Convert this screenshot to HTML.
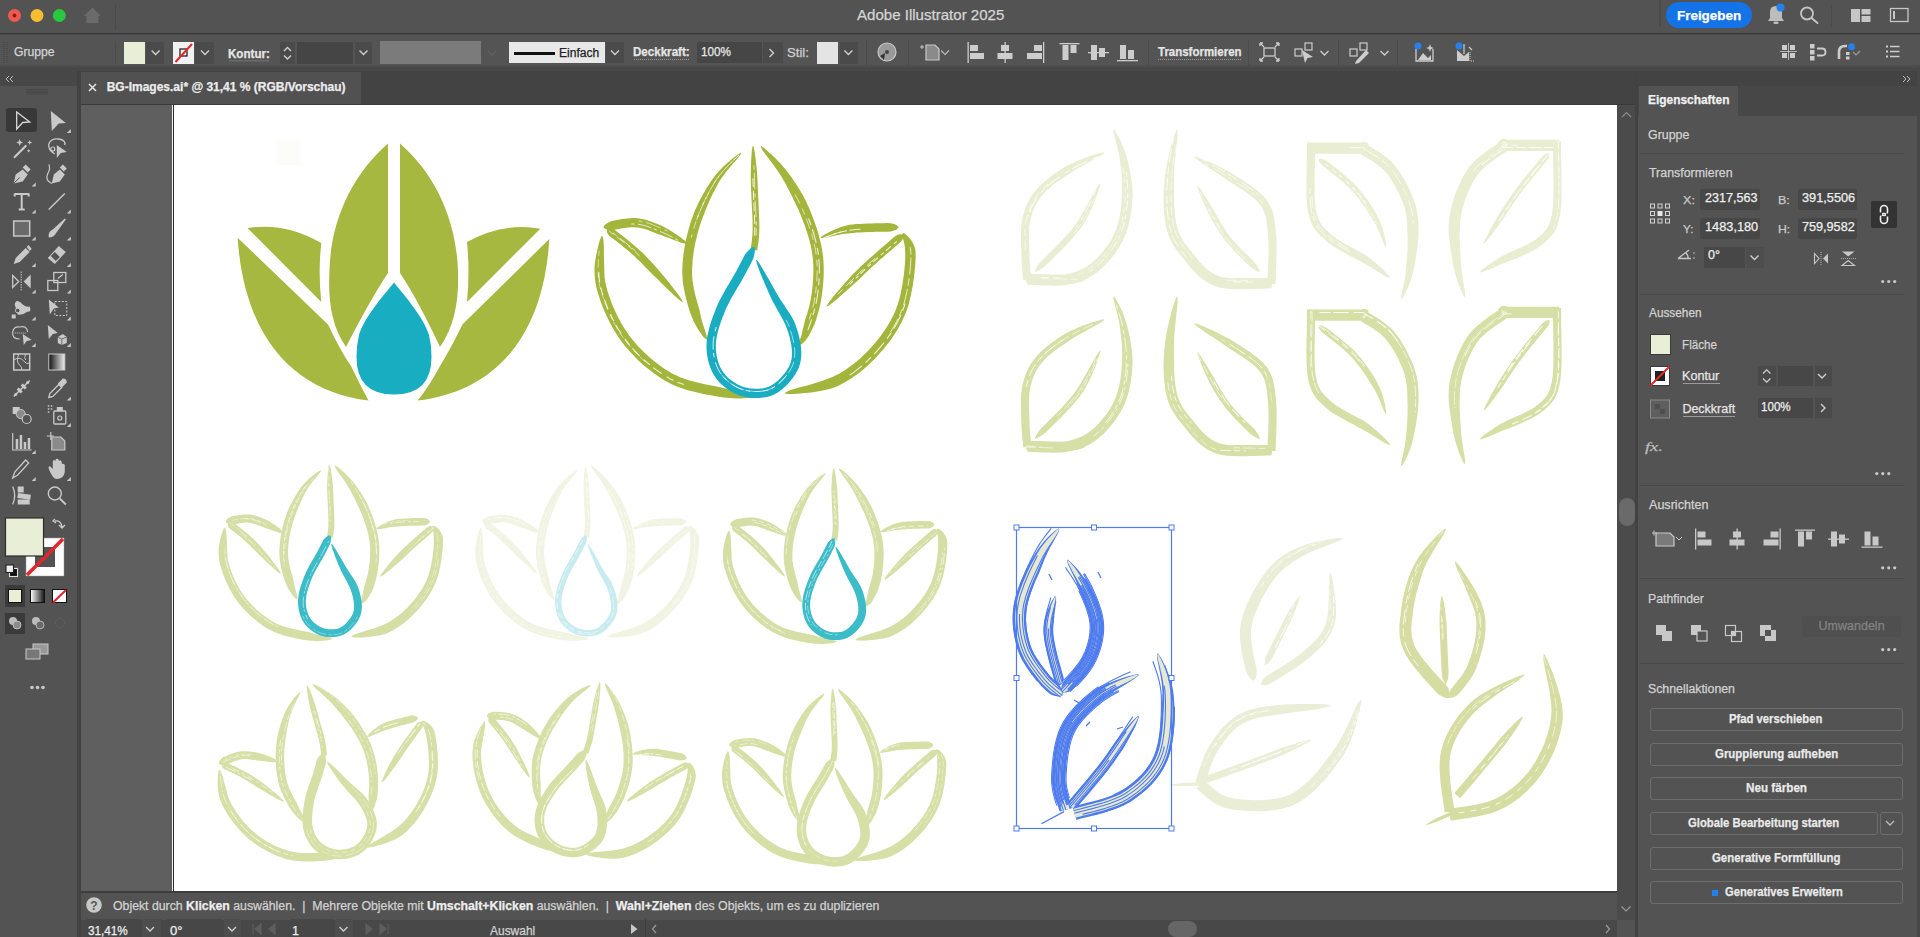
<!DOCTYPE html>
<html><head><meta charset="utf-8">
<style>
*{margin:0;padding:0;box-sizing:border-box}
html,body{width:1920px;height:937px;overflow:hidden;background:#535353;font-family:"Liberation Sans",sans-serif}
.a{position:absolute}
.t{position:absolute;white-space:nowrap}
.t b{font-weight:700;color:#eeeeee}
.t{-webkit-text-stroke:0.25px currentColor}
svg{position:absolute;left:0;top:0}
</style></head><body>
<div class="a" style="left:0px;top:0px;width:1920px;height:33px;background:#535353;"></div><div class="a" style="left:0px;top:33px;width:1920px;height:1px;background:#3a3a3a;"></div><div class="a" style="left:0px;top:34px;width:1920px;height:1px;background:#4a4a4a;"></div><div class="a" style="left:0px;top:35px;width:1920px;height:30px;background:#545454;"></div><div class="a" style="left:0px;top:65px;width:1920px;height:2px;background:#4d4d4d;"></div><div class="a" style="left:0px;top:67px;width:1920px;height:4px;background:#474747;"></div><div class="a" style="left:0px;top:71px;width:77px;height:866px;background:#535353;"></div><div class="a" style="left:0px;top:71px;width:77px;height:15px;background:#474747;"></div><div class="a" style="left:77px;top:71px;width:4px;height:866px;background:#424242;"></div><div class="a" style="left:81px;top:71px;width:1554px;height:34px;background:#434343;"></div><div class="a" style="left:81px;top:72px;width:280px;height:32px;background:#515151;"></div><div class="a" style="left:81px;top:104px;width:1554px;height:1px;background:#3a3a3a;"></div><div class="a" style="left:81px;top:105px;width:1536px;height:786px;background:#5f5f5f;"></div><div class="a" style="left:172px;top:105px;width:1px;height:786px;background:#f2f2f2;"></div><div class="a" style="left:173px;top:105px;width:1px;height:786px;background:#2e2e2e;"></div><div class="a" style="left:174px;top:105px;width:1443px;height:786px;background:#ffffff;"></div><div class="a" style="left:1617px;top:105px;width:18px;height:815px;background:#4b4b4b;"></div><div class="a" style="left:1617px;top:920px;width:18px;height:17px;background:#535353;"></div><div class="a" style="left:1635px;top:71px;width:3px;height:866px;background:#424242;"></div><div class="a" style="left:1638px;top:71px;width:282px;height:866px;background:#535353;"></div><div class="a" style="left:1638px;top:71px;width:282px;height:15px;background:#434343;"></div><div class="a" style="left:1638px;top:86px;width:282px;height:30px;background:#474747;"></div><div class="a" style="left:1639px;top:86px;width:99px;height:30px;background:#535353;"></div><div class="a" style="left:1917px;top:71px;width:3px;height:866px;background:#474747;"></div><div class="a" style="left:81px;top:891px;width:1536px;height:29px;background:#535353;"></div><div class="a" style="left:81px;top:891px;width:1536px;height:2px;background:#3e3e3e;"></div><div class="a" style="left:81px;top:920px;width:1536px;height:17px;background:#484848;"></div><div class="a" style="left:115px;top:4px;width:1px;height:26px;background:#4a4a4a;"></div><div class="a" style="left:1659px;top:0px;width:1.5px;height:27px;background:#4b4b4b;"></div><div class="a" style="left:1666px;top:2px;width:86px;height:26px;background:#1473e6;border-radius:13px"></div><div class="a" style="left:1831px;top:5px;width:1px;height:22px;background:#4a4a4a;"></div><div class="a" style="left:115px;top:42px;width:1px;height:22px;background:#4c4c4c;"></div><div class="a" style="left:124px;top:42px;width:21px;height:22px;background:#e9eed6;"></div><div class="a" style="left:146px;top:42px;width:18px;height:22px;background:#4a4a4a;"></div><div class="a" style="left:173px;top:42px;width:21px;height:22px;background:#f2f2f2;"></div><div class="a" style="left:195px;top:42px;width:19px;height:22px;background:#4a4a4a;"></div><div class="a" style="left:280px;top:42px;width:15px;height:22px;background:#4a4a4a;"></div><div class="a" style="left:297px;top:42px;width:56px;height:22px;background:#454545;"></div><div class="a" style="left:355px;top:42px;width:17px;height:22px;background:#4a4a4a;"></div><div class="a" style="left:380px;top:41px;width:101px;height:23px;background:#7b7b7b;"></div><div class="a" style="left:509px;top:42px;width:96px;height:21px;background:#e8e8e8;"></div><div class="a" style="left:514px;top:51.5px;width:41px;height:3px;background:#111111;"></div><div class="a" style="left:606px;top:42px;width:18px;height:21px;background:#4a4a4a;"></div><div class="a" style="left:697px;top:41.5px;width:65px;height:21.5px;background:#464646;"></div><div class="a" style="left:763px;top:41.5px;width:20px;height:21.5px;background:#4a4a4a;"></div><div class="a" style="left:816.5px;top:42px;width:21.5px;height:21.5px;background:#e4e4e4;"></div><div class="a" style="left:839.5px;top:42px;width:18px;height:21.5px;background:#4a4a4a;"></div><div class="a" style="left:866px;top:40px;width:1px;height:26px;background:#4a4a4a;"></div><div class="a" style="left:907.5px;top:40px;width:1px;height:26px;background:#4a4a4a;"></div><div class="a" style="left:1148px;top:40px;width:1px;height:26px;background:#4a4a4a;"></div><div class="a" style="left:1248px;top:40px;width:1px;height:26px;background:#4a4a4a;"></div><div class="a" style="left:1337.5px;top:40px;width:1px;height:26px;background:#4a4a4a;"></div><div class="a" style="left:1397px;top:40px;width:1px;height:26px;background:#4a4a4a;"></div><div class="a" style="left:6px;top:108px;width:31px;height:24px;background:#383838;border-radius:3px"></div><div class="a" style="left:5px;top:585px;width:20px;height:22px;background:#3a3a3a;"></div><div class="a" style="left:5px;top:613px;width:20px;height:21px;background:#3a3a3a;"></div><div class="a" style="left:1640px;top:152.5px;width:264px;height:1px;background:#484848;"></div><div class="a" style="left:1700px;top:189px;width:60px;height:20.5px;background:#474747;border-radius:2px"></div><div class="a" style="left:1798px;top:189px;width:59px;height:20.5px;background:#474747;border-radius:2px"></div><div class="a" style="left:1700px;top:217.5px;width:60px;height:21px;background:#474747;border-radius:2px"></div><div class="a" style="left:1798px;top:217.5px;width:59px;height:21px;background:#474747;border-radius:2px"></div><div class="a" style="left:1871px;top:201px;width:26px;height:27px;background:#333333;border-radius:2px"></div><div class="a" style="left:1703.5px;top:247px;width:41px;height:21px;background:#474747;"></div><div class="a" style="left:1745.5px;top:247px;width:18px;height:21px;background:#4d4d4d;"></div><div class="a" style="left:1640px;top:293.5px;width:264px;height:1px;background:#484848;"></div><div class="a" style="left:1650.5px;top:335px;width:19px;height:19px;background:#e9eed6;outline:1px solid #3a3a3a"></div><div class="a" style="left:1683.4px;top:383px;width:36.4px;height:1px;background:#9a9a9a;"></div><div class="a" style="left:1758px;top:366px;width:17.5px;height:20px;background:#4a4a4a;"></div><div class="a" style="left:1778px;top:366px;width:34.5px;height:20px;background:#474747;"></div><div class="a" style="left:1814.5px;top:366px;width:17.5px;height:20px;background:#4a4a4a;"></div><div class="a" style="left:1683.4px;top:415.5px;width:52.1px;height:1px;background:#9a9a9a;"></div><div class="a" style="left:1758px;top:398px;width:55px;height:20px;background:#474747;"></div><div class="a" style="left:1814.5px;top:398px;width:17.5px;height:20px;background:#4a4a4a;"></div><div class="a" style="left:1640px;top:485px;width:264px;height:1px;background:#484848;"></div><div class="a" style="left:1640px;top:577.5px;width:264px;height:1px;background:#484848;"></div><div class="a" style="left:1801.5px;top:615.5px;width:99px;height:21px;background:#4f4f4f;border-radius:3px"></div><div class="a" style="left:1640px;top:662.5px;width:264px;height:1px;background:#484848;"></div><div class="a" style="left:1649.5px;top:707.5px;width:253.5px;height:23.0px;background:transparent;border:1px solid #6e6e6e;border-radius:3px"></div><div class="a" style="left:1649.5px;top:742.5px;width:253.5px;height:23.0px;background:transparent;border:1px solid #6e6e6e;border-radius:3px"></div><div class="a" style="left:1649.5px;top:776.5px;width:253.5px;height:23.0px;background:transparent;border:1px solid #6e6e6e;border-radius:3px"></div><div class="a" style="left:1649.5px;top:811.5px;width:228.0px;height:23.0px;background:transparent;border:1px solid #6e6e6e;border-radius:3px"></div><div class="a" style="left:1879.5px;top:811.5px;width:23.5px;height:23.0px;background:transparent;border:1px solid #6e6e6e;border-radius:3px"></div><div class="a" style="left:1649.5px;top:846.5px;width:253.5px;height:23.0px;background:transparent;border:1px solid #6e6e6e;border-radius:3px"></div><div class="a" style="left:1649.5px;top:881px;width:253.5px;height:23px;background:transparent;border:1px solid #6e6e6e;border-radius:3px"></div><div class="a" style="left:1712.4px;top:889.5px;width:6px;height:6px;background:#2680eb;"></div><div class="a" style="left:1619px;top:498px;width:16px;height:28px;background:#6a6a6a;border-radius:8px"></div><div class="a" style="left:87px;top:919px;width:54px;height:18px;background:#474747;"></div><div class="a" style="left:141.5px;top:919px;width:19px;height:18px;background:#4d4d4d;"></div><div class="a" style="left:166.5px;top:919px;width:56.5px;height:18px;background:#474747;"></div><div class="a" style="left:223.5px;top:919px;width:17.5px;height:18px;background:#4d4d4d;"></div><div class="a" style="left:289.5px;top:919px;width:44.5px;height:18px;background:#474747;"></div><div class="a" style="left:334.5px;top:919px;width:18px;height:18px;background:#4d4d4d;"></div><div class="a" style="left:645px;top:918.5px;width:1px;height:19px;background:#3e3e3e;"></div><div class="a" style="left:1167.5px;top:921px;width:29px;height:16px;background:#666666;border-radius:8px"></div>
<svg width="1920" height="937" viewBox="0 0 1920 937">
<defs><clipPath id="abclip"><rect x="174" y="105" width="1443" height="786"/></clipPath></defs>
<g clip-path="url(#abclip)"><rect x="276" y="140" width="25" height="25" fill="#fcfdf8"/><path d="M388 143.5 L388 273 Q370 300 346 347 C331 325 328 300 329.5 270 C331 220 352 175 388 143.5 Z" fill="#a6b83f" /><path d="M400 143.5 L400 273 Q418 300 440 347 C455 325 459 300 458 270 C456 220 436 175 400 143.5 Z" fill="#a6b83f" /><path d="M247.5 228 Q285 222 321.3 243 Q318 272 321.3 302 Z" fill="#a6b83f" /><path d="M540.3 228.7 Q503 222 467 242 Q470 272 467 302 Z" fill="#a6b83f" /><path d="M237.6 237.7 L328 324.4 Q340 350 351 366 Q360 385 368.5 400.6 C300 392 245 345 237.6 237.7 Z" fill="#a6b83f" /><path d="M549.3 239 L462.6 324.3 Q450 350 440 366 Q430 385 417.7 400.6 C488 392 543 345 549.3 239 Z" fill="#a6b83f" /><path d="M394 282.5 C405 296 424 318 429 335 Q431.5 345 431.5 357 Q431.5 394.6 394 394.6 Q356.5 394.6 356.5 357 Q356.5 345 359 335 C364 318 383 296 394 282.5 Z" fill="#18adc1" /><path d="M740.8 152.8 L739.5 153.6 L737.9 154.6 L736.2 155.8 L734.4 157.3 L732.3 158.8 L730.2 160.6 L728.0 162.5 L725.7 164.5 L723.4 166.6 L721.1 168.9 L718.8 171.3 L716.7 173.7 L714.6 176.3 L712.6 178.9 L710.8 181.6 L709.0 184.4 L707.1 187.3 L705.3 190.4 L703.5 193.5 L701.7 196.8 L699.9 200.1 L698.2 203.4 L696.6 206.9 L695.0 210.3 L693.7 213.8 L692.4 217.3 L691.1 220.8 L690.0 224.3 L689.0 227.7 L688.1 231.2 L687.2 234.7 L686.3 238.3 L685.6 241.8 L684.9 245.4 L684.3 249.0 L683.7 252.6 L683.3 256.2 L682.9 259.7 L682.6 263.3 L682.4 266.7 L682.3 270.2 L682.3 273.6 L682.5 277.0 L682.7 280.4 L683.1 283.9 L683.7 287.2 L684.3 290.6 L685.0 293.9 L685.7 297.1 L686.5 300.2 L687.4 303.3 L688.2 306.3 L689.0 309.1 L689.8 311.8 L690.8 314.3 L691.7 316.7 L692.7 319.1 L693.7 321.4 L694.8 323.6 L695.9 325.6 L697.0 327.6 L698.2 329.5 L699.3 331.2 L700.4 332.8 L701.5 334.3 L702.5 335.7 L703.5 336.9 L704.5 337.9 L705.4 338.8 L706.3 339.4 L706.9 339.2 L707.0 338.0 L706.8 336.7 L706.5 335.3 L706.1 333.8 L705.6 332.2 L705.0 330.5 L704.4 328.7 L703.8 326.8 L703.2 324.9 L702.5 322.8 L701.9 320.7 L701.3 318.6 L700.8 316.4 L700.3 314.1 L699.8 311.6 L699.2 309.0 L698.4 306.3 L697.6 303.6 L696.8 300.7 L696.0 297.8 L695.2 294.8 L694.5 291.8 L693.9 288.7 L693.3 285.6 L692.8 282.5 L692.4 279.5 L692.2 276.4 L692.1 273.4 L692.1 270.3 L692.2 267.2 L692.4 263.9 L692.6 260.6 L693.0 257.3 L693.4 253.9 L693.9 250.6 L694.5 247.2 L695.1 243.8 L695.9 240.4 L696.7 237.0 L697.5 233.7 L698.4 230.4 L699.4 227.1 L700.4 223.9 L701.5 220.6 L702.8 217.3 L704.1 214.0 L705.4 210.6 L706.7 207.3 L708.1 203.9 L709.6 200.6 L711.0 197.4 L712.5 194.2 L714.1 191.2 L715.6 188.2 L717.1 185.4 L718.6 182.7 L720.1 180.2 L721.8 177.7 L723.6 175.2 L725.4 172.7 L727.4 170.3 L729.3 168.0 L731.2 165.7 L733.1 163.6 L734.9 161.5 L736.6 159.6 L738.1 157.8 L739.4 156.1 L740.5 154.6 L741.2 153.2Z" fill="#a3b53b"/><path d="M736.3 157.5 L733.1 160.6 L729.6 164.0 L725.9 167.9 L722.2 172.0 L718.7 176.3 L715.5 180.8 L712.6 185.5 L709.7 190.7 L706.8 196.2 L704.0 202.0 L701.3 207.9 L698.8 213.8 L696.6 219.8 L694.6 225.7 L692.9 231.6 L691.4 237.6" fill="none" stroke="#fff" stroke-width="0.71" stroke-dasharray="8.3 5.8 7.1 4.1" opacity="0.85"/><path d="M739.0 155.0 L736.3 157.6 L733.2 160.7 L729.6 164.1 L725.9 167.9 L722.2 172.0 L718.8 176.3 L715.6 180.8 L712.7 185.6 L709.8 190.8 L706.9 196.3 L704.1 202.0 L701.4 207.9 L698.9 213.9 L696.7 219.8" fill="none" stroke="#fff" stroke-width="0.87" stroke-dasharray="6.9 3.1 9.4 5.0" opacity="0.85"/><path d="M760.8 146.6 L761.4 148.1 L762.3 149.7 L763.5 151.4 L764.9 153.4 L766.4 155.4 L768.0 157.6 L769.7 159.9 L771.5 162.3 L773.3 164.7 L775.1 167.2 L776.9 169.7 L778.6 172.2 L780.2 174.7 L781.7 177.1 L783.1 179.6 L784.6 182.1 L786.0 184.8 L787.5 187.4 L788.9 190.2 L790.4 193.0 L791.8 195.8 L793.2 198.7 L794.5 201.5 L795.9 204.4 L797.3 207.2 L798.6 210.0 L799.8 212.9 L801.0 215.7 L802.1 218.5 L803.2 221.4 L804.3 224.2 L805.3 227.1 L806.3 230.1 L807.3 233.0 L808.2 235.9 L809.0 238.8 L809.8 241.8 L810.5 244.7 L811.1 247.6 L811.7 250.5 L812.2 253.4 L812.6 256.2 L812.9 259.1 L813.1 262.0 L813.3 264.9 L813.4 267.8 L813.4 270.8 L813.3 273.7 L813.2 276.7 L813.1 279.6 L812.8 282.6 L812.6 285.5 L812.3 288.3 L811.9 291.2 L811.6 294.0 L811.2 296.7 L810.7 299.4 L810.2 302.1 L809.6 304.8 L808.9 307.5 L808.1 310.3 L807.3 313.0 L806.5 315.7 L805.6 318.3 L804.8 320.9 L804.3 323.4 L803.7 325.8 L803.2 328.0 L802.7 330.1 L802.2 331.9 L801.9 333.5 L801.5 334.9 L801.1 336.2 L800.7 337.4 L800.3 338.4 L800.0 339.3 L799.6 340.2 L799.3 341.0 L798.9 341.7 L798.6 342.4 L798.4 343.1 L798.1 343.7 L798.0 344.4 L798.1 345.1 L798.5 345.5 L799.2 345.3 L799.8 345.1 L800.4 344.8 L801.0 344.5 L801.7 344.0 L802.4 343.5 L803.2 342.9 L804.0 342.1 L804.8 341.3 L805.7 340.3 L806.6 339.1 L807.5 337.8 L808.5 336.3 L809.4 334.7 L810.3 332.9 L811.3 331.0 L812.3 328.9 L813.4 326.6 L814.6 324.2 L815.5 321.6 L816.4 318.8 L817.2 316.0 L818.1 313.1 L818.9 310.2 L819.6 307.2 L820.3 304.2 L820.9 301.2 L821.4 298.3 L821.8 295.4 L822.2 292.5 L822.6 289.5 L822.9 286.5 L823.2 283.4 L823.4 280.3 L823.6 277.2 L823.7 274.0 L823.7 270.8 L823.7 267.7 L823.6 264.5 L823.5 261.3 L823.2 258.1 L822.8 255.0 L822.4 251.8 L821.9 248.7 L821.3 245.5 L820.6 242.4 L819.8 239.2 L819.0 236.1 L818.1 233.0 L817.2 229.9 L816.2 226.8 L815.1 223.7 L814.1 220.7 L812.9 217.7 L811.8 214.7 L810.6 211.7 L809.4 208.8 L808.0 205.8 L806.7 202.8 L805.2 199.8 L803.7 196.8 L802.1 194.0 L800.4 191.1 L798.7 188.3 L797.0 185.5 L795.2 182.8 L793.4 180.2 L791.7 177.6 L789.9 175.1 L788.1 172.7 L786.3 170.3 L784.3 167.9 L782.2 165.5 L780.1 163.1 L777.9 160.9 L775.7 158.6 L773.6 156.5 L771.4 154.5 L769.4 152.7 L767.5 151.0 L765.7 149.4 L764.1 148.1 L762.6 147.0 L761.2 146.2Z" fill="#a3b53b"/><path d="M794.9 194.1 L797.5 199.1 L800.0 204.1 L802.4 209.2 L804.5 214.2 L806.5 219.3 L808.4 224.4 L810.2 229.6 L811.8 234.8 L813.3 240.1 L814.5 245.3 L815.6 250.6 L816.3 255.8 L816.8 261.0 L817.1 266.3 L817.2 271.6 L817.0 276.9 L816.7 282.1 L816.2 287.3 L815.6 292.4 L814.9 297.3 L814.1 302.2 L812.9 307.1 L811.6 312.0 L810.1 316.9 L808.6 321.4" fill="none" stroke="#fff" stroke-width="0.76" stroke-dasharray="10.8 5.3 6.8 3.9" opacity="0.85"/><path d="M808.6 218.5 L810.5 223.7 L812.3 228.9 L813.9 234.2 L815.4 239.6 L816.6 244.9 L817.7 250.2 L818.5 255.5 L819.0 260.8 L819.3 266.2 L819.3 271.6 L819.2 277.0 L818.9 282.3 L818.4 287.5 L817.8 292.7 L817.1 297.6 L816.2 302.6 L815.0 307.6 L813.7 312.6 L812.2 317.5 L810.7 322.1 L809.2 326.4 L807.8 330.3" fill="none" stroke="#fff" stroke-width="1.03" stroke-dasharray="7.0 4.4 14.4 4.8" opacity="0.85"/><path d="M752.7 146.0 L752.3 147.8 L751.9 150.0 L751.7 152.6 L751.5 155.5 L751.3 158.7 L751.1 162.0 L751.0 165.6 L750.9 169.2 L750.8 172.8 L750.7 176.5 L750.8 180.1 L750.9 183.5 L751.0 186.8 L751.1 189.9 L751.3 192.9 L751.4 195.9 L751.5 198.9 L751.7 201.9 L751.8 204.9 L752.0 207.9 L752.1 210.8 L752.3 213.7 L752.4 216.4 L752.5 219.1 L752.6 221.7 L752.6 224.2 L752.6 226.5 L752.6 228.7 L752.6 230.7 L752.5 232.7 L752.4 234.6 L752.3 236.4 L752.1 238.2 L751.9 239.8 L751.8 241.4 L751.6 242.8 L751.4 244.2 L751.2 245.5 L751.0 246.7 L750.9 247.8 L750.8 248.8 L750.7 249.6 L757.3 250.4 L757.4 249.6 L757.5 248.7 L757.7 247.6 L757.8 246.5 L758.0 245.1 L758.2 243.7 L758.4 242.2 L758.6 240.5 L758.8 238.8 L759.0 237.0 L759.1 235.0 L759.2 233.0 L759.3 230.9 L759.4 228.7 L759.4 226.5 L759.3 224.0 L759.3 221.5 L759.2 218.9 L759.1 216.2 L759.0 213.4 L758.8 210.5 L758.7 207.6 L758.5 204.6 L758.4 201.6 L758.2 198.6 L758.1 195.6 L758.0 192.6 L757.9 189.7 L757.7 186.6 L757.6 183.3 L757.5 179.8 L757.3 176.3 L757.0 172.6 L756.7 169.0 L756.3 165.4 L755.9 161.9 L755.6 158.5 L755.2 155.4 L754.8 152.5 L754.3 150.0 L753.9 147.8 L753.3 146.0Z" fill="#a3b53b"/><path d="M752.9 178.2 L753.1 184.3 L753.3 189.8 L753.5 195.1 L753.7 200.3 L754.0 205.6 L754.2 210.7 L754.5 215.7 L754.6 220.4 L754.8 224.7 L754.8 228.7 L754.7 232.3 L754.5 235.7 L754.2 238.8" fill="none" stroke="#fff" stroke-width="1.01" stroke-dasharray="8.8 3.6 9.3 2.6" opacity="0.85"/><path d="M753.9 165.5 L754.2 171.8 L754.4 178.2 L754.6 184.3 L754.8 189.8 L755.0 195.0 L755.2 200.3 L755.5 205.5 L755.8 210.6 L756.0 215.6 L756.2 220.3 L756.3 224.7 L756.3 228.7 L756.2 232.4 L756.0 235.8" fill="none" stroke="#fff" stroke-width="0.80" stroke-dasharray="4.3 2.9 16.5 4.2" opacity="0.85"/><path d="M603.5 227.5 L605.1 228.7 L606.9 229.3 L608.9 229.6 L611.2 229.9 L613.6 229.9 L616.0 229.5 L618.5 229.0 L621.1 228.6 L623.6 228.1 L626.1 227.8 L628.6 227.5 L630.8 227.3 L632.9 227.2 L634.8 227.3 L636.5 227.4 L638.3 227.6 L639.9 227.9 L641.5 228.2 L643.1 228.6 L644.7 229.1 L646.3 229.6 L647.9 230.1 L649.5 230.7 L651.2 231.4 L652.9 232.0 L654.6 232.8 L656.4 233.5 L658.3 234.2 L660.2 234.8 L662.3 235.5 L664.5 236.4 L666.7 237.2 L669.1 238.1 L671.4 239.0 L673.8 239.9 L676.1 240.8 L678.3 241.6 L680.4 242.4 L682.3 243.0 L684.1 243.5 L685.7 243.8 L687.1 243.9 L687.3 243.3 L686.5 242.2 L685.4 241.1 L684.0 239.9 L682.3 238.7 L680.5 237.3 L678.6 236.0 L676.6 234.6 L674.4 233.2 L672.3 231.8 L670.1 230.4 L667.9 229.1 L665.8 227.9 L663.7 226.8 L661.7 225.8 L659.9 225.0 L658.1 224.3 L656.3 223.6 L654.6 222.9 L652.8 222.2 L651.0 221.5 L649.2 220.9 L647.4 220.3 L645.5 219.8 L643.6 219.3 L641.6 218.9 L639.5 218.5 L637.4 218.3 L635.2 218.1 L632.8 218.1 L630.3 218.2 L627.7 218.4 L625.0 218.7 L622.3 219.1 L619.6 219.5 L616.9 220.0 L614.3 220.5 L611.8 221.0 L609.6 221.9 L607.6 223.0 L605.9 224.1 L604.5 225.3 L603.5 226.9Z" fill="#a3b53b"/><path d="M631.2 224.0 L635.0 224.0 L638.3 224.3 L641.4 224.8 L644.4 225.5 L647.4 226.4 L650.3 227.5 L653.3 228.6 L656.3 229.9 L659.5 231.2 L663.0 232.7 L666.7 234.4 L670.7 236.4 L674.6 238.4 L678.3 240.4" fill="none" stroke="#fff" stroke-width="0.89" stroke-dasharray="3.3 3.3 14.1 2.7" opacity="0.85"/><path d="M638.7 220.9 L642.1 221.5 L645.3 222.3 L648.4 223.2 L651.5 224.3 L654.5 225.5 L657.6 226.8 L660.8 228.1 L664.3 229.6 L668.2 231.4" fill="none" stroke="#fff" stroke-width="0.66" stroke-dasharray="3.6 3.8 16.0 3.7" opacity="0.85"/><path d="M606.8 229.2 L606.9 231.8 L607.9 233.9 L609.3 235.8 L611.3 237.4 L613.5 239.0 L615.9 240.8 L618.4 242.8 L621.0 244.8 L623.6 246.9 L626.4 249.2 L629.1 251.5 L631.9 253.9 L634.6 256.3 L637.2 258.9 L640.0 261.6 L643.1 264.7 L646.4 268.2 L649.9 271.7 L653.6 275.4 L657.4 279.1 L661.1 282.8 L664.8 286.4 L668.4 289.9 L671.7 293.1 L674.9 296.0 L677.7 298.6 L680.3 300.7 L682.5 302.2 L682.9 301.8 L681.6 299.5 L679.8 296.7 L677.5 293.6 L674.9 290.2 L672.0 286.5 L669.0 282.6 L665.7 278.6 L662.3 274.5 L658.9 270.5 L655.5 266.5 L652.2 262.7 L648.8 259.2 L645.7 256.0 L642.8 253.1 L640.0 250.5 L637.1 247.9 L634.3 245.5 L631.4 243.1 L628.6 240.8 L625.9 238.6 L623.3 236.5 L620.7 234.5 L618.4 232.7 L616.1 231.0 L614.1 229.5 L611.9 228.6 L609.7 228.3 L607.2 228.8Z" fill="#a3b53b"/><path d="M609.3 231.2 L612.5 233.6 L616.4 236.5 L620.7 239.8 L625.3 243.5 L630.1 247.5 L635.0 251.7 L639.8 256.2" fill="none" stroke="#fff" stroke-width="0.81" stroke-dasharray="5.4 3.9 9.9 4.6" opacity="0.85"/><path d="M613.0 233.0 L616.9 235.9 L621.2 239.2 L625.8 242.9 L630.7 246.9 L635.6 251.1" fill="none" stroke="#fff" stroke-width="0.80" stroke-dasharray="4.6 4.1 13.4 2.3" opacity="0.85"/><path d="M601.7 236.0 L600.7 237.9 L599.8 240.3 L599.0 243.0 L598.2 246.1 L597.4 249.5 L596.6 253.2 L595.9 257.1 L595.2 261.1 L594.7 265.3 L594.5 269.6 L594.6 273.9 L594.9 278.2 L595.5 282.5 L596.2 286.6 L597.2 290.5 L598.4 294.5 L599.7 298.6 L601.1 302.7 L602.7 306.8 L604.4 311.0 L606.2 315.1 L608.2 319.2 L610.2 323.3 L612.4 327.3 L614.7 331.2 L617.1 335.0 L619.5 338.7 L622.1 342.2 L624.8 345.7 L627.6 349.0 L630.5 352.3 L633.6 355.6 L636.7 358.8 L640.0 361.9 L643.3 364.9 L646.8 367.8 L650.3 370.6 L653.8 373.2 L657.4 375.8 L661.0 378.2 L664.7 380.4 L668.4 382.5 L672.2 384.4 L676.3 386.2 L680.4 387.8 L684.6 389.2 L688.8 390.4 L693.1 391.6 L697.3 392.6 L701.5 393.5 L705.6 394.4 L709.6 395.1 L713.4 395.8 L717.0 396.5 L720.5 397.0 L723.7 397.4 L726.9 397.8 L730.1 398.1 L733.2 398.3 L736.1 398.4 L739.0 398.4 L741.7 398.4 L744.3 398.3 L746.7 398.1 L749.0 397.9 L751.0 397.7 L752.9 397.4 L754.7 397.1 L756.2 396.8 L757.5 396.3 L757.5 395.7 L756.3 395.0 L754.8 394.5 L753.1 394.1 L751.2 393.7 L749.1 393.4 L746.9 393.0 L744.6 392.6 L742.1 392.2 L739.5 391.7 L736.9 391.2 L734.1 390.7 L731.3 390.1 L728.4 389.4 L725.5 388.6 L722.3 387.7 L718.8 386.9 L715.2 386.2 L711.4 385.5 L707.5 384.8 L703.5 384.0 L699.5 383.1 L695.5 382.1 L691.5 381.1 L687.5 379.9 L683.7 378.6 L679.9 377.2 L676.4 375.6 L673.0 373.9 L669.7 372.0 L666.3 369.9 L662.9 367.7 L659.6 365.3 L656.2 362.8 L653.0 360.2 L649.7 357.5 L646.6 354.7 L643.5 351.8 L640.6 348.8 L637.7 345.8 L635.0 342.7 L632.4 339.5 L629.9 336.4 L627.6 333.1 L625.3 329.7 L623.0 326.2 L620.9 322.5 L618.9 318.7 L616.9 314.9 L615.1 311.0 L613.3 307.1 L611.7 303.2 L610.3 299.3 L608.9 295.5 L607.7 291.7 L606.7 288.0 L605.8 284.4 L605.1 281.0 L604.6 277.3 L604.4 273.5 L604.3 269.6 L604.2 265.6 L604.1 261.6 L604.0 257.7 L603.9 253.9 L603.9 250.2 L603.8 246.7 L603.7 243.5 L603.5 240.6 L603.1 238.1 L602.3 236.0Z" fill="#a3b53b"/><path d="M599.2 250.6 L598.6 257.3 L598.2 264.4 L598.1 271.7 L598.6 278.9 L599.7 285.8 L601.5 292.5 L603.7 299.4 L606.4 306.5 L609.4 313.6 L612.9 320.6 L616.6 327.5 L620.6 334.0 L624.9 340.1 L629.6 345.9 L634.6 351.6 L640.0 357.0 L645.7 362.2" fill="none" stroke="#fff" stroke-width="0.62" stroke-dasharray="5.3 3.2 8.7 4.7" opacity="0.85"/><path d="M598.7 271.7 L599.2 278.9 L600.3 285.7 L602.0 292.3 L604.3 299.2 L606.9 306.3 L610.0 313.4 L613.4 320.4 L617.1 327.2 L621.1 333.7 L625.4 339.7 L630.0 345.5 L635.0 351.1 L640.4 356.6 L646.1 361.7 L651.9 366.6 L658.0 371.1 L664.1 375.2 L670.4 378.9 L676.9 382.0 L683.8 384.6" fill="none" stroke="#fff" stroke-width="1.08" stroke-dasharray="10.3 5.8 7.8 4.5" opacity="0.85"/><path d="M820.8 238.0 L822.1 238.1 L823.6 238.0 L825.2 237.7 L827.0 237.4 L829.0 237.0 L831.0 236.5 L833.2 236.0 L835.5 235.5 L837.8 235.0 L840.3 234.5 L842.8 234.1 L845.3 233.7 L847.9 233.4 L850.6 233.2 L853.4 232.9 L856.7 232.6 L860.2 232.4 L864.1 232.2 L868.0 232.0 L872.1 231.9 L876.2 231.8 L880.2 231.8 L884.0 231.7 L887.7 231.7 L891.0 231.5 L894.0 230.5 L896.5 229.4 L898.5 227.5 L898.5 226.9 L896.4 225.1 L893.9 224.1 L890.9 223.2 L887.6 223.1 L883.9 223.2 L880.0 223.2 L876.0 223.3 L871.9 223.4 L867.7 223.5 L863.7 223.7 L859.8 223.9 L856.0 224.1 L852.6 224.4 L849.4 224.8 L846.6 225.5 L843.8 226.2 L841.1 227.1 L838.5 228.0 L836.0 228.9 L833.7 229.9 L831.4 230.9 L829.4 231.9 L827.5 232.9 L825.7 233.9 L824.1 234.8 L822.8 235.7 L821.6 236.5 L820.6 237.4Z" fill="#a3b53b"/><path d="M825.9 237.1 L829.1 235.9 L832.7 234.6 L836.7 233.3 L840.9 232.0 L845.5 231.0 L850.2 230.2 L855.6 229.6 L862.0 229.2" fill="none" stroke="#fff" stroke-width="1.03" stroke-dasharray="11.1 2.6 8.4 2.4" opacity="0.85"/><path d="M823.2 238.0 L825.9 237.0 L829.1 235.8 L832.7 234.5 L836.6 233.2 L840.9 231.9" fill="none" stroke="#fff" stroke-width="0.96" stroke-dasharray="5.9 5.2 7.6 3.7" opacity="0.85"/><path d="M902.7 233.3 L902.3 234.5 L902.4 235.8 L902.6 237.0 L902.9 238.4 L903.3 239.7 L903.7 241.1 L904.1 242.6 L904.4 244.2 L904.7 245.8 L904.9 247.5 L905.0 249.3 L905.1 251.2 L905.3 253.3 L905.3 255.6 L905.2 258.3 L905.1 261.4 L904.8 264.9 L904.5 268.5 L904.1 272.4 L903.6 276.4 L903.0 280.5 L902.4 284.7 L901.6 288.8 L900.8 292.9 L899.9 296.9 L898.9 300.7 L897.8 304.3 L896.6 307.6 L895.4 310.8 L894.0 314.0 L892.5 317.1 L890.9 320.1 L889.2 323.1 L887.4 326.1 L885.6 329.0 L883.7 331.8 L881.7 334.6 L879.6 337.4 L877.5 340.1 L875.3 342.7 L873.0 345.3 L870.8 347.8 L868.5 350.3 L866.1 352.7 L863.7 355.1 L861.2 357.4 L858.7 359.7 L856.1 361.9 L853.4 364.0 L850.7 366.1 L848.0 368.1 L845.2 370.0 L842.4 371.8 L839.5 373.4 L836.5 375.0 L833.5 376.5 L830.4 377.8 L827.0 379.1 L823.3 380.5 L819.4 381.8 L815.4 383.1 L811.3 384.3 L807.2 385.4 L803.1 386.5 L799.3 387.6 L795.6 388.6 L792.3 389.6 L789.3 390.6 L786.8 391.7 L784.8 392.9 L785.0 393.5 L787.2 393.9 L789.9 393.9 L793.0 393.9 L796.5 393.7 L800.3 393.5 L804.3 393.1 L808.6 392.7 L812.9 392.2 L817.3 391.5 L821.7 390.7 L826.0 389.8 L830.2 388.8 L834.2 387.5 L837.9 385.9 L841.2 384.3 L844.5 382.5 L847.7 380.6 L850.9 378.7 L853.9 376.6 L856.9 374.4 L859.9 372.2 L862.7 369.9 L865.5 367.5 L868.2 365.1 L870.9 362.6 L873.5 360.0 L876.0 357.4 L878.4 354.8 L880.8 352.1 L883.2 349.4 L885.5 346.6 L887.8 343.7 L890.0 340.8 L892.2 337.8 L894.2 334.7 L896.3 331.6 L898.2 328.3 L900.0 325.1 L901.8 321.7 L903.4 318.3 L904.9 314.8 L906.4 311.2 L907.7 307.4 L908.9 303.5 L909.9 299.3 L910.9 295.1 L911.8 290.8 L912.6 286.4 L913.3 282.0 L913.9 277.8 L914.4 273.6 L914.8 269.5 L915.2 265.7 L915.4 262.1 L915.6 258.7 L915.7 255.6 L915.6 252.7 L915.4 249.9 L914.7 247.3 L913.8 245.0 L912.8 242.9 L911.7 241.1 L910.6 239.4 L909.4 238.0 L908.3 236.8 L907.2 235.7 L906.2 234.9 L905.3 234.1 L904.4 233.5 L903.3 233.1Z" fill="#a3b53b"/><path d="M905.1 303.5 L903.0 309.9 L900.5 315.9 L897.7 321.7 L894.6 327.3 L891.2 332.7 L887.6 337.9 L883.8 342.9 L879.9 347.7 L875.8 352.4 L871.5 356.8 L867.1 361.2 L862.4 365.4 L857.6 369.4 L852.6 373.1 L847.4 376.6" fill="none" stroke="#fff" stroke-width="1.09" stroke-dasharray="7.3 5.0 15.3 4.7" opacity="0.85"/><path d="M910.1 247.1 L910.8 251.1 L911.0 255.6 L910.8 260.9 L910.4 267.2 L909.7 274.1 L908.7 281.4 L907.4 288.8 L905.9 296.2 L904.1 303.2 L902.0 309.6 L899.6 315.5 L896.8 321.2 L893.7 326.8 L890.4 332.1" fill="none" stroke="#fff" stroke-width="0.90" stroke-dasharray="7.6 3.0 16.8 4.0" opacity="0.85"/><path d="M902.8 234.5 L899.8 234.2 L897.2 234.9 L894.8 236.5 L892.3 238.6 L889.7 240.9 L886.8 243.4 L883.8 245.9 L880.7 248.6 L877.5 251.4 L874.4 254.2 L871.2 257.0 L868.1 259.7 L865.1 262.5 L862.3 265.1 L859.4 267.8 L856.4 270.7 L853.3 273.8 L850.3 277.1 L847.3 280.4 L844.3 283.8 L841.3 287.2 L838.5 290.5 L835.8 293.6 L833.4 296.6 L831.1 299.4 L829.2 301.9 L827.6 304.2 L826.5 306.2 L826.9 306.6 L828.9 305.5 L831.1 303.8 L833.6 301.8 L836.4 299.5 L839.3 297.0 L842.4 294.3 L845.6 291.4 L848.9 288.4 L852.3 285.4 L855.6 282.4 L858.9 279.4 L862.0 276.4 L864.9 273.5 L867.7 270.9 L870.5 268.3 L873.4 265.6 L876.5 262.9 L879.6 260.1 L882.8 257.4 L885.9 254.6 L889.0 252.0 L892.0 249.4 L894.8 246.9 L897.5 244.7 L900.0 242.6 L902.0 240.5 L903.1 237.9 L903.2 234.9Z" fill="#a3b53b"/><path d="M896.8 241.3 L892.2 245.3 L887.1 249.7 L881.6 254.4 L876.1 259.3 L870.7 264.1 L865.7 268.7 L860.7 273.6 L855.3 278.9 L849.7 284.4" fill="none" stroke="#fff" stroke-width="1.07" stroke-dasharray="3.8 3.9 6.8 2.7" opacity="0.85"/><path d="M875.1 258.2 L869.7 263.0 L864.7 267.7 L859.7 272.5 L854.2 277.8 L848.7 283.4 L843.2 289.0 L837.9 294.3" fill="none" stroke="#fff" stroke-width="0.86" stroke-dasharray="11.0 5.0 9.6 3.4" opacity="0.85"/><path d="M753.7 246.9 L752.1 247.3 L750.8 248.2 L749.5 249.4 L748.2 250.7 L746.8 252.2 L745.4 253.8 L744.3 255.7 L743.3 257.8 L742.2 259.9 L741.1 262.1 L739.9 264.3 L738.7 266.5 L737.6 268.7 L736.4 270.9 L735.2 273.1 L733.9 275.3 L732.5 277.7 L731.1 280.2 L729.6 282.7 L728.1 285.2 L726.5 287.8 L725.0 290.5 L723.5 293.2 L722.0 295.9 L720.6 298.6 L719.2 301.3 L717.9 304.0 L716.8 306.6 L715.7 309.3 L714.7 311.9 L713.7 314.5 L712.7 317.2 L711.7 319.8 L710.9 322.5 L710.0 325.2 L709.3 327.9 L708.6 330.5 L708.0 333.2 L707.4 335.8 L707.0 338.5 L706.7 341.1 L706.6 343.6 L706.5 346.1 L706.5 348.6 L706.7 351.1 L706.9 353.6 L707.3 356.0 L707.7 358.4 L708.2 360.8 L708.8 363.1 L709.5 365.3 L710.3 367.6 L711.2 369.7 L712.1 371.8 L713.2 373.8 L714.3 375.8 L715.6 377.6 L717.0 379.5 L718.5 381.2 L720.0 382.9 L721.7 384.5 L723.4 386.1 L725.3 387.5 L727.1 388.9 L729.0 390.2 L730.9 391.4 L732.9 392.5 L734.9 393.5 L736.9 394.4 L738.9 395.2 L741.0 395.9 L743.1 396.5 L745.3 397.0 L747.6 397.4 L749.8 397.7 L752.1 397.9 L754.4 398.0 L756.7 398.1 L759.0 398.0 L761.2 397.8 L763.4 397.6 L765.6 397.3 L767.7 396.8 L769.7 396.3 L771.7 395.6 L773.7 394.7 L775.6 393.7 L777.4 392.7 L779.2 391.5 L780.8 390.2 L782.5 388.9 L784.0 387.6 L785.5 386.2 L787.0 384.8 L788.3 383.4 L789.6 381.9 L790.8 380.5 L791.9 379.1 L793.0 377.7 L794.0 376.3 L795.0 374.8 L795.9 373.4 L796.7 371.8 L797.5 370.3 L798.3 368.7 L799.0 367.0 L799.6 365.3 L800.1 363.5 L800.5 361.7 L800.8 359.8 L801.1 357.9 L801.3 355.9 L801.3 353.9 L801.3 351.7 L801.2 349.6 L801.0 347.4 L800.7 345.1 L800.4 342.9 L799.9 340.6 L799.5 338.3 L798.9 336.0 L798.3 333.6 L797.7 331.3 L796.9 329.0 L796.2 326.8 L795.4 324.5 L794.5 322.3 L793.5 320.0 L792.3 317.9 L791.1 315.8 L789.8 313.7 L788.5 311.7 L787.2 309.7 L785.8 307.7 L784.4 305.6 L783.1 303.6 L781.7 301.5 L780.3 299.4 L779.0 297.3 L777.6 295.1 L776.2 292.7 L774.8 290.0 L773.2 287.2 L771.5 284.3 L769.9 281.3 L768.2 278.3 L766.5 275.4 L764.8 272.5 L763.2 269.7 L761.7 267.2 L760.2 264.8 L758.9 262.7 L757.6 261.0 L756.5 259.7 L756.0 259.9 L756.3 261.6 L756.9 263.7 L757.7 266.0 L758.7 268.6 L759.7 271.4 L760.9 274.4 L762.1 277.5 L763.5 280.6 L764.8 283.8 L766.2 287.0 L767.5 290.1 L768.8 293.0 L770.1 295.8 L771.3 298.4 L772.5 300.9 L773.7 303.3 L775.0 305.6 L776.2 307.8 L777.5 310.0 L778.7 312.1 L779.9 314.2 L781.0 316.2 L782.1 318.2 L783.2 320.2 L784.1 322.1 L785.0 324.1 L785.9 325.9 L786.7 327.9 L787.4 329.9 L788.1 331.9 L788.7 334.0 L789.3 336.1 L789.9 338.2 L790.3 340.3 L790.8 342.4 L791.2 344.4 L791.5 346.4 L791.7 348.4 L791.9 350.3 L792.0 352.1 L792.0 353.8 L791.9 355.4 L791.8 356.9 L791.6 358.4 L791.4 359.8 L791.0 361.1 L790.7 362.4 L790.2 363.7 L789.7 365.0 L789.2 366.2 L788.5 367.4 L787.9 368.6 L787.1 369.8 L786.3 371.0 L785.5 372.2 L784.5 373.4 L783.6 374.6 L782.5 375.8 L781.4 377.0 L780.3 378.3 L779.1 379.5 L777.8 380.7 L776.5 381.8 L775.2 382.8 L773.8 383.8 L772.4 384.7 L771.1 385.6 L769.7 386.3 L768.3 386.9 L766.9 387.3 L765.5 387.7 L763.9 388.1 L762.2 388.4 L760.4 388.6 L758.5 388.7 L756.6 388.7 L754.7 388.7 L752.8 388.6 L750.9 388.4 L749.0 388.2 L747.2 387.8 L745.4 387.4 L743.7 387.0 L742.1 386.4 L740.5 385.8 L738.9 385.1 L737.3 384.2 L735.7 383.3 L734.1 382.3 L732.5 381.3 L731.0 380.1 L729.5 378.9 L728.0 377.7 L726.7 376.4 L725.4 375.0 L724.3 373.6 L723.2 372.2 L722.2 370.8 L721.4 369.3 L720.5 367.7 L719.7 366.0 L719.0 364.2 L718.4 362.4 L717.8 360.5 L717.3 358.6 L716.8 356.6 L716.5 354.5 L716.2 352.5 L716.0 350.4 L715.9 348.3 L715.8 346.2 L715.9 344.0 L716.0 341.9 L716.3 339.7 L716.6 337.4 L717.1 335.1 L717.6 332.7 L718.3 330.3 L719.0 327.8 L719.7 325.4 L720.6 322.8 L721.5 320.3 L722.4 317.8 L723.4 315.3 L724.4 312.7 L725.4 310.3 L726.4 307.8 L727.6 305.4 L728.9 302.9 L730.2 300.3 L731.6 297.7 L733.1 295.1 L734.6 292.6 L736.1 290.0 L737.6 287.4 L739.1 284.9 L740.6 282.4 L742.0 280.0 L743.4 277.6 L744.6 275.3 L745.8 273.1 L747.0 270.8 L748.2 268.6 L749.3 266.4 L750.5 264.2 L751.6 262.0 L752.6 260.0 L753.5 257.9 L754.0 255.9 L754.4 253.9 L754.7 252.0 L754.9 250.3 L754.9 248.8 L754.3 247.1Z" fill="#1aadc2"/><path d="M716.3 327.0 L715.1 331.5 L714.1 335.8 L713.4 339.9 L713.1 343.9 L713.1 347.8 L713.3 351.7 L713.8 355.5 L714.6 359.2 L715.6 362.8 L716.8 366.2 L718.2 369.4 L719.9 372.3 L721.8 375.0 L724.0 377.6 L726.5 380.1 L729.3 382.3 L732.1 384.4 L735.1 386.2 L738.2 387.8 L741.2 389.0 L744.3 390.0 L747.6 390.8 L751.1 391.3 L754.6 391.5 L758.2 391.5 L761.6 391.2 L764.8 390.7 L767.8 390.0 L770.5 389.0 L773.2 387.6 L775.8 385.9 L778.3 383.9 L780.7 381.8 L782.9 379.6 L784.9 377.3 L786.7 375.1" fill="none" stroke="#fff" stroke-width="0.95" stroke-dasharray="4.4 5.1 13.5 3.3" opacity="0.85"/><path d="M721.8 375.0 L724.0 377.6 L726.5 380.1 L729.3 382.3 L732.1 384.4 L735.1 386.2 L738.2 387.8 L741.2 389.0 L744.3 390.0 L747.6 390.7 L751.1 391.2 L754.6 391.5 L758.2 391.5 L761.6 391.2 L764.8 390.7 L767.8 390.0 L770.5 389.0 L773.2 387.6 L775.8 385.9 L778.3 383.9 L780.7 381.8 L782.9 379.6 L784.9 377.3 L786.7 375.1 L788.4 372.9 L789.8 370.7 L791.1 368.4 L792.3 366.1 L793.2 363.6 L793.9 361.1 L794.4 358.4 L794.7 355.5 L794.8 352.4 L794.6 349.1 L794.1 345.5 L793.5 341.8 L792.7 338.1 L791.7 334.3 L790.5 330.5 L789.3 326.9 L787.8 323.4 L786.0 319.9" fill="none" stroke="#fff" stroke-width="0.69" stroke-dasharray="10.4 4.3 12.7 4.3" opacity="0.85"/><g transform="translate(330.7 552) rotate(0) scale(0.693) translate(-755 -271)"><path d="M740.8 152.8 L739.3 153.5 L737.7 154.4 L736.0 155.6 L734.0 156.9 L732.0 158.5 L729.8 160.2 L727.5 162.0 L725.2 164.0 L722.8 166.1 L720.5 168.4 L718.2 170.7 L715.9 173.2 L713.8 175.7 L711.8 178.3 L709.9 181.0 L708.0 183.8 L706.1 186.8 L704.3 189.8 L702.4 193.0 L700.6 196.2 L698.8 199.5 L697.0 202.9 L695.4 206.3 L693.8 209.8 L692.4 213.3 L691.1 216.9 L689.8 220.4 L688.7 223.9 L687.7 227.3 L686.7 230.8 L685.8 234.4 L685.0 238.0 L684.2 241.6 L683.5 245.2 L682.9 248.8 L682.4 252.4 L681.9 256.0 L681.5 259.6 L681.3 263.2 L681.1 266.7 L681.0 270.2 L681.0 273.6 L681.1 277.1 L681.4 280.6 L681.8 284.0 L682.3 287.5 L682.9 290.8 L683.6 294.2 L684.4 297.4 L685.2 300.6 L686.0 303.7 L686.9 306.6 L687.7 309.5 L688.5 312.2 L689.5 314.7 L690.5 317.1 L691.5 319.4 L692.6 321.8 L693.8 324.0 L695.0 326.0 L696.2 328.0 L697.4 329.9 L698.6 331.6 L699.8 333.2 L700.9 334.6 L702.0 335.9 L703.1 337.1 L704.1 338.1 L705.1 338.9 L706.3 339.4 L706.9 339.2 L707.2 337.9 L707.1 336.5 L706.9 335.1 L706.5 333.6 L706.1 331.9 L705.6 330.2 L705.1 328.4 L704.6 326.5 L704.0 324.5 L703.5 322.4 L702.9 320.3 L702.4 318.2 L701.9 316.0 L701.5 313.7 L701.1 311.2 L700.5 308.6 L699.7 305.9 L698.9 303.2 L698.1 300.3 L697.3 297.4 L696.5 294.5 L695.8 291.5 L695.2 288.4 L694.6 285.4 L694.2 282.3 L693.8 279.3 L693.6 276.3 L693.4 273.4 L693.4 270.4 L693.5 267.2 L693.7 264.0 L694.0 260.8 L694.3 257.5 L694.8 254.1 L695.3 250.8 L695.8 247.4 L696.5 244.0 L697.2 240.7 L698.0 237.3 L698.8 234.0 L699.7 230.8 L700.7 227.5 L701.7 224.3 L702.8 221.1 L704.0 217.8 L705.3 214.5 L706.6 211.2 L707.9 207.8 L709.3 204.5 L710.7 201.2 L712.1 197.9 L713.6 194.8 L715.0 191.7 L716.5 188.8 L718.0 185.9 L719.4 183.3 L720.9 180.7 L722.5 178.2 L724.2 175.7 L726.0 173.2 L727.9 170.8 L729.8 168.5 L731.7 166.2 L733.5 164.0 L735.3 161.9 L736.9 159.9 L738.3 158.1 L739.6 156.3 L740.6 154.7 L741.2 153.2Z" fill="#d5dea4"/><path d="M730.5 165.0 L726.8 168.7 L723.2 172.8 L719.7 177.1 L716.6 181.5 L713.7 186.2 L710.8 191.3 L707.9 196.8 L705.1 202.5 L702.5 208.4 L700.0 214.3 L697.8 220.2 L695.9 226.1 L694.2 231.9 L692.7 237.9 L691.4 243.9 L690.3 250.0 L689.5 256.0 L688.8 262.0 L688.5 267.8 L688.4 273.5" fill="none" stroke="#fff" stroke-width="0.82" stroke-dasharray="5.9 4.3 10.0 2.9" opacity="0.85"/><path d="M718.4 176.1 L715.3 180.6 L712.3 185.4 L709.4 190.6 L706.5 196.1 L703.7 201.8 L701.0 207.7 L698.5 213.7 L696.3 219.7 L694.3 225.6 L692.6 231.5 L691.1 237.5 L689.8 243.6 L688.7 249.7 L687.8 255.8 L687.2 261.9 L686.9 267.8 L686.8 273.5 L687.1 279.2 L687.8 284.9 L688.8 290.5" fill="none" stroke="#fff" stroke-width="1.09" stroke-dasharray="7.2 2.5 8.1 2.1" opacity="0.85"/><path d="M760.8 146.6 L761.2 148.2 L762.1 149.9 L763.2 151.7 L764.5 153.7 L765.9 155.8 L767.5 158.1 L769.2 160.4 L770.9 162.8 L772.7 165.3 L774.4 167.8 L776.1 170.3 L777.8 172.8 L779.3 175.3 L780.8 177.7 L782.1 180.2 L783.6 182.7 L785.0 185.4 L786.4 188.1 L787.8 190.8 L789.2 193.6 L790.6 196.5 L791.9 199.3 L793.2 202.2 L794.6 205.0 L796.0 207.8 L797.3 210.6 L798.5 213.4 L799.7 216.2 L800.8 219.0 L801.9 221.9 L802.9 224.7 L804.0 227.6 L805.0 230.5 L805.9 233.4 L806.8 236.3 L807.6 239.2 L808.4 242.1 L809.1 245.0 L809.7 247.9 L810.2 250.8 L810.7 253.6 L811.1 256.4 L811.4 259.2 L811.7 262.1 L811.8 265.0 L811.9 267.9 L811.9 270.8 L811.9 273.7 L811.8 276.6 L811.6 279.6 L811.4 282.5 L811.1 285.3 L810.8 288.2 L810.5 291.0 L810.1 293.8 L809.7 296.5 L809.3 299.1 L808.8 301.7 L808.1 304.5 L807.5 307.2 L806.7 309.9 L805.9 312.6 L805.1 315.3 L804.3 317.9 L803.5 320.4 L803.0 322.9 L802.5 325.3 L802.0 327.6 L801.6 329.7 L801.2 331.5 L800.9 333.1 L800.6 334.5 L800.3 335.8 L800.0 336.9 L799.7 338.0 L799.4 338.9 L799.1 339.8 L798.8 340.6 L798.6 341.4 L798.3 342.1 L798.1 342.8 L797.9 343.6 L797.8 344.3 L798.1 345.1 L798.5 345.5 L799.4 345.4 L800.0 345.3 L800.6 345.1 L801.3 344.8 L802.0 344.4 L802.8 343.9 L803.7 343.3 L804.5 342.5 L805.5 341.7 L806.4 340.7 L807.4 339.5 L808.4 338.2 L809.4 336.7 L810.4 335.1 L811.4 333.3 L812.4 331.4 L813.6 329.3 L814.7 327.1 L815.9 324.6 L816.9 322.0 L817.8 319.3 L818.6 316.4 L819.5 313.5 L820.3 310.6 L821.1 307.6 L821.7 304.5 L822.3 301.5 L822.9 298.5 L823.3 295.6 L823.7 292.7 L824.0 289.7 L824.4 286.6 L824.6 283.5 L824.9 280.4 L825.0 277.2 L825.1 274.0 L825.2 270.8 L825.2 267.6 L825.1 264.4 L824.9 261.2 L824.6 258.0 L824.3 254.8 L823.8 251.6 L823.3 248.4 L822.7 245.2 L822.0 242.1 L821.2 238.9 L820.4 235.7 L819.5 232.6 L818.6 229.5 L817.6 226.4 L816.5 223.3 L815.4 220.2 L814.3 217.2 L813.1 214.2 L811.9 211.2 L810.7 208.2 L809.4 205.2 L808.0 202.2 L806.5 199.2 L805.0 196.2 L803.3 193.3 L801.6 190.5 L799.9 187.6 L798.1 184.9 L796.3 182.2 L794.5 179.6 L792.7 177.0 L790.9 174.5 L789.0 172.1 L787.1 169.7 L785.1 167.3 L783.0 164.9 L780.8 162.6 L778.5 160.3 L776.3 158.1 L774.1 156.1 L771.9 154.1 L769.8 152.3 L767.9 150.6 L766.0 149.2 L764.3 147.9 L762.7 146.9 L761.2 146.2Z" fill="#d5dea4"/><path d="M783.9 169.1 L787.0 173.5 L789.9 177.9 L792.7 182.5 L795.6 187.3 L798.3 192.2 L801.0 197.3 L803.6 202.4 L806.0 207.6 L808.2 212.7 L810.2 217.9 L812.1 223.1 L813.9 228.4 L815.6 233.7 L817.1 239.1 L818.4 244.5 L819.4 249.9 L820.2 255.3 L820.8 260.7 L821.1 266.1 L821.1 271.6 L821.0 277.0 L820.6 282.4 L820.1 287.7" fill="none" stroke="#fff" stroke-width="0.84" stroke-dasharray="6.5 4.2 9.3 3.7" opacity="0.85"/><path d="M795.3 187.4 L798.1 192.4 L800.7 197.5 L803.3 202.6 L805.7 207.7 L807.9 212.9 L809.9 218.0 L811.8 223.2 L813.6 228.5 L815.3 233.8 L816.8 239.2 L818.1 244.6 L819.1 250.0 L819.9 255.3 L820.4 260.7 L820.7 266.2 L820.8 271.6 L820.6 277.0" fill="none" stroke="#fff" stroke-width="1.02" stroke-dasharray="8.5 3.2 15.5 4.5" opacity="0.85"/><path d="M752.7 146.0 L752.0 147.8 L751.6 150.1 L751.3 152.6 L751.0 155.5 L750.7 158.7 L750.5 162.1 L750.3 165.6 L750.1 169.2 L749.9 172.9 L749.8 176.5 L749.9 180.1 L750.0 183.6 L750.1 186.9 L750.2 190.0 L750.3 192.9 L750.5 196.0 L750.6 199.0 L750.7 202.0 L750.9 205.0 L751.0 207.9 L751.2 210.9 L751.3 213.7 L751.4 216.5 L751.5 219.2 L751.6 221.7 L751.7 224.2 L751.7 226.5 L751.7 228.7 L751.7 230.7 L751.6 232.6 L751.5 234.5 L751.3 236.3 L751.2 238.1 L751.0 239.7 L750.8 241.3 L750.6 242.7 L750.5 244.1 L750.3 245.4 L750.1 246.6 L750.0 247.7 L749.8 248.7 L749.7 249.5 L758.3 250.5 L758.4 249.7 L758.5 248.8 L758.6 247.8 L758.8 246.6 L759.0 245.3 L759.2 243.8 L759.4 242.3 L759.6 240.7 L759.7 238.9 L759.9 237.0 L760.1 235.1 L760.2 233.1 L760.3 230.9 L760.3 228.7 L760.3 226.4 L760.3 224.0 L760.2 221.5 L760.1 218.9 L760.0 216.1 L759.9 213.3 L759.8 210.5 L759.6 207.5 L759.5 204.6 L759.3 201.6 L759.2 198.6 L759.0 195.6 L758.9 192.6 L758.8 189.6 L758.7 186.6 L758.6 183.3 L758.4 179.8 L758.3 176.2 L757.9 172.6 L757.5 168.9 L757.0 165.4 L756.6 161.9 L756.2 158.5 L755.7 155.4 L755.2 152.5 L754.7 149.9 L754.1 147.8 L753.3 146.0Z" fill="#d5dea4"/><path d="M752.2 171.9 L752.4 178.2 L752.6 184.3 L752.8 189.9 L753.0 195.1 L753.3 200.4 L753.5 205.6 L753.8 210.7 L754.0 215.7 L754.2 220.4 L754.3 224.7 L754.3 228.7" fill="none" stroke="#fff" stroke-width="0.65" stroke-dasharray="4.7 4.6 13.3 2.8" opacity="0.85"/><path d="M751.8 149.5 L751.9 154.0 L752.1 159.5 L752.3 165.5 L752.5 171.9 L752.7 178.2 L753.0 184.3 L753.1 189.9 L753.4 195.1 L753.6 200.3 L753.9 205.6 L754.1 210.7" fill="none" stroke="#fff" stroke-width="0.69" stroke-dasharray="6.5 5.4 6.6 2.8" opacity="0.85"/><path d="M603.5 227.5 L605.2 229.2 L607.0 230.0 L609.1 230.6 L611.4 231.0 L613.8 231.2 L616.2 230.7 L618.7 230.3 L621.3 229.8 L623.8 229.4 L626.3 229.1 L628.7 228.8 L630.9 228.6 L633.0 228.5 L634.8 228.6 L636.4 228.7 L638.1 228.9 L639.7 229.1 L641.3 229.5 L642.8 229.8 L644.4 230.3 L645.9 230.8 L647.5 231.3 L649.1 231.9 L650.7 232.6 L652.4 233.2 L654.2 233.9 L656.0 234.7 L657.8 235.4 L659.7 236.0 L661.8 236.6 L664.0 237.4 L666.3 238.2 L668.6 239.0 L671.0 239.9 L673.4 240.7 L675.7 241.5 L677.9 242.2 L680.1 242.9 L682.1 243.5 L683.9 243.9 L685.5 244.1 L687.1 243.9 L687.3 243.3 L686.6 242.0 L685.5 240.8 L684.2 239.5 L682.6 238.1 L680.9 236.7 L679.0 235.3 L677.0 233.8 L674.9 232.3 L672.7 230.9 L670.5 229.5 L668.4 228.1 L666.2 226.8 L664.2 225.7 L662.2 224.6 L660.4 223.8 L658.6 223.1 L656.8 222.4 L655.0 221.7 L653.3 221.0 L651.5 220.3 L649.6 219.7 L647.7 219.1 L645.8 218.5 L643.8 218.0 L641.8 217.6 L639.7 217.3 L637.5 217.0 L635.2 216.8 L632.8 216.8 L630.2 216.9 L627.5 217.1 L624.8 217.4 L622.1 217.8 L619.3 218.3 L616.7 218.7 L614.0 219.2 L611.6 219.7 L609.4 220.8 L607.4 222.1 L605.8 223.4 L604.4 224.8 L603.5 226.9Z" fill="#d5dea4"/><path d="M613.3 225.2 L617.7 224.4 L622.3 223.6 L626.8 223.0 L631.2 222.6 L635.0 222.6 L638.4 222.9 L641.7 223.4 L644.8 224.2 L647.8 225.1 L650.8 226.2 L653.8 227.3" fill="none" stroke="#fff" stroke-width="0.86" stroke-dasharray="8.0 3.4 11.3 2.4" opacity="0.85"/><path d="M631.2 223.4 L635.0 223.3 L638.3 223.6 L641.5 224.2 L644.6 224.9 L647.6 225.8 L650.5 226.9 L653.5 228.0 L656.6 229.3 L659.8 230.6 L663.2 232.1 L667.0 233.8" fill="none" stroke="#fff" stroke-width="0.94" stroke-dasharray="6.4 5.2 12.1 2.8" opacity="0.85"/><path d="M606.8 229.2 L606.5 232.3 L607.3 234.6 L608.6 236.7 L610.7 238.2 L612.9 239.9 L615.2 241.7 L617.7 243.6 L620.3 245.7 L622.9 247.8 L625.7 250.0 L628.4 252.3 L631.1 254.7 L633.8 257.2 L636.5 259.7 L639.3 262.4 L642.3 265.5 L645.6 268.9 L649.2 272.5 L652.9 276.0 L656.7 279.7 L660.5 283.3 L664.2 286.9 L667.8 290.3 L671.3 293.5 L674.5 296.4 L677.4 298.9 L680.1 300.9 L682.5 302.2 L682.9 301.8 L681.8 299.3 L680.1 296.5 L677.9 293.3 L675.4 289.8 L672.6 286.1 L669.5 282.1 L666.3 278.0 L663.0 273.9 L659.7 269.8 L656.3 265.7 L653.0 261.9 L649.6 258.4 L646.4 255.2 L643.5 252.3 L640.7 249.7 L637.9 247.1 L635.0 244.6 L632.2 242.2 L629.3 239.9 L626.6 237.7 L624.0 235.6 L621.4 233.7 L619.0 231.8 L616.8 230.1 L614.8 228.6 L612.5 227.9 L610.1 227.8 L607.2 228.8Z" fill="#d5dea4"/><path d="M625.3 243.5 L630.1 247.5 L635.0 251.7 L639.8 256.2 L645.0 261.3 L650.8 267.4 L657.0 274.1 L663.2 280.9 L669.2 287.5 L674.6 293.5" fill="none" stroke="#fff" stroke-width="0.92" stroke-dasharray="11.9 2.3 14.6 4.7" opacity="0.85"/><path d="M610.5 229.6 L613.7 232.1 L617.6 235.0 L621.9 238.3 L626.5 242.0 L631.4 246.0 L636.3 250.3" fill="none" stroke="#fff" stroke-width="0.70" stroke-dasharray="5.9 5.4 11.4 2.1" opacity="0.85"/><path d="M601.7 236.0 L600.3 237.9 L599.3 240.2 L598.4 242.9 L597.4 246.0 L596.5 249.4 L595.6 253.1 L594.8 257.0 L594.0 261.1 L593.4 265.3 L593.2 269.6 L593.3 274.0 L593.6 278.4 L594.1 282.7 L594.9 286.8 L595.9 290.9 L597.1 294.9 L598.4 299.0 L599.8 303.1 L601.4 307.3 L603.1 311.5 L605.0 315.7 L606.9 319.8 L609.0 323.9 L611.2 328.0 L613.5 331.9 L615.9 335.8 L618.4 339.5 L621.0 343.0 L623.7 346.5 L626.5 349.9 L629.5 353.3 L632.6 356.5 L635.8 359.8 L639.1 362.9 L642.4 365.9 L645.9 368.8 L649.4 371.6 L653.0 374.3 L656.6 376.9 L660.3 379.3 L664.0 381.6 L667.7 383.7 L671.7 385.7 L675.7 387.5 L679.9 389.1 L684.2 390.5 L688.4 391.8 L692.7 392.9 L697.0 393.9 L701.2 394.9 L705.3 395.7 L709.3 396.5 L713.1 397.2 L716.8 397.9 L720.2 398.3 L723.5 398.7 L726.7 399.0 L729.9 399.2 L733.0 399.3 L736.0 399.4 L738.9 399.3 L741.6 399.2 L744.2 399.1 L746.7 398.8 L748.9 398.6 L751.0 398.2 L752.9 397.9 L754.6 397.5 L756.1 397.0 L757.5 396.3 L757.5 395.7 L756.3 394.8 L754.8 394.2 L753.1 393.6 L751.2 393.2 L749.1 392.7 L747.0 392.3 L744.6 391.8 L742.2 391.3 L739.6 390.8 L737.0 390.2 L734.2 389.6 L731.5 388.9 L728.6 388.2 L725.7 387.3 L722.5 386.4 L719.1 385.6 L715.4 384.9 L711.6 384.2 L707.7 383.4 L703.8 382.6 L699.8 381.8 L695.8 380.8 L691.8 379.7 L687.9 378.6 L684.1 377.3 L680.5 375.9 L677.0 374.4 L673.7 372.7 L670.4 370.8 L667.0 368.8 L663.7 366.6 L660.4 364.2 L657.1 361.8 L653.8 359.2 L650.6 356.5 L647.5 353.7 L644.5 350.8 L641.6 347.9 L638.7 344.8 L636.0 341.8 L633.4 338.7 L631.0 335.6 L628.7 332.3 L626.4 329.0 L624.2 325.5 L622.1 321.8 L620.1 318.1 L618.1 314.3 L616.3 310.5 L614.6 306.6 L613.0 302.7 L611.5 298.8 L610.2 295.0 L609.0 291.3 L608.0 287.6 L607.1 284.2 L606.4 280.7 L606.0 277.2 L605.8 273.4 L605.7 269.6 L605.6 265.7 L605.3 261.7 L605.1 257.8 L605.0 254.0 L604.8 250.3 L604.6 246.8 L604.4 243.6 L604.0 240.7 L603.5 238.1 L602.3 236.0Z" fill="#d5dea4"/><path d="M602.5 264.6 L602.4 271.6 L602.9 278.4 L603.9 284.9 L605.6 291.3 L607.8 298.0 L610.4 304.9 L613.4 311.8 L616.7 318.7 L620.3 325.3 L624.3 331.6 L628.4 337.5 L632.9 343.1 L637.8 348.6 L643.0 353.9 L648.5 358.9 L654.2 363.7 L660.1 368.1 L666.1 372.1 L672.1 375.6 L678.3 378.5" fill="none" stroke="#fff" stroke-width="0.62" stroke-dasharray="8.2 4.2 6.8 4.5" opacity="0.85"/><path d="M602.4 271.6 L602.8 278.4 L603.9 284.9 L605.6 291.3 L607.8 298.0 L610.4 304.9 L613.3 311.8 L616.7 318.7 L620.3 325.3 L624.2 331.6 L628.4 337.5 L632.8 343.1 L637.7 348.6 L643.0 353.9 L648.5 359.0 L654.2 363.7 L660.1 368.1 L666.1 372.1 L672.1 375.6 L678.3 378.6" fill="none" stroke="#fff" stroke-width="0.96" stroke-dasharray="3.2 4.5 16.0 3.1" opacity="0.85"/><path d="M820.8 238.0 L822.2 238.3 L823.7 238.3 L825.4 238.2 L827.2 237.9 L829.2 237.5 L831.3 237.1 L833.4 236.7 L835.7 236.2 L838.1 235.8 L840.5 235.4 L843.0 235.0 L845.6 234.7 L848.1 234.5 L850.7 234.3 L853.5 234.1 L856.8 233.8 L860.3 233.6 L864.1 233.4 L868.1 233.2 L872.1 233.1 L876.2 233.0 L880.2 232.9 L884.0 232.9 L887.7 232.8 L891.0 232.7 L894.0 231.4 L896.5 230.0 L898.5 227.5 L898.5 226.9 L896.4 224.5 L893.9 223.2 L890.9 222.0 L887.6 221.9 L883.9 222.0 L880.0 222.0 L876.0 222.1 L871.8 222.2 L867.7 222.3 L863.6 222.5 L859.7 222.7 L855.9 222.9 L852.4 223.2 L849.3 223.7 L846.4 224.4 L843.5 225.2 L840.8 226.1 L838.2 227.1 L835.7 228.1 L833.4 229.2 L831.2 230.2 L829.1 231.3 L827.3 232.4 L825.5 233.4 L824.0 234.4 L822.6 235.4 L821.5 236.3 L820.6 237.4Z" fill="#d5dea4"/><path d="M840.5 230.3 L845.1 229.3 L849.9 228.4 L855.4 227.9 L861.9 227.5 L868.9 227.2 L876.1 227.0 L883.0 226.9" fill="none" stroke="#fff" stroke-width="0.97" stroke-dasharray="4.1 2.9 14.6 4.6" opacity="0.85"/><path d="M831.5 230.9 L835.5 229.6 L840.0 228.3 L844.7 227.2 L849.6 226.4 L855.3 225.8 L861.8 225.4 L868.8 225.1" fill="none" stroke="#fff" stroke-width="0.66" stroke-dasharray="6.6 2.8 7.2 2.2" opacity="0.85"/><path d="M902.7 233.3 L902.0 234.7 L901.9 236.0 L902.1 237.3 L902.3 238.7 L902.6 240.1 L902.9 241.6 L903.2 243.1 L903.4 244.6 L903.6 246.2 L903.7 247.9 L903.7 249.6 L903.6 251.4 L903.8 253.3 L903.9 255.5 L903.8 258.2 L903.6 261.3 L903.4 264.7 L903.0 268.4 L902.6 272.2 L902.2 276.2 L901.6 280.3 L900.9 284.4 L900.2 288.5 L899.4 292.6 L898.5 296.5 L897.5 300.3 L896.4 303.8 L895.3 307.1 L894.0 310.2 L892.7 313.4 L891.2 316.4 L889.6 319.4 L888.0 322.4 L886.2 325.3 L884.4 328.2 L882.5 331.0 L880.5 333.8 L878.4 336.5 L876.3 339.2 L874.2 341.8 L872.0 344.3 L869.7 346.8 L867.4 349.3 L865.1 351.7 L862.7 354.0 L860.2 356.4 L857.7 358.6 L855.1 360.8 L852.5 362.9 L849.9 364.9 L847.2 366.9 L844.4 368.8 L841.6 370.5 L838.7 372.2 L835.8 373.7 L832.9 375.2 L829.9 376.5 L826.6 377.8 L823.0 379.2 L819.1 380.6 L815.1 381.9 L811.0 383.2 L807.0 384.4 L803.0 385.6 L799.1 386.8 L795.5 387.9 L792.2 389.0 L789.2 390.2 L786.7 391.4 L784.8 392.9 L785.0 393.5 L787.3 394.2 L790.0 394.4 L793.1 394.4 L796.6 394.4 L800.4 394.3 L804.5 394.0 L808.8 393.7 L813.1 393.3 L817.6 392.7 L822.0 392.0 L826.4 391.2 L830.7 390.2 L834.7 388.8 L838.5 387.2 L841.9 385.5 L845.2 383.8 L848.5 381.9 L851.7 379.9 L854.8 377.8 L857.8 375.6 L860.7 373.3 L863.6 371.0 L866.5 368.6 L869.2 366.1 L871.9 363.6 L874.5 361.0 L877.0 358.4 L879.5 355.8 L881.9 353.1 L884.3 350.3 L886.6 347.5 L888.9 344.6 L891.2 341.6 L893.4 338.6 L895.5 335.5 L897.5 332.3 L899.4 329.1 L901.3 325.7 L903.1 322.3 L904.7 318.9 L906.3 315.3 L907.7 311.7 L909.0 307.9 L910.3 303.9 L911.4 299.7 L912.3 295.4 L913.2 291.0 L914.0 286.6 L914.7 282.3 L915.3 277.9 L915.8 273.7 L916.3 269.7 L916.6 265.8 L916.9 262.2 L917.0 258.8 L917.1 255.7 L917.1 252.6 L916.8 249.7 L916.0 247.0 L915.0 244.7 L913.9 242.5 L912.7 240.6 L911.5 239.0 L910.2 237.6 L909.0 236.4 L907.8 235.4 L906.7 234.6 L905.7 233.9 L904.7 233.4 L903.3 233.1Z" fill="#d5dea4"/><path d="M910.4 281.6 L909.1 289.1 L907.6 296.6 L905.8 303.7 L903.6 310.2 L901.1 316.2 L898.3 322.0 L895.2 327.7 L891.8 333.1 L888.2 338.3 L884.4 343.4 L880.4 348.2 L876.3 352.8 L872.0 357.3" fill="none" stroke="#fff" stroke-width="0.69" stroke-dasharray="10.9 4.4 9.8 2.7" opacity="0.85"/><path d="M907.9 244.2 L908.9 247.4 L909.5 251.2 L909.7 255.6 L909.5 260.9 L909.1 267.1 L908.4 273.9 L907.4 281.2 L906.2 288.6 L904.7 295.9 L902.9 302.8 L900.8 309.1 L898.4 315.0 L895.6 320.6 L892.6 326.1 L889.3 331.4 L885.7 336.5 L882.0 341.5 L878.1 346.2 L874.0 350.8" fill="none" stroke="#fff" stroke-width="0.63" stroke-dasharray="12.6 3.5 7.2 2.9" opacity="0.85"/><path d="M902.8 234.5 L899.4 233.6 L896.5 234.1 L894.1 235.7 L891.6 237.8 L888.9 240.1 L886.1 242.5 L883.1 245.1 L880.0 247.8 L876.8 250.5 L873.6 253.3 L870.5 256.1 L867.4 258.9 L864.4 261.7 L861.5 264.3 L858.7 267.0 L855.7 269.9 L852.6 273.0 L849.6 276.3 L846.6 279.7 L843.6 283.2 L840.7 286.6 L838.0 289.9 L835.4 293.2 L832.9 296.2 L830.8 299.1 L828.9 301.7 L827.4 304.0 L826.5 306.2 L826.9 306.6 L829.1 305.6 L831.4 304.1 L834.0 302.2 L836.8 299.9 L839.8 297.5 L842.9 294.8 L846.2 292.0 L849.6 289.1 L853.0 286.1 L856.3 283.1 L859.7 280.2 L862.8 277.2 L865.7 274.3 L868.5 271.7 L871.3 269.1 L874.2 266.4 L877.2 263.7 L880.3 260.9 L883.5 258.2 L886.6 255.5 L889.7 252.8 L892.7 250.2 L895.5 247.8 L898.2 245.5 L900.7 243.4 L902.6 241.2 L903.5 238.4 L903.2 234.9Z" fill="#d5dea4"/><path d="M904.2 236.1 L901.2 238.6 L897.4 241.9 L892.7 245.9 L887.6 250.3 L882.1 255.0 L876.6 259.9 L871.2 264.7 L866.2 269.3 L861.2 274.1" fill="none" stroke="#fff" stroke-width="0.62" stroke-dasharray="12.6 4.5 16.5 3.9" opacity="0.85"/><path d="M903.5 235.3 L900.6 237.8 L896.7 241.1 L892.0 245.1 L886.9 249.5 L881.4 254.2 L875.9 259.1" fill="none" stroke="#fff" stroke-width="1.06" stroke-dasharray="5.0 2.3 5.3 4.8" opacity="0.85"/><path d="M753.7 246.9 L751.8 247.2 L750.4 248.0 L749.0 249.0 L747.7 250.2 L746.2 251.6 L744.8 253.1 L743.7 254.9 L742.8 256.9 L741.7 259.0 L740.7 261.0 L739.6 263.2 L738.5 265.3 L737.4 267.4 L736.3 269.5 L735.1 271.6 L733.9 273.8 L732.6 276.1 L731.3 278.4 L729.9 280.9 L728.4 283.3 L727.0 285.9 L725.5 288.4 L724.0 291.0 L722.6 293.6 L721.3 296.3 L720.0 298.9 L718.8 301.5 L717.7 304.1 L716.6 306.7 L715.7 309.2 L714.7 311.7 L713.8 314.3 L712.9 316.9 L712.0 319.5 L711.2 322.1 L710.5 324.7 L709.8 327.3 L709.2 329.9 L708.8 332.5 L708.4 335.1 L708.1 337.6 L707.9 340.1 L707.8 342.6 L707.9 345.1 L708.0 347.5 L708.3 349.9 L708.6 352.3 L709.0 354.6 L709.5 357.0 L710.1 359.2 L710.8 361.5 L711.5 363.6 L712.4 365.8 L713.3 367.8 L714.3 369.8 L715.4 371.7 L716.6 373.6 L718.0 375.4 L719.4 377.2 L721.0 378.8 L722.6 380.4 L724.3 381.9 L726.0 383.4 L727.8 384.7 L729.7 386.0 L731.5 387.2 L733.4 388.3 L735.4 389.3 L737.3 390.2 L739.3 391.0 L741.3 391.7 L743.4 392.3 L745.5 392.8 L747.7 393.2 L749.9 393.5 L752.1 393.7 L754.3 393.8 L756.6 393.8 L758.8 393.8 L760.9 393.6 L763.1 393.4 L765.2 393.0 L767.2 392.6 L769.2 392.0 L771.2 391.3 L773.2 390.5 L775.0 389.5 L776.8 388.4 L778.5 387.2 L780.2 386.0 L781.8 384.7 L783.3 383.4 L784.7 382.0 L786.1 380.6 L787.4 379.2 L788.6 377.8 L789.8 376.4 L790.8 375.1 L791.9 373.7 L792.8 372.3 L793.8 370.9 L794.7 369.4 L795.5 367.9 L796.3 366.3 L797.0 364.7 L797.7 363.1 L798.3 361.4 L798.8 359.6 L799.2 357.8 L799.5 356.0 L799.8 354.1 L799.9 352.1 L800.0 350.1 L800.0 348.0 L799.8 345.9 L799.7 343.7 L799.4 341.5 L799.1 339.3 L798.7 337.1 L798.2 334.8 L797.7 332.6 L797.1 330.3 L796.5 328.0 L795.8 325.8 L795.1 323.6 L794.3 321.4 L793.4 319.2 L792.4 317.0 L791.3 314.9 L790.2 312.9 L788.9 310.9 L787.7 308.9 L786.4 306.9 L785.0 305.0 L783.7 303.1 L782.4 301.1 L781.1 299.1 L779.8 297.1 L778.5 295.1 L777.2 293.0 L775.9 290.7 L774.4 288.2 L772.9 285.5 L771.3 282.7 L769.7 279.8 L768.0 277.0 L766.4 274.1 L764.8 271.4 L763.2 268.7 L761.7 266.3 L760.2 264.0 L758.9 262.1 L757.6 260.4 L756.4 259.2 L755.8 259.5 L756.0 261.2 L756.5 263.2 L757.2 265.5 L758.0 268.0 L759.0 270.7 L760.0 273.6 L761.1 276.6 L762.3 279.7 L763.6 282.8 L764.8 285.9 L766.0 288.9 L767.2 291.7 L768.4 294.4 L769.5 297.0 L770.6 299.4 L771.8 301.7 L772.9 303.9 L774.1 306.1 L775.3 308.2 L776.4 310.3 L777.5 312.3 L778.6 314.3 L779.6 316.2 L780.5 318.1 L781.4 320.0 L782.3 321.8 L783.0 323.5 L783.8 325.4 L784.4 327.2 L785.1 329.2 L785.7 331.2 L786.2 333.2 L786.8 335.2 L787.2 337.2 L787.6 339.2 L788.0 341.1 L788.2 343.0 L788.5 344.9 L788.6 346.7 L788.7 348.4 L788.7 350.0 L788.7 351.5 L788.6 352.9 L788.4 354.3 L788.2 355.6 L787.9 356.8 L787.5 358.0 L787.1 359.2 L786.7 360.4 L786.2 361.5 L785.6 362.6 L785.0 363.7 L784.3 364.9 L783.6 366.0 L782.8 367.1 L781.9 368.2 L781.0 369.4 L780.1 370.5 L779.0 371.7 L778.0 372.9 L776.8 374.0 L775.7 375.1 L774.5 376.2 L773.3 377.2 L772.0 378.1 L770.8 378.9 L769.5 379.7 L768.3 380.3 L767.1 380.9 L765.9 381.3 L764.5 381.7 L763.1 382.0 L761.5 382.2 L759.9 382.4 L758.2 382.5 L756.5 382.6 L754.7 382.6 L753.0 382.5 L751.2 382.3 L749.5 382.0 L747.8 381.7 L746.2 381.4 L744.7 380.9 L743.2 380.4 L741.8 379.9 L740.3 379.2 L738.8 378.4 L737.3 377.5 L735.8 376.6 L734.4 375.6 L733.0 374.5 L731.6 373.4 L730.3 372.2 L729.1 371.0 L727.9 369.8 L726.8 368.5 L725.9 367.2 L725.0 365.8 L724.2 364.4 L723.4 362.9 L722.7 361.4 L722.1 359.7 L721.5 358.0 L720.9 356.2 L720.4 354.4 L720.0 352.5 L719.7 350.6 L719.4 348.6 L719.2 346.6 L719.1 344.6 L719.1 342.6 L719.1 340.6 L719.3 338.6 L719.5 336.6 L719.8 334.4 L720.3 332.2 L720.8 329.9 L721.4 327.6 L722.0 325.3 L722.7 322.9 L723.5 320.5 L724.4 318.1 L725.2 315.6 L726.1 313.2 L727.1 310.8 L728.0 308.4 L729.0 306.1 L730.1 303.8 L731.3 301.3 L732.6 298.9 L733.9 296.4 L735.3 294.0 L736.7 291.5 L738.1 289.0 L739.6 286.5 L741.0 284.1 L742.4 281.7 L743.7 279.3 L745.0 277.0 L746.2 274.8 L747.3 272.6 L748.5 270.5 L749.6 268.3 L750.7 266.1 L751.8 264.0 L752.8 262.0 L753.8 260.0 L754.6 258.0 L755.0 256.0 L755.2 254.0 L755.4 252.2 L755.4 250.4 L755.2 248.8 L754.3 247.1Z" fill="#3cbcc8"/><path d="M715.0 363.5 L716.5 366.8 L718.3 370.0 L720.3 373.0 L722.6 375.8 L725.3 378.4 L728.1 380.8 L731.1 382.9 L734.1 384.9 L737.3 386.5 L740.4 387.8 L743.7 388.9 L747.2 389.7 L750.8 390.2 L754.5 390.5 L758.1 390.5 L761.6 390.2 L765.0 389.7 L768.2 388.8 L771.3 387.7 L774.2 386.1 L777.0 384.3 L779.6 382.2 L782.0 380.0 L784.3 377.7 L786.4 375.3 L788.2 373.0 L789.9 370.8 L791.4 368.4 L792.8 366.0 L794.0 363.4" fill="none" stroke="#fff" stroke-width="0.65" stroke-dasharray="4.7 2.3 12.8 4.2" opacity="0.85"/><path d="M752.1 255.1 L750.5 258.3 L748.7 261.8 L746.8 265.5 L744.9 269.3 L742.9 273.1 L740.8 276.9 L738.5 281.0 L736.0 285.3 L733.5 289.6 L731.0 294.0 L728.6 298.4 L726.5 302.8 L724.6 307.0 L722.9 311.3 L721.3 315.6 L719.8 319.9 L718.5 324.2 L717.3 328.5 L716.4 332.6 L715.8 336.6 L715.4 340.5 L715.4 344.2 L715.6 348.0 L716.1 351.6 L716.8 355.2 L717.8 358.7 L718.9 361.9 L720.3 365.0 L721.8 367.8" fill="none" stroke="#fff" stroke-width="0.92" stroke-dasharray="3.2 5.0 16.5 2.1" opacity="0.85"/></g><g transform="translate(587 552) rotate(0) scale(0.693) translate(-755 -271)"><path d="M740.8 152.8 L739.4 153.5 L737.8 154.5 L736.0 155.6 L734.1 157.0 L732.1 158.6 L729.9 160.3 L727.7 162.1 L725.3 164.1 L723.0 166.3 L720.7 168.5 L718.4 170.9 L716.1 173.3 L714.0 175.9 L712.0 178.5 L710.2 181.2 L708.3 184.0 L706.4 186.9 L704.6 190.0 L702.7 193.1 L700.9 196.4 L699.1 199.7 L697.4 203.1 L695.7 206.5 L694.1 210.0 L692.7 213.5 L691.4 217.0 L690.2 220.5 L689.1 224.0 L688.1 227.4 L687.1 230.9 L686.2 234.5 L685.4 238.0 L684.6 241.6 L683.9 245.2 L683.3 248.9 L682.8 252.5 L682.3 256.1 L681.9 259.6 L681.6 263.2 L681.4 266.7 L681.3 270.2 L681.3 273.6 L681.5 277.1 L681.8 280.5 L682.2 284.0 L682.7 287.4 L683.3 290.8 L684.0 294.1 L684.8 297.3 L685.6 300.5 L686.4 303.6 L687.3 306.5 L688.1 309.4 L688.9 312.1 L689.9 314.6 L690.8 317.0 L691.8 319.3 L692.9 321.6 L694.1 323.8 L695.2 325.9 L696.4 327.9 L697.6 329.8 L698.8 331.5 L699.9 333.1 L701.1 334.5 L702.2 335.8 L703.2 337.0 L704.2 338.0 L705.2 338.8 L706.3 339.4 L706.9 339.2 L707.1 337.9 L707.0 336.6 L706.8 335.2 L706.4 333.6 L706.0 332.0 L705.5 330.3 L704.9 328.5 L704.3 326.6 L703.8 324.6 L703.2 322.5 L702.6 320.4 L702.1 318.3 L701.6 316.1 L701.2 313.8 L700.7 311.4 L700.1 308.7 L699.3 306.1 L698.5 303.3 L697.7 300.4 L696.9 297.5 L696.2 294.6 L695.5 291.5 L694.8 288.5 L694.2 285.4 L693.8 282.4 L693.4 279.4 L693.2 276.4 L693.1 273.4 L693.1 270.3 L693.1 267.2 L693.3 264.0 L693.6 260.7 L693.9 257.4 L694.4 254.1 L694.9 250.7 L695.5 247.3 L696.1 244.0 L696.8 240.6 L697.6 237.2 L698.4 233.9 L699.3 230.6 L700.3 227.4 L701.3 224.2 L702.5 221.0 L703.7 217.7 L705.0 214.4 L706.3 211.0 L707.6 207.7 L709.0 204.3 L710.4 201.0 L711.8 197.8 L713.3 194.6 L714.7 191.6 L716.2 188.6 L717.7 185.8 L719.2 183.1 L720.7 180.6 L722.3 178.1 L724.0 175.6 L725.9 173.1 L727.8 170.7 L729.7 168.3 L731.6 166.0 L733.4 163.9 L735.2 161.8 L736.8 159.8 L738.3 158.0 L739.5 156.3 L740.6 154.7 L741.2 153.2Z" fill="#f1f4e2"/><path d="M724.0 173.5 L720.6 177.7 L717.5 182.1 L714.7 186.7 L711.8 191.9 L708.9 197.3 L706.1 203.0 L703.5 208.8 L701.0 214.7 L698.8 220.6 L696.9 226.4 L695.2 232.2 L693.7 238.1 L692.4 244.1 L691.4 250.2 L690.5 256.2 L689.9 262.1" fill="none" stroke="#fff" stroke-width="0.68" stroke-dasharray="3.2 5.5 14.1 3.5" opacity="0.85"/><path d="M697.4 213.3 L695.2 219.3 L693.2 225.2 L691.5 231.2 L690.0 237.2 L688.7 243.4 L687.6 249.5 L686.7 255.7 L686.1 261.8 L685.7 267.7 L685.7 273.5 L686.0 279.3 L686.7 285.0 L687.7 290.7 L689.0 296.3 L690.4 301.7 L691.8 306.8 L693.2 311.5 L694.5 315.9" fill="none" stroke="#fff" stroke-width="0.90" stroke-dasharray="11.8 4.9 7.8 2.2" opacity="0.85"/><path d="M760.8 146.6 L761.3 148.2 L762.1 149.8 L763.3 151.6 L764.6 153.6 L766.1 155.7 L767.7 157.9 L769.3 160.3 L771.1 162.7 L772.9 165.1 L774.6 167.6 L776.3 170.1 L778.0 172.6 L779.6 175.1 L781.0 177.5 L782.4 180.0 L783.9 182.6 L785.3 185.2 L786.7 187.9 L788.1 190.7 L789.5 193.5 L790.9 196.3 L792.3 199.1 L793.6 202.0 L795.0 204.8 L796.3 207.6 L797.6 210.5 L798.9 213.3 L800.0 216.1 L801.2 218.9 L802.3 221.7 L803.3 224.6 L804.4 227.5 L805.4 230.4 L806.3 233.3 L807.2 236.2 L808.0 239.1 L808.8 242.0 L809.5 244.9 L810.1 247.8 L810.7 250.7 L811.1 253.5 L811.5 256.4 L811.8 259.2 L812.1 262.1 L812.2 265.0 L812.3 267.9 L812.3 270.8 L812.3 273.7 L812.2 276.7 L812.0 279.6 L811.8 282.5 L811.6 285.4 L811.3 288.2 L810.9 291.1 L810.5 293.8 L810.2 296.5 L809.7 299.2 L809.2 301.8 L808.5 304.6 L807.9 307.3 L807.1 310.0 L806.3 312.7 L805.5 315.4 L804.7 318.0 L803.9 320.5 L803.3 323.0 L802.8 325.4 L802.3 327.7 L801.9 329.8 L801.5 331.6 L801.2 333.2 L800.9 334.7 L800.6 335.9 L800.2 337.1 L799.9 338.1 L799.6 339.0 L799.3 339.9 L799.0 340.7 L798.7 341.5 L798.4 342.2 L798.2 342.9 L798.0 343.6 L797.9 344.3 L798.1 345.1 L798.5 345.5 L799.3 345.4 L799.9 345.2 L800.6 345.0 L801.2 344.7 L801.9 344.3 L802.7 343.8 L803.5 343.2 L804.4 342.4 L805.3 341.6 L806.2 340.6 L807.2 339.4 L808.1 338.1 L809.1 336.6 L810.1 335.0 L811.1 333.2 L812.1 331.3 L813.2 329.2 L814.4 326.9 L815.5 324.5 L816.5 321.9 L817.4 319.1 L818.2 316.3 L819.1 313.4 L819.9 310.4 L820.6 307.5 L821.3 304.4 L821.9 301.4 L822.4 298.5 L822.9 295.6 L823.3 292.6 L823.6 289.6 L823.9 286.6 L824.2 283.5 L824.4 280.4 L824.6 277.2 L824.7 274.0 L824.8 270.8 L824.8 267.6 L824.7 264.4 L824.5 261.2 L824.2 258.0 L823.9 254.8 L823.4 251.7 L822.9 248.5 L822.3 245.3 L821.6 242.1 L820.8 239.0 L820.0 235.8 L819.1 232.7 L818.2 229.6 L817.2 226.5 L816.1 223.4 L815.0 220.3 L813.9 217.3 L812.7 214.3 L811.6 211.3 L810.3 208.4 L809.0 205.3 L807.6 202.3 L806.2 199.3 L804.7 196.4 L803.0 193.5 L801.3 190.6 L799.5 187.8 L797.8 185.1 L796.0 182.4 L794.2 179.7 L792.4 177.2 L790.6 174.7 L788.8 172.3 L786.9 169.9 L784.9 167.5 L782.7 165.1 L780.6 162.7 L778.4 160.5 L776.1 158.3 L773.9 156.2 L771.8 154.2 L769.7 152.4 L767.8 150.7 L765.9 149.2 L764.2 147.9 L762.7 146.9 L761.2 146.2Z" fill="#f1f4e2"/><path d="M785.7 180.5 L788.5 185.0 L791.3 189.7 L794.0 194.6 L796.7 199.5 L799.2 204.6 L801.5 209.6 L803.6 214.6 L805.6 219.6 L807.5 224.7 L809.3 229.9 L810.9 235.1 L812.3 240.3 L813.6 245.5 L814.6 250.7 L815.4 255.9 L815.9 261.1 L816.2 266.3 L816.2 271.6 L816.1 276.8 L815.7 282.1 L815.3 287.2 L814.7 292.3 L814.0 297.1 L813.1 302.0" fill="none" stroke="#fff" stroke-width="1.05" stroke-dasharray="12.9 4.4 11.0 3.8" opacity="0.85"/><path d="M808.4 212.6 L810.5 217.8 L812.4 223.0 L814.2 228.3 L815.9 233.7 L817.4 239.0 L818.6 244.5 L819.7 249.9 L820.5 255.2 L821.0 260.7 L821.3 266.1 L821.4 271.6 L821.2 277.1 L820.9 282.4 L820.4 287.7 L819.8 292.9 L819.1 298.0" fill="none" stroke="#fff" stroke-width="0.84" stroke-dasharray="8.2 4.3 5.1 3.2" opacity="0.85"/><path d="M752.7 146.0 L752.1 147.8 L751.7 150.0 L751.4 152.6 L751.1 155.5 L750.9 158.7 L750.7 162.1 L750.5 165.6 L750.3 169.2 L750.2 172.9 L750.1 176.5 L750.1 180.1 L750.2 183.6 L750.4 186.9 L750.5 190.0 L750.6 192.9 L750.7 195.9 L750.9 199.0 L751.0 202.0 L751.2 205.0 L751.3 207.9 L751.4 210.8 L751.6 213.7 L751.7 216.5 L751.8 219.2 L751.9 221.7 L751.9 224.2 L752.0 226.5 L752.0 228.7 L751.9 230.7 L751.9 232.7 L751.7 234.5 L751.6 236.4 L751.5 238.1 L751.3 239.7 L751.1 241.3 L750.9 242.8 L750.7 244.1 L750.5 245.4 L750.4 246.6 L750.2 247.7 L750.1 248.7 L750.0 249.6 L758.0 250.4 L758.1 249.7 L758.2 248.8 L758.3 247.7 L758.5 246.5 L758.7 245.2 L758.9 243.8 L759.1 242.3 L759.3 240.6 L759.5 238.9 L759.6 237.0 L759.8 235.1 L759.9 233.0 L760.0 230.9 L760.0 228.7 L760.0 226.4 L760.0 224.0 L759.9 221.5 L759.9 218.9 L759.7 216.1 L759.6 213.3 L759.5 210.5 L759.3 207.5 L759.2 204.6 L759.1 201.6 L758.9 198.6 L758.8 195.6 L758.6 192.6 L758.5 189.6 L758.4 186.6 L758.3 183.3 L758.2 179.8 L758.0 176.2 L757.6 172.6 L757.2 169.0 L756.8 165.4 L756.4 161.9 L756.0 158.5 L755.5 155.4 L755.1 152.5 L754.6 150.0 L754.0 147.8 L753.3 146.0Z" fill="#f1f4e2"/><path d="M754.9 165.4 L755.1 171.8 L755.3 178.1 L755.5 184.2 L755.7 189.8 L755.9 195.0 L756.2 200.2 L756.5 205.5 L756.7 210.6 L756.9 215.6 L757.1 220.3 L757.2 224.7 L757.2 228.7 L757.1 232.4" fill="none" stroke="#fff" stroke-width="0.95" stroke-dasharray="6.5 4.8 16.0 4.0" opacity="0.85"/><path d="M753.3 146.0 L753.4 149.4 L753.6 154.0 L753.7 159.4 L754.0 165.5 L754.2 171.8 L754.4 178.2 L754.6 184.2 L754.8 189.8" fill="none" stroke="#fff" stroke-width="0.66" stroke-dasharray="12.5 4.0 7.3 3.9" opacity="0.85"/><path d="M603.5 227.5 L605.2 229.1 L607.0 229.8 L609.1 230.3 L611.3 230.7 L613.7 230.8 L616.2 230.4 L618.7 229.9 L621.2 229.5 L623.7 229.1 L626.2 228.7 L628.7 228.4 L630.9 228.2 L633.0 228.2 L634.8 228.2 L636.5 228.3 L638.1 228.5 L639.8 228.8 L641.3 229.1 L642.9 229.5 L644.5 229.9 L646.0 230.4 L647.6 231.0 L649.2 231.6 L650.9 232.2 L652.6 232.9 L654.3 233.6 L656.1 234.3 L657.9 235.0 L659.9 235.6 L661.9 236.3 L664.1 237.1 L666.4 237.9 L668.8 238.8 L671.1 239.6 L673.5 240.5 L675.8 241.3 L678.0 242.1 L680.2 242.8 L682.1 243.3 L684.0 243.8 L685.6 244.0 L687.1 243.9 L687.3 243.3 L686.6 242.1 L685.5 240.9 L684.1 239.6 L682.5 238.3 L680.8 236.9 L678.9 235.5 L676.8 234.0 L674.7 232.6 L672.6 231.1 L670.4 229.7 L668.2 228.4 L666.1 227.2 L664.0 226.0 L662.1 225.0 L660.2 224.2 L658.4 223.4 L656.7 222.7 L654.9 222.0 L653.1 221.3 L651.3 220.6 L649.5 220.0 L647.6 219.4 L645.7 218.9 L643.8 218.4 L641.7 218.0 L639.7 217.6 L637.5 217.4 L635.2 217.2 L632.8 217.2 L630.2 217.3 L627.6 217.5 L624.9 217.8 L622.1 218.2 L619.4 218.6 L616.7 219.1 L614.1 219.6 L611.6 220.1 L609.4 221.1 L607.5 222.3 L605.8 223.6 L604.4 224.9 L603.5 226.9Z" fill="#f1f4e2"/><path d="M613.0 224.1 L617.5 223.2 L622.1 222.4 L626.7 221.8 L631.1 221.4 L635.0 221.4 L638.6 221.7 L641.9 222.3 L645.1 223.1 L648.2 224.0 L651.2 225.1 L654.2 226.3 L657.3 227.5" fill="none" stroke="#fff" stroke-width="0.92" stroke-dasharray="3.4 5.8 14.1 4.6" opacity="0.85"/><path d="M626.7 221.7 L631.1 221.3 L635.1 221.3 L638.6 221.6 L641.9 222.2 L645.1 222.9 L648.2 223.9 L651.2 225.0 L654.3 226.1 L657.3 227.4 L660.5 228.7 L664.1 230.2 L667.9 232.0 L671.9 234.0" fill="none" stroke="#fff" stroke-width="0.84" stroke-dasharray="5.4 4.9 9.1 2.2" opacity="0.85"/><path d="M606.8 229.2 L606.7 232.2 L607.5 234.4 L608.8 236.4 L610.9 238.0 L613.1 239.7 L615.4 241.5 L617.9 243.4 L620.5 245.4 L623.1 247.5 L625.9 249.8 L628.6 252.1 L631.3 254.5 L634.0 256.9 L636.7 259.4 L639.5 262.2 L642.6 265.3 L645.8 268.7 L649.4 272.2 L653.1 275.9 L656.9 279.5 L660.7 283.2 L664.4 286.8 L668.0 290.2 L671.4 293.4 L674.6 296.3 L677.5 298.8 L680.1 300.8 L682.5 302.2 L682.9 301.8 L681.8 299.3 L680.0 296.6 L677.8 293.4 L675.2 289.9 L672.4 286.2 L669.4 282.3 L666.2 278.2 L662.8 274.1 L659.5 270.0 L656.1 265.9 L652.7 262.2 L649.4 258.7 L646.2 255.4 L643.3 252.6 L640.5 249.9 L637.6 247.4 L634.8 244.9 L631.9 242.5 L629.1 240.2 L626.4 238.0 L623.8 235.9 L621.2 233.9 L618.8 232.1 L616.6 230.4 L614.6 228.9 L612.3 228.1 L610.0 227.9 L607.2 228.8Z" fill="#f1f4e2"/><path d="M608.3 232.4 L611.6 234.9 L615.4 237.8 L619.7 241.1 L624.3 244.8 L629.1 248.7 L633.9 252.9 L638.7 257.4" fill="none" stroke="#fff" stroke-width="0.71" stroke-dasharray="7.9 5.4 9.2 2.4" opacity="0.85"/><path d="M613.8 231.9 L617.6 234.9 L622.0 238.2 L626.6 241.9 L631.5 245.9 L636.4 250.2 L641.3 254.7" fill="none" stroke="#fff" stroke-width="0.81" stroke-dasharray="7.4 5.3 11.1 4.5" opacity="0.85"/><path d="M601.7 236.0 L600.4 237.9 L599.5 240.2 L598.6 242.9 L597.6 246.0 L596.7 249.4 L595.9 253.1 L595.1 257.0 L594.4 261.1 L593.8 265.3 L593.6 269.6 L593.7 274.0 L594.0 278.3 L594.5 282.6 L595.3 286.8 L596.3 290.8 L597.4 294.8 L598.7 298.9 L600.2 303.0 L601.8 307.2 L603.5 311.3 L605.3 315.5 L607.3 319.6 L609.4 323.7 L611.6 327.8 L613.9 331.7 L616.3 335.5 L618.7 339.3 L621.3 342.8 L624.0 346.3 L626.8 349.7 L629.8 353.0 L632.9 356.3 L636.0 359.5 L639.3 362.6 L642.7 365.6 L646.1 368.5 L649.7 371.3 L653.2 374.0 L656.9 376.6 L660.5 379.0 L664.2 381.2 L667.9 383.4 L671.8 385.3 L675.9 387.1 L680.0 388.7 L684.3 390.1 L688.5 391.4 L692.8 392.5 L697.1 393.5 L701.3 394.5 L705.4 395.3 L709.4 396.1 L713.2 396.8 L716.9 397.5 L720.3 397.9 L723.6 398.3 L726.8 398.7 L730.0 398.9 L733.1 399.0 L736.0 399.1 L738.9 399.1 L741.6 399.0 L744.2 398.8 L746.7 398.6 L748.9 398.4 L751.0 398.1 L752.9 397.8 L754.6 397.4 L756.1 397.0 L757.5 396.3 L757.5 395.7 L756.3 394.8 L754.8 394.3 L753.1 393.8 L751.2 393.3 L749.1 392.9 L746.9 392.5 L744.6 392.0 L742.2 391.6 L739.6 391.1 L736.9 390.5 L734.2 389.9 L731.4 389.2 L728.6 388.5 L725.6 387.7 L722.4 386.8 L719.0 386.0 L715.3 385.3 L711.6 384.6 L707.7 383.8 L703.7 383.0 L699.7 382.1 L695.7 381.2 L691.7 380.1 L687.8 378.9 L684.0 377.7 L680.3 376.3 L676.8 374.7 L673.5 373.0 L670.2 371.2 L666.8 369.1 L663.5 366.9 L660.1 364.5 L656.8 362.1 L653.6 359.5 L650.4 356.8 L647.3 354.0 L644.2 351.1 L641.3 348.1 L638.4 345.1 L635.7 342.0 L633.1 338.9 L630.7 335.8 L628.4 332.6 L626.1 329.2 L623.9 325.7 L621.8 322.0 L619.7 318.3 L617.8 314.5 L616.0 310.6 L614.2 306.7 L612.6 302.9 L611.2 299.0 L609.8 295.2 L608.6 291.4 L607.6 287.7 L606.7 284.2 L606.1 280.8 L605.6 277.2 L605.4 273.5 L605.3 269.6 L605.2 265.6 L605.0 261.7 L604.8 257.8 L604.7 253.9 L604.6 250.3 L604.4 246.8 L604.2 243.6 L603.9 240.7 L603.4 238.1 L602.3 236.0Z" fill="#f1f4e2"/><path d="M605.6 306.8 L608.7 314.0 L612.1 321.0 L615.9 327.9 L619.9 334.5 L624.3 340.6 L628.9 346.4 L634.0 352.1 L639.4 357.6 L645.1 362.8 L651.1 367.7 L657.2 372.3 L663.4 376.4 L669.7 380.1 L676.3 383.3 L683.3 385.9 L690.6 388.1 L697.9 390.0 L705.1 391.5 L712.0 392.8 L718.4 394.0" fill="none" stroke="#fff" stroke-width="0.78" stroke-dasharray="8.8 5.8 10.5 3.6" opacity="0.85"/><path d="M603.0 236.1 L602.8 239.9 L602.2 244.9 L601.6 250.9 L601.0 257.5 L600.5 264.5 L600.5 271.6 L600.9 278.7 L602.0 285.3 L603.7 291.8 L605.9 298.7 L608.6 305.6 L611.6 312.6 L614.9 319.6 L618.6 326.3 L622.6 332.7 L626.8 338.7 L631.4 344.4 L636.3 349.9 L641.6 355.3 L647.2 360.4 L653.0 365.2 L659.0 369.7 L665.1 373.7" fill="none" stroke="#fff" stroke-width="0.89" stroke-dasharray="7.3 2.7 6.9 3.6" opacity="0.85"/><path d="M820.8 238.0 L822.2 238.3 L823.7 238.2 L825.4 238.0 L827.2 237.7 L829.1 237.4 L831.2 236.9 L833.4 236.5 L835.7 236.0 L838.0 235.6 L840.5 235.1 L843.0 234.7 L845.5 234.4 L848.1 234.2 L850.7 234.0 L853.5 233.8 L856.7 233.5 L860.3 233.2 L864.1 233.0 L868.1 232.9 L872.1 232.8 L876.2 232.7 L880.2 232.6 L884.0 232.6 L887.7 232.5 L891.0 232.3 L894.0 231.2 L896.5 229.8 L898.5 227.5 L898.5 226.9 L896.4 224.7 L893.9 223.4 L890.9 222.3 L887.6 222.3 L883.9 222.3 L880.0 222.4 L876.0 222.4 L871.9 222.5 L867.7 222.7 L863.6 222.8 L859.7 223.0 L856.0 223.3 L852.5 223.6 L849.3 224.0 L846.4 224.7 L843.6 225.5 L840.9 226.4 L838.3 227.3 L835.8 228.3 L833.5 229.4 L831.3 230.4 L829.2 231.5 L827.3 232.5 L825.6 233.6 L824.0 234.5 L822.7 235.5 L821.5 236.4 L820.6 237.4Z" fill="#f1f4e2"/><path d="M825.2 235.1 L828.4 233.9 L832.0 232.6 L836.0 231.2 L840.4 230.0 L845.0 228.9" fill="none" stroke="#fff" stroke-width="0.71" stroke-dasharray="7.4 3.0 7.4 4.2" opacity="0.85"/><path d="M825.0 234.5 L828.2 233.3 L831.8 232.0 L835.9 230.6 L840.2 229.4 L844.9 228.3 L849.8 227.4 L855.3 226.9 L861.8 226.5 L868.9 226.2" fill="none" stroke="#fff" stroke-width="0.77" stroke-dasharray="11.3 3.0 5.1 3.5" opacity="0.85"/><path d="M902.7 233.3 L902.1 234.6 L902.1 235.9 L902.2 237.3 L902.5 238.6 L902.8 240.0 L903.1 241.5 L903.4 242.9 L903.7 244.5 L903.9 246.1 L904.0 247.8 L904.1 249.5 L904.1 251.4 L904.2 253.3 L904.3 255.5 L904.2 258.2 L904.0 261.4 L903.8 264.8 L903.5 268.4 L903.1 272.3 L902.6 276.3 L902.0 280.4 L901.3 284.5 L900.6 288.6 L899.8 292.7 L898.9 296.6 L897.9 300.4 L896.8 303.9 L895.7 307.2 L894.4 310.4 L893.0 313.5 L891.6 316.6 L890.0 319.6 L888.3 322.6 L886.6 325.5 L884.7 328.4 L882.8 331.2 L880.8 334.0 L878.8 336.7 L876.6 339.4 L874.5 342.0 L872.3 344.6 L870.0 347.1 L867.7 349.6 L865.4 352.0 L863.0 354.3 L860.5 356.7 L858.0 358.9 L855.4 361.1 L852.8 363.2 L850.1 365.3 L847.4 367.2 L844.6 369.1 L841.8 370.9 L838.9 372.5 L836.0 374.1 L833.1 375.5 L830.1 376.8 L826.7 378.1 L823.1 379.6 L819.2 380.9 L815.2 382.2 L811.1 383.5 L807.0 384.7 L803.0 385.9 L799.2 387.0 L795.5 388.1 L792.2 389.2 L789.2 390.3 L786.7 391.4 L784.8 392.9 L785.0 393.5 L787.3 394.1 L789.9 394.2 L793.1 394.3 L796.6 394.2 L800.4 394.0 L804.5 393.8 L808.7 393.4 L813.1 392.9 L817.5 392.4 L821.9 391.6 L826.3 390.8 L830.6 389.8 L834.6 388.4 L838.3 386.9 L841.7 385.2 L845.0 383.4 L848.3 381.5 L851.4 379.5 L854.5 377.4 L857.5 375.3 L860.5 373.0 L863.4 370.7 L866.2 368.3 L868.9 365.8 L871.6 363.3 L874.2 360.7 L876.7 358.1 L879.2 355.5 L881.6 352.8 L884.0 350.1 L886.3 347.2 L888.6 344.4 L890.8 341.4 L893.0 338.4 L895.1 335.3 L897.1 332.1 L899.1 328.9 L900.9 325.5 L902.7 322.2 L904.4 318.7 L905.9 315.2 L907.3 311.6 L908.7 307.8 L909.9 303.7 L911.0 299.6 L911.9 295.3 L912.8 290.9 L913.6 286.6 L914.3 282.2 L914.9 277.9 L915.4 273.7 L915.8 269.6 L916.2 265.8 L916.4 262.1 L916.6 258.8 L916.7 255.7 L916.7 252.6 L916.4 249.8 L915.6 247.1 L914.7 244.8 L913.6 242.6 L912.4 240.8 L911.2 239.1 L910.0 237.7 L908.8 236.5 L907.7 235.5 L906.6 234.6 L905.6 234.0 L904.6 233.5 L903.3 233.1Z" fill="#f1f4e2"/><path d="M911.7 274.3 L910.7 281.7 L909.5 289.2 L907.9 296.6 L906.1 303.8 L903.9 310.3 L901.4 316.3 L898.6 322.2 L895.5 327.8 L892.1 333.3 L888.5 338.5 L884.6 343.6 L880.6 348.4 L876.5 353.1 L872.2 357.6 L867.8 361.9" fill="none" stroke="#fff" stroke-width="0.64" stroke-dasharray="6.5 4.1 15.4 2.9" opacity="0.85"/><path d="M909.9 247.2 L910.6 251.1 L910.8 255.6 L910.6 260.9 L910.1 267.1 L909.4 274.0 L908.4 281.3 L907.2 288.8 L905.7 296.1 L903.9 303.1 L901.8 309.5 L899.3 315.4 L896.6 321.1 L893.5 326.7 L890.2 332.0 L886.6 337.2 L882.8 342.1 L878.9 346.9" fill="none" stroke="#fff" stroke-width="0.92" stroke-dasharray="11.3 2.1 15.8 2.6" opacity="0.85"/><path d="M902.8 234.5 L899.5 233.8 L896.7 234.3 L894.3 235.9 L891.8 238.0 L889.2 240.3 L886.3 242.8 L883.3 245.3 L880.2 248.0 L877.0 250.8 L873.8 253.6 L870.7 256.4 L867.6 259.2 L864.6 261.9 L861.7 264.5 L858.9 267.2 L855.9 270.1 L852.8 273.2 L849.8 276.5 L846.8 279.9 L843.8 283.4 L840.9 286.8 L838.1 290.1 L835.5 293.3 L833.1 296.3 L830.9 299.2 L829.0 301.7 L827.5 304.1 L826.5 306.2 L826.9 306.6 L829.0 305.6 L831.3 304.0 L833.9 302.1 L836.7 299.8 L839.6 297.3 L842.8 294.6 L846.0 291.8 L849.4 288.9 L852.8 285.9 L856.1 282.9 L859.5 280.0 L862.5 277.0 L865.5 274.1 L868.3 271.5 L871.0 268.9 L874.0 266.2 L877.0 263.5 L880.1 260.7 L883.3 257.9 L886.4 255.2 L889.5 252.6 L892.5 250.0 L895.3 247.5 L898.0 245.3 L900.5 243.2 L902.5 241.0 L903.4 238.3 L903.2 234.9Z" fill="#f1f4e2"/><path d="M901.2 238.6 L897.3 241.9 L892.7 245.9 L887.5 250.3 L882.1 255.0 L876.6 259.9 L871.2 264.7 L866.2 269.3 L861.2 274.1" fill="none" stroke="#fff" stroke-width="0.71" stroke-dasharray="9.5 5.4 15.1 2.5" opacity="0.85"/><path d="M895.8 240.1 L891.2 244.1 L886.0 248.5 L880.6 253.2 L875.0 258.1 L869.6 262.9 L864.6 267.6 L859.6 272.4 L854.1 277.7" fill="none" stroke="#fff" stroke-width="1.00" stroke-dasharray="3.9 3.5 13.7 3.5" opacity="0.85"/><path d="M753.7 246.9 L752.1 247.3 L750.9 248.2 L749.6 249.3 L748.3 250.5 L747.0 252.0 L745.7 253.5 L744.6 255.4 L743.7 257.4 L742.6 259.4 L741.6 261.5 L740.5 263.6 L739.4 265.8 L738.3 267.9 L737.2 270.0 L736.0 272.1 L734.8 274.3 L733.5 276.6 L732.1 279.0 L730.7 281.4 L729.3 283.9 L727.8 286.4 L726.4 288.9 L724.9 291.5 L723.5 294.1 L722.2 296.7 L720.9 299.3 L719.7 301.9 L718.6 304.5 L717.6 307.0 L716.6 309.5 L715.6 312.1 L714.7 314.7 L713.8 317.2 L713.0 319.8 L712.2 322.4 L711.5 325.0 L710.8 327.6 L710.2 330.1 L709.8 332.7 L709.4 335.2 L709.1 337.7 L708.9 340.2 L708.9 342.6 L708.9 345.0 L709.0 347.4 L709.3 349.8 L709.6 352.1 L710.0 354.4 L710.5 356.7 L711.1 359.0 L711.7 361.2 L712.5 363.3 L713.3 365.4 L714.2 367.4 L715.2 369.3 L716.3 371.2 L717.5 373.0 L718.8 374.8 L720.2 376.5 L721.7 378.1 L723.3 379.7 L724.9 381.2 L726.6 382.6 L728.4 383.9 L730.2 385.2 L732.1 386.3 L733.9 387.4 L735.8 388.4 L737.7 389.2 L739.6 390.0 L741.6 390.7 L743.6 391.3 L745.7 391.8 L747.9 392.2 L750.0 392.5 L752.2 392.7 L754.4 392.8 L756.6 392.8 L758.7 392.7 L760.8 392.6 L762.9 392.4 L765.0 392.0 L767.0 391.6 L768.9 391.0 L770.9 390.4 L772.7 389.5 L774.5 388.6 L776.3 387.6 L777.9 386.4 L779.6 385.2 L781.1 384.0 L782.6 382.6 L784.0 381.3 L785.4 379.9 L786.6 378.6 L787.8 377.2 L789.0 375.8 L790.0 374.4 L791.0 373.1 L792.0 371.7 L792.9 370.3 L793.8 368.9 L794.6 367.4 L795.4 365.9 L796.1 364.3 L796.7 362.7 L797.3 361.1 L797.8 359.4 L798.2 357.6 L798.5 355.8 L798.8 354.0 L798.9 352.0 L799.0 350.1 L798.9 348.0 L798.8 345.9 L798.6 343.8 L798.4 341.7 L798.1 339.5 L797.7 337.3 L797.2 335.0 L796.7 332.8 L796.1 330.6 L795.5 328.3 L794.8 326.1 L794.1 323.9 L793.3 321.8 L792.5 319.6 L791.5 317.4 L790.5 315.3 L789.3 313.3 L788.1 311.3 L786.8 309.4 L785.6 307.4 L784.3 305.5 L783.0 303.5 L781.7 301.6 L780.3 299.6 L779.0 297.5 L777.8 295.5 L776.5 293.3 L775.2 291.0 L773.8 288.5 L772.3 285.8 L770.7 283.0 L769.1 280.1 L767.5 277.2 L765.9 274.4 L764.3 271.6 L762.8 268.9 L761.3 266.4 L759.9 264.2 L758.7 262.2 L757.5 260.5 L756.4 259.2 L755.8 259.5 L756.2 261.1 L756.7 263.1 L757.4 265.4 L758.3 267.9 L759.3 270.6 L760.4 273.4 L761.6 276.4 L762.8 279.5 L764.1 282.5 L765.4 285.6 L766.6 288.6 L767.9 291.4 L769.1 294.1 L770.2 296.6 L771.3 299.0 L772.5 301.3 L773.7 303.5 L774.9 305.7 L776.0 307.8 L777.2 309.8 L778.3 311.8 L779.4 313.8 L780.4 315.7 L781.4 317.6 L782.3 319.5 L783.2 321.3 L784.0 323.2 L784.7 325.0 L785.4 326.9 L786.0 328.9 L786.7 330.9 L787.2 332.9 L787.7 335.0 L788.2 337.0 L788.6 339.0 L789.0 341.0 L789.2 342.9 L789.5 344.8 L789.6 346.6 L789.7 348.3 L789.7 350.0 L789.7 351.5 L789.6 353.0 L789.4 354.4 L789.2 355.8 L788.9 357.1 L788.5 358.3 L788.1 359.6 L787.6 360.8 L787.1 361.9 L786.5 363.1 L785.8 364.2 L785.1 365.4 L784.4 366.5 L783.6 367.7 L782.7 368.8 L781.8 370.0 L780.8 371.2 L779.8 372.4 L778.7 373.6 L777.5 374.7 L776.4 375.9 L775.1 376.9 L773.9 378.0 L772.6 378.9 L771.3 379.8 L770.0 380.6 L768.7 381.2 L767.4 381.8 L766.2 382.3 L764.8 382.6 L763.3 383.0 L761.7 383.2 L760.0 383.4 L758.3 383.5 L756.5 383.6 L754.7 383.6 L752.9 383.5 L751.1 383.3 L749.3 383.0 L747.6 382.7 L745.9 382.3 L744.4 381.9 L742.9 381.4 L741.4 380.8 L739.9 380.1 L738.3 379.3 L736.8 378.4 L735.3 377.5 L733.8 376.4 L732.4 375.3 L731.0 374.2 L729.6 373.0 L728.3 371.7 L727.1 370.4 L726.0 369.1 L725.0 367.7 L724.1 366.4 L723.3 364.9 L722.5 363.4 L721.8 361.8 L721.1 360.1 L720.5 358.3 L719.9 356.5 L719.5 354.6 L719.0 352.7 L718.7 350.7 L718.4 348.7 L718.2 346.7 L718.1 344.7 L718.1 342.6 L718.1 340.6 L718.3 338.5 L718.5 336.4 L718.8 334.2 L719.3 332.0 L719.8 329.7 L720.4 327.4 L721.0 325.0 L721.8 322.6 L722.6 320.2 L723.4 317.7 L724.3 315.3 L725.2 312.9 L726.2 310.4 L727.1 308.0 L728.1 305.7 L729.2 303.3 L730.4 300.9 L731.7 298.4 L733.0 296.0 L734.4 293.5 L735.8 291.0 L737.3 288.5 L738.7 286.0 L740.1 283.6 L741.5 281.2 L742.8 278.8 L744.1 276.6 L745.3 274.3 L746.4 272.2 L747.6 270.0 L748.7 267.8 L749.8 265.7 L750.9 263.6 L751.9 261.5 L752.9 259.5 L753.8 257.6 L754.2 255.6 L754.6 253.7 L754.8 251.9 L754.9 250.2 L754.9 248.7 L754.3 247.1Z" fill="#c8ebf0"/><path d="M748.8 253.4 L747.2 256.7 L745.4 260.2 L743.6 263.9 L741.6 267.6 L739.7 271.3 L737.6 275.1 L735.3 279.2 L732.8 283.4 L730.3 287.8 L727.8 292.2 L725.4 296.7 L723.2 301.2 L721.2 305.6 L719.5 309.9 L717.8 314.3 L716.3 318.8 L714.9 323.2 L713.7 327.6 L712.8 331.9 L712.1 336.2 L711.8 340.3 L711.7 344.3 L712.0 348.3 L712.5 352.2 L713.2 356.1 L714.3 359.8 L715.5 363.3 L717.0 366.6 L718.7 369.7 L720.7 372.6 L723.0 375.4 L725.6 378.0 L728.4 380.3 L731.3 382.5 L734.4 384.4 L737.5 386.0 L740.6 387.4 L743.9 388.4 L747.3 389.2 L750.9 389.7 L754.5 389.9 L758.1 389.9 L761.6 389.7 L764.9 389.1" fill="none" stroke="#fff" stroke-width="0.99" stroke-dasharray="8.5 4.9 10.4 4.5" opacity="0.85"/><path d="M716.4 359.1 L717.6 362.4 L719.0 365.6 L720.7 368.5 L722.5 371.2 L724.7 373.8 L727.2 376.3 L729.8 378.5 L732.6 380.6 L735.5 382.4 L738.5 384.0 L741.4 385.2 L744.5 386.2 L747.7 386.9 L751.1 387.4 L754.6 387.6 L758.0 387.6 L761.3 387.4 L764.5 386.9 L767.4 386.1 L770.1 385.1 L772.8 383.7 L775.3 382.0 L777.8 380.0 L780.1 377.9 L782.2 375.7 L784.2 373.5 L786.0 371.3 L787.6 369.1 L789.0 366.9 L790.3 364.7 L791.4 362.3 L792.3 359.9 L793.0 357.3 L793.5 354.6 L793.8 351.8 L793.8 348.7 L793.6 345.3 L793.2 341.8 L792.6 338.2 L791.8 334.5 L790.9 330.8 L789.8 327.2 L788.5 323.6" fill="none" stroke="#fff" stroke-width="0.85" stroke-dasharray="9.2 3.8 7.7 2.7" opacity="0.85"/></g><g transform="translate(835 555) rotate(0) scale(0.693) translate(-755 -271)"><path d="M740.8 152.8 L739.3 153.5 L737.7 154.4 L736.0 155.6 L734.0 156.9 L732.0 158.5 L729.8 160.2 L727.5 162.0 L725.2 164.0 L722.8 166.1 L720.5 168.4 L718.2 170.7 L715.9 173.2 L713.8 175.7 L711.8 178.3 L709.9 181.0 L708.0 183.8 L706.1 186.8 L704.3 189.8 L702.4 193.0 L700.6 196.2 L698.8 199.5 L697.0 202.9 L695.4 206.3 L693.8 209.8 L692.4 213.3 L691.1 216.9 L689.8 220.4 L688.7 223.9 L687.7 227.3 L686.7 230.8 L685.8 234.4 L685.0 238.0 L684.2 241.6 L683.5 245.2 L682.9 248.8 L682.4 252.4 L681.9 256.0 L681.5 259.6 L681.3 263.2 L681.1 266.7 L681.0 270.2 L681.0 273.6 L681.1 277.1 L681.4 280.6 L681.8 284.0 L682.3 287.5 L682.9 290.8 L683.6 294.2 L684.4 297.4 L685.2 300.6 L686.0 303.7 L686.9 306.6 L687.7 309.5 L688.5 312.2 L689.5 314.7 L690.5 317.1 L691.5 319.4 L692.6 321.8 L693.8 324.0 L695.0 326.0 L696.2 328.0 L697.4 329.9 L698.6 331.6 L699.8 333.2 L700.9 334.6 L702.0 335.9 L703.1 337.1 L704.1 338.1 L705.1 338.9 L706.3 339.4 L706.9 339.2 L707.2 337.9 L707.1 336.5 L706.9 335.1 L706.5 333.6 L706.1 331.9 L705.6 330.2 L705.1 328.4 L704.6 326.5 L704.0 324.5 L703.5 322.4 L702.9 320.3 L702.4 318.2 L701.9 316.0 L701.5 313.7 L701.1 311.2 L700.5 308.6 L699.7 305.9 L698.9 303.2 L698.1 300.3 L697.3 297.4 L696.5 294.5 L695.8 291.5 L695.2 288.4 L694.6 285.4 L694.2 282.3 L693.8 279.3 L693.6 276.3 L693.4 273.4 L693.4 270.4 L693.5 267.2 L693.7 264.0 L694.0 260.8 L694.3 257.5 L694.8 254.1 L695.3 250.8 L695.8 247.4 L696.5 244.0 L697.2 240.7 L698.0 237.3 L698.8 234.0 L699.7 230.8 L700.7 227.5 L701.7 224.3 L702.8 221.1 L704.0 217.8 L705.3 214.5 L706.6 211.2 L707.9 207.8 L709.3 204.5 L710.7 201.2 L712.1 197.9 L713.6 194.8 L715.0 191.7 L716.5 188.8 L718.0 185.9 L719.4 183.3 L720.9 180.7 L722.5 178.2 L724.2 175.7 L726.0 173.2 L727.9 170.8 L729.8 168.5 L731.7 166.2 L733.5 164.0 L735.3 161.9 L736.9 159.9 L738.3 158.1 L739.6 156.3 L740.6 154.7 L741.2 153.2Z" fill="#d5dea4"/><path d="M738.5 154.5 L735.8 157.0 L732.6 160.1 L729.1 163.6 L725.4 167.4 L721.6 171.5 L718.1 175.9 L715.0 180.4 L712.0 185.2 L709.1 190.4 L706.2 195.9 L703.3 201.7 L700.7 207.6 L698.2 213.6" fill="none" stroke="#fff" stroke-width="0.93" stroke-dasharray="3.6 4.9 15.2 4.9" opacity="0.85"/><path d="M723.8 166.0 L720.1 170.1 L716.5 174.6 L713.2 179.2 L710.2 184.1 L707.2 189.4 L704.3 195.0 L701.4 200.8 L698.7 206.8 L696.2 212.8 L693.9 218.9 L692.0 224.9 L690.3 230.8 L688.7 236.9 L687.4 243.1 L686.3 249.3 L685.4 255.5 L684.8 261.7 L684.4 267.7 L684.3 273.6" fill="none" stroke="#fff" stroke-width="0.89" stroke-dasharray="9.4 5.8 16.1 3.3" opacity="0.85"/><path d="M760.8 146.6 L761.2 148.2 L762.1 149.9 L763.2 151.7 L764.5 153.7 L765.9 155.8 L767.5 158.1 L769.2 160.4 L770.9 162.8 L772.7 165.3 L774.4 167.8 L776.1 170.3 L777.8 172.8 L779.3 175.3 L780.8 177.7 L782.1 180.2 L783.6 182.7 L785.0 185.4 L786.4 188.1 L787.8 190.8 L789.2 193.6 L790.6 196.5 L791.9 199.3 L793.2 202.2 L794.6 205.0 L796.0 207.8 L797.3 210.6 L798.5 213.4 L799.7 216.2 L800.8 219.0 L801.9 221.9 L802.9 224.7 L804.0 227.6 L805.0 230.5 L805.9 233.4 L806.8 236.3 L807.6 239.2 L808.4 242.1 L809.1 245.0 L809.7 247.9 L810.2 250.8 L810.7 253.6 L811.1 256.4 L811.4 259.2 L811.7 262.1 L811.8 265.0 L811.9 267.9 L811.9 270.8 L811.9 273.7 L811.8 276.6 L811.6 279.6 L811.4 282.5 L811.1 285.3 L810.8 288.2 L810.5 291.0 L810.1 293.8 L809.7 296.5 L809.3 299.1 L808.8 301.7 L808.1 304.5 L807.5 307.2 L806.7 309.9 L805.9 312.6 L805.1 315.3 L804.3 317.9 L803.5 320.4 L803.0 322.9 L802.5 325.3 L802.0 327.6 L801.6 329.7 L801.2 331.5 L800.9 333.1 L800.6 334.5 L800.3 335.8 L800.0 336.9 L799.7 338.0 L799.4 338.9 L799.1 339.8 L798.8 340.6 L798.6 341.4 L798.3 342.1 L798.1 342.8 L797.9 343.6 L797.8 344.3 L798.1 345.1 L798.5 345.5 L799.4 345.4 L800.0 345.3 L800.6 345.1 L801.3 344.8 L802.0 344.4 L802.8 343.9 L803.7 343.3 L804.5 342.5 L805.5 341.7 L806.4 340.7 L807.4 339.5 L808.4 338.2 L809.4 336.7 L810.4 335.1 L811.4 333.3 L812.4 331.4 L813.6 329.3 L814.7 327.1 L815.9 324.6 L816.9 322.0 L817.8 319.3 L818.6 316.4 L819.5 313.5 L820.3 310.6 L821.1 307.6 L821.7 304.5 L822.3 301.5 L822.9 298.5 L823.3 295.6 L823.7 292.7 L824.0 289.7 L824.4 286.6 L824.6 283.5 L824.9 280.4 L825.0 277.2 L825.1 274.0 L825.2 270.8 L825.2 267.6 L825.1 264.4 L824.9 261.2 L824.6 258.0 L824.3 254.8 L823.8 251.6 L823.3 248.4 L822.7 245.2 L822.0 242.1 L821.2 238.9 L820.4 235.7 L819.5 232.6 L818.6 229.5 L817.6 226.4 L816.5 223.3 L815.4 220.2 L814.3 217.2 L813.1 214.2 L811.9 211.2 L810.7 208.2 L809.4 205.2 L808.0 202.2 L806.5 199.2 L805.0 196.2 L803.3 193.3 L801.6 190.5 L799.9 187.6 L798.1 184.9 L796.3 182.2 L794.5 179.6 L792.7 177.0 L790.9 174.5 L789.0 172.1 L787.1 169.7 L785.1 167.3 L783.0 164.9 L780.8 162.6 L778.5 160.3 L776.3 158.1 L774.1 156.1 L771.9 154.1 L769.8 152.3 L767.9 150.6 L766.0 149.2 L764.3 147.9 L762.7 146.9 L761.2 146.2Z" fill="#d5dea4"/><path d="M780.0 172.0 L783.0 176.2 L785.8 180.5 L788.6 185.0 L791.3 189.7 L794.1 194.6 L796.7 199.5 L799.2 204.5 L801.5 209.6 L803.6 214.6 L805.6 219.6 L807.5 224.7 L809.3 229.9 L810.9 235.1 L812.4 240.3 L813.6 245.5 L814.6 250.7 L815.4 255.9 L815.9 261.1 L816.2 266.3" fill="none" stroke="#fff" stroke-width="0.79" stroke-dasharray="11.4 4.6 15.8 3.8" opacity="0.85"/><path d="M768.5 154.4 L771.8 158.1 L775.3 162.1 L778.7 166.3 L782.1 170.5 L785.1 174.8 L787.9 179.1 L790.7 183.7 L793.5 188.5 L796.3 193.4 L798.9 198.4 L801.5 203.5 L803.8 208.6 L806.0 213.6 L808.0 218.7 L809.9 223.9 L811.7 229.1" fill="none" stroke="#fff" stroke-width="1.09" stroke-dasharray="7.7 4.8 16.9 4.2" opacity="0.85"/><path d="M752.7 146.0 L752.0 147.8 L751.6 150.1 L751.3 152.6 L751.0 155.5 L750.7 158.7 L750.5 162.1 L750.3 165.6 L750.1 169.2 L749.9 172.9 L749.8 176.5 L749.9 180.1 L750.0 183.6 L750.1 186.9 L750.2 190.0 L750.3 192.9 L750.5 196.0 L750.6 199.0 L750.7 202.0 L750.9 205.0 L751.0 207.9 L751.2 210.9 L751.3 213.7 L751.4 216.5 L751.5 219.2 L751.6 221.7 L751.7 224.2 L751.7 226.5 L751.7 228.7 L751.7 230.7 L751.6 232.6 L751.5 234.5 L751.3 236.3 L751.2 238.1 L751.0 239.7 L750.8 241.3 L750.6 242.7 L750.5 244.1 L750.3 245.4 L750.1 246.6 L750.0 247.7 L749.8 248.7 L749.7 249.5 L758.3 250.5 L758.4 249.7 L758.5 248.8 L758.6 247.8 L758.8 246.6 L759.0 245.3 L759.2 243.8 L759.4 242.3 L759.6 240.7 L759.7 238.9 L759.9 237.0 L760.1 235.1 L760.2 233.1 L760.3 230.9 L760.3 228.7 L760.3 226.4 L760.3 224.0 L760.2 221.5 L760.1 218.9 L760.0 216.1 L759.9 213.3 L759.8 210.5 L759.6 207.5 L759.5 204.6 L759.3 201.6 L759.2 198.6 L759.0 195.6 L758.9 192.6 L758.8 189.6 L758.7 186.6 L758.6 183.3 L758.4 179.8 L758.3 176.2 L757.9 172.6 L757.5 168.9 L757.0 165.4 L756.6 161.9 L756.2 158.5 L755.7 155.4 L755.2 152.5 L754.7 149.9 L754.1 147.8 L753.3 146.0Z" fill="#d5dea4"/><path d="M753.4 178.2 L753.6 184.3 L753.8 189.8 L754.0 195.0 L754.2 200.3 L754.5 205.6 L754.7 210.7 L755.0 215.6 L755.1 220.4 L755.3 224.7 L755.3 228.7" fill="none" stroke="#fff" stroke-width="1.09" stroke-dasharray="3.8 2.2 5.3 3.7" opacity="0.85"/><path d="M755.2 189.8 L755.4 195.0 L755.6 200.2 L755.9 205.5 L756.1 210.6 L756.4 215.6 L756.6 220.3 L756.7 224.7 L756.7 228.7" fill="none" stroke="#fff" stroke-width="0.86" stroke-dasharray="6.8 5.2 6.1 4.3" opacity="0.85"/><path d="M603.5 227.5 L605.2 229.2 L607.0 230.0 L609.1 230.6 L611.4 231.0 L613.8 231.2 L616.2 230.7 L618.7 230.3 L621.3 229.8 L623.8 229.4 L626.3 229.1 L628.7 228.8 L630.9 228.6 L633.0 228.5 L634.8 228.6 L636.4 228.7 L638.1 228.9 L639.7 229.1 L641.3 229.5 L642.8 229.8 L644.4 230.3 L645.9 230.8 L647.5 231.3 L649.1 231.9 L650.7 232.6 L652.4 233.2 L654.2 233.9 L656.0 234.7 L657.8 235.4 L659.7 236.0 L661.8 236.6 L664.0 237.4 L666.3 238.2 L668.6 239.0 L671.0 239.9 L673.4 240.7 L675.7 241.5 L677.9 242.2 L680.1 242.9 L682.1 243.5 L683.9 243.9 L685.5 244.1 L687.1 243.9 L687.3 243.3 L686.6 242.0 L685.5 240.8 L684.2 239.5 L682.6 238.1 L680.9 236.7 L679.0 235.3 L677.0 233.8 L674.9 232.3 L672.7 230.9 L670.5 229.5 L668.4 228.1 L666.2 226.8 L664.2 225.7 L662.2 224.6 L660.4 223.8 L658.6 223.1 L656.8 222.4 L655.0 221.7 L653.3 221.0 L651.5 220.3 L649.6 219.7 L647.7 219.1 L645.8 218.5 L643.8 218.0 L641.8 217.6 L639.7 217.3 L637.5 217.0 L635.2 216.8 L632.8 216.8 L630.2 216.9 L627.5 217.1 L624.8 217.4 L622.1 217.8 L619.3 218.3 L616.7 218.7 L614.0 219.2 L611.6 219.7 L609.4 220.8 L607.4 222.1 L605.8 223.4 L604.4 224.8 L603.5 226.9Z" fill="#d5dea4"/><path d="M635.1 220.7 L638.7 221.0 L642.1 221.6 L645.3 222.3 L648.4 223.3 L651.5 224.4 L654.5 225.6 L657.6 226.8 L660.8 228.1 L664.3 229.6 L668.2 231.5 L672.1 233.4 L676.1 235.5 L679.8 237.4 L683.2 239.2" fill="none" stroke="#fff" stroke-width="1.02" stroke-dasharray="6.8 4.1 6.5 4.6" opacity="0.85"/><path d="M638.3 223.9 L641.5 224.4 L644.5 225.2 L647.5 226.1 L650.4 227.1 L653.4 228.3 L656.5 229.5 L659.7 230.8 L663.1 232.3 L666.9 234.1 L670.8 236.0 L674.8 238.0 L678.5 240.0 L681.8 241.8 L684.7 243.3" fill="none" stroke="#fff" stroke-width="1.03" stroke-dasharray="8.0 2.6 8.6 3.6" opacity="0.85"/><path d="M606.8 229.2 L606.5 232.3 L607.3 234.6 L608.6 236.7 L610.7 238.2 L612.9 239.9 L615.2 241.7 L617.7 243.6 L620.3 245.7 L622.9 247.8 L625.7 250.0 L628.4 252.3 L631.1 254.7 L633.8 257.2 L636.5 259.7 L639.3 262.4 L642.3 265.5 L645.6 268.9 L649.2 272.5 L652.9 276.0 L656.7 279.7 L660.5 283.3 L664.2 286.9 L667.8 290.3 L671.3 293.5 L674.5 296.4 L677.4 298.9 L680.1 300.9 L682.5 302.2 L682.9 301.8 L681.8 299.3 L680.1 296.5 L677.9 293.3 L675.4 289.8 L672.6 286.1 L669.5 282.1 L666.3 278.0 L663.0 273.9 L659.7 269.8 L656.3 265.7 L653.0 261.9 L649.6 258.4 L646.4 255.2 L643.5 252.3 L640.7 249.7 L637.9 247.1 L635.0 244.6 L632.2 242.2 L629.3 239.9 L626.6 237.7 L624.0 235.6 L621.4 233.7 L619.0 231.8 L616.8 230.1 L614.8 228.6 L612.5 227.9 L610.1 227.8 L607.2 228.8Z" fill="#d5dea4"/><path d="M620.1 240.6 L624.7 244.2 L629.5 248.2 L634.4 252.4 L639.2 256.9 L644.3 262.0 L650.1 268.1 L656.3 274.7" fill="none" stroke="#fff" stroke-width="0.90" stroke-dasharray="8.9 2.4 9.7 2.4" opacity="0.85"/><path d="M609.4 231.0 L612.6 233.5 L616.5 236.4 L620.8 239.7 L625.4 243.4 L630.2 247.3 L635.1 251.6 L639.9 256.1 L645.1 261.2 L650.9 267.3 L657.1 273.9" fill="none" stroke="#fff" stroke-width="0.78" stroke-dasharray="9.7 5.1 16.1 4.4" opacity="0.85"/><path d="M601.7 236.0 L600.3 237.9 L599.3 240.2 L598.4 242.9 L597.4 246.0 L596.5 249.4 L595.6 253.1 L594.8 257.0 L594.0 261.1 L593.4 265.3 L593.2 269.6 L593.3 274.0 L593.6 278.4 L594.1 282.7 L594.9 286.8 L595.9 290.9 L597.1 294.9 L598.4 299.0 L599.8 303.1 L601.4 307.3 L603.1 311.5 L605.0 315.7 L606.9 319.8 L609.0 323.9 L611.2 328.0 L613.5 331.9 L615.9 335.8 L618.4 339.5 L621.0 343.0 L623.7 346.5 L626.5 349.9 L629.5 353.3 L632.6 356.5 L635.8 359.8 L639.1 362.9 L642.4 365.9 L645.9 368.8 L649.4 371.6 L653.0 374.3 L656.6 376.9 L660.3 379.3 L664.0 381.6 L667.7 383.7 L671.7 385.7 L675.7 387.5 L679.9 389.1 L684.2 390.5 L688.4 391.8 L692.7 392.9 L697.0 393.9 L701.2 394.9 L705.3 395.7 L709.3 396.5 L713.1 397.2 L716.8 397.9 L720.2 398.3 L723.5 398.7 L726.7 399.0 L729.9 399.2 L733.0 399.3 L736.0 399.4 L738.9 399.3 L741.6 399.2 L744.2 399.1 L746.7 398.8 L748.9 398.6 L751.0 398.2 L752.9 397.9 L754.6 397.5 L756.1 397.0 L757.5 396.3 L757.5 395.7 L756.3 394.8 L754.8 394.2 L753.1 393.6 L751.2 393.2 L749.1 392.7 L747.0 392.3 L744.6 391.8 L742.2 391.3 L739.6 390.8 L737.0 390.2 L734.2 389.6 L731.5 388.9 L728.6 388.2 L725.7 387.3 L722.5 386.4 L719.1 385.6 L715.4 384.9 L711.6 384.2 L707.7 383.4 L703.8 382.6 L699.8 381.8 L695.8 380.8 L691.8 379.7 L687.9 378.6 L684.1 377.3 L680.5 375.9 L677.0 374.4 L673.7 372.7 L670.4 370.8 L667.0 368.8 L663.7 366.6 L660.4 364.2 L657.1 361.8 L653.8 359.2 L650.6 356.5 L647.5 353.7 L644.5 350.8 L641.6 347.9 L638.7 344.8 L636.0 341.8 L633.4 338.7 L631.0 335.6 L628.7 332.3 L626.4 329.0 L624.2 325.5 L622.1 321.8 L620.1 318.1 L618.1 314.3 L616.3 310.5 L614.6 306.6 L613.0 302.7 L611.5 298.8 L610.2 295.0 L609.0 291.3 L608.0 287.6 L607.1 284.2 L606.4 280.7 L606.0 277.2 L605.8 273.4 L605.7 269.6 L605.6 265.7 L605.3 261.7 L605.1 257.8 L605.0 254.0 L604.8 250.3 L604.6 246.8 L604.4 243.6 L604.0 240.7 L603.5 238.1 L602.3 236.0Z" fill="#d5dea4"/><path d="M599.1 271.7 L599.5 278.8 L600.6 285.6 L602.4 292.2 L604.6 299.1 L607.3 306.2 L610.3 313.2 L613.7 320.2 L617.4 327.0 L621.4 333.5 L625.7 339.5 L630.3 345.3 L635.3 350.9 L640.7 356.3 L646.3 361.5 L652.2 366.3 L658.2 370.8 L664.3 374.9 L670.5 378.5 L677.0 381.6 L683.9 384.2 L691.1 386.4" fill="none" stroke="#fff" stroke-width="0.61" stroke-dasharray="10.5 4.5 8.0 4.4" opacity="0.85"/><path d="M600.1 278.7 L601.2 285.5 L602.9 292.1 L605.1 298.9 L607.8 305.9 L610.8 313.0 L614.2 319.9 L617.9 326.7 L621.9 333.1 L626.2 339.2 L630.7 344.9 L635.7 350.5 L641.1 355.9 L646.7 361.0 L652.5 365.9 L658.5 370.4 L664.6 374.4 L670.8 378.0 L677.2 381.1" fill="none" stroke="#fff" stroke-width="1.06" stroke-dasharray="6.3 3.0 10.4 3.2" opacity="0.85"/><path d="M820.8 238.0 L822.2 238.3 L823.7 238.3 L825.4 238.2 L827.2 237.9 L829.2 237.5 L831.3 237.1 L833.4 236.7 L835.7 236.2 L838.1 235.8 L840.5 235.4 L843.0 235.0 L845.6 234.7 L848.1 234.5 L850.7 234.3 L853.5 234.1 L856.8 233.8 L860.3 233.6 L864.1 233.4 L868.1 233.2 L872.1 233.1 L876.2 233.0 L880.2 232.9 L884.0 232.9 L887.7 232.8 L891.0 232.7 L894.0 231.4 L896.5 230.0 L898.5 227.5 L898.5 226.9 L896.4 224.5 L893.9 223.2 L890.9 222.0 L887.6 221.9 L883.9 222.0 L880.0 222.0 L876.0 222.1 L871.8 222.2 L867.7 222.3 L863.6 222.5 L859.7 222.7 L855.9 222.9 L852.4 223.2 L849.3 223.7 L846.4 224.4 L843.5 225.2 L840.8 226.1 L838.2 227.1 L835.7 228.1 L833.4 229.2 L831.2 230.2 L829.1 231.3 L827.3 232.4 L825.5 233.4 L824.0 234.4 L822.6 235.4 L821.5 236.3 L820.6 237.4Z" fill="#d5dea4"/><path d="M829.4 236.7 L833.0 235.4 L836.9 234.1 L841.2 232.9 L845.6 231.9 L850.3 231.1 L855.6 230.5" fill="none" stroke="#fff" stroke-width="1.03" stroke-dasharray="12.1 2.8 7.1 4.3" opacity="0.85"/><path d="M836.8 233.8 L841.1 232.6 L845.6 231.5 L850.2 230.7 L855.6 230.2 L862.0 229.8 L869.0 229.5 L876.1 229.3 L883.0 229.2 L889.4 229.1" fill="none" stroke="#fff" stroke-width="1.03" stroke-dasharray="6.6 5.8 9.1 4.1" opacity="0.85"/><path d="M902.7 233.3 L902.0 234.7 L901.9 236.0 L902.1 237.3 L902.3 238.7 L902.6 240.1 L902.9 241.6 L903.2 243.1 L903.4 244.6 L903.6 246.2 L903.7 247.9 L903.7 249.6 L903.6 251.4 L903.8 253.3 L903.9 255.5 L903.8 258.2 L903.6 261.3 L903.4 264.7 L903.0 268.4 L902.6 272.2 L902.2 276.2 L901.6 280.3 L900.9 284.4 L900.2 288.5 L899.4 292.6 L898.5 296.5 L897.5 300.3 L896.4 303.8 L895.3 307.1 L894.0 310.2 L892.7 313.4 L891.2 316.4 L889.6 319.4 L888.0 322.4 L886.2 325.3 L884.4 328.2 L882.5 331.0 L880.5 333.8 L878.4 336.5 L876.3 339.2 L874.2 341.8 L872.0 344.3 L869.7 346.8 L867.4 349.3 L865.1 351.7 L862.7 354.0 L860.2 356.4 L857.7 358.6 L855.1 360.8 L852.5 362.9 L849.9 364.9 L847.2 366.9 L844.4 368.8 L841.6 370.5 L838.7 372.2 L835.8 373.7 L832.9 375.2 L829.9 376.5 L826.6 377.8 L823.0 379.2 L819.1 380.6 L815.1 381.9 L811.0 383.2 L807.0 384.4 L803.0 385.6 L799.1 386.8 L795.5 387.9 L792.2 389.0 L789.2 390.2 L786.7 391.4 L784.8 392.9 L785.0 393.5 L787.3 394.2 L790.0 394.4 L793.1 394.4 L796.6 394.4 L800.4 394.3 L804.5 394.0 L808.8 393.7 L813.1 393.3 L817.6 392.7 L822.0 392.0 L826.4 391.2 L830.7 390.2 L834.7 388.8 L838.5 387.2 L841.9 385.5 L845.2 383.8 L848.5 381.9 L851.7 379.9 L854.8 377.8 L857.8 375.6 L860.7 373.3 L863.6 371.0 L866.5 368.6 L869.2 366.1 L871.9 363.6 L874.5 361.0 L877.0 358.4 L879.5 355.8 L881.9 353.1 L884.3 350.3 L886.6 347.5 L888.9 344.6 L891.2 341.6 L893.4 338.6 L895.5 335.5 L897.5 332.3 L899.4 329.1 L901.3 325.7 L903.1 322.3 L904.7 318.9 L906.3 315.3 L907.7 311.7 L909.0 307.9 L910.3 303.9 L911.4 299.7 L912.3 295.4 L913.2 291.0 L914.0 286.6 L914.7 282.3 L915.3 277.9 L915.8 273.7 L916.3 269.7 L916.6 265.8 L916.9 262.2 L917.0 258.8 L917.1 255.7 L917.1 252.6 L916.8 249.7 L916.0 247.0 L915.0 244.7 L913.9 242.5 L912.7 240.6 L911.5 239.0 L910.2 237.6 L909.0 236.4 L907.8 235.4 L906.7 234.6 L905.7 233.9 L904.7 233.4 L903.3 233.1Z" fill="#d5dea4"/><path d="M910.3 267.2 L909.6 274.1 L908.6 281.4 L907.4 288.8 L905.9 296.2 L904.1 303.2 L902.0 309.6 L899.5 315.5 L896.8 321.2 L893.7 326.8 L890.3 332.1 L886.8 337.3 L883.0 342.3 L879.0 347.0 L875.0 351.6 L870.8 356.1" fill="none" stroke="#fff" stroke-width="0.98" stroke-dasharray="3.4 3.6 12.5 3.3" opacity="0.85"/><path d="M913.3 261.1 L912.8 267.4 L912.1 274.3 L911.1 281.7 L909.8 289.3 L908.3 296.7 L906.5 303.9 L904.3 310.4 L901.8 316.5 L899.0 322.4 L895.8 328.0 L892.4 333.5 L888.8 338.7 L884.9 343.8 L880.9 348.7 L876.8 353.3 L872.5 357.8 L868.0 362.2" fill="none" stroke="#fff" stroke-width="1.02" stroke-dasharray="3.0 4.2 16.6 4.7" opacity="0.85"/><path d="M902.8 234.5 L899.4 233.6 L896.5 234.1 L894.1 235.7 L891.6 237.8 L888.9 240.1 L886.1 242.5 L883.1 245.1 L880.0 247.8 L876.8 250.5 L873.6 253.3 L870.5 256.1 L867.4 258.9 L864.4 261.7 L861.5 264.3 L858.7 267.0 L855.7 269.9 L852.6 273.0 L849.6 276.3 L846.6 279.7 L843.6 283.2 L840.7 286.6 L838.0 289.9 L835.4 293.2 L832.9 296.2 L830.8 299.1 L828.9 301.7 L827.4 304.0 L826.5 306.2 L826.9 306.6 L829.1 305.6 L831.4 304.1 L834.0 302.2 L836.8 299.9 L839.8 297.5 L842.9 294.8 L846.2 292.0 L849.6 289.1 L853.0 286.1 L856.3 283.1 L859.7 280.2 L862.8 277.2 L865.7 274.3 L868.5 271.7 L871.3 269.1 L874.2 266.4 L877.2 263.7 L880.3 260.9 L883.5 258.2 L886.6 255.5 L889.7 252.8 L892.7 250.2 L895.5 247.8 L898.2 245.5 L900.7 243.4 L902.6 241.2 L903.5 238.4 L903.2 234.9Z" fill="#d5dea4"/><path d="M874.5 257.5 L869.1 262.4 L864.1 267.0 L859.0 271.9 L853.6 277.2 L848.0 282.8 L842.5 288.3 L837.3 293.7 L832.6 298.4" fill="none" stroke="#fff" stroke-width="0.66" stroke-dasharray="11.7 5.2 15.2 3.1" opacity="0.85"/><path d="M901.1 238.5 L897.2 241.8 L892.6 245.8 L887.5 250.2 L882.0 254.9 L876.5 259.8 L871.1 264.6 L866.1 269.2 L861.1 274.0" fill="none" stroke="#fff" stroke-width="0.95" stroke-dasharray="10.3 3.5 10.6 3.4" opacity="0.85"/><path d="M753.7 246.9 L751.8 247.2 L750.4 248.0 L749.0 249.0 L747.7 250.2 L746.2 251.6 L744.8 253.1 L743.7 254.9 L742.8 256.9 L741.7 259.0 L740.7 261.0 L739.6 263.2 L738.5 265.3 L737.4 267.4 L736.3 269.5 L735.1 271.6 L733.9 273.8 L732.6 276.1 L731.3 278.4 L729.9 280.9 L728.4 283.3 L727.0 285.9 L725.5 288.4 L724.0 291.0 L722.6 293.6 L721.3 296.3 L720.0 298.9 L718.8 301.5 L717.7 304.1 L716.6 306.7 L715.7 309.2 L714.7 311.7 L713.8 314.3 L712.9 316.9 L712.0 319.5 L711.2 322.1 L710.5 324.7 L709.8 327.3 L709.2 329.9 L708.8 332.5 L708.4 335.1 L708.1 337.6 L707.9 340.1 L707.8 342.6 L707.9 345.1 L708.0 347.5 L708.3 349.9 L708.6 352.3 L709.0 354.6 L709.5 357.0 L710.1 359.2 L710.8 361.5 L711.5 363.6 L712.4 365.8 L713.3 367.8 L714.3 369.8 L715.4 371.7 L716.6 373.6 L718.0 375.4 L719.4 377.2 L721.0 378.8 L722.6 380.4 L724.3 381.9 L726.0 383.4 L727.8 384.7 L729.7 386.0 L731.5 387.2 L733.4 388.3 L735.4 389.3 L737.3 390.2 L739.3 391.0 L741.3 391.7 L743.4 392.3 L745.5 392.8 L747.7 393.2 L749.9 393.5 L752.1 393.7 L754.3 393.8 L756.6 393.8 L758.8 393.8 L760.9 393.6 L763.1 393.4 L765.2 393.0 L767.2 392.6 L769.2 392.0 L771.2 391.3 L773.2 390.5 L775.0 389.5 L776.8 388.4 L778.5 387.2 L780.2 386.0 L781.8 384.7 L783.3 383.4 L784.7 382.0 L786.1 380.6 L787.4 379.2 L788.6 377.8 L789.8 376.4 L790.8 375.1 L791.9 373.7 L792.8 372.3 L793.8 370.9 L794.7 369.4 L795.5 367.9 L796.3 366.3 L797.0 364.7 L797.7 363.1 L798.3 361.4 L798.8 359.6 L799.2 357.8 L799.5 356.0 L799.8 354.1 L799.9 352.1 L800.0 350.1 L800.0 348.0 L799.8 345.9 L799.7 343.7 L799.4 341.5 L799.1 339.3 L798.7 337.1 L798.2 334.8 L797.7 332.6 L797.1 330.3 L796.5 328.0 L795.8 325.8 L795.1 323.6 L794.3 321.4 L793.4 319.2 L792.4 317.0 L791.3 314.9 L790.2 312.9 L788.9 310.9 L787.7 308.9 L786.4 306.9 L785.0 305.0 L783.7 303.1 L782.4 301.1 L781.1 299.1 L779.8 297.1 L778.5 295.1 L777.2 293.0 L775.9 290.7 L774.4 288.2 L772.9 285.5 L771.3 282.7 L769.7 279.8 L768.0 277.0 L766.4 274.1 L764.8 271.4 L763.2 268.7 L761.7 266.3 L760.2 264.0 L758.9 262.1 L757.6 260.4 L756.4 259.2 L755.8 259.5 L756.0 261.2 L756.5 263.2 L757.2 265.5 L758.0 268.0 L759.0 270.7 L760.0 273.6 L761.1 276.6 L762.3 279.7 L763.6 282.8 L764.8 285.9 L766.0 288.9 L767.2 291.7 L768.4 294.4 L769.5 297.0 L770.6 299.4 L771.8 301.7 L772.9 303.9 L774.1 306.1 L775.3 308.2 L776.4 310.3 L777.5 312.3 L778.6 314.3 L779.6 316.2 L780.5 318.1 L781.4 320.0 L782.3 321.8 L783.0 323.5 L783.8 325.4 L784.4 327.2 L785.1 329.2 L785.7 331.2 L786.2 333.2 L786.8 335.2 L787.2 337.2 L787.6 339.2 L788.0 341.1 L788.2 343.0 L788.5 344.9 L788.6 346.7 L788.7 348.4 L788.7 350.0 L788.7 351.5 L788.6 352.9 L788.4 354.3 L788.2 355.6 L787.9 356.8 L787.5 358.0 L787.1 359.2 L786.7 360.4 L786.2 361.5 L785.6 362.6 L785.0 363.7 L784.3 364.9 L783.6 366.0 L782.8 367.1 L781.9 368.2 L781.0 369.4 L780.1 370.5 L779.0 371.7 L778.0 372.9 L776.8 374.0 L775.7 375.1 L774.5 376.2 L773.3 377.2 L772.0 378.1 L770.8 378.9 L769.5 379.7 L768.3 380.3 L767.1 380.9 L765.9 381.3 L764.5 381.7 L763.1 382.0 L761.5 382.2 L759.9 382.4 L758.2 382.5 L756.5 382.6 L754.7 382.6 L753.0 382.5 L751.2 382.3 L749.5 382.0 L747.8 381.7 L746.2 381.4 L744.7 380.9 L743.2 380.4 L741.8 379.9 L740.3 379.2 L738.8 378.4 L737.3 377.5 L735.8 376.6 L734.4 375.6 L733.0 374.5 L731.6 373.4 L730.3 372.2 L729.1 371.0 L727.9 369.8 L726.8 368.5 L725.9 367.2 L725.0 365.8 L724.2 364.4 L723.4 362.9 L722.7 361.4 L722.1 359.7 L721.5 358.0 L720.9 356.2 L720.4 354.4 L720.0 352.5 L719.7 350.6 L719.4 348.6 L719.2 346.6 L719.1 344.6 L719.1 342.6 L719.1 340.6 L719.3 338.6 L719.5 336.6 L719.8 334.4 L720.3 332.2 L720.8 329.9 L721.4 327.6 L722.0 325.3 L722.7 322.9 L723.5 320.5 L724.4 318.1 L725.2 315.6 L726.1 313.2 L727.1 310.8 L728.0 308.4 L729.0 306.1 L730.1 303.8 L731.3 301.3 L732.6 298.9 L733.9 296.4 L735.3 294.0 L736.7 291.5 L738.1 289.0 L739.6 286.5 L741.0 284.1 L742.4 281.7 L743.7 279.3 L745.0 277.0 L746.2 274.8 L747.3 272.6 L748.5 270.5 L749.6 268.3 L750.7 266.1 L751.8 264.0 L752.8 262.0 L753.8 260.0 L754.6 258.0 L755.0 256.0 L755.2 254.0 L755.4 252.2 L755.4 250.4 L755.2 248.8 L754.3 247.1Z" fill="#3cbcc8"/><path d="M750.8 250.8 L749.4 253.7 L747.8 257.0 L746.0 260.5 L744.1 264.2 L742.2 267.9 L740.2 271.6 L738.2 275.5 L735.9 279.5 L733.4 283.7 L730.9 288.1 L728.3 292.6 L725.9 297.0 L723.7 301.5 L721.8 305.8 L720.1 310.2 L718.4 314.6 L716.9 319.0 L715.5 323.4 L714.4 327.7 L713.4 332.1 L712.7 336.3 L712.4 340.3 L712.4 344.3 L712.6 348.3 L713.1 352.1 L713.9 355.9 L714.9 359.6 L716.1 363.0 L717.6 366.3 L719.3 369.4 L721.2 372.2" fill="none" stroke="#fff" stroke-width="1.05" stroke-dasharray="11.0 3.2 14.8 3.6" opacity="0.85"/><path d="M755.9 247.9 L754.9 249.8 L753.7 252.3 L752.3 255.1 L750.6 258.4 L748.9 261.9 L747.0 265.6 L745.1 269.4 L743.1 273.2 L741.0 277.0 L738.6 281.1 L736.2 285.4 L733.6 289.7 L731.2 294.1 L728.8 298.5 L726.6 302.8 L724.8 307.1 L723.1 311.3 L721.5 315.7 L720.0 320.0 L718.6 324.3 L717.5 328.5 L716.6 332.6 L715.9 336.6 L715.6 340.5 L715.6 344.2 L715.8 348.0 L716.3 351.6 L717.0 355.2 L717.9 358.6 L719.1 361.9 L720.5 364.9 L722.0 367.7 L723.8 370.3 L725.9 372.8 L728.2 375.1 L730.8 377.3 L733.5 379.3 L736.3 381.0 L739.2 382.5 L742.0 383.7 L744.9 384.7 L748.0 385.4 L751.3 385.8 L754.6 386.1 L757.9 386.1 L761.1 385.8" fill="none" stroke="#fff" stroke-width="0.76" stroke-dasharray="3.7 4.9 12.3 3.3" opacity="0.85"/></g><g transform="translate(328 769.5) rotate(-13) scale(0.693) translate(-755 -271)"><path d="M740.8 152.8 L739.3 153.5 L737.8 154.4 L736.0 155.6 L734.1 157.0 L732.0 158.5 L729.8 160.2 L727.6 162.1 L725.3 164.1 L722.9 166.2 L720.6 168.4 L718.3 170.8 L716.0 173.2 L713.9 175.8 L711.9 178.4 L710.0 181.1 L708.1 183.9 L706.2 186.8 L704.4 189.9 L702.5 193.0 L700.7 196.3 L698.9 199.6 L697.2 203.0 L695.5 206.4 L693.9 209.9 L692.5 213.4 L691.2 216.9 L690.0 220.4 L688.9 223.9 L687.8 227.4 L686.9 230.9 L686.0 234.4 L685.2 238.0 L684.4 241.6 L683.7 245.2 L683.1 248.8 L682.5 252.4 L682.1 256.0 L681.7 259.6 L681.4 263.2 L681.2 266.7 L681.1 270.2 L681.1 273.6 L681.2 277.1 L681.5 280.6 L681.9 284.0 L682.5 287.4 L683.1 290.8 L683.8 294.1 L684.5 297.4 L685.3 300.6 L686.2 303.6 L687.0 306.6 L687.9 309.4 L688.7 312.2 L689.6 314.7 L690.6 317.0 L691.6 319.4 L692.7 321.7 L693.9 323.9 L695.1 326.0 L696.3 328.0 L697.5 329.8 L698.7 331.5 L699.8 333.1 L701.0 334.6 L702.1 335.9 L703.1 337.0 L704.2 338.0 L705.2 338.9 L706.3 339.4 L706.9 339.2 L707.2 337.9 L707.1 336.6 L706.8 335.1 L706.5 333.6 L706.1 331.9 L705.6 330.2 L705.0 328.4 L704.5 326.5 L703.9 324.5 L703.4 322.5 L702.8 320.4 L702.3 318.2 L701.8 316.0 L701.4 313.8 L700.9 311.3 L700.3 308.7 L699.6 306.0 L698.7 303.2 L697.9 300.4 L697.1 297.5 L696.4 294.5 L695.7 291.5 L695.1 288.5 L694.5 285.4 L694.0 282.4 L693.7 279.3 L693.4 276.4 L693.3 273.4 L693.3 270.4 L693.4 267.2 L693.6 264.0 L693.8 260.8 L694.2 257.5 L694.6 254.1 L695.1 250.8 L695.7 247.4 L696.3 244.0 L697.1 240.6 L697.8 237.3 L698.7 234.0 L699.6 230.7 L700.5 227.5 L701.6 224.3 L702.7 221.0 L703.9 217.8 L705.2 214.5 L706.5 211.1 L707.8 207.8 L709.2 204.4 L710.6 201.1 L712.0 197.9 L713.4 194.7 L714.9 191.7 L716.4 188.7 L717.9 185.9 L719.3 183.2 L720.8 180.7 L722.4 178.2 L724.2 175.7 L726.0 173.2 L727.9 170.8 L729.8 168.4 L731.6 166.1 L733.5 163.9 L735.2 161.8 L736.8 159.9 L738.3 158.0 L739.6 156.3 L740.6 154.7 L741.2 153.2Z" fill="#d6dfa5"/><path d="M698.1 213.6 L695.9 219.6 L693.9 225.5 L692.2 231.4 L690.7 237.4 L689.4 243.5 L688.3 249.7 L687.4 255.8 L686.8 261.8 L686.5 267.8 L686.4 273.5 L686.7 279.2 L687.4 284.9 L688.4 290.6 L689.7 296.1 L691.1 301.5 L692.5 306.6 L693.9 311.3 L695.2 315.6 L696.6 319.7 L698.0 323.5 L699.6 327.1 L701.1 330.3 L702.6 333.2" fill="none" stroke="#fff" stroke-width="0.93" stroke-dasharray="10.4 3.9 5.9 4.1" opacity="0.85"/><path d="M738.0 159.3 L734.8 162.3 L731.3 165.8 L727.6 169.5 L724.0 173.5 L720.6 177.7 L717.6 182.1 L714.7 186.8 L711.8 191.9 L708.9 197.3 L706.2 203.0 L703.5 208.8 L701.1 214.7 L698.9 220.6 L697.0 226.4 L695.3 232.2 L693.8 238.1 L692.5 244.1 L691.4 250.2" fill="none" stroke="#fff" stroke-width="0.88" stroke-dasharray="8.6 3.0 13.1 4.8" opacity="0.85"/><path d="M760.8 146.6 L761.2 148.2 L762.1 149.9 L763.2 151.7 L764.5 153.7 L766.0 155.8 L767.6 158.0 L769.3 160.3 L771.0 162.7 L772.7 165.2 L774.5 167.7 L776.2 170.2 L777.9 172.7 L779.4 175.2 L780.9 177.6 L782.3 180.1 L783.7 182.7 L785.1 185.3 L786.5 188.0 L787.9 190.8 L789.3 193.6 L790.7 196.4 L792.1 199.3 L793.4 202.1 L794.8 204.9 L796.1 207.8 L797.4 210.6 L798.6 213.4 L799.8 216.2 L800.9 219.0 L802.0 221.8 L803.1 224.7 L804.1 227.6 L805.1 230.5 L806.0 233.4 L806.9 236.3 L807.8 239.2 L808.5 242.1 L809.2 245.0 L809.8 247.9 L810.4 250.7 L810.9 253.6 L811.3 256.4 L811.6 259.2 L811.8 262.1 L812.0 265.0 L812.1 267.9 L812.1 270.8 L812.0 273.7 L811.9 276.6 L811.8 279.6 L811.6 282.5 L811.3 285.3 L811.0 288.2 L810.7 291.0 L810.3 293.8 L809.9 296.5 L809.5 299.1 L808.9 301.8 L808.3 304.5 L807.6 307.2 L806.9 309.9 L806.1 312.7 L805.3 315.3 L804.4 317.9 L803.6 320.4 L803.1 323.0 L802.6 325.4 L802.1 327.6 L801.7 329.7 L801.3 331.6 L801.0 333.2 L800.7 334.6 L800.4 335.8 L800.1 337.0 L799.8 338.0 L799.5 339.0 L799.2 339.8 L798.9 340.7 L798.6 341.4 L798.3 342.1 L798.1 342.9 L797.9 343.6 L797.9 344.3 L798.1 345.1 L798.5 345.5 L799.3 345.4 L800.0 345.3 L800.6 345.0 L801.3 344.7 L802.0 344.3 L802.8 343.8 L803.6 343.2 L804.5 342.5 L805.4 341.6 L806.3 340.6 L807.3 339.5 L808.3 338.2 L809.3 336.7 L810.3 335.0 L811.2 333.3 L812.3 331.4 L813.4 329.3 L814.6 327.0 L815.8 324.6 L816.7 322.0 L817.6 319.2 L818.5 316.4 L819.3 313.5 L820.1 310.5 L820.9 307.5 L821.6 304.5 L822.2 301.5 L822.7 298.5 L823.1 295.6 L823.5 292.6 L823.9 289.6 L824.2 286.6 L824.5 283.5 L824.7 280.4 L824.9 277.2 L825.0 274.0 L825.0 270.8 L825.0 267.6 L824.9 264.4 L824.7 261.2 L824.5 258.0 L824.1 254.8 L823.7 251.6 L823.2 248.4 L822.5 245.3 L821.8 242.1 L821.1 238.9 L820.3 235.8 L819.4 232.6 L818.4 229.5 L817.4 226.4 L816.4 223.3 L815.3 220.3 L814.1 217.2 L813.0 214.2 L811.8 211.2 L810.5 208.3 L809.2 205.2 L807.8 202.2 L806.4 199.2 L804.9 196.3 L803.2 193.4 L801.5 190.5 L799.7 187.7 L798.0 185.0 L796.2 182.3 L794.4 179.6 L792.6 177.1 L790.8 174.6 L788.9 172.2 L787.0 169.8 L785.0 167.3 L782.9 165.0 L780.7 162.6 L778.5 160.4 L776.2 158.2 L774.0 156.1 L771.9 154.1 L769.8 152.3 L767.8 150.7 L766.0 149.2 L764.3 147.9 L762.7 146.9 L761.2 146.2Z" fill="#d6dfa5"/><path d="M796.3 199.8 L798.8 204.8 L801.1 209.8 L803.2 214.8 L805.2 219.8 L807.1 224.9 L808.8 230.1 L810.5 235.2 L811.9 240.5 L813.1 245.6 L814.1 250.8 L814.9 255.9 L815.4 261.1 L815.7 266.3 L815.7 271.6 L815.6 276.8 L815.3 282.0 L814.8 287.2 L814.2 292.2 L813.5 297.1 L812.7 301.9 L811.5 306.8 L810.2 311.6 L808.8 316.4 L807.3 321.0 L805.8 325.2" fill="none" stroke="#fff" stroke-width="0.72" stroke-dasharray="3.3 5.8 12.4 4.5" opacity="0.85"/><path d="M774.0 156.1 L777.5 160.2 L781.0 164.4 L784.4 168.8 L787.5 173.1 L790.4 177.5 L793.2 182.2 L796.1 187.0 L798.9 192.0 L801.6 197.0 L804.1 202.2 L806.5 207.3 L808.7 212.5 L810.8 217.7 L812.7 222.9 L814.5 228.2 L816.2 233.6 L817.7 239.0 L819.0 244.4 L820.0 249.8 L820.8 255.2 L821.4 260.6 L821.6 266.1 L821.7 271.6 L821.5 277.1 L821.2 282.5 L820.7 287.8 L820.1 293.0" fill="none" stroke="#fff" stroke-width="0.62" stroke-dasharray="8.4 3.8 9.0 3.0" opacity="0.85"/><path d="M752.7 146.0 L752.1 147.8 L751.6 150.1 L751.3 152.6 L751.0 155.5 L750.8 158.7 L750.5 162.1 L750.3 165.6 L750.2 169.2 L750.0 172.9 L749.9 176.5 L750.0 180.1 L750.1 183.6 L750.2 186.9 L750.3 190.0 L750.4 192.9 L750.6 196.0 L750.7 199.0 L750.8 202.0 L751.0 205.0 L751.1 207.9 L751.3 210.9 L751.4 213.7 L751.5 216.5 L751.6 219.2 L751.7 221.7 L751.8 224.2 L751.8 226.5 L751.8 228.7 L751.8 230.7 L751.7 232.7 L751.6 234.5 L751.4 236.3 L751.3 238.1 L751.1 239.7 L750.9 241.3 L750.7 242.7 L750.6 244.1 L750.4 245.4 L750.2 246.6 L750.1 247.7 L749.9 248.7 L749.8 249.5 L758.2 250.5 L758.3 249.7 L758.4 248.8 L758.5 247.7 L758.7 246.6 L758.9 245.3 L759.1 243.8 L759.3 242.3 L759.5 240.6 L759.6 238.9 L759.8 237.0 L760.0 235.1 L760.1 233.1 L760.2 230.9 L760.2 228.7 L760.2 226.4 L760.2 224.0 L760.1 221.5 L760.0 218.9 L759.9 216.1 L759.8 213.3 L759.7 210.5 L759.5 207.5 L759.4 204.6 L759.2 201.6 L759.1 198.6 L758.9 195.6 L758.8 192.6 L758.7 189.6 L758.6 186.6 L758.5 183.3 L758.3 179.8 L758.2 176.2 L757.8 172.6 L757.4 169.0 L757.0 165.4 L756.5 161.9 L756.1 158.5 L755.6 155.4 L755.1 152.5 L754.6 150.0 L754.1 147.8 L753.3 146.0Z" fill="#d6dfa5"/><path d="M755.0 184.2 L755.2 189.8 L755.4 195.0 L755.7 200.2 L755.9 205.5 L756.2 210.6 L756.4 215.6 L756.6 220.3 L756.7 224.7" fill="none" stroke="#fff" stroke-width="0.99" stroke-dasharray="5.7 5.3 14.1 3.1" opacity="0.85"/><path d="M753.3 184.3 L753.5 189.8 L753.7 195.1 L753.9 200.3 L754.2 205.6 L754.5 210.7 L754.7 215.7 L754.9 220.4 L755.0 224.7 L755.0 228.7 L754.9 232.3 L754.7 235.7 L754.4 238.8 L754.1 241.7" fill="none" stroke="#fff" stroke-width="0.64" stroke-dasharray="3.9 5.5 11.3 4.4" opacity="0.85"/><path d="M603.5 227.5 L605.2 229.2 L607.0 229.9 L609.1 230.5 L611.4 230.9 L613.8 231.1 L616.2 230.6 L618.7 230.1 L621.2 229.7 L623.8 229.3 L626.3 228.9 L628.7 228.7 L630.9 228.5 L633.0 228.4 L634.8 228.4 L636.4 228.5 L638.1 228.7 L639.7 229.0 L641.3 229.3 L642.8 229.7 L644.4 230.1 L646.0 230.6 L647.5 231.2 L649.1 231.8 L650.8 232.4 L652.5 233.1 L654.2 233.8 L656.0 234.6 L657.8 235.2 L659.8 235.8 L661.8 236.5 L664.0 237.3 L666.3 238.1 L668.7 238.9 L671.0 239.8 L673.4 240.6 L675.7 241.4 L678.0 242.2 L680.1 242.9 L682.1 243.4 L683.9 243.8 L685.6 244.1 L687.1 243.9 L687.3 243.3 L686.6 242.0 L685.5 240.8 L684.2 239.5 L682.6 238.2 L680.8 236.8 L678.9 235.4 L676.9 233.9 L674.8 232.4 L672.7 231.0 L670.5 229.6 L668.3 228.2 L666.2 227.0 L664.1 225.8 L662.2 224.8 L660.3 224.0 L658.5 223.2 L656.8 222.5 L655.0 221.8 L653.2 221.1 L651.4 220.4 L649.6 219.8 L647.7 219.2 L645.8 218.7 L643.8 218.2 L641.8 217.7 L639.7 217.4 L637.5 217.1 L635.2 217.0 L632.8 217.0 L630.2 217.1 L627.6 217.3 L624.8 217.6 L622.1 218.0 L619.4 218.4 L616.7 218.9 L614.1 219.3 L611.6 219.8 L609.4 220.9 L607.5 222.2 L605.8 223.4 L604.4 224.8 L603.5 226.9Z" fill="#d6dfa5"/><path d="M613.0 224.0 L617.4 223.2 L622.1 222.4 L626.7 221.7 L631.1 221.4 L635.1 221.3 L638.6 221.7 L641.9 222.2 L645.1 223.0 L648.2 223.9 L651.2 225.0 L654.3 226.2" fill="none" stroke="#fff" stroke-width="0.86" stroke-dasharray="5.2 2.1 5.2 4.4" opacity="0.85"/><path d="M609.5 226.8 L613.4 226.0 L617.8 225.2 L622.4 224.4 L626.9 223.8 L631.2 223.4 L635.0 223.4 L638.3 223.7 L641.5 224.2 L644.6 225.0 L647.5 225.9 L650.5 226.9" fill="none" stroke="#fff" stroke-width="0.90" stroke-dasharray="11.8 4.4 8.9 4.0" opacity="0.85"/><path d="M606.8 229.2 L606.6 232.3 L607.4 234.6 L608.7 236.6 L610.7 238.1 L612.9 239.8 L615.3 241.6 L617.8 243.5 L620.4 245.6 L623.0 247.7 L625.7 249.9 L628.5 252.2 L631.2 254.6 L633.9 257.1 L636.6 259.6 L639.3 262.3 L642.4 265.4 L645.7 268.8 L649.2 272.4 L653.0 276.0 L656.8 279.6 L660.6 283.3 L664.3 286.9 L667.9 290.3 L671.3 293.5 L674.5 296.3 L677.5 298.8 L680.1 300.9 L682.5 302.2 L682.9 301.8 L681.8 299.3 L680.0 296.5 L677.9 293.3 L675.3 289.9 L672.5 286.1 L669.5 282.2 L666.3 278.1 L663.0 274.0 L659.6 269.8 L656.2 265.8 L652.9 262.0 L649.5 258.5 L646.4 255.3 L643.4 252.4 L640.6 249.8 L637.8 247.2 L634.9 244.7 L632.1 242.3 L629.3 240.0 L626.5 237.8 L623.9 235.7 L621.3 233.8 L619.0 231.9 L616.7 230.2 L614.7 228.7 L612.4 228.0 L610.0 227.8 L607.2 228.8Z" fill="#d6dfa5"/><path d="M621.5 238.8 L626.1 242.5 L631.0 246.5 L635.9 250.7 L640.7 255.2 L645.9 260.4 L651.8 266.5 L658.0 273.2 L664.2 280.0 L670.2 286.6" fill="none" stroke="#fff" stroke-width="0.96" stroke-dasharray="9.8 4.4 5.0 4.5" opacity="0.85"/><path d="M606.2 230.1 L608.7 232.0 L611.9 234.5 L615.7 237.4 L620.0 240.7 L624.6 244.4 L629.4 248.3 L634.3 252.5 L639.1 257.0 L644.2 262.1" fill="none" stroke="#fff" stroke-width="1.05" stroke-dasharray="3.3 4.4 14.8 3.9" opacity="0.85"/><path d="M601.7 236.0 L600.4 237.9 L599.4 240.2 L598.4 242.9 L597.5 246.0 L596.6 249.4 L595.7 253.1 L594.9 257.0 L594.1 261.1 L593.5 265.3 L593.3 269.6 L593.4 274.0 L593.7 278.3 L594.2 282.7 L595.0 286.8 L596.0 290.8 L597.2 294.9 L598.5 298.9 L599.9 303.1 L601.5 307.3 L603.3 311.4 L605.1 315.6 L607.1 319.8 L609.2 323.8 L611.3 327.9 L613.6 331.8 L616.0 335.7 L618.5 339.4 L621.1 343.0 L623.8 346.4 L626.6 349.8 L629.6 353.2 L632.7 356.4 L635.9 359.6 L639.2 362.8 L642.5 365.8 L646.0 368.7 L649.5 371.5 L653.1 374.2 L656.7 376.8 L660.4 379.2 L664.1 381.4 L667.8 383.6 L671.7 385.5 L675.8 387.3 L680.0 388.9 L684.2 390.3 L688.5 391.6 L692.8 392.8 L697.0 393.8 L701.2 394.7 L705.3 395.6 L709.3 396.3 L713.2 397.0 L716.8 397.7 L720.3 398.2 L723.5 398.5 L726.7 398.9 L729.9 399.1 L733.0 399.2 L736.0 399.3 L738.9 399.2 L741.6 399.1 L744.2 399.0 L746.7 398.7 L748.9 398.5 L751.0 398.2 L752.9 397.8 L754.6 397.5 L756.1 397.0 L757.5 396.3 L757.5 395.7 L756.3 394.8 L754.8 394.2 L753.1 393.7 L751.2 393.2 L749.1 392.8 L746.9 392.3 L744.6 391.9 L742.2 391.4 L739.6 390.9 L737.0 390.3 L734.2 389.7 L731.4 389.0 L728.6 388.3 L725.7 387.5 L722.5 386.6 L719.0 385.7 L715.4 385.0 L711.6 384.3 L707.7 383.6 L703.8 382.8 L699.8 381.9 L695.8 380.9 L691.8 379.9 L687.9 378.7 L684.1 377.4 L680.4 376.0 L676.9 374.5 L673.6 372.8 L670.3 370.9 L666.9 368.9 L663.6 366.7 L660.3 364.3 L657.0 361.9 L653.7 359.3 L650.5 356.6 L647.4 353.8 L644.4 350.9 L641.5 348.0 L638.6 344.9 L635.9 341.9 L633.3 338.8 L630.9 335.6 L628.6 332.4 L626.3 329.0 L624.1 325.5 L622.0 321.9 L619.9 318.2 L618.0 314.4 L616.2 310.5 L614.5 306.6 L612.9 302.8 L611.4 298.9 L610.1 295.1 L608.9 291.3 L607.8 287.7 L607.0 284.2 L606.3 280.8 L605.9 277.2 L605.6 273.4 L605.5 269.6 L605.4 265.7 L605.2 261.7 L605.0 257.8 L604.9 254.0 L604.7 250.3 L604.6 246.8 L604.3 243.6 L604.0 240.7 L603.4 238.1 L602.3 236.0Z" fill="#d6dfa5"/><path d="M605.4 298.8 L608.1 305.8 L611.1 312.9 L614.5 319.8 L618.2 326.6 L622.2 333.0 L626.4 339.0 L631.0 344.7 L635.9 350.3 L641.3 355.7 L646.9 360.8 L652.7 365.6 L658.7 370.1 L664.8 374.2 L670.9 377.8 L677.3 380.8" fill="none" stroke="#fff" stroke-width="0.84" stroke-dasharray="6.3 3.1 8.0 4.6" opacity="0.85"/><path d="M602.0 239.8 L601.4 244.8 L600.8 250.8 L600.1 257.4 L599.7 264.5 L599.7 271.7 L600.1 278.7 L601.2 285.5 L603.0 292.1 L605.2 298.9 L607.8 305.9 L610.8 313.0 L614.2 319.9 L617.9 326.7 L621.9 333.1 L626.2 339.2 L630.7 344.9 L635.7 350.5 L641.1 355.9 L646.7 361.0 L652.5 365.9 L658.5 370.3" fill="none" stroke="#fff" stroke-width="0.90" stroke-dasharray="3.3 2.4 16.7 3.1" opacity="0.85"/><path d="M820.8 238.0 L822.2 238.3 L823.7 238.3 L825.4 238.1 L827.2 237.8 L829.2 237.5 L831.2 237.1 L833.4 236.6 L835.7 236.2 L838.1 235.7 L840.5 235.3 L843.0 234.9 L845.5 234.6 L848.1 234.4 L850.7 234.2 L853.5 234.0 L856.7 233.7 L860.3 233.5 L864.1 233.3 L868.1 233.1 L872.1 233.0 L876.2 232.9 L880.2 232.8 L884.0 232.8 L887.7 232.7 L891.0 232.5 L894.0 231.3 L896.5 229.9 L898.5 227.5 L898.5 226.9 L896.4 224.6 L893.9 223.3 L890.9 222.1 L887.6 222.0 L883.9 222.1 L880.0 222.1 L876.0 222.2 L871.8 222.3 L867.7 222.4 L863.6 222.6 L859.7 222.8 L855.9 223.0 L852.5 223.3 L849.3 223.8 L846.4 224.5 L843.6 225.3 L840.8 226.2 L838.2 227.2 L835.8 228.2 L833.4 229.2 L831.2 230.3 L829.2 231.4 L827.3 232.4 L825.6 233.5 L824.0 234.5 L822.7 235.4 L821.5 236.3 L820.6 237.4Z" fill="#d6dfa5"/><path d="M832.4 233.7 L836.4 232.3 L840.7 231.1 L845.3 230.0 L850.0 229.2 L855.5 228.6 L861.9 228.2 L868.9 227.9" fill="none" stroke="#fff" stroke-width="0.94" stroke-dasharray="9.4 4.5 6.7 3.1" opacity="0.85"/><path d="M832.3 233.5 L836.3 232.2 L840.7 231.0 L845.2 229.9 L850.0 229.1 L855.5 228.5 L861.9 228.1 L868.9 227.8" fill="none" stroke="#fff" stroke-width="0.88" stroke-dasharray="8.6 5.7 11.7 4.2" opacity="0.85"/><path d="M902.7 233.3 L902.0 234.6 L902.0 236.0 L902.1 237.3 L902.4 238.7 L902.7 240.1 L903.0 241.5 L903.3 243.0 L903.5 244.6 L903.7 246.2 L903.8 247.8 L903.8 249.6 L903.8 251.4 L904.0 253.3 L904.0 255.5 L903.9 258.2 L903.8 261.3 L903.5 264.7 L903.2 268.4 L902.8 272.3 L902.3 276.2 L901.7 280.3 L901.1 284.4 L900.3 288.6 L899.5 292.6 L898.6 296.5 L897.6 300.3 L896.6 303.9 L895.4 307.1 L894.2 310.3 L892.8 313.4 L891.3 316.5 L889.8 319.5 L888.1 322.5 L886.3 325.4 L884.5 328.3 L882.6 331.1 L880.6 333.9 L878.6 336.6 L876.4 339.3 L874.3 341.9 L872.1 344.4 L869.8 346.9 L867.5 349.4 L865.2 351.8 L862.8 354.2 L860.3 356.5 L857.8 358.7 L855.2 360.9 L852.6 363.0 L850.0 365.1 L847.3 367.0 L844.5 368.9 L841.7 370.6 L838.8 372.3 L835.9 373.9 L833.0 375.3 L830.0 376.6 L826.6 377.9 L823.0 379.3 L819.1 380.7 L815.1 382.0 L811.1 383.3 L807.0 384.5 L803.0 385.7 L799.1 386.9 L795.5 388.0 L792.2 389.1 L789.2 390.2 L786.7 391.4 L784.8 392.9 L785.0 393.5 L787.3 394.1 L790.0 394.3 L793.1 394.4 L796.6 394.3 L800.4 394.2 L804.5 393.9 L808.7 393.6 L813.1 393.1 L817.6 392.6 L822.0 391.9 L826.4 391.0 L830.6 390.0 L834.7 388.7 L838.4 387.1 L841.8 385.4 L845.2 383.6 L848.4 381.7 L851.6 379.7 L854.7 377.7 L857.7 375.5 L860.7 373.2 L863.5 370.9 L866.4 368.5 L869.1 366.0 L871.8 363.5 L874.4 360.9 L876.9 358.3 L879.4 355.7 L881.8 353.0 L884.2 350.2 L886.5 347.4 L888.8 344.5 L891.0 341.6 L893.2 338.5 L895.3 335.4 L897.4 332.2 L899.3 329.0 L901.2 325.7 L902.9 322.3 L904.6 318.8 L906.1 315.3 L907.6 311.7 L908.9 307.8 L910.1 303.8 L911.2 299.6 L912.2 295.4 L913.1 291.0 L913.9 286.6 L914.6 282.2 L915.2 277.9 L915.7 273.7 L916.1 269.7 L916.4 265.8 L916.7 262.1 L916.9 258.8 L917.0 255.7 L916.9 252.6 L916.7 249.7 L915.9 247.1 L914.9 244.7 L913.8 242.6 L912.6 240.7 L911.4 239.0 L910.1 237.6 L908.9 236.4 L907.8 235.4 L906.7 234.6 L905.7 233.9 L904.6 233.4 L903.3 233.1Z" fill="#d6dfa5"/><path d="M906.6 281.1 L905.4 288.4 L903.9 295.7 L902.1 302.6 L900.1 308.9 L897.7 314.7 L895.0 320.3 L891.9 325.7 L888.6 331.0 L885.1 336.1 L881.4 341.0 L877.5 345.7 L873.5 350.3 L869.3 354.7 L865.0 358.9" fill="none" stroke="#fff" stroke-width="1.00" stroke-dasharray="10.6 4.4 14.0 2.7" opacity="0.85"/><path d="M902.9 235.1 L904.0 236.9 L905.2 239.0 L906.5 241.4 L907.7 244.2 L908.7 247.5 L909.4 251.2 L909.6 255.6 L909.4 260.9 L908.9 267.0 L908.2 273.9 L907.3 281.1 L906.0 288.6 L904.5 295.9 L902.7 302.8 L900.7 309.1 L898.3 314.9 L895.5 320.6 L892.5 326.1 L889.2 331.4 L885.6 336.5 L881.9 341.4 L878.0 346.1 L873.9 350.7 L869.8 355.1" fill="none" stroke="#fff" stroke-width="0.91" stroke-dasharray="7.1 5.8 16.1 2.8" opacity="0.85"/><path d="M902.8 234.5 L899.4 233.7 L896.6 234.2 L894.2 235.8 L891.7 237.9 L889.0 240.2 L886.2 242.6 L883.2 245.2 L880.1 247.9 L876.9 250.6 L873.7 253.4 L870.5 256.2 L867.5 259.0 L864.5 261.7 L861.6 264.4 L858.8 267.1 L855.8 270.0 L852.6 273.1 L849.7 276.4 L846.7 279.8 L843.7 283.2 L840.8 286.7 L838.0 290.0 L835.4 293.2 L833.0 296.3 L830.8 299.1 L828.9 301.7 L827.4 304.0 L826.5 306.2 L826.9 306.6 L829.1 305.6 L831.4 304.1 L833.9 302.1 L836.7 299.9 L839.7 297.4 L842.9 294.7 L846.1 291.9 L849.5 289.0 L852.9 286.0 L856.3 283.0 L859.6 280.1 L862.7 277.1 L865.6 274.3 L868.4 271.6 L871.2 269.0 L874.1 266.4 L877.1 263.6 L880.3 260.9 L883.4 258.1 L886.5 255.4 L889.6 252.7 L892.6 250.1 L895.5 247.7 L898.1 245.4 L900.6 243.3 L902.6 241.2 L903.5 238.4 L903.2 234.9Z" fill="#d6dfa5"/><path d="M899.4 236.5 L895.5 239.8 L890.9 243.7 L885.7 248.2 L880.3 252.9 L874.7 257.8" fill="none" stroke="#fff" stroke-width="1.02" stroke-dasharray="6.3 5.2 13.8 2.4" opacity="0.85"/><path d="M898.9 235.9 L895.0 239.2 L890.4 243.2 L885.2 247.6 L879.8 252.4 L874.2 257.2 L868.8 262.1 L863.8 266.7 L858.7 271.6" fill="none" stroke="#fff" stroke-width="0.91" stroke-dasharray="6.2 3.6 16.7 3.2" opacity="0.85"/><path d="M753.7 246.9 L751.4 247.0 L749.8 247.7 L748.2 248.7 L746.6 249.9 L744.9 251.3 L743.3 252.8 L742.0 254.7 L740.9 256.8 L739.7 259.0 L738.5 261.2 L737.3 263.4 L736.0 265.7 L734.8 267.9 L733.5 270.1 L732.3 272.3 L730.9 274.6 L729.4 277.0 L727.9 279.4 L726.3 282.0 L724.6 284.6 L723.0 287.2 L721.3 290.0 L719.7 292.7 L718.0 295.5 L716.5 298.2 L715.0 301.0 L713.6 303.8 L712.3 306.6 L711.2 309.3 L710.0 312.0 L708.9 314.7 L707.9 317.4 L706.9 320.1 L705.9 322.9 L705.0 325.7 L704.1 328.4 L703.4 331.2 L702.7 334.0 L702.1 336.7 L701.7 339.5 L701.3 342.3 L701.1 345.0 L701.1 347.6 L701.1 350.3 L701.3 352.9 L701.6 355.5 L701.9 358.0 L702.4 360.6 L703.0 363.1 L703.7 365.5 L704.5 367.9 L705.3 370.3 L706.3 372.6 L707.4 374.8 L708.6 376.9 L709.9 379.0 L711.3 381.0 L712.9 383.0 L714.5 384.8 L716.3 386.6 L718.2 388.3 L720.1 389.9 L722.1 391.4 L724.2 392.9 L726.3 394.2 L728.4 395.5 L730.6 396.6 L732.8 397.7 L735.0 398.6 L737.3 399.5 L739.6 400.2 L741.9 400.8 L744.4 401.4 L746.8 401.8 L749.3 402.1 L751.9 402.3 L754.4 402.5 L756.9 402.5 L759.4 402.4 L761.9 402.3 L764.3 402.0 L766.7 401.6 L769.0 401.2 L771.3 400.6 L773.6 399.8 L775.8 398.9 L777.9 397.9 L780.0 396.8 L782.0 395.5 L783.8 394.2 L785.7 392.9 L787.4 391.4 L789.0 390.0 L790.6 388.5 L792.1 387.0 L793.5 385.5 L794.8 384.0 L796.1 382.6 L797.3 381.1 L798.4 379.6 L799.5 378.1 L800.5 376.5 L801.5 374.9 L802.4 373.2 L803.3 371.5 L804.0 369.7 L804.7 367.8 L805.3 365.9 L805.8 364.0 L806.2 361.9 L806.5 359.8 L806.7 357.7 L806.7 355.5 L806.7 353.3 L806.6 351.0 L806.3 348.6 L806.0 346.3 L805.7 343.9 L805.2 341.5 L804.7 339.1 L804.1 336.7 L803.4 334.3 L802.7 331.9 L801.9 329.5 L801.1 327.2 L800.2 324.8 L799.1 322.4 L798.0 320.1 L796.7 317.9 L795.4 315.7 L794.0 313.6 L792.5 311.5 L791.0 309.5 L789.5 307.4 L788.0 305.4 L786.5 303.4 L785.0 301.3 L783.5 299.2 L782.0 297.1 L780.6 294.9 L779.1 292.5 L777.4 289.9 L775.7 287.1 L773.9 284.2 L772.0 281.2 L770.1 278.2 L768.2 275.3 L766.4 272.4 L764.6 269.6 L762.8 267.1 L761.2 264.8 L759.6 262.7 L758.1 261.1 L756.7 259.9 L756.1 260.1 L756.3 262.0 L756.8 264.2 L757.5 266.6 L758.4 269.3 L759.5 272.2 L760.7 275.3 L762.0 278.5 L763.3 281.8 L764.7 285.0 L766.1 288.3 L767.5 291.5 L768.8 294.5 L770.1 297.4 L771.4 300.1 L772.7 302.6 L774.0 305.1 L775.3 307.5 L776.6 309.8 L777.9 312.1 L779.2 314.3 L780.5 316.4 L781.7 318.5 L782.8 320.5 L783.9 322.5 L784.9 324.4 L785.8 326.3 L786.6 328.1 L787.4 330.0 L788.2 331.9 L788.9 334.0 L789.6 336.0 L790.2 338.1 L790.8 340.2 L791.3 342.3 L791.8 344.3 L792.1 346.3 L792.5 348.3 L792.7 350.2 L792.9 352.0 L793.0 353.7 L793.0 355.4 L792.9 356.9 L792.8 358.3 L792.6 359.7 L792.4 361.0 L792.1 362.2 L791.7 363.4 L791.3 364.6 L790.8 365.8 L790.2 366.9 L789.6 368.1 L788.9 369.2 L788.2 370.3 L787.3 371.5 L786.5 372.7 L785.5 373.8 L784.5 375.0 L783.4 376.2 L782.3 377.4 L781.1 378.6 L779.8 379.8 L778.5 381.0 L777.2 382.1 L775.8 383.1 L774.4 384.1 L773.0 384.9 L771.6 385.7 L770.2 386.4 L768.8 387.0 L767.5 387.4 L766.0 387.8 L764.3 388.1 L762.6 388.4 L760.7 388.6 L758.8 388.7 L756.8 388.8 L754.8 388.7 L752.8 388.6 L750.8 388.5 L748.9 388.2 L747.0 387.9 L745.1 387.5 L743.4 387.0 L741.7 386.5 L740.1 385.9 L738.5 385.2 L736.8 384.4 L735.1 383.5 L733.4 382.5 L731.8 381.5 L730.2 380.4 L728.7 379.2 L727.2 378.0 L725.8 376.7 L724.5 375.4 L723.3 374.1 L722.3 372.8 L721.3 371.4 L720.4 370.0 L719.6 368.5 L718.8 366.8 L718.1 365.1 L717.4 363.4 L716.8 361.6 L716.3 359.7 L715.8 357.8 L715.5 355.8 L715.2 353.8 L715.0 351.8 L714.8 349.7 L714.8 347.7 L714.9 345.6 L715.0 343.6 L715.3 341.5 L715.6 339.3 L716.1 337.0 L716.7 334.6 L717.3 332.2 L718.1 329.8 L718.9 327.3 L719.8 324.8 L720.7 322.3 L721.7 319.7 L722.7 317.2 L723.8 314.7 L724.9 312.2 L726.0 309.8 L727.2 307.3 L728.5 304.8 L730.0 302.3 L731.5 299.7 L733.0 297.1 L734.6 294.5 L736.3 291.9 L737.9 289.3 L739.5 286.7 L741.1 284.2 L742.6 281.7 L744.1 279.3 L745.5 276.9 L746.8 274.6 L748.0 272.3 L749.3 270.0 L750.5 267.8 L751.8 265.5 L753.0 263.4 L754.1 261.3 L755.0 259.2 L755.4 256.9 L755.6 254.8 L755.8 252.8 L755.7 250.9 L755.4 249.1 L754.3 247.1Z" fill="#d6dfa5"/><path d="M710.5 349.3 L710.8 353.2 L711.3 357.0 L712.1 360.7 L713.2 364.3 L714.5 367.7 L716.0 370.9 L717.7 373.8 L719.7 376.5 L722.1 379.1 L724.8 381.6 L727.7 383.8 L730.7 385.9 L733.9 387.8 L737.1 389.3 L740.3 390.6 L743.6 391.6 L747.2 392.3 L750.9 392.8 L754.7 393.0 L758.5 393.0 L762.1 392.8 L765.6 392.3 L768.7 391.5 L771.6 390.5 L774.4 389.1 L777.2 387.4 L779.8 385.5 L782.4 383.3 L784.7 381.1 L786.9 378.8 L788.8 376.6 L790.6 374.4 L792.1 372.1 L793.5 369.9 L794.7 367.6 L795.7 365.2 L796.4 362.7 L796.9 360.0 L797.2 357.2 L797.3 354.1 L797.1 350.7 L796.6 347.1 L796.0 343.4 L795.1 339.6 L794.0 335.8 L792.8 332.0 L791.4 328.4 L789.9 324.8 L788.0 321.4" fill="none" stroke="#fff" stroke-width="0.68" stroke-dasharray="7.1 5.8 7.2 4.8" opacity="0.85"/><path d="M705.7 349.5 L706.0 353.7 L706.5 357.9 L707.4 361.9 L708.6 365.9 L710.0 369.6 L711.7 373.2 L713.7 376.5 L716.0 379.6 L718.7 382.5 L721.6 385.2 L724.8 387.8 L728.2 390.0 L731.6 392.0 L735.2 393.8 L738.8 395.2 L742.4 396.3 L746.4 397.1 L750.4 397.6 L754.5 397.9 L758.6 397.9 L762.6 397.6 L766.5 397.0 L770.0 396.2 L773.5 395.0 L776.7 393.4 L779.9 391.4 L782.8 389.3 L785.6 386.9 L788.1 384.5 L790.5 382.1 L792.6 379.7 L794.5 377.3 L796.2 374.8 L797.7 372.2 L799.1 369.6 L800.2 366.8 L801.1 363.8 L801.7 360.7 L802.1 357.4 L802.1 353.9 L801.9 350.2 L801.4 346.4 L800.7 342.5 L799.8 338.4 L798.7 334.4 L797.4 330.4 L795.9 326.5 L794.2 322.7 L792.2 319.0 L790.0 315.3 L787.7 311.7 L785.2 308.0 L782.8 304.3" fill="none" stroke="#fff" stroke-width="0.69" stroke-dasharray="11.9 3.1 17.0 5.0" opacity="0.85"/></g><g transform="translate(583.2 767.1) rotate(12) scale(0.693) translate(-755 -271)"><path d="M740.8 152.8 L739.3 153.5 L737.8 154.4 L736.0 155.6 L734.1 157.0 L732.0 158.5 L729.8 160.2 L727.6 162.1 L725.3 164.1 L722.9 166.2 L720.6 168.4 L718.3 170.8 L716.0 173.2 L713.9 175.8 L711.9 178.4 L710.0 181.1 L708.1 183.9 L706.2 186.8 L704.4 189.9 L702.5 193.0 L700.7 196.3 L698.9 199.6 L697.2 203.0 L695.5 206.4 L693.9 209.9 L692.5 213.4 L691.2 216.9 L690.0 220.4 L688.9 223.9 L687.8 227.4 L686.9 230.9 L686.0 234.4 L685.2 238.0 L684.4 241.6 L683.7 245.2 L683.1 248.8 L682.5 252.4 L682.1 256.0 L681.7 259.6 L681.4 263.2 L681.2 266.7 L681.1 270.2 L681.1 273.6 L681.2 277.1 L681.5 280.6 L681.9 284.0 L682.5 287.4 L683.1 290.8 L683.8 294.1 L684.5 297.4 L685.3 300.6 L686.2 303.6 L687.0 306.6 L687.9 309.4 L688.7 312.2 L689.6 314.7 L690.6 317.0 L691.6 319.4 L692.7 321.7 L693.9 323.9 L695.1 326.0 L696.3 328.0 L697.5 329.8 L698.7 331.5 L699.8 333.1 L701.0 334.6 L702.1 335.9 L703.1 337.0 L704.2 338.0 L705.2 338.9 L706.3 339.4 L706.9 339.2 L707.2 337.9 L707.1 336.6 L706.8 335.1 L706.5 333.6 L706.1 331.9 L705.6 330.2 L705.0 328.4 L704.5 326.5 L703.9 324.5 L703.4 322.5 L702.8 320.4 L702.3 318.2 L701.8 316.0 L701.4 313.8 L700.9 311.3 L700.3 308.7 L699.6 306.0 L698.7 303.2 L697.9 300.4 L697.1 297.5 L696.4 294.5 L695.7 291.5 L695.1 288.5 L694.5 285.4 L694.0 282.4 L693.7 279.3 L693.4 276.4 L693.3 273.4 L693.3 270.4 L693.4 267.2 L693.6 264.0 L693.8 260.8 L694.2 257.5 L694.6 254.1 L695.1 250.8 L695.7 247.4 L696.3 244.0 L697.1 240.6 L697.8 237.3 L698.7 234.0 L699.6 230.7 L700.5 227.5 L701.6 224.3 L702.7 221.0 L703.9 217.8 L705.2 214.5 L706.5 211.1 L707.8 207.8 L709.2 204.4 L710.6 201.1 L712.0 197.9 L713.4 194.7 L714.9 191.7 L716.4 188.7 L717.9 185.9 L719.3 183.2 L720.8 180.7 L722.4 178.2 L724.2 175.7 L726.0 173.2 L727.9 170.8 L729.8 168.4 L731.6 166.1 L733.5 163.9 L735.2 161.8 L736.8 159.9 L738.3 158.0 L739.6 156.3 L740.6 154.7 L741.2 153.2Z" fill="#d6dfa5"/><path d="M706.7 203.3 L704.1 209.1 L701.6 215.0 L699.4 220.8 L697.5 226.6 L695.9 232.3 L694.4 238.3 L693.1 244.2 L692.0 250.3 L691.2 256.2 L690.6 262.1 L690.2 267.9 L690.2 273.4 L690.5 278.9 L691.2 284.4 L692.1 289.8 L693.4 295.2 L694.7 300.5" fill="none" stroke="#fff" stroke-width="0.79" stroke-dasharray="6.5 2.6 11.4 2.1" opacity="0.85"/><path d="M705.2 202.5 L702.5 208.4 L700.1 214.3 L697.9 220.3 L695.9 226.1 L694.2 231.9 L692.8 237.9 L691.4 243.9 L690.4 250.0 L689.5 256.0 L688.9 262.0 L688.5 267.8 L688.5 273.5 L688.8 279.0 L689.5 284.6 L690.5 290.2 L691.7 295.6 L693.1 300.9 L694.5 306.0 L695.9 310.7 L697.2 315.0 L698.5 319.0 L700.0 322.7" fill="none" stroke="#fff" stroke-width="0.91" stroke-dasharray="7.3 4.8 11.4 3.9" opacity="0.85"/><path d="M760.8 146.6 L761.2 148.2 L762.1 149.9 L763.2 151.7 L764.5 153.7 L766.0 155.8 L767.6 158.0 L769.3 160.3 L771.0 162.7 L772.7 165.2 L774.5 167.7 L776.2 170.2 L777.9 172.7 L779.4 175.2 L780.9 177.6 L782.3 180.1 L783.7 182.7 L785.1 185.3 L786.5 188.0 L787.9 190.8 L789.3 193.6 L790.7 196.4 L792.1 199.3 L793.4 202.1 L794.8 204.9 L796.1 207.8 L797.4 210.6 L798.6 213.4 L799.8 216.2 L800.9 219.0 L802.0 221.8 L803.1 224.7 L804.1 227.6 L805.1 230.5 L806.0 233.4 L806.9 236.3 L807.8 239.2 L808.5 242.1 L809.2 245.0 L809.8 247.9 L810.4 250.7 L810.9 253.6 L811.3 256.4 L811.6 259.2 L811.8 262.1 L812.0 265.0 L812.1 267.9 L812.1 270.8 L812.0 273.7 L811.9 276.6 L811.8 279.6 L811.6 282.5 L811.3 285.3 L811.0 288.2 L810.7 291.0 L810.3 293.8 L809.9 296.5 L809.5 299.1 L808.9 301.8 L808.3 304.5 L807.6 307.2 L806.9 309.9 L806.1 312.7 L805.3 315.3 L804.4 317.9 L803.6 320.4 L803.1 323.0 L802.6 325.4 L802.1 327.6 L801.7 329.7 L801.3 331.6 L801.0 333.2 L800.7 334.6 L800.4 335.8 L800.1 337.0 L799.8 338.0 L799.5 339.0 L799.2 339.8 L798.9 340.7 L798.6 341.4 L798.3 342.1 L798.1 342.9 L797.9 343.6 L797.9 344.3 L798.1 345.1 L798.5 345.5 L799.3 345.4 L800.0 345.3 L800.6 345.0 L801.3 344.7 L802.0 344.3 L802.8 343.8 L803.6 343.2 L804.5 342.5 L805.4 341.6 L806.3 340.6 L807.3 339.5 L808.3 338.2 L809.3 336.7 L810.3 335.0 L811.2 333.3 L812.3 331.4 L813.4 329.3 L814.6 327.0 L815.8 324.6 L816.7 322.0 L817.6 319.2 L818.5 316.4 L819.3 313.5 L820.1 310.5 L820.9 307.5 L821.6 304.5 L822.2 301.5 L822.7 298.5 L823.1 295.6 L823.5 292.6 L823.9 289.6 L824.2 286.6 L824.5 283.5 L824.7 280.4 L824.9 277.2 L825.0 274.0 L825.0 270.8 L825.0 267.6 L824.9 264.4 L824.7 261.2 L824.5 258.0 L824.1 254.8 L823.7 251.6 L823.2 248.4 L822.5 245.3 L821.8 242.1 L821.1 238.9 L820.3 235.8 L819.4 232.6 L818.4 229.5 L817.4 226.4 L816.4 223.3 L815.3 220.3 L814.1 217.2 L813.0 214.2 L811.8 211.2 L810.5 208.3 L809.2 205.2 L807.8 202.2 L806.4 199.2 L804.9 196.3 L803.2 193.4 L801.5 190.5 L799.7 187.7 L798.0 185.0 L796.2 182.3 L794.4 179.6 L792.6 177.1 L790.8 174.6 L788.9 172.2 L787.0 169.8 L785.0 167.3 L782.9 165.0 L780.7 162.6 L778.5 160.4 L776.2 158.2 L774.0 156.1 L771.9 154.1 L769.8 152.3 L767.8 150.7 L766.0 149.2 L764.3 147.9 L762.7 146.9 L761.2 146.2Z" fill="#d6dfa5"/><path d="M770.2 152.9 L773.5 156.6 L777.0 160.6 L780.5 164.8 L783.9 169.1 L787.0 173.5 L789.9 177.9 L792.7 182.5 L795.5 187.3 L798.3 192.3 L801.0 197.3 L803.6 202.4 L805.9 207.6 L808.1 212.7 L810.2 217.9 L812.1 223.1 L813.9 228.4 L815.6 233.7" fill="none" stroke="#fff" stroke-width="0.70" stroke-dasharray="9.3 3.5 10.0 4.5" opacity="0.85"/><path d="M808.8 218.4 L810.7 223.6 L812.5 228.9 L814.1 234.2 L815.6 239.5 L816.9 244.8 L817.9 250.2 L818.7 255.5 L819.2 260.8 L819.5 266.2 L819.6 271.6 L819.4 277.0 L819.1 282.3 L818.6 287.6 L818.0 292.7 L817.3 297.7 L816.4 302.6 L815.2 307.7 L813.9 312.7 L812.4 317.6 L810.9 322.2 L809.4 326.5 L808.0 330.4 L806.7 333.7 L805.6 336.4 L804.4 338.7 L803.3 340.6" fill="none" stroke="#fff" stroke-width="1.00" stroke-dasharray="11.4 3.1 8.1 2.1" opacity="0.85"/><path d="M752.7 146.0 L752.1 147.8 L751.6 150.1 L751.3 152.6 L751.0 155.5 L750.8 158.7 L750.5 162.1 L750.3 165.6 L750.2 169.2 L750.0 172.9 L749.9 176.5 L750.0 180.1 L750.1 183.6 L750.2 186.9 L750.3 190.0 L750.4 192.9 L750.6 196.0 L750.7 199.0 L750.8 202.0 L751.0 205.0 L751.1 207.9 L751.3 210.9 L751.4 213.7 L751.5 216.5 L751.6 219.2 L751.7 221.7 L751.8 224.2 L751.8 226.5 L751.8 228.7 L751.8 230.7 L751.7 232.7 L751.6 234.5 L751.4 236.3 L751.3 238.1 L751.1 239.7 L750.9 241.3 L750.7 242.7 L750.6 244.1 L750.4 245.4 L750.2 246.6 L750.1 247.7 L749.9 248.7 L749.8 249.5 L758.2 250.5 L758.3 249.7 L758.4 248.8 L758.5 247.7 L758.7 246.6 L758.9 245.3 L759.1 243.8 L759.3 242.3 L759.5 240.6 L759.6 238.9 L759.8 237.0 L760.0 235.1 L760.1 233.1 L760.2 230.9 L760.2 228.7 L760.2 226.4 L760.2 224.0 L760.1 221.5 L760.0 218.9 L759.9 216.1 L759.8 213.3 L759.7 210.5 L759.5 207.5 L759.4 204.6 L759.2 201.6 L759.1 198.6 L758.9 195.6 L758.8 192.6 L758.7 189.6 L758.6 186.6 L758.5 183.3 L758.3 179.8 L758.2 176.2 L757.8 172.6 L757.4 169.0 L757.0 165.4 L756.5 161.9 L756.1 158.5 L755.6 155.4 L755.1 152.5 L754.6 150.0 L754.1 147.8 L753.3 146.0Z" fill="#d6dfa5"/><path d="M754.4 159.4 L754.6 165.4 L754.9 171.8 L755.1 178.1 L755.3 184.2 L755.5 189.8 L755.7 195.0 L755.9 200.2 L756.2 205.5 L756.5 210.6 L756.7 215.6 L756.9 220.3" fill="none" stroke="#fff" stroke-width="0.79" stroke-dasharray="11.0 5.1 11.5 4.9" opacity="0.85"/><path d="M751.4 149.5 L751.6 154.0 L751.8 159.5 L752.0 165.5 L752.2 171.9 L752.4 178.2 L752.6 184.3 L752.8 189.9 L753.0 195.1 L753.3 200.4 L753.5 205.6 L753.8 210.7 L754.0 215.7" fill="none" stroke="#fff" stroke-width="0.61" stroke-dasharray="7.8 4.2 15.6 3.1" opacity="0.85"/><path d="M603.5 227.5 L605.2 229.2 L607.0 229.9 L609.1 230.5 L611.4 230.9 L613.8 231.1 L616.2 230.6 L618.7 230.1 L621.2 229.7 L623.8 229.3 L626.3 228.9 L628.7 228.7 L630.9 228.5 L633.0 228.4 L634.8 228.4 L636.4 228.5 L638.1 228.7 L639.7 229.0 L641.3 229.3 L642.8 229.7 L644.4 230.1 L646.0 230.6 L647.5 231.2 L649.1 231.8 L650.8 232.4 L652.5 233.1 L654.2 233.8 L656.0 234.6 L657.8 235.2 L659.8 235.8 L661.8 236.5 L664.0 237.3 L666.3 238.1 L668.7 238.9 L671.0 239.8 L673.4 240.6 L675.7 241.4 L678.0 242.2 L680.1 242.9 L682.1 243.4 L683.9 243.8 L685.6 244.1 L687.1 243.9 L687.3 243.3 L686.6 242.0 L685.5 240.8 L684.2 239.5 L682.6 238.2 L680.8 236.8 L678.9 235.4 L676.9 233.9 L674.8 232.4 L672.7 231.0 L670.5 229.6 L668.3 228.2 L666.2 227.0 L664.1 225.8 L662.2 224.8 L660.3 224.0 L658.5 223.2 L656.8 222.5 L655.0 221.8 L653.2 221.1 L651.4 220.4 L649.6 219.8 L647.7 219.2 L645.8 218.7 L643.8 218.2 L641.8 217.7 L639.7 217.4 L637.5 217.1 L635.2 217.0 L632.8 217.0 L630.2 217.1 L627.6 217.3 L624.8 217.6 L622.1 218.0 L619.4 218.4 L616.7 218.9 L614.1 219.3 L611.6 219.8 L609.4 220.9 L607.5 222.2 L605.8 223.4 L604.4 224.8 L603.5 226.9Z" fill="#d6dfa5"/><path d="M622.5 225.4 L627.0 224.8 L631.2 224.4 L634.9 224.4 L638.2 224.7 L641.3 225.2 L644.3 225.9 L647.2 226.8 L650.2 227.9 L653.1 229.0 L656.2 230.3" fill="none" stroke="#fff" stroke-width="0.86" stroke-dasharray="5.6 2.2 11.8 4.3" opacity="0.85"/><path d="M612.8 222.8 L617.2 221.9 L621.9 221.2 L626.6 220.5 L631.0 220.1 L635.1 220.1 L638.7 220.4 L642.2 221.0 L645.4 221.8 L648.6 222.8 L651.7 223.9 L654.7 225.1 L657.8 226.3 L661.0 227.6 L664.5 229.1" fill="none" stroke="#fff" stroke-width="1.06" stroke-dasharray="3.6 3.0 16.8 4.2" opacity="0.85"/><path d="M606.8 229.2 L606.6 232.3 L607.4 234.6 L608.7 236.6 L610.7 238.1 L612.9 239.8 L615.3 241.6 L617.8 243.5 L620.4 245.6 L623.0 247.7 L625.7 249.9 L628.5 252.2 L631.2 254.6 L633.9 257.1 L636.6 259.6 L639.3 262.3 L642.4 265.4 L645.7 268.8 L649.2 272.4 L653.0 276.0 L656.8 279.6 L660.6 283.3 L664.3 286.9 L667.9 290.3 L671.3 293.5 L674.5 296.3 L677.5 298.8 L680.1 300.9 L682.5 302.2 L682.9 301.8 L681.8 299.3 L680.0 296.5 L677.9 293.3 L675.3 289.9 L672.5 286.1 L669.5 282.2 L666.3 278.1 L663.0 274.0 L659.6 269.8 L656.2 265.8 L652.9 262.0 L649.5 258.5 L646.4 255.3 L643.4 252.4 L640.6 249.8 L637.8 247.2 L634.9 244.7 L632.1 242.3 L629.3 240.0 L626.5 237.8 L623.9 235.7 L621.3 233.8 L619.0 231.9 L616.7 230.2 L614.7 228.7 L612.4 228.0 L610.0 227.8 L607.2 228.8Z" fill="#d6dfa5"/><path d="M619.7 241.1 L624.3 244.7 L629.1 248.7 L634.0 252.9 L638.7 257.3 L643.9 262.4 L649.7 268.5 L655.8 275.1 L662.1 281.9 L668.0 288.5" fill="none" stroke="#fff" stroke-width="1.08" stroke-dasharray="5.4 5.4 16.6 3.7" opacity="0.85"/><path d="M625.8 242.8 L630.7 246.8 L635.6 251.1 L640.4 255.6 L645.6 260.7 L651.4 266.8 L657.6 273.5 L663.9 280.3" fill="none" stroke="#fff" stroke-width="0.75" stroke-dasharray="8.0 5.2 16.0 3.1" opacity="0.85"/><path d="M601.7 236.0 L600.4 237.9 L599.4 240.2 L598.4 242.9 L597.5 246.0 L596.6 249.4 L595.7 253.1 L594.9 257.0 L594.1 261.1 L593.5 265.3 L593.3 269.6 L593.4 274.0 L593.7 278.3 L594.2 282.7 L595.0 286.8 L596.0 290.8 L597.2 294.9 L598.5 298.9 L599.9 303.1 L601.5 307.3 L603.3 311.4 L605.1 315.6 L607.1 319.8 L609.2 323.8 L611.3 327.9 L613.6 331.8 L616.0 335.7 L618.5 339.4 L621.1 343.0 L623.8 346.4 L626.6 349.8 L629.6 353.2 L632.7 356.4 L635.9 359.6 L639.2 362.8 L642.5 365.8 L646.0 368.7 L649.5 371.5 L653.1 374.2 L656.7 376.8 L660.4 379.2 L664.1 381.4 L667.8 383.6 L671.7 385.5 L675.8 387.3 L680.0 388.9 L684.2 390.3 L688.5 391.6 L692.8 392.8 L697.0 393.8 L701.2 394.7 L705.3 395.6 L709.3 396.3 L713.2 397.0 L716.8 397.7 L720.3 398.2 L723.5 398.5 L726.7 398.9 L729.9 399.1 L733.0 399.2 L736.0 399.3 L738.9 399.2 L741.6 399.1 L744.2 399.0 L746.7 398.7 L748.9 398.5 L751.0 398.2 L752.9 397.8 L754.6 397.5 L756.1 397.0 L757.5 396.3 L757.5 395.7 L756.3 394.8 L754.8 394.2 L753.1 393.7 L751.2 393.2 L749.1 392.8 L746.9 392.3 L744.6 391.9 L742.2 391.4 L739.6 390.9 L737.0 390.3 L734.2 389.7 L731.4 389.0 L728.6 388.3 L725.7 387.5 L722.5 386.6 L719.0 385.7 L715.4 385.0 L711.6 384.3 L707.7 383.6 L703.8 382.8 L699.8 381.9 L695.8 380.9 L691.8 379.9 L687.9 378.7 L684.1 377.4 L680.4 376.0 L676.9 374.5 L673.6 372.8 L670.3 370.9 L666.9 368.9 L663.6 366.7 L660.3 364.3 L657.0 361.9 L653.7 359.3 L650.5 356.6 L647.4 353.8 L644.4 350.9 L641.5 348.0 L638.6 344.9 L635.9 341.9 L633.3 338.8 L630.9 335.6 L628.6 332.4 L626.3 329.0 L624.1 325.5 L622.0 321.9 L619.9 318.2 L618.0 314.4 L616.2 310.5 L614.5 306.6 L612.9 302.8 L611.4 298.9 L610.1 295.1 L608.9 291.3 L607.8 287.7 L607.0 284.2 L606.3 280.8 L605.9 277.2 L605.6 273.4 L605.5 269.6 L605.4 265.7 L605.2 261.7 L605.0 257.8 L604.9 254.0 L604.7 250.3 L604.6 246.8 L604.3 243.6 L604.0 240.7 L603.4 238.1 L602.3 236.0Z" fill="#d6dfa5"/><path d="M599.7 235.8 L599.5 239.6 L598.9 244.5 L598.3 250.5 L597.6 257.2 L597.2 264.4 L597.1 271.7 L597.6 279.0 L598.7 286.0 L600.5 292.8 L602.8 299.8 L605.5 306.9 L608.6 314.0 L612.0 321.1" fill="none" stroke="#fff" stroke-width="0.94" stroke-dasharray="8.8 2.8 16.2 2.7" opacity="0.85"/><path d="M600.4 278.7 L601.5 285.4 L603.2 292.0 L605.4 298.8 L608.0 305.8 L611.1 312.9 L614.5 319.8 L618.2 326.6 L622.2 333.0 L626.4 339.0 L630.9 344.7 L635.9 350.3 L641.2 355.7 L646.9 360.8 L652.7 365.7" fill="none" stroke="#fff" stroke-width="1.10" stroke-dasharray="11.4 4.4 13.1 2.7" opacity="0.85"/><path d="M820.8 238.0 L822.2 238.3 L823.7 238.3 L825.4 238.1 L827.2 237.8 L829.2 237.5 L831.2 237.1 L833.4 236.6 L835.7 236.2 L838.1 235.7 L840.5 235.3 L843.0 234.9 L845.5 234.6 L848.1 234.4 L850.7 234.2 L853.5 234.0 L856.7 233.7 L860.3 233.5 L864.1 233.3 L868.1 233.1 L872.1 233.0 L876.2 232.9 L880.2 232.8 L884.0 232.8 L887.7 232.7 L891.0 232.5 L894.0 231.3 L896.5 229.9 L898.5 227.5 L898.5 226.9 L896.4 224.6 L893.9 223.3 L890.9 222.1 L887.6 222.0 L883.9 222.1 L880.0 222.1 L876.0 222.2 L871.8 222.3 L867.7 222.4 L863.6 222.6 L859.7 222.8 L855.9 223.0 L852.5 223.3 L849.3 223.8 L846.4 224.5 L843.6 225.3 L840.8 226.2 L838.2 227.2 L835.8 228.2 L833.4 229.2 L831.2 230.3 L829.2 231.4 L827.3 232.4 L825.6 233.5 L824.0 234.5 L822.7 235.4 L821.5 236.3 L820.6 237.4Z" fill="#d6dfa5"/><path d="M823.4 238.6 L826.1 237.6 L829.3 236.4 L832.9 235.1 L836.8 233.8 L841.1 232.5 L845.6 231.5 L850.2 230.7" fill="none" stroke="#fff" stroke-width="0.68" stroke-dasharray="10.0 4.8 7.7 3.1" opacity="0.85"/><path d="M823.7 239.4 L826.4 238.4 L829.6 237.2 L833.2 235.9 L837.1 234.6 L841.3 233.4 L845.7 232.3 L850.3 231.6 L855.7 231.0 L862.0 230.6" fill="none" stroke="#fff" stroke-width="1.02" stroke-dasharray="3.4 3.6 13.9 2.6" opacity="0.85"/><path d="M902.7 233.3 L902.0 234.6 L902.0 236.0 L902.1 237.3 L902.4 238.7 L902.7 240.1 L903.0 241.5 L903.3 243.0 L903.5 244.6 L903.7 246.2 L903.8 247.8 L903.8 249.6 L903.8 251.4 L904.0 253.3 L904.0 255.5 L903.9 258.2 L903.8 261.3 L903.5 264.7 L903.2 268.4 L902.8 272.3 L902.3 276.2 L901.7 280.3 L901.1 284.4 L900.3 288.6 L899.5 292.6 L898.6 296.5 L897.6 300.3 L896.6 303.9 L895.4 307.1 L894.2 310.3 L892.8 313.4 L891.3 316.5 L889.8 319.5 L888.1 322.5 L886.3 325.4 L884.5 328.3 L882.6 331.1 L880.6 333.9 L878.6 336.6 L876.4 339.3 L874.3 341.9 L872.1 344.4 L869.8 346.9 L867.5 349.4 L865.2 351.8 L862.8 354.2 L860.3 356.5 L857.8 358.7 L855.2 360.9 L852.6 363.0 L850.0 365.1 L847.3 367.0 L844.5 368.9 L841.7 370.6 L838.8 372.3 L835.9 373.9 L833.0 375.3 L830.0 376.6 L826.6 377.9 L823.0 379.3 L819.1 380.7 L815.1 382.0 L811.1 383.3 L807.0 384.5 L803.0 385.7 L799.1 386.9 L795.5 388.0 L792.2 389.1 L789.2 390.2 L786.7 391.4 L784.8 392.9 L785.0 393.5 L787.3 394.1 L790.0 394.3 L793.1 394.4 L796.6 394.3 L800.4 394.2 L804.5 393.9 L808.7 393.6 L813.1 393.1 L817.6 392.6 L822.0 391.9 L826.4 391.0 L830.6 390.0 L834.7 388.7 L838.4 387.1 L841.8 385.4 L845.2 383.6 L848.4 381.7 L851.6 379.7 L854.7 377.7 L857.7 375.5 L860.7 373.2 L863.5 370.9 L866.4 368.5 L869.1 366.0 L871.8 363.5 L874.4 360.9 L876.9 358.3 L879.4 355.7 L881.8 353.0 L884.2 350.2 L886.5 347.4 L888.8 344.5 L891.0 341.6 L893.2 338.5 L895.3 335.4 L897.4 332.2 L899.3 329.0 L901.2 325.7 L902.9 322.3 L904.6 318.8 L906.1 315.3 L907.6 311.7 L908.9 307.8 L910.1 303.8 L911.2 299.6 L912.2 295.4 L913.1 291.0 L913.9 286.6 L914.6 282.2 L915.2 277.9 L915.7 273.7 L916.1 269.7 L916.4 265.8 L916.7 262.1 L916.9 258.8 L917.0 255.7 L916.9 252.6 L916.7 249.7 L915.9 247.1 L914.9 244.7 L913.8 242.6 L912.6 240.7 L911.4 239.0 L910.1 237.6 L908.9 236.4 L907.8 235.4 L906.7 234.6 L905.7 233.9 L904.6 233.4 L903.3 233.1Z" fill="#d6dfa5"/><path d="M908.6 247.5 L909.3 251.3 L909.5 255.6 L909.3 260.8 L908.8 267.0 L908.1 273.9 L907.1 281.1 L905.9 288.5 L904.4 295.8 L902.6 302.7 L900.5 309.0 L898.1 314.9 L895.4 320.5 L892.4 326.0" fill="none" stroke="#fff" stroke-width="0.71" stroke-dasharray="6.7 2.6 5.6 4.2" opacity="0.85"/><path d="M910.1 251.2 L910.3 255.6 L910.1 260.9 L909.6 267.1 L908.9 274.0 L907.9 281.2 L906.7 288.7 L905.2 296.0 L903.4 303.0 L901.3 309.3 L898.9 315.2 L896.1 320.9 L893.1 326.4 L889.7 331.7 L886.2 336.9 L882.4 341.8 L878.5 346.6 L874.4 351.2 L870.2 355.6 L865.8 359.9" fill="none" stroke="#fff" stroke-width="0.82" stroke-dasharray="12.3 5.2 5.4 3.7" opacity="0.85"/><path d="M902.8 234.5 L899.4 233.7 L896.6 234.2 L894.2 235.8 L891.7 237.9 L889.0 240.2 L886.2 242.6 L883.2 245.2 L880.1 247.9 L876.9 250.6 L873.7 253.4 L870.5 256.2 L867.5 259.0 L864.5 261.7 L861.6 264.4 L858.8 267.1 L855.8 270.0 L852.6 273.1 L849.7 276.4 L846.7 279.8 L843.7 283.2 L840.8 286.7 L838.0 290.0 L835.4 293.2 L833.0 296.3 L830.8 299.1 L828.9 301.7 L827.4 304.0 L826.5 306.2 L826.9 306.6 L829.1 305.6 L831.4 304.1 L833.9 302.1 L836.7 299.9 L839.7 297.4 L842.9 294.7 L846.1 291.9 L849.5 289.0 L852.9 286.0 L856.3 283.0 L859.6 280.1 L862.7 277.1 L865.6 274.3 L868.4 271.6 L871.2 269.0 L874.1 266.4 L877.1 263.6 L880.3 260.9 L883.4 258.1 L886.5 255.4 L889.6 252.7 L892.6 250.1 L895.5 247.7 L898.1 245.4 L900.6 243.3 L902.6 241.2 L903.5 238.4 L903.2 234.9Z" fill="#d6dfa5"/><path d="M895.5 239.8 L890.9 243.7 L885.7 248.1 L880.2 252.9 L874.7 257.7 L869.3 262.6 L864.3 267.2 L859.2 272.1 L853.8 277.4 L848.2 283.0" fill="none" stroke="#fff" stroke-width="1.10" stroke-dasharray="9.7 4.8 16.5 4.0" opacity="0.85"/><path d="M895.9 240.3 L891.3 244.2 L886.1 248.6 L880.7 253.4 L875.1 258.2 L869.7 263.1" fill="none" stroke="#fff" stroke-width="0.64" stroke-dasharray="3.7 3.6 13.2 2.9" opacity="0.85"/><path d="M753.7 246.9 L751.4 247.0 L749.8 247.7 L748.2 248.7 L746.6 249.9 L744.9 251.3 L743.3 252.8 L742.0 254.7 L740.9 256.8 L739.7 259.0 L738.5 261.2 L737.3 263.4 L736.0 265.7 L734.8 267.9 L733.5 270.1 L732.3 272.3 L730.9 274.6 L729.4 277.0 L727.9 279.4 L726.3 282.0 L724.6 284.6 L723.0 287.2 L721.3 290.0 L719.7 292.7 L718.0 295.5 L716.5 298.2 L715.0 301.0 L713.6 303.8 L712.3 306.6 L711.2 309.3 L710.0 312.0 L708.9 314.7 L707.9 317.4 L706.9 320.1 L705.9 322.9 L705.0 325.7 L704.1 328.4 L703.4 331.2 L702.7 334.0 L702.1 336.7 L701.7 339.5 L701.3 342.3 L701.1 345.0 L701.1 347.6 L701.1 350.3 L701.3 352.9 L701.6 355.5 L701.9 358.0 L702.4 360.6 L703.0 363.1 L703.7 365.5 L704.5 367.9 L705.3 370.3 L706.3 372.6 L707.4 374.8 L708.6 376.9 L709.9 379.0 L711.3 381.0 L712.9 383.0 L714.5 384.8 L716.3 386.6 L718.2 388.3 L720.1 389.9 L722.1 391.4 L724.2 392.9 L726.3 394.2 L728.4 395.5 L730.6 396.6 L732.8 397.7 L735.0 398.6 L737.3 399.5 L739.6 400.2 L741.9 400.8 L744.4 401.4 L746.8 401.8 L749.3 402.1 L751.9 402.3 L754.4 402.5 L756.9 402.5 L759.4 402.4 L761.9 402.3 L764.3 402.0 L766.7 401.6 L769.0 401.2 L771.3 400.6 L773.6 399.8 L775.8 398.9 L777.9 397.9 L780.0 396.8 L782.0 395.5 L783.8 394.2 L785.7 392.9 L787.4 391.4 L789.0 390.0 L790.6 388.5 L792.1 387.0 L793.5 385.5 L794.8 384.0 L796.1 382.6 L797.3 381.1 L798.4 379.6 L799.5 378.1 L800.5 376.5 L801.5 374.9 L802.4 373.2 L803.3 371.5 L804.0 369.7 L804.7 367.8 L805.3 365.9 L805.8 364.0 L806.2 361.9 L806.5 359.8 L806.7 357.7 L806.7 355.5 L806.7 353.3 L806.6 351.0 L806.3 348.6 L806.0 346.3 L805.7 343.9 L805.2 341.5 L804.7 339.1 L804.1 336.7 L803.4 334.3 L802.7 331.9 L801.9 329.5 L801.1 327.2 L800.2 324.8 L799.1 322.4 L798.0 320.1 L796.7 317.9 L795.4 315.7 L794.0 313.6 L792.5 311.5 L791.0 309.5 L789.5 307.4 L788.0 305.4 L786.5 303.4 L785.0 301.3 L783.5 299.2 L782.0 297.1 L780.6 294.9 L779.1 292.5 L777.4 289.9 L775.7 287.1 L773.9 284.2 L772.0 281.2 L770.1 278.2 L768.2 275.3 L766.4 272.4 L764.6 269.6 L762.8 267.1 L761.2 264.8 L759.6 262.7 L758.1 261.1 L756.7 259.9 L756.1 260.1 L756.3 262.0 L756.8 264.2 L757.5 266.6 L758.4 269.3 L759.5 272.2 L760.7 275.3 L762.0 278.5 L763.3 281.8 L764.7 285.0 L766.1 288.3 L767.5 291.5 L768.8 294.5 L770.1 297.4 L771.4 300.1 L772.7 302.6 L774.0 305.1 L775.3 307.5 L776.6 309.8 L777.9 312.1 L779.2 314.3 L780.5 316.4 L781.7 318.5 L782.8 320.5 L783.9 322.5 L784.9 324.4 L785.8 326.3 L786.6 328.1 L787.4 330.0 L788.2 331.9 L788.9 334.0 L789.6 336.0 L790.2 338.1 L790.8 340.2 L791.3 342.3 L791.8 344.3 L792.1 346.3 L792.5 348.3 L792.7 350.2 L792.9 352.0 L793.0 353.7 L793.0 355.4 L792.9 356.9 L792.8 358.3 L792.6 359.7 L792.4 361.0 L792.1 362.2 L791.7 363.4 L791.3 364.6 L790.8 365.8 L790.2 366.9 L789.6 368.1 L788.9 369.2 L788.2 370.3 L787.3 371.5 L786.5 372.7 L785.5 373.8 L784.5 375.0 L783.4 376.2 L782.3 377.4 L781.1 378.6 L779.8 379.8 L778.5 381.0 L777.2 382.1 L775.8 383.1 L774.4 384.1 L773.0 384.9 L771.6 385.7 L770.2 386.4 L768.8 387.0 L767.5 387.4 L766.0 387.8 L764.3 388.1 L762.6 388.4 L760.7 388.6 L758.8 388.7 L756.8 388.8 L754.8 388.7 L752.8 388.6 L750.8 388.5 L748.9 388.2 L747.0 387.9 L745.1 387.5 L743.4 387.0 L741.7 386.5 L740.1 385.9 L738.5 385.2 L736.8 384.4 L735.1 383.5 L733.4 382.5 L731.8 381.5 L730.2 380.4 L728.7 379.2 L727.2 378.0 L725.8 376.7 L724.5 375.4 L723.3 374.1 L722.3 372.8 L721.3 371.4 L720.4 370.0 L719.6 368.5 L718.8 366.8 L718.1 365.1 L717.4 363.4 L716.8 361.6 L716.3 359.7 L715.8 357.8 L715.5 355.8 L715.2 353.8 L715.0 351.8 L714.8 349.7 L714.8 347.7 L714.9 345.6 L715.0 343.6 L715.3 341.5 L715.6 339.3 L716.1 337.0 L716.7 334.6 L717.3 332.2 L718.1 329.8 L718.9 327.3 L719.8 324.8 L720.7 322.3 L721.7 319.7 L722.7 317.2 L723.8 314.7 L724.9 312.2 L726.0 309.8 L727.2 307.3 L728.5 304.8 L730.0 302.3 L731.5 299.7 L733.0 297.1 L734.6 294.5 L736.3 291.9 L737.9 289.3 L739.5 286.7 L741.1 284.2 L742.6 281.7 L744.1 279.3 L745.5 276.9 L746.8 274.6 L748.0 272.3 L749.3 270.0 L750.5 267.8 L751.8 265.5 L753.0 263.4 L754.1 261.3 L755.0 259.2 L755.4 256.9 L755.6 254.8 L755.8 252.8 L755.7 250.9 L755.4 249.1 L754.3 247.1Z" fill="#d6dfa5"/><path d="M739.9 279.2 L737.2 283.5 L734.4 288.0 L731.6 292.6 L728.8 297.2 L726.1 301.8 L723.7 306.3 L721.6 310.7 L719.7 315.2 L717.8 319.7 L716.1 324.2 L714.6 328.7 L713.3 333.1 L712.3 337.4 L711.6 341.5 L711.2 345.5 L711.2 349.3 L711.5 353.1 L712.0 356.9 L712.8 360.6 L713.8 364.1 L715.1 367.4 L716.6 370.6 L718.3 373.4 L720.3 376.1 L722.6 378.6 L725.2 381.0 L728.1 383.3 L731.1 385.3 L734.2 387.1 L737.4 388.7 L740.6 389.9 L743.8 390.9 L747.3 391.6 L751.0 392.1 L754.7 392.4 L758.4 392.4 L762.0 392.1 L765.4 391.6 L768.5 390.9 L771.3 389.9 L774.1 388.5 L776.8 386.8 L779.4 384.9 L781.9 382.8 L784.2 380.6 L786.4 378.3" fill="none" stroke="#fff" stroke-width="0.94" stroke-dasharray="11.4 3.5 13.2 3.4" opacity="0.85"/><path d="M742.2 275.0 L739.8 279.1 L737.1 283.5 L734.3 287.9 L731.4 292.5 L728.6 297.1 L726.0 301.7 L723.5 306.2 L721.4 310.7 L719.5 315.1 L717.7 319.6 L716.0 324.2 L714.5 328.7 L713.2 333.1 L712.2 337.4 L711.5 341.5 L711.1 345.5 L711.1 349.3 L711.3 353.2 L711.9 356.9 L712.6 360.6 L713.7 364.1 L715.0 367.5 L716.5 370.6 L718.2 373.5 L720.2 376.1 L722.5 378.7 L725.1 381.1 L728.0 383.4 L731.0 385.5 L734.2 387.3 L737.4 388.8 L740.5 390.1 L743.8 391.0 L747.3 391.8 L751.0 392.3 L754.7 392.5 L758.4 392.5 L762.1 392.2 L765.5 391.7 L768.5 391.0 L771.4 390.0 L774.1 388.6 L776.9 387.0 L779.5 385.0 L782.0 382.9" fill="none" stroke="#fff" stroke-width="0.91" stroke-dasharray="8.7 3.7 17.0 3.7" opacity="0.85"/></g><g transform="translate(834 775.5) rotate(0) scale(0.693) translate(-755 -271)"><path d="M740.8 152.8 L739.3 153.5 L737.8 154.4 L736.0 155.6 L734.1 157.0 L732.0 158.5 L729.8 160.2 L727.6 162.1 L725.3 164.1 L722.9 166.2 L720.6 168.4 L718.3 170.8 L716.0 173.2 L713.9 175.8 L711.9 178.4 L710.0 181.1 L708.1 183.9 L706.2 186.8 L704.4 189.9 L702.5 193.0 L700.7 196.3 L698.9 199.6 L697.2 203.0 L695.5 206.4 L693.9 209.9 L692.5 213.4 L691.2 216.9 L690.0 220.4 L688.9 223.9 L687.8 227.4 L686.9 230.9 L686.0 234.4 L685.2 238.0 L684.4 241.6 L683.7 245.2 L683.1 248.8 L682.5 252.4 L682.1 256.0 L681.7 259.6 L681.4 263.2 L681.2 266.7 L681.1 270.2 L681.1 273.6 L681.2 277.1 L681.5 280.6 L681.9 284.0 L682.5 287.4 L683.1 290.8 L683.8 294.1 L684.5 297.4 L685.3 300.6 L686.2 303.6 L687.0 306.6 L687.9 309.4 L688.7 312.2 L689.6 314.7 L690.6 317.0 L691.6 319.4 L692.7 321.7 L693.9 323.9 L695.1 326.0 L696.3 328.0 L697.5 329.8 L698.7 331.5 L699.8 333.1 L701.0 334.6 L702.1 335.9 L703.1 337.0 L704.2 338.0 L705.2 338.9 L706.3 339.4 L706.9 339.2 L707.2 337.9 L707.1 336.6 L706.8 335.1 L706.5 333.6 L706.1 331.9 L705.6 330.2 L705.0 328.4 L704.5 326.5 L703.9 324.5 L703.4 322.5 L702.8 320.4 L702.3 318.2 L701.8 316.0 L701.4 313.8 L700.9 311.3 L700.3 308.7 L699.6 306.0 L698.7 303.2 L697.9 300.4 L697.1 297.5 L696.4 294.5 L695.7 291.5 L695.1 288.5 L694.5 285.4 L694.0 282.4 L693.7 279.3 L693.4 276.4 L693.3 273.4 L693.3 270.4 L693.4 267.2 L693.6 264.0 L693.8 260.8 L694.2 257.5 L694.6 254.1 L695.1 250.8 L695.7 247.4 L696.3 244.0 L697.1 240.6 L697.8 237.3 L698.7 234.0 L699.6 230.7 L700.5 227.5 L701.6 224.3 L702.7 221.0 L703.9 217.8 L705.2 214.5 L706.5 211.1 L707.8 207.8 L709.2 204.4 L710.6 201.1 L712.0 197.9 L713.4 194.7 L714.9 191.7 L716.4 188.7 L717.9 185.9 L719.3 183.2 L720.8 180.7 L722.4 178.2 L724.2 175.7 L726.0 173.2 L727.9 170.8 L729.8 168.4 L731.6 166.1 L733.5 163.9 L735.2 161.8 L736.8 159.9 L738.3 158.0 L739.6 156.3 L740.6 154.7 L741.2 153.2Z" fill="#d6dfa5"/><path d="M697.5 213.3 L695.3 219.3 L693.3 225.3 L691.6 231.2 L690.1 237.3 L688.8 243.4 L687.7 249.6 L686.8 255.7 L686.2 261.8 L685.8 267.7 L685.7 273.5 L686.1 279.3 L686.8 285.0 L687.8 290.7 L689.1 296.3 L690.4 301.6 L691.9 306.7 L693.3 311.5 L694.6 315.8 L695.9 319.9 L697.4 323.8 L699.0 327.3 L700.5 330.6 L702.0 333.5" fill="none" stroke="#fff" stroke-width="0.84" stroke-dasharray="4.3 3.4 5.5 4.1" opacity="0.85"/><path d="M695.8 219.6 L693.9 225.5 L692.2 231.4 L690.7 237.4 L689.4 243.5 L688.3 249.7 L687.4 255.8 L686.8 261.8 L686.4 267.8 L686.4 273.5 L686.7 279.2 L687.4 284.9 L688.4 290.6 L689.7 296.1 L691.0 301.5 L692.5 306.6 L693.9 311.3 L695.2 315.7 L696.5 319.7 L698.0 323.5 L699.5 327.1 L701.1 330.3" fill="none" stroke="#fff" stroke-width="0.78" stroke-dasharray="3.5 5.6 8.4 5.0" opacity="0.85"/><path d="M760.8 146.6 L761.2 148.2 L762.1 149.9 L763.2 151.7 L764.5 153.7 L766.0 155.8 L767.6 158.0 L769.3 160.3 L771.0 162.7 L772.7 165.2 L774.5 167.7 L776.2 170.2 L777.9 172.7 L779.4 175.2 L780.9 177.6 L782.3 180.1 L783.7 182.7 L785.1 185.3 L786.5 188.0 L787.9 190.8 L789.3 193.6 L790.7 196.4 L792.1 199.3 L793.4 202.1 L794.8 204.9 L796.1 207.8 L797.4 210.6 L798.6 213.4 L799.8 216.2 L800.9 219.0 L802.0 221.8 L803.1 224.7 L804.1 227.6 L805.1 230.5 L806.0 233.4 L806.9 236.3 L807.8 239.2 L808.5 242.1 L809.2 245.0 L809.8 247.9 L810.4 250.7 L810.9 253.6 L811.3 256.4 L811.6 259.2 L811.8 262.1 L812.0 265.0 L812.1 267.9 L812.1 270.8 L812.0 273.7 L811.9 276.6 L811.8 279.6 L811.6 282.5 L811.3 285.3 L811.0 288.2 L810.7 291.0 L810.3 293.8 L809.9 296.5 L809.5 299.1 L808.9 301.8 L808.3 304.5 L807.6 307.2 L806.9 309.9 L806.1 312.7 L805.3 315.3 L804.4 317.9 L803.6 320.4 L803.1 323.0 L802.6 325.4 L802.1 327.6 L801.7 329.7 L801.3 331.6 L801.0 333.2 L800.7 334.6 L800.4 335.8 L800.1 337.0 L799.8 338.0 L799.5 339.0 L799.2 339.8 L798.9 340.7 L798.6 341.4 L798.3 342.1 L798.1 342.9 L797.9 343.6 L797.9 344.3 L798.1 345.1 L798.5 345.5 L799.3 345.4 L800.0 345.3 L800.6 345.0 L801.3 344.7 L802.0 344.3 L802.8 343.8 L803.6 343.2 L804.5 342.5 L805.4 341.6 L806.3 340.6 L807.3 339.5 L808.3 338.2 L809.3 336.7 L810.3 335.0 L811.2 333.3 L812.3 331.4 L813.4 329.3 L814.6 327.0 L815.8 324.6 L816.7 322.0 L817.6 319.2 L818.5 316.4 L819.3 313.5 L820.1 310.5 L820.9 307.5 L821.6 304.5 L822.2 301.5 L822.7 298.5 L823.1 295.6 L823.5 292.6 L823.9 289.6 L824.2 286.6 L824.5 283.5 L824.7 280.4 L824.9 277.2 L825.0 274.0 L825.0 270.8 L825.0 267.6 L824.9 264.4 L824.7 261.2 L824.5 258.0 L824.1 254.8 L823.7 251.6 L823.2 248.4 L822.5 245.3 L821.8 242.1 L821.1 238.9 L820.3 235.8 L819.4 232.6 L818.4 229.5 L817.4 226.4 L816.4 223.3 L815.3 220.3 L814.1 217.2 L813.0 214.2 L811.8 211.2 L810.5 208.3 L809.2 205.2 L807.8 202.2 L806.4 199.2 L804.9 196.3 L803.2 193.4 L801.5 190.5 L799.7 187.7 L798.0 185.0 L796.2 182.3 L794.4 179.6 L792.6 177.1 L790.8 174.6 L788.9 172.2 L787.0 169.8 L785.0 167.3 L782.9 165.0 L780.7 162.6 L778.5 160.4 L776.2 158.2 L774.0 156.1 L771.9 154.1 L769.8 152.3 L767.8 150.7 L766.0 149.2 L764.3 147.9 L762.7 146.9 L761.2 146.2Z" fill="#d6dfa5"/><path d="M808.0 218.7 L809.9 223.9 L811.7 229.1 L813.4 234.4 L814.8 239.7 L816.1 245.0 L817.1 250.3 L817.9 255.6 L818.5 260.9 L818.7 266.2 L818.8 271.6 L818.6 276.9 L818.3 282.3 L817.8 287.5 L817.2 292.6 L816.5 297.5 L815.6 302.5 L814.5 307.5 L813.1 312.5 L811.6 317.3 L810.1 322.0 L808.6 326.2 L807.2 330.1 L806.0 333.4" fill="none" stroke="#fff" stroke-width="0.85" stroke-dasharray="10.1 3.5 14.6 3.8" opacity="0.85"/><path d="M780.0 165.2 L783.3 169.6 L786.4 173.9 L789.2 178.3 L792.1 182.9 L794.9 187.7 L797.7 192.6 L800.4 197.6 L802.9 202.8 L805.3 207.9 L807.5 213.0 L809.5 218.1 L811.4 223.4 L813.2 228.6 L814.9 233.9 L816.4 239.3 L817.6 244.7 L818.7 250.0 L819.5 255.4 L820.0 260.7" fill="none" stroke="#fff" stroke-width="1.04" stroke-dasharray="7.4 2.7 13.7 2.0" opacity="0.85"/><path d="M752.7 146.0 L752.1 147.8 L751.6 150.1 L751.3 152.6 L751.0 155.5 L750.8 158.7 L750.5 162.1 L750.3 165.6 L750.2 169.2 L750.0 172.9 L749.9 176.5 L750.0 180.1 L750.1 183.6 L750.2 186.9 L750.3 190.0 L750.4 192.9 L750.6 196.0 L750.7 199.0 L750.8 202.0 L751.0 205.0 L751.1 207.9 L751.3 210.9 L751.4 213.7 L751.5 216.5 L751.6 219.2 L751.7 221.7 L751.8 224.2 L751.8 226.5 L751.8 228.7 L751.8 230.7 L751.7 232.7 L751.6 234.5 L751.4 236.3 L751.3 238.1 L751.1 239.7 L750.9 241.3 L750.7 242.7 L750.6 244.1 L750.4 245.4 L750.2 246.6 L750.1 247.7 L749.9 248.7 L749.8 249.5 L758.2 250.5 L758.3 249.7 L758.4 248.8 L758.5 247.7 L758.7 246.6 L758.9 245.3 L759.1 243.8 L759.3 242.3 L759.5 240.6 L759.6 238.9 L759.8 237.0 L760.0 235.1 L760.1 233.1 L760.2 230.9 L760.2 228.7 L760.2 226.4 L760.2 224.0 L760.1 221.5 L760.0 218.9 L759.9 216.1 L759.8 213.3 L759.7 210.5 L759.5 207.5 L759.4 204.6 L759.2 201.6 L759.1 198.6 L758.9 195.6 L758.8 192.6 L758.7 189.6 L758.6 186.6 L758.5 183.3 L758.3 179.8 L758.2 176.2 L757.8 172.6 L757.4 169.0 L757.0 165.4 L756.5 161.9 L756.1 158.5 L755.6 155.4 L755.1 152.5 L754.6 150.0 L754.1 147.8 L753.3 146.0Z" fill="#d6dfa5"/><path d="M752.9 165.5 L753.2 171.8 L753.4 178.2 L753.6 184.3 L753.8 189.8 L754.0 195.0 L754.2 200.3 L754.5 205.6 L754.7 210.7 L755.0 215.6" fill="none" stroke="#fff" stroke-width="0.88" stroke-dasharray="8.1 2.7 11.6 3.5" opacity="0.85"/><path d="M754.9 165.4 L755.1 171.8 L755.3 178.1 L755.5 184.2 L755.7 189.8 L756.0 195.0 L756.2 200.2 L756.5 205.5 L756.7 210.6" fill="none" stroke="#fff" stroke-width="1.10" stroke-dasharray="12.2 2.6 8.5 3.1" opacity="0.85"/><path d="M603.5 227.5 L605.2 229.2 L607.0 229.9 L609.1 230.5 L611.4 230.9 L613.8 231.1 L616.2 230.6 L618.7 230.1 L621.2 229.7 L623.8 229.3 L626.3 228.9 L628.7 228.7 L630.9 228.5 L633.0 228.4 L634.8 228.4 L636.4 228.5 L638.1 228.7 L639.7 229.0 L641.3 229.3 L642.8 229.7 L644.4 230.1 L646.0 230.6 L647.5 231.2 L649.1 231.8 L650.8 232.4 L652.5 233.1 L654.2 233.8 L656.0 234.6 L657.8 235.2 L659.8 235.8 L661.8 236.5 L664.0 237.3 L666.3 238.1 L668.7 238.9 L671.0 239.8 L673.4 240.6 L675.7 241.4 L678.0 242.2 L680.1 242.9 L682.1 243.4 L683.9 243.8 L685.6 244.1 L687.1 243.9 L687.3 243.3 L686.6 242.0 L685.5 240.8 L684.2 239.5 L682.6 238.2 L680.8 236.8 L678.9 235.4 L676.9 233.9 L674.8 232.4 L672.7 231.0 L670.5 229.6 L668.3 228.2 L666.2 227.0 L664.1 225.8 L662.2 224.8 L660.3 224.0 L658.5 223.2 L656.8 222.5 L655.0 221.8 L653.2 221.1 L651.4 220.4 L649.6 219.8 L647.7 219.2 L645.8 218.7 L643.8 218.2 L641.8 217.7 L639.7 217.4 L637.5 217.1 L635.2 217.0 L632.8 217.0 L630.2 217.1 L627.6 217.3 L624.8 217.6 L622.1 218.0 L619.4 218.4 L616.7 218.9 L614.1 219.3 L611.6 219.8 L609.4 220.9 L607.5 222.2 L605.8 223.4 L604.4 224.8 L603.5 226.9Z" fill="#d6dfa5"/><path d="M612.8 222.8 L617.2 222.0 L621.9 221.2 L626.6 220.5 L631.0 220.2 L635.1 220.1 L638.7 220.4 L642.2 221.0 L645.4 221.8 L648.6 222.8 L651.7 223.9 L654.7 225.1 L657.8 226.3" fill="none" stroke="#fff" stroke-width="0.67" stroke-dasharray="4.4 5.0 12.1 2.3" opacity="0.85"/><path d="M603.9 229.5 L606.4 229.0 L609.8 228.4 L613.7 227.6 L618.1 226.8 L622.6 226.0 L627.1 225.4 L631.3 225.0 L634.9 225.0 L638.1 225.3 L641.2 225.8 L644.1 226.5" fill="none" stroke="#fff" stroke-width="0.87" stroke-dasharray="10.1 5.2 12.0 3.1" opacity="0.85"/><path d="M606.8 229.2 L606.6 232.3 L607.4 234.6 L608.7 236.6 L610.7 238.1 L612.9 239.8 L615.3 241.6 L617.8 243.5 L620.4 245.6 L623.0 247.7 L625.7 249.9 L628.5 252.2 L631.2 254.6 L633.9 257.1 L636.6 259.6 L639.3 262.3 L642.4 265.4 L645.7 268.8 L649.2 272.4 L653.0 276.0 L656.8 279.6 L660.6 283.3 L664.3 286.9 L667.9 290.3 L671.3 293.5 L674.5 296.3 L677.5 298.8 L680.1 300.9 L682.5 302.2 L682.9 301.8 L681.8 299.3 L680.0 296.5 L677.9 293.3 L675.3 289.9 L672.5 286.1 L669.5 282.2 L666.3 278.1 L663.0 274.0 L659.6 269.8 L656.2 265.8 L652.9 262.0 L649.5 258.5 L646.4 255.3 L643.4 252.4 L640.6 249.8 L637.8 247.2 L634.9 244.7 L632.1 242.3 L629.3 240.0 L626.5 237.8 L623.9 235.7 L621.3 233.8 L619.0 231.9 L616.7 230.2 L614.7 228.7 L612.4 228.0 L610.0 227.8 L607.2 228.8Z" fill="#d6dfa5"/><path d="M615.4 237.8 L619.6 241.1 L624.3 244.8 L629.1 248.7 L633.9 253.0 L638.7 257.4 L643.8 262.5 L649.6 268.6 L655.8 275.2 L662.0 282.0" fill="none" stroke="#fff" stroke-width="0.70" stroke-dasharray="10.1 5.4 14.4 4.9" opacity="0.85"/><path d="M605.7 230.7 L608.2 232.6 L611.4 235.1 L615.3 238.0 L619.5 241.3 L624.1 244.9" fill="none" stroke="#fff" stroke-width="0.76" stroke-dasharray="3.6 3.7 13.5 3.1" opacity="0.85"/><path d="M601.7 236.0 L600.4 237.9 L599.4 240.2 L598.4 242.9 L597.5 246.0 L596.6 249.4 L595.7 253.1 L594.9 257.0 L594.1 261.1 L593.5 265.3 L593.3 269.6 L593.4 274.0 L593.7 278.3 L594.2 282.7 L595.0 286.8 L596.0 290.8 L597.2 294.9 L598.5 298.9 L599.9 303.1 L601.5 307.3 L603.3 311.4 L605.1 315.6 L607.1 319.8 L609.2 323.8 L611.3 327.9 L613.6 331.8 L616.0 335.7 L618.5 339.4 L621.1 343.0 L623.8 346.4 L626.6 349.8 L629.6 353.2 L632.7 356.4 L635.9 359.6 L639.2 362.8 L642.5 365.8 L646.0 368.7 L649.5 371.5 L653.1 374.2 L656.7 376.8 L660.4 379.2 L664.1 381.4 L667.8 383.6 L671.7 385.5 L675.8 387.3 L680.0 388.9 L684.2 390.3 L688.5 391.6 L692.8 392.8 L697.0 393.8 L701.2 394.7 L705.3 395.6 L709.3 396.3 L713.2 397.0 L716.8 397.7 L720.3 398.2 L723.5 398.5 L726.7 398.9 L729.9 399.1 L733.0 399.2 L736.0 399.3 L738.9 399.2 L741.6 399.1 L744.2 399.0 L746.7 398.7 L748.9 398.5 L751.0 398.2 L752.9 397.8 L754.6 397.5 L756.1 397.0 L757.5 396.3 L757.5 395.7 L756.3 394.8 L754.8 394.2 L753.1 393.7 L751.2 393.2 L749.1 392.8 L746.9 392.3 L744.6 391.9 L742.2 391.4 L739.6 390.9 L737.0 390.3 L734.2 389.7 L731.4 389.0 L728.6 388.3 L725.7 387.5 L722.5 386.6 L719.0 385.7 L715.4 385.0 L711.6 384.3 L707.7 383.6 L703.8 382.8 L699.8 381.9 L695.8 380.9 L691.8 379.9 L687.9 378.7 L684.1 377.4 L680.4 376.0 L676.9 374.5 L673.6 372.8 L670.3 370.9 L666.9 368.9 L663.6 366.7 L660.3 364.3 L657.0 361.9 L653.7 359.3 L650.5 356.6 L647.4 353.8 L644.4 350.9 L641.5 348.0 L638.6 344.9 L635.9 341.9 L633.3 338.8 L630.9 335.6 L628.6 332.4 L626.3 329.0 L624.1 325.5 L622.0 321.9 L619.9 318.2 L618.0 314.4 L616.2 310.5 L614.5 306.6 L612.9 302.8 L611.4 298.9 L610.1 295.1 L608.9 291.3 L607.8 287.7 L607.0 284.2 L606.3 280.8 L605.9 277.2 L605.6 273.4 L605.5 269.6 L605.4 265.7 L605.2 261.7 L605.0 257.8 L604.9 254.0 L604.7 250.3 L604.6 246.8 L604.3 243.6 L604.0 240.7 L603.4 238.1 L602.3 236.0Z" fill="#d6dfa5"/><path d="M600.9 250.8 L600.2 257.4 L599.8 264.5 L599.7 271.7 L600.2 278.7 L601.3 285.4 L603.0 292.0 L605.2 298.9 L607.9 305.9 L610.9 312.9 L614.3 319.9 L618.0 326.6 L622.0 333.1 L626.2 339.1 L630.8 344.8 L635.8 350.4" fill="none" stroke="#fff" stroke-width="0.62" stroke-dasharray="10.7 3.0 10.5 4.3" opacity="0.85"/><path d="M599.7 278.8 L600.8 285.5 L602.5 292.2 L604.8 299.1 L607.4 306.1 L610.4 313.2 L613.8 320.1 L617.6 326.9 L621.6 333.4 L625.8 339.4 L630.4 345.2 L635.4 350.8 L640.8 356.2" fill="none" stroke="#fff" stroke-width="1.05" stroke-dasharray="3.1 2.6 7.0 2.2" opacity="0.85"/><path d="M820.8 238.0 L822.2 238.3 L823.7 238.3 L825.4 238.1 L827.2 237.8 L829.2 237.5 L831.2 237.1 L833.4 236.6 L835.7 236.2 L838.1 235.7 L840.5 235.3 L843.0 234.9 L845.5 234.6 L848.1 234.4 L850.7 234.2 L853.5 234.0 L856.7 233.7 L860.3 233.5 L864.1 233.3 L868.1 233.1 L872.1 233.0 L876.2 232.9 L880.2 232.8 L884.0 232.8 L887.7 232.7 L891.0 232.5 L894.0 231.3 L896.5 229.9 L898.5 227.5 L898.5 226.9 L896.4 224.6 L893.9 223.3 L890.9 222.1 L887.6 222.0 L883.9 222.1 L880.0 222.1 L876.0 222.2 L871.8 222.3 L867.7 222.4 L863.6 222.6 L859.7 222.8 L855.9 223.0 L852.5 223.3 L849.3 223.8 L846.4 224.5 L843.6 225.3 L840.8 226.2 L838.2 227.2 L835.8 228.2 L833.4 229.2 L831.2 230.3 L829.2 231.4 L827.3 232.4 L825.6 233.5 L824.0 234.5 L822.7 235.4 L821.5 236.3 L820.6 237.4Z" fill="#d6dfa5"/><path d="M820.5 237.0 L822.6 236.2 L825.2 235.2 L828.4 234.0 L832.1 232.7 L836.1 231.4 L840.4 230.1 L845.1 229.1" fill="none" stroke="#fff" stroke-width="0.72" stroke-dasharray="4.1 2.7 8.2 4.3" opacity="0.85"/><path d="M827.9 232.5 L831.5 231.2 L835.6 229.8 L840.0 228.5 L844.7 227.4 L849.7 226.6" fill="none" stroke="#fff" stroke-width="0.88" stroke-dasharray="6.5 2.7 13.6 4.6" opacity="0.85"/><path d="M902.7 233.3 L902.0 234.6 L902.0 236.0 L902.1 237.3 L902.4 238.7 L902.7 240.1 L903.0 241.5 L903.3 243.0 L903.5 244.6 L903.7 246.2 L903.8 247.8 L903.8 249.6 L903.8 251.4 L904.0 253.3 L904.0 255.5 L903.9 258.2 L903.8 261.3 L903.5 264.7 L903.2 268.4 L902.8 272.3 L902.3 276.2 L901.7 280.3 L901.1 284.4 L900.3 288.6 L899.5 292.6 L898.6 296.5 L897.6 300.3 L896.6 303.9 L895.4 307.1 L894.2 310.3 L892.8 313.4 L891.3 316.5 L889.8 319.5 L888.1 322.5 L886.3 325.4 L884.5 328.3 L882.6 331.1 L880.6 333.9 L878.6 336.6 L876.4 339.3 L874.3 341.9 L872.1 344.4 L869.8 346.9 L867.5 349.4 L865.2 351.8 L862.8 354.2 L860.3 356.5 L857.8 358.7 L855.2 360.9 L852.6 363.0 L850.0 365.1 L847.3 367.0 L844.5 368.9 L841.7 370.6 L838.8 372.3 L835.9 373.9 L833.0 375.3 L830.0 376.6 L826.6 377.9 L823.0 379.3 L819.1 380.7 L815.1 382.0 L811.1 383.3 L807.0 384.5 L803.0 385.7 L799.1 386.9 L795.5 388.0 L792.2 389.1 L789.2 390.2 L786.7 391.4 L784.8 392.9 L785.0 393.5 L787.3 394.1 L790.0 394.3 L793.1 394.4 L796.6 394.3 L800.4 394.2 L804.5 393.9 L808.7 393.6 L813.1 393.1 L817.6 392.6 L822.0 391.9 L826.4 391.0 L830.6 390.0 L834.7 388.7 L838.4 387.1 L841.8 385.4 L845.2 383.6 L848.4 381.7 L851.6 379.7 L854.7 377.7 L857.7 375.5 L860.7 373.2 L863.5 370.9 L866.4 368.5 L869.1 366.0 L871.8 363.5 L874.4 360.9 L876.9 358.3 L879.4 355.7 L881.8 353.0 L884.2 350.2 L886.5 347.4 L888.8 344.5 L891.0 341.6 L893.2 338.5 L895.3 335.4 L897.4 332.2 L899.3 329.0 L901.2 325.7 L902.9 322.3 L904.6 318.8 L906.1 315.3 L907.6 311.7 L908.9 307.8 L910.1 303.8 L911.2 299.6 L912.2 295.4 L913.1 291.0 L913.9 286.6 L914.6 282.2 L915.2 277.9 L915.7 273.7 L916.1 269.7 L916.4 265.8 L916.7 262.1 L916.9 258.8 L917.0 255.7 L916.9 252.6 L916.7 249.7 L915.9 247.1 L914.9 244.7 L913.8 242.6 L912.6 240.7 L911.4 239.0 L910.1 237.6 L908.9 236.4 L907.8 235.4 L906.7 234.6 L905.7 233.9 L904.6 233.4 L903.3 233.1Z" fill="#d6dfa5"/><path d="M902.3 237.9 L903.5 240.0 L904.8 242.3 L905.9 244.9 L906.9 247.9 L907.5 251.4 L907.7 255.6 L907.5 260.7 L907.0 266.9 L906.3 273.7 L905.4 280.9 L904.1 288.2 L902.7 295.4 L900.9 302.2 L898.9 308.4 L896.5 314.1 L893.8 319.7 L890.8 325.1 L887.6 330.3 L884.1 335.3 L880.4 340.2 L876.5 344.9 L872.5 349.4" fill="none" stroke="#fff" stroke-width="0.87" stroke-dasharray="10.0 4.7 5.5 2.7" opacity="0.85"/><path d="M909.3 240.1 L910.6 243.2 L911.7 246.8 L912.5 250.9 L912.7 255.6 L912.5 261.0 L912.0 267.3 L911.3 274.3 L910.3 281.6 L909.1 289.1 L907.5 296.5 L905.7 303.6 L903.6 310.2 L901.1 316.2 L898.3 322.0 L895.1 327.6 L891.8 333.1 L888.1 338.3 L884.3 343.3" fill="none" stroke="#fff" stroke-width="0.69" stroke-dasharray="7.4 2.9 8.3 3.0" opacity="0.85"/><path d="M902.8 234.5 L899.4 233.7 L896.6 234.2 L894.2 235.8 L891.7 237.9 L889.0 240.2 L886.2 242.6 L883.2 245.2 L880.1 247.9 L876.9 250.6 L873.7 253.4 L870.5 256.2 L867.5 259.0 L864.5 261.7 L861.6 264.4 L858.8 267.1 L855.8 270.0 L852.6 273.1 L849.7 276.4 L846.7 279.8 L843.7 283.2 L840.8 286.7 L838.0 290.0 L835.4 293.2 L833.0 296.3 L830.8 299.1 L828.9 301.7 L827.4 304.0 L826.5 306.2 L826.9 306.6 L829.1 305.6 L831.4 304.1 L833.9 302.1 L836.7 299.9 L839.7 297.4 L842.9 294.7 L846.1 291.9 L849.5 289.0 L852.9 286.0 L856.3 283.0 L859.6 280.1 L862.7 277.1 L865.6 274.3 L868.4 271.6 L871.2 269.0 L874.1 266.4 L877.1 263.6 L880.3 260.9 L883.4 258.1 L886.5 255.4 L889.6 252.7 L892.6 250.1 L895.5 247.7 L898.1 245.4 L900.6 243.3 L902.6 241.2 L903.5 238.4 L903.2 234.9Z" fill="#d6dfa5"/><path d="M880.5 253.2 L875.0 258.0 L869.6 262.9 L864.6 267.5 L859.5 272.4 L854.1 277.7 L848.5 283.3 L843.0 288.8 L837.8 294.1" fill="none" stroke="#fff" stroke-width="0.91" stroke-dasharray="8.4 6.0 13.7 3.7" opacity="0.85"/><path d="M891.9 244.9 L886.7 249.4 L881.3 254.1 L875.8 258.9 L870.4 263.8 L865.4 268.4 L860.3 273.2" fill="none" stroke="#fff" stroke-width="1.09" stroke-dasharray="4.1 5.5 13.9 3.5" opacity="0.85"/><path d="M753.7 246.9 L751.4 247.0 L749.8 247.7 L748.2 248.7 L746.6 249.9 L744.9 251.3 L743.3 252.8 L742.0 254.7 L740.9 256.8 L739.7 259.0 L738.5 261.2 L737.3 263.4 L736.0 265.7 L734.8 267.9 L733.5 270.1 L732.3 272.3 L730.9 274.6 L729.4 277.0 L727.9 279.4 L726.3 282.0 L724.6 284.6 L723.0 287.2 L721.3 290.0 L719.7 292.7 L718.0 295.5 L716.5 298.2 L715.0 301.0 L713.6 303.8 L712.3 306.6 L711.2 309.3 L710.0 312.0 L708.9 314.7 L707.9 317.4 L706.9 320.1 L705.9 322.9 L705.0 325.7 L704.1 328.4 L703.4 331.2 L702.7 334.0 L702.1 336.7 L701.7 339.5 L701.3 342.3 L701.1 345.0 L701.1 347.6 L701.1 350.3 L701.3 352.9 L701.6 355.5 L701.9 358.0 L702.4 360.6 L703.0 363.1 L703.7 365.5 L704.5 367.9 L705.3 370.3 L706.3 372.6 L707.4 374.8 L708.6 376.9 L709.9 379.0 L711.3 381.0 L712.9 383.0 L714.5 384.8 L716.3 386.6 L718.2 388.3 L720.1 389.9 L722.1 391.4 L724.2 392.9 L726.3 394.2 L728.4 395.5 L730.6 396.6 L732.8 397.7 L735.0 398.6 L737.3 399.5 L739.6 400.2 L741.9 400.8 L744.4 401.4 L746.8 401.8 L749.3 402.1 L751.9 402.3 L754.4 402.5 L756.9 402.5 L759.4 402.4 L761.9 402.3 L764.3 402.0 L766.7 401.6 L769.0 401.2 L771.3 400.6 L773.6 399.8 L775.8 398.9 L777.9 397.9 L780.0 396.8 L782.0 395.5 L783.8 394.2 L785.7 392.9 L787.4 391.4 L789.0 390.0 L790.6 388.5 L792.1 387.0 L793.5 385.5 L794.8 384.0 L796.1 382.6 L797.3 381.1 L798.4 379.6 L799.5 378.1 L800.5 376.5 L801.5 374.9 L802.4 373.2 L803.3 371.5 L804.0 369.7 L804.7 367.8 L805.3 365.9 L805.8 364.0 L806.2 361.9 L806.5 359.8 L806.7 357.7 L806.7 355.5 L806.7 353.3 L806.6 351.0 L806.3 348.6 L806.0 346.3 L805.7 343.9 L805.2 341.5 L804.7 339.1 L804.1 336.7 L803.4 334.3 L802.7 331.9 L801.9 329.5 L801.1 327.2 L800.2 324.8 L799.1 322.4 L798.0 320.1 L796.7 317.9 L795.4 315.7 L794.0 313.6 L792.5 311.5 L791.0 309.5 L789.5 307.4 L788.0 305.4 L786.5 303.4 L785.0 301.3 L783.5 299.2 L782.0 297.1 L780.6 294.9 L779.1 292.5 L777.4 289.9 L775.7 287.1 L773.9 284.2 L772.0 281.2 L770.1 278.2 L768.2 275.3 L766.4 272.4 L764.6 269.6 L762.8 267.1 L761.2 264.8 L759.6 262.7 L758.1 261.1 L756.7 259.9 L756.1 260.1 L756.3 262.0 L756.8 264.2 L757.5 266.6 L758.4 269.3 L759.5 272.2 L760.7 275.3 L762.0 278.5 L763.3 281.8 L764.7 285.0 L766.1 288.3 L767.5 291.5 L768.8 294.5 L770.1 297.4 L771.4 300.1 L772.7 302.6 L774.0 305.1 L775.3 307.5 L776.6 309.8 L777.9 312.1 L779.2 314.3 L780.5 316.4 L781.7 318.5 L782.8 320.5 L783.9 322.5 L784.9 324.4 L785.8 326.3 L786.6 328.1 L787.4 330.0 L788.2 331.9 L788.9 334.0 L789.6 336.0 L790.2 338.1 L790.8 340.2 L791.3 342.3 L791.8 344.3 L792.1 346.3 L792.5 348.3 L792.7 350.2 L792.9 352.0 L793.0 353.7 L793.0 355.4 L792.9 356.9 L792.8 358.3 L792.6 359.7 L792.4 361.0 L792.1 362.2 L791.7 363.4 L791.3 364.6 L790.8 365.8 L790.2 366.9 L789.6 368.1 L788.9 369.2 L788.2 370.3 L787.3 371.5 L786.5 372.7 L785.5 373.8 L784.5 375.0 L783.4 376.2 L782.3 377.4 L781.1 378.6 L779.8 379.8 L778.5 381.0 L777.2 382.1 L775.8 383.1 L774.4 384.1 L773.0 384.9 L771.6 385.7 L770.2 386.4 L768.8 387.0 L767.5 387.4 L766.0 387.8 L764.3 388.1 L762.6 388.4 L760.7 388.6 L758.8 388.7 L756.8 388.8 L754.8 388.7 L752.8 388.6 L750.8 388.5 L748.9 388.2 L747.0 387.9 L745.1 387.5 L743.4 387.0 L741.7 386.5 L740.1 385.9 L738.5 385.2 L736.8 384.4 L735.1 383.5 L733.4 382.5 L731.8 381.5 L730.2 380.4 L728.7 379.2 L727.2 378.0 L725.8 376.7 L724.5 375.4 L723.3 374.1 L722.3 372.8 L721.3 371.4 L720.4 370.0 L719.6 368.5 L718.8 366.8 L718.1 365.1 L717.4 363.4 L716.8 361.6 L716.3 359.7 L715.8 357.8 L715.5 355.8 L715.2 353.8 L715.0 351.8 L714.8 349.7 L714.8 347.7 L714.9 345.6 L715.0 343.6 L715.3 341.5 L715.6 339.3 L716.1 337.0 L716.7 334.6 L717.3 332.2 L718.1 329.8 L718.9 327.3 L719.8 324.8 L720.7 322.3 L721.7 319.7 L722.7 317.2 L723.8 314.7 L724.9 312.2 L726.0 309.8 L727.2 307.3 L728.5 304.8 L730.0 302.3 L731.5 299.7 L733.0 297.1 L734.6 294.5 L736.3 291.9 L737.9 289.3 L739.5 286.7 L741.1 284.2 L742.6 281.7 L744.1 279.3 L745.5 276.9 L746.8 274.6 L748.0 272.3 L749.3 270.0 L750.5 267.8 L751.8 265.5 L753.0 263.4 L754.1 261.3 L755.0 259.2 L755.4 256.9 L755.6 254.8 L755.8 252.8 L755.7 250.9 L755.4 249.1 L754.3 247.1Z" fill="#d6dfa5"/><path d="M748.9 258.5 L746.9 262.2 L744.8 266.1 L742.6 270.0 L740.3 274.0 L738.0 278.0 L735.3 282.3 L732.5 286.8 L729.6 291.4 L726.8 296.0 L724.1 300.7 L721.6 305.3 L719.5 309.8 L717.6 314.3 L715.7 318.9 L714.0 323.5 L712.5 328.0 L711.1 332.5 L710.1 336.9 L709.4 341.2 L709.0 345.3 L708.9 349.4 L709.2 353.4 L709.8 357.3 L710.6 361.1 L711.7 364.8 L713.0 368.3 L714.6 371.6 L716.4 374.7 L718.5 377.5 L721.0 380.2 L723.7 382.8 L726.7 385.1 L729.9 387.3 L733.2 389.2 L736.5 390.8 L739.8 392.1 L743.2 393.1 L746.9 393.9 L750.7 394.4 L754.6 394.6 L758.5 394.6 L762.3 394.4" fill="none" stroke="#fff" stroke-width="0.61" stroke-dasharray="8.2 5.7 7.3 4.9" opacity="0.85"/><path d="M753.5 249.3 L752.1 251.8 L750.5 254.9 L748.6 258.3 L746.6 262.0 L744.5 265.9 L742.3 269.9 L740.1 273.8 L737.7 277.9 L735.0 282.2 L732.2 286.6 L729.3 291.2 L726.5 295.9 L723.8 300.5 L721.3 305.1 L719.2 309.7 L717.2 314.2 L715.4 318.7 L713.7 323.3 L712.1 327.9 L710.8 332.4 L709.8 336.9 L709.0 341.2 L708.6 345.3 L708.6 349.4 L708.9 353.4 L709.4 357.4 L710.3 361.2 L711.4 364.9 L712.7 368.5 L714.3 371.8" fill="none" stroke="#fff" stroke-width="0.90" stroke-dasharray="8.5 2.1 16.2 2.8" opacity="0.85"/></g><path d="M1113.4 129.7 L1113.4 131.0 L1113.6 132.5 L1114.0 134.2 L1114.4 136.0 L1114.9 138.0 L1115.5 140.2 L1116.1 142.4 L1116.7 144.7 L1117.3 147.1 L1117.9 149.5 L1118.4 152.0 L1119.0 154.4 L1119.4 156.8 L1119.8 159.1 L1120.1 161.6 L1120.4 164.1 L1120.7 166.7 L1121.0 169.3 L1121.3 172.0 L1121.6 174.8 L1121.8 177.5 L1121.9 180.3 L1122.1 183.1 L1122.1 185.8 L1122.1 188.6 L1122.1 191.3 L1122.0 193.9 L1121.9 196.6 L1121.7 199.2 L1121.5 201.9 L1121.3 204.7 L1121.0 207.4 L1120.7 210.1 L1120.3 212.8 L1119.8 215.5 L1119.3 218.2 L1118.7 220.8 L1118.0 223.4 L1117.3 225.9 L1116.5 228.4 L1115.6 230.7 L1114.6 233.0 L1113.6 235.3 L1112.4 237.6 L1111.1 239.9 L1109.7 242.2 L1108.2 244.5 L1106.7 246.8 L1105.0 249.0 L1103.4 251.1 L1101.7 253.1 L1099.9 255.1 L1098.2 257.0 L1096.4 258.8 L1094.7 260.4 L1093.0 262.0 L1091.2 263.4 L1089.5 264.7 L1087.8 265.9 L1086.1 267.0 L1084.4 268.0 L1082.6 268.9 L1080.9 269.8 L1079.0 270.6 L1077.1 271.3 L1075.2 272.0 L1073.2 272.6 L1071.1 273.2 L1068.9 273.7 L1066.7 274.2 L1064.3 274.5 L1061.7 274.8 L1058.8 275.0 L1055.7 275.1 L1052.4 275.1 L1049.1 275.0 L1045.8 274.9 L1042.6 274.8 L1039.5 274.6 L1036.5 274.5 L1033.8 274.3 L1031.3 274.2 L1029.1 274.1 L1027.4 274.1 L1027.2 284.7 L1028.8 284.7 L1030.8 284.8 L1033.2 284.9 L1035.9 285.1 L1038.9 285.3 L1042.1 285.4 L1045.5 285.5 L1048.9 285.6 L1052.4 285.7 L1055.8 285.7 L1059.2 285.6 L1062.5 285.4 L1065.7 285.1 L1068.5 284.6 L1071.2 284.1 L1073.7 283.5 L1076.1 282.8 L1078.5 282.1 L1080.8 281.3 L1083.1 280.4 L1085.3 279.5 L1087.5 278.4 L1089.6 277.2 L1091.7 276.0 L1093.8 274.7 L1095.8 273.2 L1097.8 271.7 L1099.8 270.0 L1101.9 268.3 L1103.9 266.4 L1105.8 264.4 L1107.8 262.3 L1109.7 260.0 L1111.6 257.7 L1113.5 255.4 L1115.3 252.9 L1117.0 250.4 L1118.7 247.9 L1120.3 245.3 L1121.7 242.7 L1123.1 240.0 L1124.4 237.4 L1125.5 234.6 L1126.5 231.9 L1127.5 229.0 L1128.3 226.2 L1129.0 223.3 L1129.7 220.4 L1130.3 217.4 L1130.8 214.5 L1131.2 211.5 L1131.6 208.6 L1131.9 205.7 L1132.1 202.8 L1132.3 199.9 L1132.5 197.0 L1132.6 194.1 L1132.5 191.2 L1132.3 188.2 L1132.1 185.3 L1131.7 182.3 L1131.3 179.4 L1130.9 176.5 L1130.4 173.6 L1129.9 170.8 L1129.3 168.0 L1128.7 165.3 L1128.1 162.7 L1127.5 160.1 L1126.8 157.7 L1126.1 155.2 L1125.3 152.7 L1124.4 150.2 L1123.5 147.7 L1122.5 145.3 L1121.5 143.0 L1120.5 140.8 L1119.4 138.7 L1118.4 136.7 L1117.4 134.9 L1116.5 133.2 L1115.6 131.7 L1114.8 130.5 L1114.0 129.5Z" fill="#e9eed2"/><path d="M1123.0 167.7 L1123.7 172.4 L1124.3 177.2 L1124.8 182.1 L1125.2 187.1 L1125.3 191.9 L1125.2 196.7 L1124.9 201.5 L1124.5 206.4 L1123.9 211.3 L1123.1 216.1 L1122.1 220.9 L1120.9 225.6 L1119.4 230.1 L1117.7 234.4 L1115.6 238.6 L1113.2 242.8 L1110.6 246.9 L1107.7 251.0 L1104.6 254.8 L1101.5 258.3 L1098.3 261.6 L1095.1 264.5 L1092.0 267.0 L1088.8 269.2 L1085.6 271.1 L1082.2 272.8 L1078.8 274.3" fill="none" stroke="#fff" stroke-width="0.66" stroke-dasharray="6.2 2.9 6.6 4.1" opacity="0.85"/><path d="M1126.2 172.0 L1126.8 176.9 L1127.3 181.9 L1127.7 187.0 L1127.8 191.9 L1127.7 196.8 L1127.4 201.7 L1127.0 206.6 L1126.3 211.6 L1125.5 216.6 L1124.5 221.5 L1123.3 226.3 L1121.8 230.9 L1120.0 235.4 L1117.8 239.8 L1115.4 244.1 L1112.6 248.4 L1109.7 252.5 L1106.5 256.4 L1103.3 260.0 L1100.0 263.4 L1096.7 266.4 L1093.5 269.0 L1090.1 271.3" fill="none" stroke="#fff" stroke-width="1.00" stroke-dasharray="4.6 2.6 10.0 4.3" opacity="0.85"/><path d="M1103.9 152.3 L1102.2 152.6 L1100.2 153.0 L1097.9 153.7 L1095.3 154.4 L1092.5 155.3 L1089.6 156.3 L1086.5 157.4 L1083.4 158.6 L1080.2 159.8 L1077.0 161.1 L1074.0 162.5 L1071.0 163.8 L1068.1 165.2 L1065.5 166.6 L1063.1 168.0 L1060.7 169.6 L1058.4 171.1 L1056.0 172.7 L1053.7 174.3 L1051.4 176.0 L1049.2 177.7 L1047.0 179.4 L1044.9 181.2 L1042.9 183.0 L1040.9 184.8 L1039.1 186.6 L1037.3 188.5 L1035.7 190.4 L1034.2 192.3 L1032.7 194.2 L1031.4 196.1 L1030.2 198.1 L1029.1 200.1 L1028.1 202.0 L1027.1 204.1 L1026.2 206.1 L1025.4 208.2 L1024.7 210.3 L1024.0 212.4 L1023.4 214.6 L1022.8 216.8 L1022.3 219.1 L1021.9 221.5 L1021.5 224.0 L1021.2 226.6 L1021.1 229.2 L1020.9 231.9 L1020.9 234.6 L1020.9 237.3 L1020.9 239.9 L1021.0 242.5 L1021.1 245.1 L1021.1 247.6 L1021.2 250.0 L1021.3 252.3 L1021.3 254.5 L1021.4 256.7 L1021.5 258.9 L1021.6 261.2 L1021.7 263.4 L1021.9 265.6 L1022.1 267.7 L1022.2 269.7 L1022.4 271.7 L1022.6 273.5 L1022.8 275.2 L1022.9 276.8 L1023.1 278.1 L1023.2 279.3 L1023.3 280.3 L1031.3 279.7 L1031.3 278.6 L1031.1 277.4 L1031.0 276.0 L1030.9 274.4 L1030.7 272.7 L1030.5 270.9 L1030.3 269.0 L1030.2 267.0 L1030.0 264.9 L1029.8 262.8 L1029.7 260.7 L1029.6 258.6 L1029.5 256.4 L1029.5 254.3 L1029.4 252.1 L1029.3 249.7 L1029.3 247.3 L1029.2 244.8 L1029.1 242.3 L1029.0 239.8 L1029.0 237.2 L1029.0 234.7 L1029.1 232.2 L1029.2 229.7 L1029.3 227.3 L1029.6 225.0 L1029.9 222.8 L1030.3 220.7 L1030.7 218.7 L1031.3 216.7 L1031.8 214.7 L1032.4 212.8 L1033.1 211.0 L1033.8 209.2 L1034.5 207.4 L1035.3 205.7 L1036.2 204.0 L1037.2 202.3 L1038.2 200.6 L1039.4 198.9 L1040.6 197.3 L1041.9 195.6 L1043.4 193.9 L1044.9 192.3 L1046.6 190.6 L1048.3 189.0 L1050.2 187.4 L1052.2 185.7 L1054.2 184.1 L1056.3 182.5 L1058.5 180.9 L1060.7 179.4 L1062.9 177.9 L1065.2 176.4 L1067.4 174.9 L1069.7 173.4 L1072.0 171.9 L1074.5 170.3 L1077.1 168.7 L1080.0 167.1 L1082.9 165.5 L1085.8 163.9 L1088.7 162.3 L1091.5 160.7 L1094.2 159.3 L1096.8 157.8 L1099.1 156.5 L1101.1 155.2 L1102.8 154.0 L1104.1 152.9Z" fill="#e9eed2"/><path d="M1097.8 156.8 L1093.2 158.8 L1088.1 161.1 L1082.9 163.5 L1077.6 166.0 L1072.7 168.6 L1068.3 171.1 L1064.2 173.7 L1060.2 176.4 L1056.3 179.1 L1052.5 182.0 L1048.9 184.9 L1045.6 187.8 L1042.5 190.8 L1039.8 193.9 L1037.5 196.9 L1035.4 200.0 L1033.6 203.1 L1032.0 206.3 L1030.7 209.6 L1029.5 212.9 L1028.5 216.5" fill="none" stroke="#fff" stroke-width="1.01" stroke-dasharray="5.7 5.9 16.5 3.1" opacity="0.85"/><path d="M1048.1 183.8 L1044.7 186.8 L1041.6 189.9 L1038.8 193.0 L1036.4 196.1 L1034.3 199.3 L1032.4 202.5 L1030.8 205.7 L1029.4 209.1 L1028.2 212.5 L1027.2 216.1 L1026.3 219.9 L1025.6 223.9 L1025.2 228.2 L1025.0 232.7 L1024.9 237.2 L1025.0 241.8 L1025.2 246.2 L1025.3 250.5" fill="none" stroke="#fff" stroke-width="0.79" stroke-dasharray="7.0 4.9 9.8 4.3" opacity="0.85"/><path d="M1100.0 183.3 L1098.7 184.9 L1097.3 186.9 L1095.9 189.3 L1094.4 192.1 L1092.7 195.1 L1091.0 198.3 L1089.1 201.6 L1087.2 205.1 L1085.2 208.6 L1083.1 212.1 L1081.1 215.7 L1079.0 219.2 L1076.9 222.5 L1074.7 225.6 L1072.2 228.8 L1069.4 232.2 L1066.3 235.7 L1063.0 239.3 L1059.6 242.9 L1056.0 246.6 L1052.4 250.1 L1048.9 253.6 L1045.6 256.9 L1042.4 260.1 L1039.6 263.1 L1037.4 266.1 L1035.7 268.9 L1034.8 271.5 L1035.2 271.9 L1037.8 271.0 L1040.5 269.3 L1043.6 267.2 L1046.7 264.5 L1049.9 261.4 L1053.3 258.1 L1056.9 254.6 L1060.5 250.9 L1064.1 247.3 L1067.6 243.5 L1071.0 239.9 L1074.2 236.2 L1077.1 232.7 L1079.7 229.4 L1082.1 226.0 L1084.4 222.5 L1086.5 218.8 L1088.6 215.1 L1090.4 211.3 L1092.1 207.5 L1093.6 203.8 L1095.1 200.2 L1096.4 196.7 L1097.5 193.5 L1098.5 190.5 L1099.4 187.9 L1100.1 185.5 L1100.6 183.5Z" fill="#e9eed2"/><path d="M1095.6 190.9 L1093.2 196.3 L1090.4 202.2 L1087.3 208.5 L1083.9 214.9 L1080.3 221.1 L1076.4 226.9" fill="none" stroke="#fff" stroke-width="0.88" stroke-dasharray="5.3 5.7 12.8 3.4" opacity="0.85"/><path d="M1095.3 197.2 L1092.5 203.2 L1089.4 209.6 L1086.0 216.0 L1082.2 222.4 L1078.2 228.2 L1073.5 234.1" fill="none" stroke="#fff" stroke-width="0.67" stroke-dasharray="10.5 4.6 12.2 5.0" opacity="0.85"/><path d="M1025.9 282.4 L1030.1 282.5 L1034.3 282.7 L1038.5 282.8 L1042.7 282.9 L1046.9 283.1 L1051.1 283.2 L1055.4 283.4 L1059.6 283.5 L1063.8 283.7 L1068.0 283.7 L1072.2 283.3 L1076.5 282.7 L1080.7 282.0 L1085.0 280.3 L1085.0 279.7 L1080.9 277.7 L1076.7 276.7 L1072.5 275.9 L1068.3 275.2 L1064.1 274.9 L1059.9 274.8 L1055.6 274.6 L1051.4 274.5 L1047.2 274.3 L1043.0 274.2 L1038.8 274.1 L1034.6 273.9 L1030.4 273.8 L1026.1 273.6Z" fill="#e9eed2"/><path d="M1040.8 278.2 L1048.1 278.4 L1055.5 278.7 L1062.9 278.9 L1070.3 279.2 L1077.6 279.4" fill="none" stroke="#fff" stroke-width="0.70" stroke-dasharray="7.7 5.7 12.7 3.8" opacity="0.85"/><path d="M1040.8 277.5 L1048.2 277.7 L1055.5 278.0 L1062.9 278.2" fill="none" stroke="#fff" stroke-width="0.93" stroke-dasharray="7.9 4.2 6.6 3.7" opacity="0.85"/><path d="M1176.7 129.5 L1175.8 131.4 L1174.9 133.7 L1174.0 136.4 L1173.1 139.4 L1172.1 142.8 L1171.1 146.3 L1170.1 150.1 L1169.2 154.0 L1168.3 157.9 L1167.4 161.9 L1166.6 165.9 L1165.9 169.9 L1165.3 173.7 L1164.9 177.3 L1164.6 180.8 L1164.2 184.4 L1164.0 188.1 L1163.7 191.8 L1163.6 195.5 L1163.5 199.2 L1163.6 202.9 L1163.7 206.6 L1163.9 210.2 L1164.2 213.8 L1164.6 217.2 L1165.0 220.5 L1165.5 223.7 L1166.1 226.8 L1166.8 229.6 L1167.6 232.3 L1168.4 234.9 L1169.3 237.3 L1170.3 239.6 L1171.4 241.8 L1172.6 243.9 L1173.8 246.0 L1175.1 248.0 L1176.5 250.0 L1177.9 251.9 L1179.4 253.8 L1181.0 255.8 L1182.6 257.8 L1184.2 259.8 L1186.0 261.9 L1187.7 264.1 L1189.6 266.4 L1191.6 268.7 L1193.7 271.0 L1195.9 273.3 L1198.2 275.5 L1200.7 277.7 L1203.4 279.8 L1206.2 281.7 L1209.2 283.5 L1212.3 285.0 L1215.7 286.3 L1219.5 287.4 L1223.5 288.2 L1227.8 288.7 L1232.3 289.0 L1237.0 289.2 L1241.6 289.3 L1246.3 289.2 L1250.8 289.1 L1255.2 289.0 L1259.3 288.8 L1263.0 288.7 L1266.3 288.6 L1269.0 288.5 L1271.2 288.5 L1271.2 277.9 L1268.9 277.9 L1266.0 277.9 L1262.6 278.1 L1258.9 278.2 L1254.8 278.4 L1250.5 278.5 L1246.1 278.6 L1241.7 278.7 L1237.3 278.6 L1233.0 278.4 L1228.9 278.1 L1225.2 277.6 L1221.9 277.0 L1219.1 276.3 L1216.6 275.3 L1214.2 274.1 L1211.9 272.7 L1209.6 271.2 L1207.5 269.5 L1205.4 267.7 L1203.4 265.8 L1201.5 263.8 L1199.6 261.7 L1197.7 259.5 L1196.0 257.4 L1194.2 255.2 L1192.5 253.1 L1190.8 251.0 L1189.2 249.1 L1187.8 247.3 L1186.4 245.5 L1185.1 243.8 L1183.9 242.1 L1182.8 240.4 L1181.8 238.7 L1180.9 237.0 L1180.0 235.2 L1179.2 233.3 L1178.4 231.3 L1177.7 229.2 L1177.1 226.9 L1176.5 224.4 L1176.0 221.8 L1175.5 219.0 L1175.1 216.0 L1174.8 212.8 L1174.5 209.5 L1174.3 206.1 L1174.2 202.7 L1174.2 199.1 L1174.1 195.5 L1174.0 192.0 L1173.9 188.4 L1173.9 184.8 L1173.9 181.3 L1173.9 177.9 L1174.0 174.4 L1174.2 170.8 L1174.5 167.0 L1174.8 163.0 L1175.2 159.0 L1175.6 155.1 L1176.0 151.1 L1176.4 147.3 L1176.8 143.6 L1177.2 140.2 L1177.4 137.0 L1177.6 134.2 L1177.6 131.7 L1177.3 129.7Z" fill="#e9eed2"/><path d="M1173.6 137.9 L1172.4 143.7 L1171.2 150.3 L1170.0 157.2 L1169.0 164.2 L1168.1 171.1 L1167.5 177.5 L1167.2 183.7 L1167.0 190.0 L1167.0 196.4 L1167.0 202.9 L1167.3 209.1 L1167.8 215.1 L1168.5 220.8 L1169.5 226.0 L1170.7 230.7 L1172.1 234.9 L1173.7 238.7 L1175.6 242.2 L1177.6 245.6 L1179.9 248.9 L1182.5 252.2 L1185.2 255.6 L1188.2 259.2" fill="none" stroke="#fff" stroke-width="0.97" stroke-dasharray="8.2 3.0 13.2 4.8" opacity="0.85"/><path d="M1176.4 144.5 L1175.2 151.0 L1174.0 157.8 L1173.0 164.8 L1172.1 171.5 L1171.6 177.7 L1171.3 183.8 L1171.1 190.1 L1171.0 196.4 L1171.1 202.7 L1171.3 208.9 L1171.8 214.7 L1172.5 220.2 L1173.4 225.1 L1174.6 229.5 L1175.9 233.4 L1177.4 237.0 L1179.1 240.2 L1181.0 243.4 L1183.2 246.5 L1185.7 249.7 L1188.4 253.0 L1191.3 256.7 L1194.4 260.5" fill="none" stroke="#fff" stroke-width="0.70" stroke-dasharray="9.4 2.8 9.4 3.1" opacity="0.85"/><path d="M1194.3 156.8 L1195.5 158.1 L1197.1 159.4 L1199.1 160.9 L1201.4 162.5 L1203.8 164.2 L1206.5 166.0 L1209.3 167.9 L1212.2 169.7 L1215.1 171.7 L1218.0 173.6 L1220.8 175.5 L1223.6 177.4 L1226.2 179.2 L1228.7 181.0 L1231.2 182.7 L1233.8 184.3 L1236.4 186.0 L1239.0 187.7 L1241.6 189.3 L1244.1 191.0 L1246.6 192.7 L1249.0 194.4 L1251.3 196.1 L1253.4 197.9 L1255.4 199.6 L1257.2 201.4 L1258.8 203.2 L1260.2 205.0 L1261.4 206.8 L1262.5 208.6 L1263.4 210.5 L1264.2 212.3 L1264.8 214.3 L1265.4 216.2 L1265.9 218.3 L1266.3 220.4 L1266.7 222.6 L1267.0 225.0 L1267.3 227.4 L1267.5 230.0 L1267.8 232.7 L1268.1 235.5 L1268.3 238.5 L1268.4 241.9 L1268.5 245.5 L1268.5 249.4 L1268.5 253.4 L1268.4 257.4 L1268.3 261.5 L1268.1 265.5 L1268.0 269.3 L1267.8 273.0 L1267.7 276.3 L1267.6 279.3 L1267.5 281.9 L1267.4 283.9 L1275.6 284.1 L1275.6 282.1 L1275.7 279.6 L1275.8 276.6 L1276.0 273.3 L1276.1 269.7 L1276.3 265.8 L1276.4 261.8 L1276.5 257.6 L1276.6 253.5 L1276.6 249.4 L1276.6 245.4 L1276.6 241.6 L1276.4 238.1 L1276.1 234.9 L1275.9 232.0 L1275.6 229.2 L1275.3 226.6 L1275.0 224.0 L1274.7 221.5 L1274.3 219.0 L1273.8 216.6 L1273.3 214.2 L1272.6 211.8 L1271.8 209.4 L1270.8 207.1 L1269.6 204.8 L1268.3 202.5 L1266.8 200.2 L1265.0 198.0 L1263.1 195.8 L1260.9 193.7 L1258.7 191.7 L1256.3 189.8 L1253.8 187.9 L1251.3 186.1 L1248.7 184.3 L1246.0 182.5 L1243.4 180.8 L1240.8 179.1 L1238.2 177.5 L1235.6 175.8 L1233.1 174.2 L1230.4 172.6 L1227.5 171.0 L1224.5 169.4 L1221.4 167.7 L1218.2 166.2 L1215.1 164.6 L1211.9 163.1 L1208.9 161.7 L1206.0 160.4 L1203.2 159.2 L1200.6 158.2 L1198.3 157.3 L1196.3 156.6 L1194.5 156.2Z" fill="#e9eed2"/><path d="M1205.1 163.6 L1210.1 166.4 L1215.4 169.4 L1220.7 172.4 L1225.7 175.5 L1230.3 178.5 L1234.8 181.4 L1239.3 184.3 L1243.9 187.2 L1248.4 190.2 L1252.6 193.3 L1256.4 196.5 L1259.8 199.8 L1262.7 203.2" fill="none" stroke="#fff" stroke-width="0.81" stroke-dasharray="3.8 5.9 13.9 3.9" opacity="0.85"/><path d="M1198.0 156.7 L1201.8 158.8 L1206.4 161.3 L1211.4 164.1 L1216.7 167.1 L1222.0 170.2 L1227.1 173.3 L1231.8 176.2 L1236.2 179.1 L1240.8 182.0 L1245.4 185.0 L1249.9 188.1 L1254.2 191.2 L1258.2 194.5" fill="none" stroke="#fff" stroke-width="0.88" stroke-dasharray="10.9 5.4 14.7 3.1" opacity="0.85"/><path d="M1196.9 185.4 L1197.6 187.7 L1198.5 190.5 L1199.8 193.6 L1201.2 197.1 L1202.8 200.9 L1204.6 205.0 L1206.5 209.2 L1208.5 213.4 L1210.7 217.7 L1213.0 221.9 L1215.4 225.9 L1217.8 229.8 L1220.1 233.5 L1222.5 236.8 L1224.9 240.0 L1227.5 243.3 L1230.3 246.5 L1233.1 249.6 L1236.0 252.7 L1239.0 255.8 L1241.9 258.7 L1244.7 261.5 L1247.4 264.1 L1250.0 266.5 L1252.6 268.4 L1255.1 269.9 L1257.3 271.2 L1259.5 271.9 L1259.9 271.5 L1259.2 269.3 L1257.9 267.0 L1256.2 264.6 L1254.3 262.0 L1251.8 259.6 L1249.1 257.0 L1246.3 254.2 L1243.4 251.4 L1240.6 248.4 L1237.7 245.4 L1234.9 242.3 L1232.3 239.2 L1229.8 236.2 L1227.5 233.2 L1225.3 230.0 L1223.1 226.5 L1220.8 222.7 L1218.5 218.7 L1216.2 214.7 L1213.8 210.6 L1211.4 206.6 L1209.0 202.6 L1206.8 198.9 L1204.6 195.4 L1202.6 192.2 L1200.8 189.3 L1199.1 187.0 L1197.5 185.2Z" fill="#e9eed2"/><path d="M1207.9 208.4 L1211.9 215.7 L1215.9 222.9 L1220.0 229.7 L1224.1 235.7 L1228.4 241.2 L1233.2 246.7 L1238.2 252.1 L1243.3 257.3 L1248.1 262.0" fill="none" stroke="#fff" stroke-width="0.79" stroke-dasharray="11.9 3.6 15.1 2.3" opacity="0.85"/><path d="M1196.9 185.4 L1199.0 189.4 L1201.8 194.7 L1205.0 201.0 L1208.7 208.0 L1212.6 215.3 L1216.7 222.5 L1220.8 229.2" fill="none" stroke="#fff" stroke-width="0.62" stroke-dasharray="3.2 4.6 5.0 4.9" opacity="0.85"/><path d="M1220.0 282.3 L1223.7 284.2 L1227.4 285.2 L1231.1 285.9 L1234.8 286.6 L1238.5 286.7 L1242.2 286.8 L1245.9 286.9 L1249.6 286.9 L1253.3 287.0 L1257.1 287.1 L1260.8 287.2 L1264.5 287.2 L1268.2 287.3 L1271.9 287.4 L1272.1 278.6 L1268.4 278.6 L1264.7 278.5 L1260.9 278.4 L1257.2 278.3 L1253.5 278.3 L1249.8 278.2 L1246.1 278.1 L1242.4 278.1 L1238.7 278.0 L1234.9 278.0 L1231.2 278.5 L1227.5 279.1 L1223.8 279.9 L1220.0 281.7Z" fill="#e9eed2"/><path d="M1233.0 281.8 L1239.5 281.9 L1246.0 282.0 L1252.5 282.2" fill="none" stroke="#fff" stroke-width="0.96" stroke-dasharray="8.7 3.5 16.7 3.2" opacity="0.85"/><path d="M1226.5 280.1 L1233.0 280.2 L1239.5 280.3 L1246.0 280.4 L1252.5 280.6" fill="none" stroke="#fff" stroke-width="0.70" stroke-dasharray="10.4 2.0 9.1 3.6" opacity="0.85"/><path d="M1309.0 153.8 L1311.2 153.8 L1314.1 153.8 L1317.6 153.8 L1321.5 153.8 L1325.8 153.8 L1330.2 153.8 L1334.8 153.7 L1339.4 153.7 L1343.9 153.7 L1348.2 153.7 L1352.1 153.7 L1355.6 153.8 L1358.6 153.8 L1360.9 153.8 L1362.7 153.8 L1364.2 153.8 L1365.6 153.6 L1368.3 152.3 L1368.5 143.6 L1366.1 142.3 L1364.8 142.1 L1363.6 142.0 L1362.1 142.2 L1359.8 143.1 L1357.2 147.0 L1357.9 151.2 L1359.4 153.0 L1360.7 154.1 L1362.1 155.0 L1363.6 155.9 L1365.3 156.9 L1367.0 158.0 L1368.9 159.1 L1370.9 160.3 L1372.9 161.6 L1374.9 162.9 L1376.9 164.3 L1378.9 165.8 L1380.8 167.3 L1382.5 168.9 L1384.2 170.4 L1385.6 172.1 L1387.1 173.8 L1388.6 175.8 L1390.1 178.0 L1391.6 180.2 L1393.0 182.6 L1394.5 185.0 L1395.9 187.5 L1397.2 190.1 L1398.5 192.6 L1399.7 195.2 L1400.9 197.7 L1401.9 200.1 L1402.9 202.5 L1403.7 204.8 L1404.4 207.0 L1405.0 209.2 L1405.5 211.3 L1406.0 213.4 L1406.3 215.4 L1406.6 217.5 L1406.8 219.6 L1407.0 221.7 L1407.2 223.9 L1407.3 226.1 L1407.3 228.4 L1407.4 230.7 L1407.4 233.1 L1407.5 235.6 L1407.6 238.1 L1407.7 240.7 L1407.6 243.4 L1407.6 246.2 L1407.5 249.0 L1407.4 251.9 L1407.2 254.8 L1407.0 257.6 L1406.8 260.5 L1406.6 263.3 L1406.4 266.0 L1406.1 268.6 L1405.8 271.0 L1405.6 273.4 L1405.3 275.6 L1405.0 277.8 L1404.6 279.9 L1404.2 282.1 L1403.7 284.2 L1403.3 286.2 L1402.9 288.2 L1402.4 290.1 L1402.0 291.9 L1401.7 293.5 L1401.4 295.1 L1401.2 296.5 L1401.1 297.8 L1401.1 298.9 L1401.7 299.1 L1402.4 298.2 L1403.1 297.2 L1403.8 296.0 L1404.6 294.6 L1405.4 293.1 L1406.2 291.4 L1407.0 289.6 L1407.9 287.7 L1408.7 285.7 L1409.6 283.6 L1410.3 281.5 L1411.1 279.2 L1411.8 277.0 L1412.4 274.6 L1413.0 272.3 L1413.6 269.8 L1414.1 267.1 L1414.7 264.4 L1415.2 261.6 L1415.8 258.7 L1416.2 255.8 L1416.7 252.8 L1417.1 249.9 L1417.5 246.9 L1417.8 244.0 L1418.1 241.1 L1418.3 238.3 L1418.5 235.6 L1418.6 233.1 L1418.6 230.6 L1418.6 228.1 L1418.5 225.7 L1418.4 223.3 L1418.2 220.9 L1418.0 218.5 L1417.8 216.1 L1417.4 213.7 L1417.0 211.2 L1416.5 208.8 L1415.9 206.3 L1415.2 203.7 L1414.3 201.2 L1413.4 198.6 L1412.3 195.9 L1411.2 193.2 L1409.9 190.4 L1408.6 187.7 L1407.2 184.9 L1405.8 182.1 L1404.2 179.4 L1402.6 176.8 L1401.0 174.2 L1399.4 171.6 L1397.7 169.2 L1395.9 166.9 L1394.2 164.7 L1392.3 162.6 L1390.2 160.6 L1388.0 158.7 L1385.8 156.9 L1383.5 155.2 L1381.2 153.6 L1379.0 152.1 L1376.8 150.8 L1374.8 149.5 L1372.8 148.3 L1371.0 147.3 L1369.5 146.3 L1368.2 145.5 L1367.3 144.9 L1367.0 144.7 L1367.7 145.6 L1368.3 149.0 L1366.0 152.5 L1364.4 153.2 L1363.8 153.3 L1363.5 153.3 L1363.0 153.1 L1361.0 152.0 L1361.2 143.6 L1363.3 142.6 L1363.4 142.6 L1362.6 142.6 L1361.1 142.6 L1358.7 142.5 L1355.7 142.5 L1352.2 142.5 L1348.2 142.5 L1343.9 142.5 L1339.4 142.5 L1334.8 142.5 L1330.2 142.5 L1325.7 142.5 L1321.5 142.5 L1317.6 142.6 L1314.1 142.6 L1311.2 142.6 L1309.0 142.6Z" fill="#e9eed2"/><path d="M1356.5 147.6 L1361.0 147.6 L1363.5 147.6 L1364.5 147.5 L1364.4 148.3 L1364.1 148.2 L1363.4 148.2 L1363.3 148.2 L1363.3 148.1 L1364.3 149.0 L1366.5 150.4 L1369.3 152.1 L1372.6 154.1 L1376.3 156.4 L1380.0 158.9 L1383.7 161.7 L1387.2 164.8 L1390.3 168.0 L1393.2 171.7 L1396.0 175.7 L1398.7 180.0 L1401.3 184.6 L1403.7 189.2 L1406.0 193.9 L1407.9 198.5 L1409.5 202.8 L1410.8 207.0 L1411.8 211.0 L1412.5 215.0 L1413.0 219.0 L1413.3 223.0" fill="none" stroke="#fff" stroke-width="0.71" stroke-dasharray="8.4 4.8 16.4 4.2" opacity="0.85"/><path d="M1350.2 147.6 L1356.5 147.6 L1361.0 147.7 L1363.5 147.7 L1364.5 147.5 L1364.4 148.3 L1364.1 148.2 L1363.4 148.2 L1363.2 148.2 L1363.3 148.2 L1364.3 149.1 L1366.5 150.5 L1369.3 152.2 L1372.6 154.2 L1376.2 156.4 L1380.0 159.0 L1383.7 161.7 L1387.2 164.8" fill="none" stroke="#fff" stroke-width="0.99" stroke-dasharray="8.8 5.9 5.3 3.9" opacity="0.85"/><path d="M1307.0 145.7 L1315.2 145.8 L1315.2 145.7 L1315.1 145.5 L1315.1 145.1 L1315.1 144.7 L1315.1 144.3 L1315.1 144.0 L1307.6 142.0 L1307.0 144.2 L1307.0 144.6 L1307.0 145.4 L1307.0 146.5 L1307.0 148.0 L1307.0 150.0 L1307.0 152.6 L1307.0 155.9 L1306.9 159.8 L1306.8 164.1 L1306.7 168.8 L1306.5 173.7 L1306.5 178.9 L1306.4 184.1 L1306.4 189.2 L1306.5 194.3 L1306.7 199.1 L1307.0 203.6 L1307.4 207.8 L1308.0 211.4 L1308.7 214.6 L1309.4 217.5 L1310.2 220.1 L1311.2 222.5 L1312.2 224.7 L1313.3 226.8 L1314.5 228.7 L1315.8 230.5 L1317.2 232.3 L1318.7 233.9 L1320.3 235.5 L1322.0 237.1 L1323.8 238.8 L1325.7 240.6 L1328.0 242.5 L1330.5 244.4 L1333.2 246.2 L1336.1 248.0 L1339.1 249.8 L1342.1 251.5 L1345.2 253.2 L1348.3 254.9 L1351.4 256.5 L1354.4 258.1 L1357.2 259.7 L1359.9 261.1 L1362.5 262.4 L1364.8 263.7 L1367.0 265.0 L1369.2 266.3 L1371.3 267.6 L1373.4 268.9 L1375.5 270.1 L1377.4 271.4 L1379.3 272.5 L1381.1 273.7 L1382.8 274.7 L1384.4 275.7 L1385.9 276.5 L1387.3 277.2 L1388.5 277.8 L1389.7 278.1 L1390.1 277.7 L1389.4 276.6 L1388.6 275.5 L1387.6 274.4 L1386.5 273.1 L1385.2 271.8 L1383.7 270.3 L1382.2 268.8 L1380.5 267.3 L1378.8 265.7 L1377.0 264.1 L1375.0 262.4 L1373.0 260.8 L1371.0 259.1 L1368.8 257.5 L1366.5 255.8 L1363.9 254.1 L1361.2 252.5 L1358.2 251.0 L1355.2 249.3 L1352.2 247.7 L1349.1 246.1 L1346.1 244.4 L1343.2 242.7 L1340.3 241.1 L1337.7 239.4 L1335.2 237.7 L1333.0 236.1 L1331.1 234.4 L1329.3 232.8 L1327.6 231.2 L1326.0 229.7 L1324.6 228.3 L1323.4 226.9 L1322.2 225.6 L1321.2 224.2 L1320.3 222.7 L1319.5 221.1 L1318.7 219.4 L1317.9 217.4 L1317.2 215.2 L1316.6 212.7 L1316.0 210.0 L1315.5 206.8 L1315.1 203.0 L1314.8 198.7 L1314.6 194.1 L1314.6 189.2 L1314.5 184.1 L1314.6 179.0 L1314.7 173.9 L1314.8 169.0 L1314.9 164.3 L1315.0 160.0 L1315.1 156.1 L1315.2 152.7 L1315.2 150.0 L1315.1 147.9 L1315.1 146.4 L1315.1 145.3 L1315.1 144.6 L1315.1 144.2 L1314.5 146.2 L1307.0 144.4 L1307.0 144.6 L1307.0 144.9 L1307.0 145.3 L1307.0 145.7 L1307.0 146.0 L1307.0 146.3 L1315.2 146.3Z" fill="#e9eed2"/><path d="M1312.0 196.5 L1312.5 204.2 L1313.3 210.5 L1314.5 215.3 L1315.8 219.4 L1317.2 222.8 L1319.0 225.7 L1321.0 228.3 L1323.4 230.9 L1326.1 233.6 L1329.3 236.5 L1333.0 239.5 L1337.5 242.5 L1342.5 245.5 L1347.8 248.5" fill="none" stroke="#fff" stroke-width="0.75" stroke-dasharray="11.6 4.1 8.4 3.8" opacity="0.85"/><path d="M1309.9 187.9 L1310.1 196.6 L1310.6 204.4 L1311.4 210.8 L1312.6 215.8 L1314.0 220.1 L1315.5 223.7 L1317.4 226.8 L1319.5 229.6 L1322.0 232.3 L1324.8 235.0 L1328.0 237.9 L1331.9 241.1 L1336.5 244.2 L1341.6 247.2 L1346.9 250.1 L1352.3 253.0" fill="none" stroke="#fff" stroke-width="0.91" stroke-dasharray="5.6 4.3 15.2 3.2" opacity="0.85"/><path d="M1318.6 159.0 L1319.1 161.4 L1320.4 163.5 L1322.2 165.5 L1324.6 167.3 L1327.2 169.3 L1329.9 171.4 L1332.7 173.6 L1335.6 175.9 L1338.5 178.3 L1341.3 180.6 L1344.1 183.0 L1346.6 185.3 L1349.0 187.6 L1351.1 189.7 L1353.1 191.9 L1355.0 194.1 L1356.9 196.4 L1358.7 198.7 L1360.5 201.1 L1362.2 203.5 L1363.9 205.8 L1365.5 208.2 L1367.0 210.6 L1368.5 212.9 L1369.9 215.2 L1371.2 217.5 L1372.6 219.6 L1373.9 221.7 L1375.1 223.7 L1376.2 225.7 L1377.2 227.9 L1378.2 230.0 L1379.2 232.1 L1380.0 234.2 L1380.9 236.3 L1381.7 238.3 L1382.4 240.2 L1383.1 241.9 L1383.8 243.5 L1384.4 245.0 L1385.1 246.2 L1385.7 247.2 L1386.3 247.0 L1386.2 245.9 L1386.1 244.5 L1385.9 242.9 L1385.6 241.2 L1385.3 239.3 L1384.9 237.3 L1384.4 235.2 L1383.9 233.0 L1383.3 230.7 L1382.6 228.3 L1381.8 226.0 L1380.9 223.6 L1380.0 221.2 L1378.9 218.9 L1377.8 216.7 L1376.6 214.3 L1375.2 212.0 L1373.8 209.6 L1372.3 207.2 L1370.7 204.8 L1369.0 202.3 L1367.3 199.8 L1365.5 197.4 L1363.7 194.9 L1361.8 192.5 L1359.8 190.1 L1357.8 187.8 L1355.7 185.5 L1353.4 183.1 L1350.9 180.7 L1348.2 178.3 L1345.4 175.9 L1342.5 173.4 L1339.5 171.0 L1336.6 168.7 L1333.7 166.5 L1331.0 164.3 L1328.4 162.3 L1326.0 160.5 L1323.7 159.3 L1321.3 158.6 L1319.0 158.6Z" fill="#e9eed2"/><path d="M1325.1 164.1 L1329.6 167.5 L1334.5 171.4 L1339.6 175.5 L1344.6 179.6 L1349.2 183.8 L1353.2 187.8 L1356.7 191.7 L1360.1 195.8 L1363.3 200.0 L1366.2 204.2" fill="none" stroke="#fff" stroke-width="1.05" stroke-dasharray="4.2 4.4 5.8 3.3" opacity="0.85"/><path d="M1352.4 188.5 L1355.9 192.4 L1359.2 196.5 L1362.4 200.6 L1365.4 204.8 L1368.1 209.0 L1370.7 213.1 L1373.1 217.1 L1375.2 220.9 L1377.1 224.7" fill="none" stroke="#fff" stroke-width="0.82" stroke-dasharray="7.7 3.0 6.9 2.2" opacity="0.85"/><path d="M1559.0 139.8 L1556.8 139.8 L1553.9 139.8 L1550.5 139.7 L1546.6 139.7 L1542.3 139.7 L1537.9 139.7 L1533.3 139.7 L1528.7 139.7 L1524.2 139.7 L1519.9 139.7 L1515.9 139.7 L1512.3 139.7 L1509.3 139.7 L1506.9 139.8 L1505.5 139.8 L1504.8 139.7 L1505.2 139.8 L1507.3 141.2 L1508.1 147.4 L1506.1 149.6 L1505.1 149.9 L1504.4 150.1 L1503.0 149.9 L1500.3 148.1 L1499.2 143.8 L1500.0 142.1 L1500.1 141.9 L1499.5 142.4 L1498.3 143.3 L1496.7 144.4 L1494.8 145.7 L1492.7 147.1 L1490.3 148.7 L1487.8 150.5 L1485.2 152.4 L1482.5 154.4 L1479.9 156.5 L1477.2 158.8 L1474.6 161.1 L1472.2 163.7 L1469.9 166.3 L1467.8 169.1 L1466.0 171.9 L1464.2 174.8 L1462.5 177.8 L1460.9 180.9 L1459.4 184.2 L1457.9 187.5 L1456.5 190.9 L1455.2 194.4 L1454.0 197.8 L1452.9 201.4 L1451.9 204.9 L1451.1 208.5 L1450.3 212.0 L1449.6 215.5 L1449.1 219.1 L1448.8 222.8 L1448.6 226.5 L1448.6 230.3 L1448.8 234.0 L1449.1 237.8 L1449.5 241.5 L1450.0 245.1 L1450.5 248.7 L1451.0 252.2 L1451.6 255.6 L1452.1 258.8 L1452.7 261.9 L1453.2 264.9 L1453.8 267.8 L1454.5 270.8 L1455.2 273.7 L1456.0 276.5 L1456.9 279.2 L1457.7 281.8 L1458.6 284.4 L1459.5 286.7 L1460.4 289.0 L1461.3 291.0 L1462.1 292.9 L1462.9 294.5 L1463.7 295.9 L1464.5 297.1 L1465.1 296.9 L1465.2 295.5 L1465.2 293.9 L1465.0 292.0 L1464.7 290.0 L1464.3 287.8 L1463.9 285.5 L1463.5 283.0 L1463.1 280.5 L1462.6 277.8 L1462.2 275.1 L1461.8 272.3 L1461.5 269.5 L1461.2 266.7 L1461.0 263.9 L1460.8 260.9 L1460.6 257.8 L1460.4 254.5 L1460.2 251.2 L1460.0 247.8 L1459.8 244.3 L1459.7 240.8 L1459.6 237.2 L1459.7 233.7 L1459.8 230.3 L1459.9 226.9 L1460.0 223.6 L1460.3 220.4 L1460.8 217.3 L1461.3 214.2 L1462.0 211.0 L1462.8 207.8 L1463.7 204.6 L1464.7 201.3 L1465.8 198.1 L1467.0 195.0 L1468.3 191.9 L1469.6 188.9 L1471.0 185.9 L1472.4 183.1 L1473.9 180.4 L1475.5 177.9 L1477.0 175.5 L1478.6 173.4 L1480.4 171.3 L1482.5 169.2 L1484.7 167.2 L1487.0 165.2 L1489.4 163.3 L1491.9 161.4 L1494.3 159.7 L1496.7 158.0 L1499.0 156.4 L1501.1 155.0 L1503.1 153.7 L1504.9 152.4 L1506.5 151.2 L1507.9 150.0 L1509.1 148.6 L1510.3 145.9 L1509.1 141.1 L1505.8 139.0 L1503.7 138.8 L1502.2 139.1 L1500.6 139.7 L1498.1 142.2 L1499.0 148.8 L1501.7 150.5 L1503.5 150.9 L1505.1 151.0 L1507.1 151.0 L1509.4 151.0 L1512.4 151.0 L1515.9 150.9 L1519.9 150.9 L1524.2 150.9 L1528.6 150.9 L1533.2 150.9 L1537.8 151.0 L1542.3 151.0 L1546.5 151.0 L1550.4 151.0 L1553.9 151.0 L1556.8 151.0 L1559.0 151.0Z" fill="#e9eed2"/><path d="M1517.8 145.3 L1511.6 145.3 L1507.0 145.4 L1504.4 145.3 L1503.3 145.1 L1503.2 144.8 L1503.7 144.5 L1504.3 144.5 L1504.7 144.7 L1504.4 145.5 L1503.0 146.8 L1500.3 148.7 L1496.9 151.0 L1492.9 153.8 L1488.5 156.9 L1484.1 160.3 L1479.7 164.0 L1475.8 168.0 L1472.4 172.3" fill="none" stroke="#fff" stroke-width="0.76" stroke-dasharray="6.2 5.4 15.0 4.3" opacity="0.85"/><path d="M1554.7 147.5 L1548.5 147.4 L1541.2 147.4 L1533.2 147.4 L1525.3 147.4 L1517.8 147.4 L1511.6 147.4 L1507.0 147.5 L1504.2 147.4 L1502.4 147.0 L1501.5 143.6 L1503.1 142.5 L1504.7 142.4 L1506.8 144.5 L1506.0 146.8 L1504.3 148.4 L1501.5 150.4 L1498.1 152.8 L1494.1 155.5 L1489.8 158.5 L1485.4 161.9 L1481.1 165.6" fill="none" stroke="#fff" stroke-width="1.02" stroke-dasharray="10.3 2.6 13.0 2.4" opacity="0.85"/><path d="M1552.9 143.2 L1561.0 143.5 L1561.1 143.1 L1561.1 142.8 L1561.1 142.4 L1561.1 142.0 L1561.1 141.7 L1561.1 141.6 L1553.0 141.7 L1553.0 141.5 L1553.0 141.9 L1553.0 142.7 L1553.0 144.0 L1553.0 145.7 L1552.9 148.0 L1552.9 151.0 L1553.0 154.7 L1553.1 159.0 L1553.2 163.8 L1553.3 168.9 L1553.4 174.3 L1553.5 179.9 L1553.5 185.5 L1553.5 191.1 L1553.4 196.5 L1553.2 201.6 L1552.9 206.2 L1552.5 210.3 L1552.0 213.8 L1551.4 216.8 L1550.7 219.4 L1550.1 221.8 L1549.3 223.8 L1548.5 225.6 L1547.7 227.2 L1546.8 228.6 L1545.8 230.0 L1544.8 231.3 L1543.5 232.6 L1542.2 233.9 L1540.6 235.3 L1538.9 236.7 L1537.2 238.2 L1535.2 239.7 L1533.1 241.2 L1530.6 242.6 L1527.9 244.1 L1525.1 245.5 L1522.1 246.9 L1519.1 248.2 L1516.0 249.6 L1513.0 250.9 L1510.0 252.2 L1507.1 253.6 L1504.5 254.9 L1501.9 256.3 L1499.7 257.6 L1497.6 258.8 L1495.7 260.1 L1493.8 261.3 L1492.0 262.4 L1490.3 263.6 L1488.7 264.7 L1487.2 265.7 L1485.8 266.7 L1484.5 267.7 L1483.4 268.6 L1482.3 269.5 L1481.4 270.3 L1480.6 271.1 L1480.0 271.8 L1480.2 272.4 L1481.2 272.2 L1482.3 272.0 L1483.5 271.6 L1484.8 271.2 L1486.2 270.6 L1487.7 270.0 L1489.3 269.4 L1490.9 268.7 L1492.7 267.9 L1494.6 267.1 L1496.5 266.3 L1498.5 265.4 L1500.6 264.5 L1502.7 263.6 L1505.0 262.7 L1507.5 261.7 L1510.3 260.7 L1513.2 259.6 L1516.2 258.4 L1519.3 257.0 L1522.4 255.7 L1525.5 254.3 L1528.6 252.8 L1531.7 251.3 L1534.6 249.7 L1537.4 248.1 L1540.0 246.3 L1542.2 244.6 L1544.2 242.9 L1546.0 241.4 L1547.7 239.8 L1549.3 238.3 L1550.8 236.7 L1552.2 235.0 L1553.6 233.2 L1554.8 231.2 L1555.9 229.1 L1556.9 226.8 L1557.8 224.3 L1558.6 221.5 L1559.3 218.5 L1560.0 215.2 L1560.6 211.3 L1561.0 206.9 L1561.3 202.0 L1561.5 196.7 L1561.6 191.2 L1561.6 185.5 L1561.6 179.8 L1561.5 174.2 L1561.4 168.8 L1561.3 163.6 L1561.2 158.8 L1561.1 154.6 L1561.1 150.9 L1561.1 148.0 L1561.1 145.8 L1561.1 144.1 L1561.1 142.8 L1561.1 142.0 L1561.1 141.5 L1561.1 140.9 L1553.0 141.1 L1553.0 141.4 L1553.0 141.8 L1553.0 142.1 L1553.0 142.5 L1552.9 142.8 L1553.0 142.6 L1561.1 142.8Z" fill="#e9eed2"/><path d="M1555.6 141.2 L1558.6 141.4 L1558.6 142.3 L1558.5 144.4 L1558.5 148.0 L1558.5 153.6 L1558.7 161.2 L1558.9 170.1 L1559.0 179.9 L1559.0 189.8 L1558.8 199.3 L1558.4 207.8 L1557.5 214.7" fill="none" stroke="#fff" stroke-width="0.65" stroke-dasharray="10.5 4.3 10.4 4.1" opacity="0.85"/><path d="M1558.5 141.4 L1558.5 142.3 L1558.5 144.4 L1558.4 148.0 L1558.4 153.6 L1558.6 161.2 L1558.8 170.1 L1558.9 179.9 L1559.0 189.8 L1558.8 199.3 L1558.3 207.8 L1557.4 214.7 L1556.2 220.2 L1554.9 224.7 L1553.3 228.5" fill="none" stroke="#fff" stroke-width="0.63" stroke-dasharray="5.9 4.5 9.3 4.6" opacity="0.85"/><path d="M1549.1 152.8 L1546.5 153.4 L1544.2 154.7 L1542.1 156.8 L1539.9 159.3 L1537.6 162.0 L1535.2 165.0 L1532.6 168.1 L1529.9 171.3 L1527.2 174.6 L1524.4 178.0 L1521.7 181.5 L1519.1 184.9 L1516.5 188.3 L1514.1 191.6 L1511.6 195.0 L1509.1 198.7 L1506.4 202.6 L1503.7 206.7 L1501.0 210.9 L1498.4 215.1 L1495.9 219.4 L1493.6 223.6 L1491.3 227.6 L1489.3 231.4 L1487.5 234.9 L1485.9 238.0 L1484.6 240.8 L1483.7 243.1 L1484.3 243.5 L1486.0 241.7 L1488.0 239.4 L1490.2 236.6 L1492.6 233.4 L1495.1 230.0 L1497.8 226.3 L1500.6 222.4 L1503.5 218.4 L1506.2 214.3 L1508.9 210.1 L1511.6 206.1 L1514.2 202.2 L1516.8 198.6 L1519.1 195.2 L1521.5 192.0 L1524.0 188.7 L1526.6 185.3 L1529.3 181.9 L1532.0 178.6 L1534.7 175.3 L1537.4 172.1 L1540.0 169.0 L1542.4 166.1 L1544.7 163.3 L1546.8 160.8 L1548.5 158.4 L1549.4 155.8 L1549.5 153.2Z" fill="#e9eed2"/><path d="M1549.5 153.2 L1547.0 156.2 L1543.6 160.2 L1539.6 165.0 L1535.2 170.3 L1530.5 176.0" fill="none" stroke="#fff" stroke-width="1.05" stroke-dasharray="11.3 5.7 17.0 2.9" opacity="0.85"/><path d="M1539.9 165.2 L1535.5 170.5 L1530.8 176.2 L1526.0 182.1 L1521.4 188.0 L1517.1 193.8 L1512.8 199.9 L1508.2 206.7 L1503.5 214.0 L1498.8 221.2" fill="none" stroke="#fff" stroke-width="1.05" stroke-dasharray="12.9 3.8 9.3 4.0" opacity="0.85"/><g transform="translate(0 167)"><path d="M1113.4 129.7 L1113.4 131.0 L1113.6 132.5 L1114.0 134.2 L1114.4 136.0 L1114.9 138.0 L1115.5 140.2 L1116.1 142.4 L1116.7 144.7 L1117.3 147.1 L1117.9 149.5 L1118.4 152.0 L1119.0 154.4 L1119.4 156.8 L1119.8 159.1 L1120.1 161.6 L1120.4 164.1 L1120.7 166.7 L1121.0 169.3 L1121.3 172.0 L1121.6 174.8 L1121.8 177.5 L1121.9 180.3 L1122.1 183.1 L1122.1 185.8 L1122.1 188.6 L1122.1 191.3 L1122.0 193.9 L1121.9 196.6 L1121.7 199.2 L1121.5 201.9 L1121.3 204.7 L1121.0 207.4 L1120.7 210.1 L1120.3 212.8 L1119.8 215.5 L1119.3 218.2 L1118.7 220.8 L1118.0 223.4 L1117.3 225.9 L1116.5 228.4 L1115.6 230.7 L1114.6 233.0 L1113.6 235.3 L1112.4 237.6 L1111.1 239.9 L1109.7 242.2 L1108.2 244.5 L1106.7 246.8 L1105.0 249.0 L1103.4 251.1 L1101.7 253.1 L1099.9 255.1 L1098.2 257.0 L1096.4 258.8 L1094.7 260.4 L1093.0 262.0 L1091.2 263.4 L1089.5 264.7 L1087.8 265.9 L1086.1 267.0 L1084.4 268.0 L1082.6 268.9 L1080.9 269.8 L1079.0 270.6 L1077.1 271.3 L1075.2 272.0 L1073.2 272.6 L1071.1 273.2 L1068.9 273.7 L1066.7 274.2 L1064.3 274.5 L1061.7 274.8 L1058.8 275.0 L1055.7 275.1 L1052.4 275.1 L1049.1 275.0 L1045.8 274.9 L1042.6 274.8 L1039.5 274.6 L1036.5 274.5 L1033.8 274.3 L1031.3 274.2 L1029.1 274.1 L1027.4 274.1 L1027.2 284.7 L1028.8 284.7 L1030.8 284.8 L1033.2 284.9 L1035.9 285.1 L1038.9 285.3 L1042.1 285.4 L1045.5 285.5 L1048.9 285.6 L1052.4 285.7 L1055.8 285.7 L1059.2 285.6 L1062.5 285.4 L1065.7 285.1 L1068.5 284.6 L1071.2 284.1 L1073.7 283.5 L1076.1 282.8 L1078.5 282.1 L1080.8 281.3 L1083.1 280.4 L1085.3 279.5 L1087.5 278.4 L1089.6 277.2 L1091.7 276.0 L1093.8 274.7 L1095.8 273.2 L1097.8 271.7 L1099.8 270.0 L1101.9 268.3 L1103.9 266.4 L1105.8 264.4 L1107.8 262.3 L1109.7 260.0 L1111.6 257.7 L1113.5 255.4 L1115.3 252.9 L1117.0 250.4 L1118.7 247.9 L1120.3 245.3 L1121.7 242.7 L1123.1 240.0 L1124.4 237.4 L1125.5 234.6 L1126.5 231.9 L1127.5 229.0 L1128.3 226.2 L1129.0 223.3 L1129.7 220.4 L1130.3 217.4 L1130.8 214.5 L1131.2 211.5 L1131.6 208.6 L1131.9 205.7 L1132.1 202.8 L1132.3 199.9 L1132.5 197.0 L1132.6 194.1 L1132.5 191.2 L1132.3 188.2 L1132.1 185.3 L1131.7 182.3 L1131.3 179.4 L1130.9 176.5 L1130.4 173.6 L1129.9 170.8 L1129.3 168.0 L1128.7 165.3 L1128.1 162.7 L1127.5 160.1 L1126.8 157.7 L1126.1 155.2 L1125.3 152.7 L1124.4 150.2 L1123.5 147.7 L1122.5 145.3 L1121.5 143.0 L1120.5 140.8 L1119.4 138.7 L1118.4 136.7 L1117.4 134.9 L1116.5 133.2 L1115.6 131.7 L1114.8 130.5 L1114.0 129.5Z" fill="#d6dfa6"/><path d="M1128.0 196.8 L1127.6 201.7 L1127.2 206.7 L1126.6 211.6 L1125.8 216.6 L1124.8 221.5 L1123.5 226.3 L1122.0 231.0 L1120.2 235.5 L1118.1 239.9 L1115.6 244.2 L1112.8 248.5 L1109.9 252.6 L1106.7 256.5 L1103.5 260.2 L1100.2 263.6 L1096.9 266.6 L1093.6 269.2" fill="none" stroke="#fff" stroke-width="0.81" stroke-dasharray="3.3 2.9 12.3 4.6" opacity="0.85"/><path d="M1116.1 138.2 L1117.5 141.9 L1118.9 145.9 L1120.3 150.1 L1121.5 154.4 L1122.5 158.6 L1123.3 162.9 L1124.1 167.5 L1124.9 172.2 L1125.5 177.1 L1126.0 182.0 L1126.3 187.0 L1126.5 191.9 L1126.4 196.8 L1126.1 201.6 L1125.6 206.5 L1125.0 211.4 L1124.2 216.3 L1123.2 221.2 L1122.0 225.9 L1120.5 230.5 L1118.7 234.9 L1116.6 239.1 L1114.2 243.4 L1111.5 247.6 L1108.6 251.7 L1105.5 255.5" fill="none" stroke="#fff" stroke-width="0.91" stroke-dasharray="4.4 3.4 14.5 3.3" opacity="0.85"/><path d="M1103.9 152.3 L1102.2 152.6 L1100.2 153.0 L1097.9 153.7 L1095.3 154.4 L1092.5 155.3 L1089.6 156.3 L1086.5 157.4 L1083.4 158.6 L1080.2 159.8 L1077.0 161.1 L1074.0 162.5 L1071.0 163.8 L1068.1 165.2 L1065.5 166.6 L1063.1 168.0 L1060.7 169.6 L1058.4 171.1 L1056.0 172.7 L1053.7 174.3 L1051.4 176.0 L1049.2 177.7 L1047.0 179.4 L1044.9 181.2 L1042.9 183.0 L1040.9 184.8 L1039.1 186.6 L1037.3 188.5 L1035.7 190.4 L1034.2 192.3 L1032.7 194.2 L1031.4 196.1 L1030.2 198.1 L1029.1 200.1 L1028.1 202.0 L1027.1 204.1 L1026.2 206.1 L1025.4 208.2 L1024.7 210.3 L1024.0 212.4 L1023.4 214.6 L1022.8 216.8 L1022.3 219.1 L1021.9 221.5 L1021.5 224.0 L1021.2 226.6 L1021.1 229.2 L1020.9 231.9 L1020.9 234.6 L1020.9 237.3 L1020.9 239.9 L1021.0 242.5 L1021.1 245.1 L1021.1 247.6 L1021.2 250.0 L1021.3 252.3 L1021.3 254.5 L1021.4 256.7 L1021.5 258.9 L1021.6 261.2 L1021.7 263.4 L1021.9 265.6 L1022.1 267.7 L1022.2 269.7 L1022.4 271.7 L1022.6 273.5 L1022.8 275.2 L1022.9 276.8 L1023.1 278.1 L1023.2 279.3 L1023.3 280.3 L1031.3 279.7 L1031.3 278.6 L1031.1 277.4 L1031.0 276.0 L1030.9 274.4 L1030.7 272.7 L1030.5 270.9 L1030.3 269.0 L1030.2 267.0 L1030.0 264.9 L1029.8 262.8 L1029.7 260.7 L1029.6 258.6 L1029.5 256.4 L1029.5 254.3 L1029.4 252.1 L1029.3 249.7 L1029.3 247.3 L1029.2 244.8 L1029.1 242.3 L1029.0 239.8 L1029.0 237.2 L1029.0 234.7 L1029.1 232.2 L1029.2 229.7 L1029.3 227.3 L1029.6 225.0 L1029.9 222.8 L1030.3 220.7 L1030.7 218.7 L1031.3 216.7 L1031.8 214.7 L1032.4 212.8 L1033.1 211.0 L1033.8 209.2 L1034.5 207.4 L1035.3 205.7 L1036.2 204.0 L1037.2 202.3 L1038.2 200.6 L1039.4 198.9 L1040.6 197.3 L1041.9 195.6 L1043.4 193.9 L1044.9 192.3 L1046.6 190.6 L1048.3 189.0 L1050.2 187.4 L1052.2 185.7 L1054.2 184.1 L1056.3 182.5 L1058.5 180.9 L1060.7 179.4 L1062.9 177.9 L1065.2 176.4 L1067.4 174.9 L1069.7 173.4 L1072.0 171.9 L1074.5 170.3 L1077.1 168.7 L1080.0 167.1 L1082.9 165.5 L1085.8 163.9 L1088.7 162.3 L1091.5 160.7 L1094.2 159.3 L1096.8 157.8 L1099.1 156.5 L1101.1 155.2 L1102.8 154.0 L1104.1 152.9Z" fill="#d6dfa6"/><path d="M1092.7 157.6 L1087.6 159.9 L1082.3 162.3 L1077.0 164.9 L1072.0 167.5 L1067.6 170.0 L1063.5 172.6 L1059.5 175.3 L1055.5 178.1 L1051.7 180.9 L1048.1 183.9 L1044.7 186.9 L1041.6 189.9 L1038.8 193.0" fill="none" stroke="#fff" stroke-width="0.69" stroke-dasharray="10.1 3.6 9.5 3.4" opacity="0.85"/><path d="M1063.5 172.6 L1059.5 175.2 L1055.5 178.0 L1051.7 180.9 L1048.1 183.8 L1044.7 186.8 L1041.6 189.9 L1038.8 193.0 L1036.4 196.1 L1034.2 199.3 L1032.4 202.5 L1030.8 205.7 L1029.4 209.1 L1028.2 212.5 L1027.2 216.1 L1026.3 219.9" fill="none" stroke="#fff" stroke-width="0.98" stroke-dasharray="6.7 3.1 13.3 4.6" opacity="0.85"/><path d="M1100.0 183.3 L1098.7 184.9 L1097.3 186.9 L1095.9 189.3 L1094.4 192.1 L1092.7 195.1 L1091.0 198.3 L1089.1 201.6 L1087.2 205.1 L1085.2 208.6 L1083.1 212.1 L1081.1 215.7 L1079.0 219.2 L1076.9 222.5 L1074.7 225.6 L1072.2 228.8 L1069.4 232.2 L1066.3 235.7 L1063.0 239.3 L1059.6 242.9 L1056.0 246.6 L1052.4 250.1 L1048.9 253.6 L1045.6 256.9 L1042.4 260.1 L1039.6 263.1 L1037.4 266.1 L1035.7 268.9 L1034.8 271.5 L1035.2 271.9 L1037.8 271.0 L1040.5 269.3 L1043.6 267.2 L1046.7 264.5 L1049.9 261.4 L1053.3 258.1 L1056.9 254.6 L1060.5 250.9 L1064.1 247.3 L1067.6 243.5 L1071.0 239.9 L1074.2 236.2 L1077.1 232.7 L1079.7 229.4 L1082.1 226.0 L1084.4 222.5 L1086.5 218.8 L1088.6 215.1 L1090.4 211.3 L1092.1 207.5 L1093.6 203.8 L1095.1 200.2 L1096.4 196.7 L1097.5 193.5 L1098.5 190.5 L1099.4 187.9 L1100.1 185.5 L1100.6 183.5Z" fill="#d6dfa6"/><path d="M1097.5 191.8 L1095.1 197.1 L1092.3 203.1 L1089.2 209.5 L1085.8 215.9 L1082.0 222.2 L1078.0 228.1 L1073.3 234.0 L1067.8 240.3" fill="none" stroke="#fff" stroke-width="0.83" stroke-dasharray="3.1 3.2 7.8 2.3" opacity="0.85"/><path d="M1096.2 191.2 L1093.8 196.5 L1091.0 202.5 L1087.9 208.8 L1084.5 215.2 L1080.8 221.5 L1076.9 227.3 L1072.2 233.1 L1066.7 239.3 L1060.6 245.7 L1054.4 252.1" fill="none" stroke="#fff" stroke-width="0.63" stroke-dasharray="8.6 5.2 15.1 2.0" opacity="0.85"/><path d="M1025.9 282.4 L1030.1 282.5 L1034.3 282.7 L1038.5 282.8 L1042.7 282.9 L1046.9 283.1 L1051.1 283.2 L1055.4 283.4 L1059.6 283.5 L1063.8 283.7 L1068.0 283.7 L1072.2 283.3 L1076.5 282.7 L1080.7 282.0 L1085.0 280.3 L1085.0 279.7 L1080.9 277.7 L1076.7 276.7 L1072.5 275.9 L1068.3 275.2 L1064.1 274.9 L1059.9 274.8 L1055.6 274.6 L1051.4 274.5 L1047.2 274.3 L1043.0 274.2 L1038.8 274.1 L1034.6 273.9 L1030.4 273.8 L1026.1 273.6Z" fill="#d6dfa6"/><path d="M1025.9 280.0 L1033.3 280.3 L1040.7 280.5 L1048.1 280.8 L1055.4 281.0" fill="none" stroke="#fff" stroke-width="0.70" stroke-dasharray="10.4 2.2 14.5 2.9" opacity="0.85"/><path d="M1026.0 279.1 L1033.3 279.3 L1040.7 279.6" fill="none" stroke="#fff" stroke-width="0.77" stroke-dasharray="9.5 4.0 13.0 3.2" opacity="0.85"/><path d="M1176.7 129.5 L1175.8 131.4 L1174.9 133.7 L1174.0 136.4 L1173.1 139.4 L1172.1 142.8 L1171.1 146.3 L1170.1 150.1 L1169.2 154.0 L1168.3 157.9 L1167.4 161.9 L1166.6 165.9 L1165.9 169.9 L1165.3 173.7 L1164.9 177.3 L1164.6 180.8 L1164.2 184.4 L1164.0 188.1 L1163.7 191.8 L1163.6 195.5 L1163.5 199.2 L1163.6 202.9 L1163.7 206.6 L1163.9 210.2 L1164.2 213.8 L1164.6 217.2 L1165.0 220.5 L1165.5 223.7 L1166.1 226.8 L1166.8 229.6 L1167.6 232.3 L1168.4 234.9 L1169.3 237.3 L1170.3 239.6 L1171.4 241.8 L1172.6 243.9 L1173.8 246.0 L1175.1 248.0 L1176.5 250.0 L1177.9 251.9 L1179.4 253.8 L1181.0 255.8 L1182.6 257.8 L1184.2 259.8 L1186.0 261.9 L1187.7 264.1 L1189.6 266.4 L1191.6 268.7 L1193.7 271.0 L1195.9 273.3 L1198.2 275.5 L1200.7 277.7 L1203.4 279.8 L1206.2 281.7 L1209.2 283.5 L1212.3 285.0 L1215.7 286.3 L1219.5 287.4 L1223.5 288.2 L1227.8 288.7 L1232.3 289.0 L1237.0 289.2 L1241.6 289.3 L1246.3 289.2 L1250.8 289.1 L1255.2 289.0 L1259.3 288.8 L1263.0 288.7 L1266.3 288.6 L1269.0 288.5 L1271.2 288.5 L1271.2 277.9 L1268.9 277.9 L1266.0 277.9 L1262.6 278.1 L1258.9 278.2 L1254.8 278.4 L1250.5 278.5 L1246.1 278.6 L1241.7 278.7 L1237.3 278.6 L1233.0 278.4 L1228.9 278.1 L1225.2 277.6 L1221.9 277.0 L1219.1 276.3 L1216.6 275.3 L1214.2 274.1 L1211.9 272.7 L1209.6 271.2 L1207.5 269.5 L1205.4 267.7 L1203.4 265.8 L1201.5 263.8 L1199.6 261.7 L1197.7 259.5 L1196.0 257.4 L1194.2 255.2 L1192.5 253.1 L1190.8 251.0 L1189.2 249.1 L1187.8 247.3 L1186.4 245.5 L1185.1 243.8 L1183.9 242.1 L1182.8 240.4 L1181.8 238.7 L1180.9 237.0 L1180.0 235.2 L1179.2 233.3 L1178.4 231.3 L1177.7 229.2 L1177.1 226.9 L1176.5 224.4 L1176.0 221.8 L1175.5 219.0 L1175.1 216.0 L1174.8 212.8 L1174.5 209.5 L1174.3 206.1 L1174.2 202.7 L1174.2 199.1 L1174.1 195.5 L1174.0 192.0 L1173.9 188.4 L1173.9 184.8 L1173.9 181.3 L1173.9 177.9 L1174.0 174.4 L1174.2 170.8 L1174.5 167.0 L1174.8 163.0 L1175.2 159.0 L1175.6 155.1 L1176.0 151.1 L1176.4 147.3 L1176.8 143.6 L1177.2 140.2 L1177.4 137.0 L1177.6 134.2 L1177.6 131.7 L1177.3 129.7Z" fill="#d6dfa6"/><path d="M1171.5 208.9 L1172.0 214.7 L1172.7 220.2 L1173.6 225.1 L1174.7 229.5 L1176.1 233.4 L1177.6 236.9 L1179.3 240.2 L1181.2 243.3 L1183.4 246.4 L1185.8 249.6 L1188.5 252.9 L1191.5 256.5" fill="none" stroke="#fff" stroke-width="0.99" stroke-dasharray="5.3 4.1 8.0 3.2" opacity="0.85"/><path d="M1167.9 215.1 L1168.6 220.8 L1169.6 226.0 L1170.8 230.6 L1172.2 234.8 L1173.8 238.7 L1175.6 242.2 L1177.7 245.6 L1180.0 248.8 L1182.6 252.1 L1185.3 255.5 L1188.3 259.2 L1191.4 263.0 L1194.7 266.9 L1198.4 270.8 L1202.4 274.5 L1206.7 277.9 L1211.5 280.7 L1216.8 283.0" fill="none" stroke="#fff" stroke-width="0.77" stroke-dasharray="8.7 3.5 6.4 4.0" opacity="0.85"/><path d="M1194.3 156.8 L1195.5 158.1 L1197.1 159.4 L1199.1 160.9 L1201.4 162.5 L1203.8 164.2 L1206.5 166.0 L1209.3 167.9 L1212.2 169.7 L1215.1 171.7 L1218.0 173.6 L1220.8 175.5 L1223.6 177.4 L1226.2 179.2 L1228.7 181.0 L1231.2 182.7 L1233.8 184.3 L1236.4 186.0 L1239.0 187.7 L1241.6 189.3 L1244.1 191.0 L1246.6 192.7 L1249.0 194.4 L1251.3 196.1 L1253.4 197.9 L1255.4 199.6 L1257.2 201.4 L1258.8 203.2 L1260.2 205.0 L1261.4 206.8 L1262.5 208.6 L1263.4 210.5 L1264.2 212.3 L1264.8 214.3 L1265.4 216.2 L1265.9 218.3 L1266.3 220.4 L1266.7 222.6 L1267.0 225.0 L1267.3 227.4 L1267.5 230.0 L1267.8 232.7 L1268.1 235.5 L1268.3 238.5 L1268.4 241.9 L1268.5 245.5 L1268.5 249.4 L1268.5 253.4 L1268.4 257.4 L1268.3 261.5 L1268.1 265.5 L1268.0 269.3 L1267.8 273.0 L1267.7 276.3 L1267.6 279.3 L1267.5 281.9 L1267.4 283.9 L1275.6 284.1 L1275.6 282.1 L1275.7 279.6 L1275.8 276.6 L1276.0 273.3 L1276.1 269.7 L1276.3 265.8 L1276.4 261.8 L1276.5 257.6 L1276.6 253.5 L1276.6 249.4 L1276.6 245.4 L1276.6 241.6 L1276.4 238.1 L1276.1 234.9 L1275.9 232.0 L1275.6 229.2 L1275.3 226.6 L1275.0 224.0 L1274.7 221.5 L1274.3 219.0 L1273.8 216.6 L1273.3 214.2 L1272.6 211.8 L1271.8 209.4 L1270.8 207.1 L1269.6 204.8 L1268.3 202.5 L1266.8 200.2 L1265.0 198.0 L1263.1 195.8 L1260.9 193.7 L1258.7 191.7 L1256.3 189.8 L1253.8 187.9 L1251.3 186.1 L1248.7 184.3 L1246.0 182.5 L1243.4 180.8 L1240.8 179.1 L1238.2 177.5 L1235.6 175.8 L1233.1 174.2 L1230.4 172.6 L1227.5 171.0 L1224.5 169.4 L1221.4 167.7 L1218.2 166.2 L1215.1 164.6 L1211.9 163.1 L1208.9 161.7 L1206.0 160.4 L1203.2 159.2 L1200.6 158.2 L1198.3 157.3 L1196.3 156.6 L1194.5 156.2Z" fill="#d6dfa6"/><path d="M1221.0 171.9 L1226.0 175.0 L1230.7 178.0 L1235.1 180.8 L1239.7 183.8 L1244.2 186.7 L1248.7 189.7 L1252.9 192.8 L1256.8 196.0 L1260.3 199.4 L1263.2 202.9 L1265.4 206.4 L1267.2 210.0 L1268.5 213.7 L1269.5 217.5 L1270.2 221.5 L1270.7 225.8 L1271.2 230.3 L1271.7 235.2" fill="none" stroke="#fff" stroke-width="0.60" stroke-dasharray="5.0 4.7 8.2 4.4" opacity="0.85"/><path d="M1230.7 177.8 L1235.2 180.7 L1239.7 183.6 L1244.3 186.6 L1248.8 189.6 L1253.0 192.7 L1256.9 195.9 L1260.4 199.3 L1263.3 202.8 L1265.5 206.3 L1267.3 209.9" fill="none" stroke="#fff" stroke-width="0.89" stroke-dasharray="3.9 2.5 11.1 4.3" opacity="0.85"/><path d="M1196.9 185.4 L1197.6 187.7 L1198.5 190.5 L1199.8 193.6 L1201.2 197.1 L1202.8 200.9 L1204.6 205.0 L1206.5 209.2 L1208.5 213.4 L1210.7 217.7 L1213.0 221.9 L1215.4 225.9 L1217.8 229.8 L1220.1 233.5 L1222.5 236.8 L1224.9 240.0 L1227.5 243.3 L1230.3 246.5 L1233.1 249.6 L1236.0 252.7 L1239.0 255.8 L1241.9 258.7 L1244.7 261.5 L1247.4 264.1 L1250.0 266.5 L1252.6 268.4 L1255.1 269.9 L1257.3 271.2 L1259.5 271.9 L1259.9 271.5 L1259.2 269.3 L1257.9 267.0 L1256.2 264.6 L1254.3 262.0 L1251.8 259.6 L1249.1 257.0 L1246.3 254.2 L1243.4 251.4 L1240.6 248.4 L1237.7 245.4 L1234.9 242.3 L1232.3 239.2 L1229.8 236.2 L1227.5 233.2 L1225.3 230.0 L1223.1 226.5 L1220.8 222.7 L1218.5 218.7 L1216.2 214.7 L1213.8 210.6 L1211.4 206.6 L1209.0 202.6 L1206.8 198.9 L1204.6 195.4 L1202.6 192.2 L1200.8 189.3 L1199.1 187.0 L1197.5 185.2Z" fill="#d6dfa6"/><path d="M1213.9 214.6 L1217.9 221.7 L1222.0 228.4 L1226.0 234.3 L1230.2 239.7 L1234.9 245.1 L1239.9 250.5 L1244.9 255.6" fill="none" stroke="#fff" stroke-width="1.05" stroke-dasharray="9.7 5.3 14.7 3.8" opacity="0.85"/><path d="M1196.8 185.5 L1198.9 189.4 L1201.6 194.7 L1204.9 201.1 L1208.5 208.1 L1212.5 215.3 L1216.5 222.6 L1220.6 229.3 L1224.6 235.3" fill="none" stroke="#fff" stroke-width="0.75" stroke-dasharray="9.8 4.5 10.3 3.2" opacity="0.85"/><path d="M1220.0 282.3 L1223.7 284.2 L1227.4 285.2 L1231.1 285.9 L1234.8 286.6 L1238.5 286.7 L1242.2 286.8 L1245.9 286.9 L1249.6 286.9 L1253.3 287.0 L1257.1 287.1 L1260.8 287.2 L1264.5 287.2 L1268.2 287.3 L1271.9 287.4 L1272.1 278.6 L1268.4 278.6 L1264.7 278.5 L1260.9 278.4 L1257.2 278.3 L1253.5 278.3 L1249.8 278.2 L1246.1 278.1 L1242.4 278.1 L1238.7 278.0 L1234.9 278.0 L1231.2 278.5 L1227.5 279.1 L1223.8 279.9 L1220.0 281.7Z" fill="#d6dfa6"/><path d="M1220.0 283.4 L1226.5 283.5 L1233.0 283.6 L1239.5 283.8 L1246.0 283.9" fill="none" stroke="#fff" stroke-width="0.91" stroke-dasharray="11.2 2.8 5.7 4.2" opacity="0.85"/><path d="M1233.0 280.8 L1239.5 280.9 L1246.0 281.0 L1252.5 281.1 L1259.0 281.3 L1265.5 281.4" fill="none" stroke="#fff" stroke-width="0.76" stroke-dasharray="7.1 3.0 12.6 3.0" opacity="0.85"/><path d="M1309.0 153.8 L1311.2 153.8 L1314.1 153.8 L1317.6 153.8 L1321.5 153.8 L1325.8 153.8 L1330.2 153.8 L1334.8 153.7 L1339.4 153.7 L1343.9 153.7 L1348.2 153.7 L1352.1 153.7 L1355.6 153.8 L1358.6 153.8 L1360.9 153.8 L1362.7 153.8 L1364.2 153.8 L1365.6 153.6 L1368.3 152.3 L1368.5 143.6 L1366.1 142.3 L1364.8 142.1 L1363.6 142.0 L1362.1 142.2 L1359.8 143.1 L1357.2 147.0 L1357.9 151.2 L1359.4 153.0 L1360.7 154.1 L1362.1 155.0 L1363.6 155.9 L1365.3 156.9 L1367.0 158.0 L1368.9 159.1 L1370.9 160.3 L1372.9 161.6 L1374.9 162.9 L1376.9 164.3 L1378.9 165.8 L1380.8 167.3 L1382.5 168.9 L1384.2 170.4 L1385.6 172.1 L1387.1 173.8 L1388.6 175.8 L1390.1 178.0 L1391.6 180.2 L1393.0 182.6 L1394.5 185.0 L1395.9 187.5 L1397.2 190.1 L1398.5 192.6 L1399.7 195.2 L1400.9 197.7 L1401.9 200.1 L1402.9 202.5 L1403.7 204.8 L1404.4 207.0 L1405.0 209.2 L1405.5 211.3 L1406.0 213.4 L1406.3 215.4 L1406.6 217.5 L1406.8 219.6 L1407.0 221.7 L1407.2 223.9 L1407.3 226.1 L1407.3 228.4 L1407.4 230.7 L1407.4 233.1 L1407.5 235.6 L1407.6 238.1 L1407.7 240.7 L1407.6 243.4 L1407.6 246.2 L1407.5 249.0 L1407.4 251.9 L1407.2 254.8 L1407.0 257.6 L1406.8 260.5 L1406.6 263.3 L1406.4 266.0 L1406.1 268.6 L1405.8 271.0 L1405.6 273.4 L1405.3 275.6 L1405.0 277.8 L1404.6 279.9 L1404.2 282.1 L1403.7 284.2 L1403.3 286.2 L1402.9 288.2 L1402.4 290.1 L1402.0 291.9 L1401.7 293.5 L1401.4 295.1 L1401.2 296.5 L1401.1 297.8 L1401.1 298.9 L1401.7 299.1 L1402.4 298.2 L1403.1 297.2 L1403.8 296.0 L1404.6 294.6 L1405.4 293.1 L1406.2 291.4 L1407.0 289.6 L1407.9 287.7 L1408.7 285.7 L1409.6 283.6 L1410.3 281.5 L1411.1 279.2 L1411.8 277.0 L1412.4 274.6 L1413.0 272.3 L1413.6 269.8 L1414.1 267.1 L1414.7 264.4 L1415.2 261.6 L1415.8 258.7 L1416.2 255.8 L1416.7 252.8 L1417.1 249.9 L1417.5 246.9 L1417.8 244.0 L1418.1 241.1 L1418.3 238.3 L1418.5 235.6 L1418.6 233.1 L1418.6 230.6 L1418.6 228.1 L1418.5 225.7 L1418.4 223.3 L1418.2 220.9 L1418.0 218.5 L1417.8 216.1 L1417.4 213.7 L1417.0 211.2 L1416.5 208.8 L1415.9 206.3 L1415.2 203.7 L1414.3 201.2 L1413.4 198.6 L1412.3 195.9 L1411.2 193.2 L1409.9 190.4 L1408.6 187.7 L1407.2 184.9 L1405.8 182.1 L1404.2 179.4 L1402.6 176.8 L1401.0 174.2 L1399.4 171.6 L1397.7 169.2 L1395.9 166.9 L1394.2 164.7 L1392.3 162.6 L1390.2 160.6 L1388.0 158.7 L1385.8 156.9 L1383.5 155.2 L1381.2 153.6 L1379.0 152.1 L1376.8 150.8 L1374.8 149.5 L1372.8 148.3 L1371.0 147.3 L1369.5 146.3 L1368.2 145.5 L1367.3 144.9 L1367.0 144.7 L1367.7 145.6 L1368.3 149.0 L1366.0 152.5 L1364.4 153.2 L1363.8 153.3 L1363.5 153.3 L1363.0 153.1 L1361.0 152.0 L1361.2 143.6 L1363.3 142.6 L1363.4 142.6 L1362.6 142.6 L1361.1 142.6 L1358.7 142.5 L1355.7 142.5 L1352.2 142.5 L1348.2 142.5 L1343.9 142.5 L1339.4 142.5 L1334.8 142.5 L1330.2 142.5 L1325.7 142.5 L1321.5 142.5 L1317.6 142.6 L1314.1 142.6 L1311.2 142.6 L1309.0 142.6Z" fill="#d6dfa6"/><path d="M1377.4 154.7 L1381.2 157.3 L1385.0 160.1 L1388.6 163.3 L1391.9 166.7 L1394.8 170.4 L1397.7 174.6 L1400.5 179.0 L1403.1 183.6 L1405.6 188.3 L1407.8 193.1 L1409.8 197.7 L1411.5 202.2 L1412.8 206.4 L1413.8 210.6 L1414.5 214.7 L1415.0 218.8 L1415.4 222.9 L1415.5 227.0 L1415.6 231.2 L1415.6 235.6 L1415.5 240.3 L1415.2 245.3" fill="none" stroke="#fff" stroke-width="0.76" stroke-dasharray="11.2 2.7 8.2 3.3" opacity="0.85"/><path d="M1319.5 145.4 L1326.8 145.4 L1334.8 145.4 L1342.8 145.4 L1350.2 145.4 L1356.5 145.4 L1361.0 145.5 L1363.4 145.4 L1363.8 145.4 L1363.2 150.1 L1363.8 150.4 L1363.8 150.4 L1365.1 149.3 L1365.0 146.8 L1365.6 147.3 L1367.6 148.6 L1370.4 150.3 L1373.8 152.3 L1377.4 154.6 L1381.3 157.2 L1385.1 160.0 L1388.7 163.2 L1392.0 166.6 L1394.9 170.4 L1397.8 174.5 L1400.6 178.9" fill="none" stroke="#fff" stroke-width="1.02" stroke-dasharray="11.2 2.8 15.2 4.8" opacity="0.85"/><path d="M1307.0 145.7 L1315.2 145.8 L1315.2 145.7 L1315.1 145.5 L1315.1 145.1 L1315.1 144.7 L1315.1 144.3 L1315.1 144.0 L1307.6 142.0 L1307.0 144.2 L1307.0 144.6 L1307.0 145.4 L1307.0 146.5 L1307.0 148.0 L1307.0 150.0 L1307.0 152.6 L1307.0 155.9 L1306.9 159.8 L1306.8 164.1 L1306.7 168.8 L1306.5 173.7 L1306.5 178.9 L1306.4 184.1 L1306.4 189.2 L1306.5 194.3 L1306.7 199.1 L1307.0 203.6 L1307.4 207.8 L1308.0 211.4 L1308.7 214.6 L1309.4 217.5 L1310.2 220.1 L1311.2 222.5 L1312.2 224.7 L1313.3 226.8 L1314.5 228.7 L1315.8 230.5 L1317.2 232.3 L1318.7 233.9 L1320.3 235.5 L1322.0 237.1 L1323.8 238.8 L1325.7 240.6 L1328.0 242.5 L1330.5 244.4 L1333.2 246.2 L1336.1 248.0 L1339.1 249.8 L1342.1 251.5 L1345.2 253.2 L1348.3 254.9 L1351.4 256.5 L1354.4 258.1 L1357.2 259.7 L1359.9 261.1 L1362.5 262.4 L1364.8 263.7 L1367.0 265.0 L1369.2 266.3 L1371.3 267.6 L1373.4 268.9 L1375.5 270.1 L1377.4 271.4 L1379.3 272.5 L1381.1 273.7 L1382.8 274.7 L1384.4 275.7 L1385.9 276.5 L1387.3 277.2 L1388.5 277.8 L1389.7 278.1 L1390.1 277.7 L1389.4 276.6 L1388.6 275.5 L1387.6 274.4 L1386.5 273.1 L1385.2 271.8 L1383.7 270.3 L1382.2 268.8 L1380.5 267.3 L1378.8 265.7 L1377.0 264.1 L1375.0 262.4 L1373.0 260.8 L1371.0 259.1 L1368.8 257.5 L1366.5 255.8 L1363.9 254.1 L1361.2 252.5 L1358.2 251.0 L1355.2 249.3 L1352.2 247.7 L1349.1 246.1 L1346.1 244.4 L1343.2 242.7 L1340.3 241.1 L1337.7 239.4 L1335.2 237.7 L1333.0 236.1 L1331.1 234.4 L1329.3 232.8 L1327.6 231.2 L1326.0 229.7 L1324.6 228.3 L1323.4 226.9 L1322.2 225.6 L1321.2 224.2 L1320.3 222.7 L1319.5 221.1 L1318.7 219.4 L1317.9 217.4 L1317.2 215.2 L1316.6 212.7 L1316.0 210.0 L1315.5 206.8 L1315.1 203.0 L1314.8 198.7 L1314.6 194.1 L1314.6 189.2 L1314.5 184.1 L1314.6 179.0 L1314.7 173.9 L1314.8 169.0 L1314.9 164.3 L1315.0 160.0 L1315.1 156.1 L1315.2 152.7 L1315.2 150.0 L1315.1 147.9 L1315.1 146.4 L1315.1 145.3 L1315.1 144.6 L1315.1 144.2 L1314.5 146.2 L1307.0 144.4 L1307.0 144.6 L1307.0 144.9 L1307.0 145.3 L1307.0 145.7 L1307.0 146.0 L1307.0 146.3 L1315.2 146.3Z" fill="#d6dfa6"/><path d="M1311.4 146.0 L1311.4 145.9 L1311.4 145.4 L1311.4 144.7 L1311.4 144.2 L1310.7 144.2 L1310.7 144.9 L1310.7 146.8 L1310.8 150.0 L1310.7 155.1 L1310.6 162.0 L1310.4 170.1 L1310.2 178.9 L1310.2 187.9 L1310.3 196.6 L1310.8 204.4" fill="none" stroke="#fff" stroke-width="0.61" stroke-dasharray="10.9 4.7 12.7 4.0" opacity="0.85"/><path d="M1312.0 144.2 L1312.0 144.9 L1312.0 146.7 L1312.1 150.0 L1312.0 155.1 L1311.9 162.0 L1311.7 170.1 L1311.5 178.9 L1311.5 187.9 L1311.6 196.5 L1312.1 204.3 L1313.0 210.5 L1314.1 215.4 L1315.4 219.5 L1316.9 223.0 L1318.7 225.9" fill="none" stroke="#fff" stroke-width="0.81" stroke-dasharray="11.0 2.0 13.5 3.0" opacity="0.85"/><path d="M1318.6 159.0 L1319.1 161.4 L1320.4 163.5 L1322.2 165.5 L1324.6 167.3 L1327.2 169.3 L1329.9 171.4 L1332.7 173.6 L1335.6 175.9 L1338.5 178.3 L1341.3 180.6 L1344.1 183.0 L1346.6 185.3 L1349.0 187.6 L1351.1 189.7 L1353.1 191.9 L1355.0 194.1 L1356.9 196.4 L1358.7 198.7 L1360.5 201.1 L1362.2 203.5 L1363.9 205.8 L1365.5 208.2 L1367.0 210.6 L1368.5 212.9 L1369.9 215.2 L1371.2 217.5 L1372.6 219.6 L1373.9 221.7 L1375.1 223.7 L1376.2 225.7 L1377.2 227.9 L1378.2 230.0 L1379.2 232.1 L1380.0 234.2 L1380.9 236.3 L1381.7 238.3 L1382.4 240.2 L1383.1 241.9 L1383.8 243.5 L1384.4 245.0 L1385.1 246.2 L1385.7 247.2 L1386.3 247.0 L1386.2 245.9 L1386.1 244.5 L1385.9 242.9 L1385.6 241.2 L1385.3 239.3 L1384.9 237.3 L1384.4 235.2 L1383.9 233.0 L1383.3 230.7 L1382.6 228.3 L1381.8 226.0 L1380.9 223.6 L1380.0 221.2 L1378.9 218.9 L1377.8 216.7 L1376.6 214.3 L1375.2 212.0 L1373.8 209.6 L1372.3 207.2 L1370.7 204.8 L1369.0 202.3 L1367.3 199.8 L1365.5 197.4 L1363.7 194.9 L1361.8 192.5 L1359.8 190.1 L1357.8 187.8 L1355.7 185.5 L1353.4 183.1 L1350.9 180.7 L1348.2 178.3 L1345.4 175.9 L1342.5 173.4 L1339.5 171.0 L1336.6 168.7 L1333.7 166.5 L1331.0 164.3 L1328.4 162.3 L1326.0 160.5 L1323.7 159.3 L1321.3 158.6 L1319.0 158.6Z" fill="#d6dfa6"/><path d="M1322.3 160.0 L1326.1 162.9 L1330.5 166.3 L1335.4 170.2 L1340.6 174.3 L1345.6 178.5 L1350.3 182.7 L1354.3 186.7 L1357.9 190.7 L1361.3 194.9 L1364.5 199.1 L1367.5 203.4" fill="none" stroke="#fff" stroke-width="0.84" stroke-dasharray="9.0 4.6 7.6 3.2" opacity="0.85"/><path d="M1318.8 158.8 L1321.6 161.0 L1325.3 163.9 L1329.8 167.3 L1334.7 171.1 L1339.8 175.2 L1344.8 179.4 L1349.4 183.6 L1353.4 187.6 L1356.9 191.5 L1360.3 195.6 L1363.5 199.8" fill="none" stroke="#fff" stroke-width="0.99" stroke-dasharray="7.4 5.1 12.3 4.8" opacity="0.85"/><path d="M1559.0 139.8 L1556.8 139.8 L1553.9 139.8 L1550.5 139.7 L1546.6 139.7 L1542.3 139.7 L1537.9 139.7 L1533.3 139.7 L1528.7 139.7 L1524.2 139.7 L1519.9 139.7 L1515.9 139.7 L1512.3 139.7 L1509.3 139.7 L1506.9 139.8 L1505.5 139.8 L1504.8 139.7 L1505.2 139.8 L1507.3 141.2 L1508.1 147.4 L1506.1 149.6 L1505.1 149.9 L1504.4 150.1 L1503.0 149.9 L1500.3 148.1 L1499.2 143.8 L1500.0 142.1 L1500.1 141.9 L1499.5 142.4 L1498.3 143.3 L1496.7 144.4 L1494.8 145.7 L1492.7 147.1 L1490.3 148.7 L1487.8 150.5 L1485.2 152.4 L1482.5 154.4 L1479.9 156.5 L1477.2 158.8 L1474.6 161.1 L1472.2 163.7 L1469.9 166.3 L1467.8 169.1 L1466.0 171.9 L1464.2 174.8 L1462.5 177.8 L1460.9 180.9 L1459.4 184.2 L1457.9 187.5 L1456.5 190.9 L1455.2 194.4 L1454.0 197.8 L1452.9 201.4 L1451.9 204.9 L1451.1 208.5 L1450.3 212.0 L1449.6 215.5 L1449.1 219.1 L1448.8 222.8 L1448.6 226.5 L1448.6 230.3 L1448.8 234.0 L1449.1 237.8 L1449.5 241.5 L1450.0 245.1 L1450.5 248.7 L1451.0 252.2 L1451.6 255.6 L1452.1 258.8 L1452.7 261.9 L1453.2 264.9 L1453.8 267.8 L1454.5 270.8 L1455.2 273.7 L1456.0 276.5 L1456.9 279.2 L1457.7 281.8 L1458.6 284.4 L1459.5 286.7 L1460.4 289.0 L1461.3 291.0 L1462.1 292.9 L1462.9 294.5 L1463.7 295.9 L1464.5 297.1 L1465.1 296.9 L1465.2 295.5 L1465.2 293.9 L1465.0 292.0 L1464.7 290.0 L1464.3 287.8 L1463.9 285.5 L1463.5 283.0 L1463.1 280.5 L1462.6 277.8 L1462.2 275.1 L1461.8 272.3 L1461.5 269.5 L1461.2 266.7 L1461.0 263.9 L1460.8 260.9 L1460.6 257.8 L1460.4 254.5 L1460.2 251.2 L1460.0 247.8 L1459.8 244.3 L1459.7 240.8 L1459.6 237.2 L1459.7 233.7 L1459.8 230.3 L1459.9 226.9 L1460.0 223.6 L1460.3 220.4 L1460.8 217.3 L1461.3 214.2 L1462.0 211.0 L1462.8 207.8 L1463.7 204.6 L1464.7 201.3 L1465.8 198.1 L1467.0 195.0 L1468.3 191.9 L1469.6 188.9 L1471.0 185.9 L1472.4 183.1 L1473.9 180.4 L1475.5 177.9 L1477.0 175.5 L1478.6 173.4 L1480.4 171.3 L1482.5 169.2 L1484.7 167.2 L1487.0 165.2 L1489.4 163.3 L1491.9 161.4 L1494.3 159.7 L1496.7 158.0 L1499.0 156.4 L1501.1 155.0 L1503.1 153.7 L1504.9 152.4 L1506.5 151.2 L1507.9 150.0 L1509.1 148.6 L1510.3 145.9 L1509.1 141.1 L1505.8 139.0 L1503.7 138.8 L1502.2 139.1 L1500.6 139.7 L1498.1 142.2 L1499.0 148.8 L1501.7 150.5 L1503.5 150.9 L1505.1 151.0 L1507.1 151.0 L1509.4 151.0 L1512.4 151.0 L1515.9 150.9 L1519.9 150.9 L1524.2 150.9 L1528.6 150.9 L1533.2 150.9 L1537.8 151.0 L1542.3 151.0 L1546.5 151.0 L1550.4 151.0 L1553.9 151.0 L1556.8 151.0 L1559.0 151.0Z" fill="#d6dfa6"/><path d="M1504.4 145.5 L1503.2 145.2 L1503.0 144.7 L1503.6 144.3 L1504.4 144.3 L1504.9 144.7 L1504.6 145.6 L1503.1 146.9 L1500.5 148.9 L1497.0 151.2 L1493.0 153.9 L1488.6 157.0 L1484.2 160.5 L1479.9 164.2 L1475.9 168.2 L1472.5 172.4 L1469.6 177.0 L1466.9 182.0 L1464.3 187.4 L1461.9 193.0 L1459.8 198.8 L1458.0 204.7 L1456.5 210.6 L1455.4 216.4 L1454.7 222.3 L1454.4 228.5 L1454.4 234.8 L1454.8 241.1" fill="none" stroke="#fff" stroke-width="0.66" stroke-dasharray="10.9 2.9 13.5 2.2" opacity="0.85"/><path d="M1511.6 146.9 L1507.0 146.9 L1504.3 146.9 L1502.6 146.5 L1501.9 143.9 L1503.3 143.0 L1504.6 142.9 L1506.3 144.6 L1505.6 146.5 L1504.0 148.0 L1501.2 150.0 L1497.8 152.3 L1493.8 155.0 L1489.4 158.1 L1485.0 161.5 L1480.8 165.2 L1476.9 169.1 L1473.7 173.2 L1470.8 177.7 L1468.1 182.6 L1465.5 187.9 L1463.2 193.5" fill="none" stroke="#fff" stroke-width="0.95" stroke-dasharray="12.3 4.7 12.1 4.3" opacity="0.85"/><path d="M1552.9 143.2 L1561.0 143.5 L1561.1 143.1 L1561.1 142.8 L1561.1 142.4 L1561.1 142.0 L1561.1 141.7 L1561.1 141.6 L1553.0 141.7 L1553.0 141.5 L1553.0 141.9 L1553.0 142.7 L1553.0 144.0 L1553.0 145.7 L1552.9 148.0 L1552.9 151.0 L1553.0 154.7 L1553.1 159.0 L1553.2 163.8 L1553.3 168.9 L1553.4 174.3 L1553.5 179.9 L1553.5 185.5 L1553.5 191.1 L1553.4 196.5 L1553.2 201.6 L1552.9 206.2 L1552.5 210.3 L1552.0 213.8 L1551.4 216.8 L1550.7 219.4 L1550.1 221.8 L1549.3 223.8 L1548.5 225.6 L1547.7 227.2 L1546.8 228.6 L1545.8 230.0 L1544.8 231.3 L1543.5 232.6 L1542.2 233.9 L1540.6 235.3 L1538.9 236.7 L1537.2 238.2 L1535.2 239.7 L1533.1 241.2 L1530.6 242.6 L1527.9 244.1 L1525.1 245.5 L1522.1 246.9 L1519.1 248.2 L1516.0 249.6 L1513.0 250.9 L1510.0 252.2 L1507.1 253.6 L1504.5 254.9 L1501.9 256.3 L1499.7 257.6 L1497.6 258.8 L1495.7 260.1 L1493.8 261.3 L1492.0 262.4 L1490.3 263.6 L1488.7 264.7 L1487.2 265.7 L1485.8 266.7 L1484.5 267.7 L1483.4 268.6 L1482.3 269.5 L1481.4 270.3 L1480.6 271.1 L1480.0 271.8 L1480.2 272.4 L1481.2 272.2 L1482.3 272.0 L1483.5 271.6 L1484.8 271.2 L1486.2 270.6 L1487.7 270.0 L1489.3 269.4 L1490.9 268.7 L1492.7 267.9 L1494.6 267.1 L1496.5 266.3 L1498.5 265.4 L1500.6 264.5 L1502.7 263.6 L1505.0 262.7 L1507.5 261.7 L1510.3 260.7 L1513.2 259.6 L1516.2 258.4 L1519.3 257.0 L1522.4 255.7 L1525.5 254.3 L1528.6 252.8 L1531.7 251.3 L1534.6 249.7 L1537.4 248.1 L1540.0 246.3 L1542.2 244.6 L1544.2 242.9 L1546.0 241.4 L1547.7 239.8 L1549.3 238.3 L1550.8 236.7 L1552.2 235.0 L1553.6 233.2 L1554.8 231.2 L1555.9 229.1 L1556.9 226.8 L1557.8 224.3 L1558.6 221.5 L1559.3 218.5 L1560.0 215.2 L1560.6 211.3 L1561.0 206.9 L1561.3 202.0 L1561.5 196.7 L1561.6 191.2 L1561.6 185.5 L1561.6 179.8 L1561.5 174.2 L1561.4 168.8 L1561.3 163.6 L1561.2 158.8 L1561.1 154.6 L1561.1 150.9 L1561.1 148.0 L1561.1 145.8 L1561.1 144.1 L1561.1 142.8 L1561.1 142.0 L1561.1 141.5 L1561.1 140.9 L1553.0 141.1 L1553.0 141.4 L1553.0 141.8 L1553.0 142.1 L1553.0 142.5 L1552.9 142.8 L1553.0 142.6 L1561.1 142.8Z" fill="#d6dfa6"/><path d="M1558.4 144.4 L1558.3 148.0 L1558.4 153.6 L1558.5 161.2 L1558.7 170.1 L1558.9 179.9 L1558.9 189.8 L1558.7 199.3 L1558.2 207.8 L1557.3 214.7 L1556.1 220.1 L1554.8 224.6 L1553.2 228.4 L1551.3 231.7 L1549.1 234.5 L1546.6 237.1 L1543.8 239.7 L1540.5 242.5 L1536.6 245.3 L1531.9 248.1 L1526.7 250.7 L1521.3 253.2 L1515.9 255.5 L1510.7 257.8" fill="none" stroke="#fff" stroke-width="1.02" stroke-dasharray="7.2 3.6 10.3 4.7" opacity="0.85"/><path d="M1558.2 161.2 L1558.4 170.2 L1558.6 179.9 L1558.6 189.8 L1558.4 199.3 L1557.9 207.8 L1557.0 214.7 L1555.9 220.1 L1554.5 224.5 L1552.9 228.3 L1551.1 231.5 L1548.9 234.3 L1546.4 236.9 L1543.6 239.5 L1540.3 242.2 L1536.4 245.1" fill="none" stroke="#fff" stroke-width="1.05" stroke-dasharray="7.3 2.9 7.5 4.5" opacity="0.85"/><path d="M1549.1 152.8 L1546.5 153.4 L1544.2 154.7 L1542.1 156.8 L1539.9 159.3 L1537.6 162.0 L1535.2 165.0 L1532.6 168.1 L1529.9 171.3 L1527.2 174.6 L1524.4 178.0 L1521.7 181.5 L1519.1 184.9 L1516.5 188.3 L1514.1 191.6 L1511.6 195.0 L1509.1 198.7 L1506.4 202.6 L1503.7 206.7 L1501.0 210.9 L1498.4 215.1 L1495.9 219.4 L1493.6 223.6 L1491.3 227.6 L1489.3 231.4 L1487.5 234.9 L1485.9 238.0 L1484.6 240.8 L1483.7 243.1 L1484.3 243.5 L1486.0 241.7 L1488.0 239.4 L1490.2 236.6 L1492.6 233.4 L1495.1 230.0 L1497.8 226.3 L1500.6 222.4 L1503.5 218.4 L1506.2 214.3 L1508.9 210.1 L1511.6 206.1 L1514.2 202.2 L1516.8 198.6 L1519.1 195.2 L1521.5 192.0 L1524.0 188.7 L1526.6 185.3 L1529.3 181.9 L1532.0 178.6 L1534.7 175.3 L1537.4 172.1 L1540.0 169.0 L1542.4 166.1 L1544.7 163.3 L1546.8 160.8 L1548.5 158.4 L1549.4 155.8 L1549.5 153.2Z" fill="#d6dfa6"/><path d="M1529.9 175.5 L1525.2 181.4 L1520.5 187.3 L1516.2 193.1 L1511.9 199.2 L1507.3 206.1 L1502.5 213.3 L1497.8 220.6" fill="none" stroke="#fff" stroke-width="1.04" stroke-dasharray="12.5 2.3 7.0 2.9" opacity="0.85"/><path d="M1542.2 159.0 L1538.2 163.8 L1533.8 169.1 L1529.1 174.8 L1524.3 180.7 L1519.7 186.7 L1515.3 192.5 L1511.0 198.6 L1506.4 205.5" fill="none" stroke="#fff" stroke-width="1.07" stroke-dasharray="12.3 4.6 9.6 3.7" opacity="0.85"/></g><path d="M1341.9 538.1 L1340.0 538.0 L1337.7 538.1 L1335.1 538.4 L1332.2 538.8 L1329.0 539.3 L1325.6 539.9 L1322.1 540.6 L1318.4 541.3 L1314.8 542.2 L1311.1 543.1 L1307.6 544.1 L1304.1 545.2 L1300.8 546.4 L1297.8 547.7 L1295.1 549.0 L1292.4 550.3 L1289.8 551.6 L1287.3 552.9 L1284.8 554.4 L1282.4 556.0 L1280.0 557.7 L1277.7 559.5 L1275.4 561.5 L1273.1 563.6 L1270.9 565.8 L1268.7 568.2 L1266.6 570.8 L1264.5 573.5 L1262.5 576.5 L1260.4 579.6 L1258.3 582.9 L1256.2 586.3 L1254.1 589.9 L1252.0 593.7 L1250.1 597.5 L1248.2 601.5 L1246.5 605.5 L1244.8 609.6 L1243.4 613.7 L1242.2 617.8 L1241.2 621.9 L1240.4 626.0 L1240.0 630.3 L1239.9 634.8 L1240.1 639.4 L1240.6 644.1 L1241.2 648.8 L1242.0 653.4 L1242.9 657.9 L1243.8 662.3 L1244.8 666.4 L1245.7 670.3 L1247.0 673.7 L1248.8 676.6 L1250.6 678.9 L1253.3 680.7 L1253.9 680.5 L1255.8 677.9 L1256.5 674.8 L1256.8 671.4 L1256.4 667.8 L1255.5 664.0 L1254.6 659.9 L1253.7 655.7 L1252.9 651.4 L1252.2 647.1 L1251.6 642.8 L1251.2 638.6 L1251.0 634.7 L1251.0 631.0 L1251.4 627.6 L1252.0 624.2 L1252.8 620.7 L1253.9 617.1 L1255.2 613.4 L1256.7 609.7 L1258.3 606.1 L1260.0 602.4 L1261.8 598.8 L1263.7 595.3 L1265.7 592.0 L1267.7 588.7 L1269.6 585.6 L1271.6 582.7 L1273.5 580.1 L1275.3 577.6 L1277.1 575.4 L1278.9 573.4 L1280.8 571.5 L1282.7 569.8 L1284.7 568.1 L1286.6 566.5 L1288.7 565.1 L1290.8 563.6 L1292.9 562.1 L1295.1 560.7 L1297.4 559.2 L1299.8 557.7 L1302.2 556.3 L1304.7 554.9 L1307.5 553.5 L1310.5 552.1 L1313.7 550.7 L1317.1 549.3 L1320.4 548.0 L1323.8 546.7 L1327.1 545.5 L1330.3 544.3 L1333.3 543.1 L1336.1 542.0 L1338.5 540.9 L1340.5 539.9 L1342.1 538.7Z" fill="#eaeed6"/><path d="M1316.4 544.3 L1310.3 546.3 L1304.5 548.5 L1299.4 550.9 L1294.9 553.3 L1290.7 555.8 L1286.5 558.3 L1282.6 561.1 L1278.7 564.2 L1275.1 567.7 L1271.5 571.6 L1268.0 576.1 L1264.5 581.1 L1260.9 586.8" fill="none" stroke="#fff" stroke-width="0.99" stroke-dasharray="4.5 4.7 16.7 2.6" opacity="0.85"/><path d="M1333.5 538.0 L1328.1 539.4 L1322.2 541.0 L1316.0 542.9 L1309.8 544.9 L1304.0 547.2 L1298.8 549.6 L1294.2 552.0 L1289.9 554.5 L1285.7 557.1 L1281.7 560.0 L1277.8 563.1 L1274.0 566.7 L1270.3 570.7" fill="none" stroke="#fff" stroke-width="0.60" stroke-dasharray="4.4 3.6 9.0 5.0" opacity="0.85"/><path d="M1330.1 573.0 L1329.5 575.1 L1329.2 577.8 L1329.0 580.9 L1328.9 584.4 L1328.9 588.1 L1328.8 592.1 L1328.8 596.2 L1328.7 600.4 L1328.5 604.5 L1328.3 608.6 L1327.9 612.4 L1327.4 616.0 L1327.0 619.1 L1326.3 621.9 L1325.5 624.4 L1324.6 626.8 L1323.6 629.0 L1322.5 631.1 L1321.3 633.1 L1319.9 635.0 L1318.5 636.9 L1316.9 638.7 L1315.1 640.6 L1313.3 642.5 L1311.3 644.4 L1309.2 646.4 L1306.9 648.4 L1304.5 650.5 L1302.0 652.7 L1299.0 655.0 L1295.7 657.4 L1292.1 659.9 L1288.3 662.4 L1284.4 664.9 L1280.6 667.4 L1276.7 669.8 L1273.0 672.1 L1269.5 674.3 L1266.2 676.3 L1263.7 678.6 L1261.9 681.1 L1261.0 684.1 L1261.4 684.7 L1264.4 685.2 L1267.5 684.7 L1270.7 683.5 L1273.9 681.5 L1277.4 679.3 L1281.2 677.0 L1285.1 674.5 L1289.0 672.0 L1293.0 669.4 L1296.8 666.9 L1300.6 664.3 L1304.1 661.7 L1307.3 659.3 L1310.1 656.9 L1312.5 654.7 L1314.9 652.6 L1317.1 650.5 L1319.2 648.5 L1321.2 646.5 L1323.2 644.4 L1325.0 642.2 L1326.7 640.0 L1328.3 637.7 L1329.8 635.3 L1331.2 632.7 L1332.4 630.0 L1333.5 627.2 L1334.5 624.1 L1335.3 620.7 L1335.8 616.9 L1336.0 612.9 L1335.9 608.7 L1335.7 604.5 L1335.4 600.2 L1334.9 595.9 L1334.4 591.8 L1333.8 587.8 L1333.2 584.0 L1332.6 580.6 L1332.0 577.6 L1331.4 575.0 L1330.7 573.0Z" fill="#eaeed6"/><path d="M1328.7 573.1 L1328.9 577.1 L1329.2 582.6 L1329.7 589.0 L1330.1 596.2 L1330.4 603.5 L1330.3 610.6 L1329.8 617.1 L1328.7 622.6" fill="none" stroke="#fff" stroke-width="0.69" stroke-dasharray="11.9 3.9 6.8 3.4" opacity="0.85"/><path d="M1333.4 596.0 L1333.7 603.4 L1333.6 610.8 L1333.1 617.5 L1332.0 623.4 L1330.3 628.4 L1328.2 632.8 L1325.8 636.8 L1323.0 640.6 L1319.8 644.1" fill="none" stroke="#fff" stroke-width="1.04" stroke-dasharray="6.9 3.4 9.7 3.3" opacity="0.85"/><path d="M1299.4 595.9 L1295.8 600.2 L1292.7 604.9 L1289.8 609.6 L1287.0 614.3 L1284.4 619.3 L1281.9 624.2 L1279.4 629.1 L1277.0 634.1 L1274.5 639.0 L1272.0 644.0 L1269.5 648.9 L1267.1 653.9 L1265.0 659.0 L1264.7 665.1 L1265.3 665.3 L1269.9 661.5 L1272.9 656.8 L1275.3 651.8 L1277.8 646.9 L1280.3 641.9 L1282.8 637.0 L1285.3 632.1 L1287.7 627.1 L1290.2 622.2 L1292.6 617.2 L1294.7 612.1 L1296.7 606.9 L1298.6 601.7 L1300.0 596.1Z" fill="#eaeed6"/><path d="M1298.8 595.5 L1294.4 604.2 L1290.1 612.8 L1285.8 621.5" fill="none" stroke="#fff" stroke-width="0.94" stroke-dasharray="4.3 5.5 5.7 2.9" opacity="0.85"/><path d="M1292.3 613.9 L1287.9 622.6 L1283.6 631.2 L1279.2 639.9 L1274.9 648.5" fill="none" stroke="#fff" stroke-width="1.00" stroke-dasharray="7.3 3.3 15.9 3.6" opacity="0.85"/><path d="M1330.4 705.2 L1326.9 704.6 L1322.6 704.3 L1317.4 704.1 L1311.7 704.0 L1305.4 704.0 L1298.8 704.0 L1291.9 704.2 L1284.9 704.4 L1277.9 704.9 L1271.1 705.7 L1264.6 706.7 L1258.5 707.8 L1253.0 709.0 L1248.1 710.5 L1243.8 712.1 L1239.9 714.0 L1236.4 716.0 L1233.1 718.2 L1230.1 720.4 L1227.3 722.8 L1224.8 725.3 L1222.5 727.8 L1220.3 730.4 L1218.3 733.0 L1216.5 735.6 L1214.6 738.1 L1212.9 740.6 L1211.1 743.1 L1209.2 745.9 L1207.5 749.0 L1205.9 752.2 L1204.4 755.5 L1203.0 758.9 L1201.8 762.2 L1200.7 765.5 L1199.6 768.6 L1198.7 771.7 L1197.8 774.5 L1197.1 777.1 L1196.4 779.3 L1195.8 781.1 L1195.2 782.6 L1204.4 786.0 L1205.0 784.3 L1205.7 782.2 L1206.4 779.9 L1207.2 777.3 L1208.0 774.5 L1208.9 771.6 L1209.9 768.6 L1211.0 765.5 L1212.1 762.4 L1213.4 759.3 L1214.7 756.4 L1216.1 753.6 L1217.5 751.1 L1219.1 748.7 L1220.8 746.2 L1222.6 743.7 L1224.4 741.3 L1226.1 738.9 L1227.9 736.5 L1229.8 734.3 L1231.8 732.1 L1233.9 730.0 L1236.2 728.0 L1238.7 726.1 L1241.4 724.3 L1244.4 722.7 L1247.7 721.1 L1251.3 719.7 L1255.5 718.5 L1260.5 717.3 L1266.2 716.3 L1272.4 715.4 L1279.0 714.6 L1285.7 713.6 L1292.6 712.6 L1299.3 711.6 L1305.9 710.7 L1312.1 709.9 L1317.8 709.0 L1322.8 708.1 L1327.1 707.1 L1330.4 705.8Z" fill="#eaeed6"/><path d="M1268.5 710.6 L1258.1 712.5 L1249.6 714.8 L1242.9 717.6 L1237.2 720.8 L1232.3 724.5 L1228.1 728.4 L1224.4 732.6 L1221.0 737.0 L1217.9 741.3 L1214.8 745.7" fill="none" stroke="#fff" stroke-width="1.02" stroke-dasharray="9.8 5.5 5.0 3.7" opacity="0.85"/><path d="M1257.9 711.8 L1249.4 714.1 L1242.6 716.9 L1236.8 720.2 L1231.8 724.0 L1227.6 728.0 L1223.8 732.2 L1220.5 736.5 L1217.3 740.9 L1214.2 745.3 L1211.2 750.1 L1208.6 755.4 L1206.3 761.1 L1204.3 766.7" fill="none" stroke="#fff" stroke-width="0.73" stroke-dasharray="6.9 3.4 6.6 4.8" opacity="0.85"/><path d="M1360.7 699.7 L1359.1 701.6 L1357.5 704.1 L1356.0 707.2 L1354.3 710.6 L1352.6 714.3 L1350.8 718.3 L1348.9 722.5 L1346.9 726.7 L1344.8 731.0 L1342.7 735.2 L1340.4 739.3 L1338.1 743.3 L1335.8 747.0 L1333.4 750.4 L1331.0 753.9 L1328.3 757.6 L1325.5 761.3 L1322.7 765.1 L1319.7 768.8 L1316.6 772.4 L1313.4 776.0 L1310.1 779.4 L1306.8 782.6 L1303.4 785.6 L1300.0 788.3 L1296.5 790.8 L1293.1 792.9 L1289.7 794.7 L1286.1 796.1 L1282.3 797.3 L1278.2 798.3 L1273.8 799.1 L1269.4 799.6 L1264.8 800.0 L1260.2 800.2 L1255.6 800.2 L1251.1 800.1 L1246.7 799.8 L1242.4 799.5 L1238.5 799.0 L1234.8 798.6 L1231.5 798.1 L1228.7 797.5 L1226.2 796.6 L1223.7 795.6 L1221.3 794.3 L1219.0 792.9 L1216.8 791.4 L1214.7 789.8 L1212.8 788.2 L1210.9 786.6 L1209.1 785.0 L1207.5 783.5 L1205.9 782.0 L1204.4 780.8 L1203.0 779.8 L1196.6 788.8 L1197.6 789.5 L1198.7 790.4 L1200.1 791.7 L1201.7 793.1 L1203.6 794.8 L1205.6 796.6 L1207.9 798.5 L1210.3 800.3 L1213.0 802.2 L1215.9 803.9 L1219.0 805.6 L1222.3 807.0 L1225.8 808.1 L1229.5 808.9 L1233.2 809.5 L1237.2 810.0 L1241.4 810.5 L1245.9 810.8 L1250.6 811.1 L1255.5 811.2 L1260.4 811.2 L1265.4 811.0 L1270.5 810.6 L1275.5 810.0 L1280.4 809.1 L1285.2 808.0 L1289.9 806.5 L1294.3 804.7 L1298.5 802.5 L1302.6 800.0 L1306.6 797.1 L1310.5 794.0 L1314.3 790.7 L1317.9 787.2 L1321.5 783.5 L1324.9 779.7 L1328.2 775.8 L1331.3 771.9 L1334.3 768.0 L1337.2 764.1 L1340.0 760.3 L1342.6 756.6 L1345.1 752.6 L1347.3 748.2 L1349.3 743.7 L1351.2 739.1 L1352.9 734.4 L1354.5 729.7 L1355.9 725.1 L1357.1 720.6 L1358.3 716.3 L1359.2 712.3 L1360.1 708.6 L1360.7 705.3 L1361.2 702.4 L1361.3 699.9Z" fill="#eaeed6"/><path d="M1361.4 704.7 L1359.4 710.3 L1357.1 717.0 L1354.4 724.5 L1351.3 732.4 L1347.8 740.3 L1344.0 747.8 L1339.8 754.7 L1335.2 761.2 L1330.2 767.9 L1324.7 774.6" fill="none" stroke="#fff" stroke-width="1.04" stroke-dasharray="4.7 3.7 6.6 2.5" opacity="0.85"/><path d="M1357.8 709.8 L1355.4 716.5 L1352.7 723.9 L1349.7 731.7 L1346.3 739.5 L1342.5 747.0 L1338.3 753.7 L1333.8 760.2 L1328.8 766.8 L1323.4 773.5 L1317.7 780.0 L1311.7 786.1" fill="none" stroke="#fff" stroke-width="0.60" stroke-dasharray="8.9 2.5 5.8 3.4" opacity="0.85"/><path d="M1310.9 739.7 L1308.6 740.0 L1305.9 740.5 L1302.9 741.4 L1299.5 742.3 L1295.9 743.4 L1292.0 744.7 L1287.9 746.0 L1283.7 747.3 L1279.4 748.8 L1275.2 750.3 L1270.9 752.0 L1266.7 753.6 L1262.7 755.2 L1258.7 756.7 L1254.8 758.1 L1250.5 759.7 L1246.0 761.4 L1241.4 763.0 L1236.7 764.7 L1232.0 766.4 L1227.4 768.1 L1222.9 769.7 L1218.6 771.2 L1214.6 772.7 L1210.9 774.0 L1207.5 775.2 L1204.7 776.2 L1202.4 777.0 L1204.8 783.8 L1207.1 782.9 L1209.9 781.9 L1213.3 780.7 L1217.0 779.4 L1221.0 778.0 L1225.3 776.4 L1229.8 774.8 L1234.5 773.1 L1239.2 771.5 L1243.9 769.8 L1248.5 768.1 L1253.0 766.4 L1257.2 764.8 L1261.3 763.3 L1265.2 761.9 L1269.3 760.3 L1273.5 758.7 L1277.8 757.0 L1282.0 755.2 L1286.1 753.4 L1290.1 751.5 L1294.0 749.6 L1297.7 747.9 L1301.1 746.2 L1304.2 744.6 L1306.9 743.1 L1309.3 741.7 L1311.1 740.3Z" fill="#eaeed6"/><path d="M1307.0 741.2 L1301.8 743.2 L1295.7 745.6 L1288.9 748.3 L1281.6 751.2 L1274.2 754.1 L1266.8 757.0 L1259.9 759.6 L1252.7 762.3 L1244.8 765.2" fill="none" stroke="#fff" stroke-width="0.95" stroke-dasharray="11.6 5.1 8.4 3.3" opacity="0.85"/><path d="M1281.7 751.5 L1274.3 754.4 L1267.0 757.3 L1260.0 759.9 L1252.8 762.6 L1244.9 765.5 L1236.7 768.5 L1228.6 771.4" fill="none" stroke="#fff" stroke-width="0.99" stroke-dasharray="7.5 3.2 9.3 3.7" opacity="0.85"/><path d="M1170.0 785.3 L1172.2 785.5 L1174.3 785.7 L1176.5 785.8 L1178.6 785.9 L1180.8 786.0 L1182.9 786.1 L1185.1 786.1 L1187.2 786.1 L1189.3 786.0 L1191.5 785.9 L1193.6 785.8 L1195.8 785.8 L1197.9 785.7 L1200.1 785.6 L1199.9 782.4 L1197.8 782.4 L1195.7 782.5 L1193.5 782.6 L1191.4 782.7 L1189.2 782.7 L1187.1 782.8 L1184.9 782.9 L1182.8 783.1 L1180.7 783.3 L1178.5 783.5 L1176.4 783.7 L1174.3 784.0 L1172.1 784.3 L1170.0 784.7Z" fill="#eaeed6"/><path d="M1445.4 528.6 L1443.7 529.6 L1441.9 531.0 L1440.0 532.8 L1437.9 534.8 L1435.7 537.0 L1433.3 539.4 L1430.9 542.0 L1428.4 544.7 L1426.0 547.6 L1423.6 550.5 L1421.3 553.5 L1419.1 556.6 L1417.1 559.7 L1415.3 562.7 L1413.7 565.8 L1412.2 568.9 L1410.8 572.1 L1409.4 575.4 L1408.2 578.8 L1407.1 582.2 L1406.1 585.7 L1405.2 589.1 L1404.3 592.6 L1403.5 596.0 L1402.8 599.4 L1402.2 602.8 L1401.7 606.1 L1401.3 609.3 L1400.9 612.3 L1400.6 615.2 L1400.2 618.1 L1399.9 621.0 L1399.6 623.9 L1399.4 626.9 L1399.4 629.9 L1399.5 632.9 L1399.7 636.0 L1400.2 639.2 L1400.9 642.5 L1401.9 645.8 L1403.1 649.1 L1404.7 652.6 L1406.7 656.3 L1409.1 660.2 L1412.0 664.1 L1415.1 668.2 L1418.5 672.3 L1421.9 676.4 L1425.5 680.4 L1429.0 684.3 L1432.4 688.0 L1435.7 691.5 L1438.6 694.6 L1442.2 696.5 L1445.5 697.9 L1449.3 698.0 L1449.7 697.6 L1450.1 693.8 L1449.0 690.3 L1447.3 686.5 L1444.4 683.3 L1441.2 679.9 L1437.8 676.2 L1434.4 672.4 L1430.9 668.5 L1427.6 664.6 L1424.4 660.8 L1421.5 657.0 L1419.0 653.5 L1416.9 650.2 L1415.3 647.4 L1414.1 644.7 L1413.2 642.1 L1412.5 639.5 L1411.9 637.1 L1411.6 634.6 L1411.4 632.2 L1411.3 629.8 L1411.3 627.3 L1411.5 624.8 L1411.7 622.2 L1412.0 619.5 L1412.4 616.7 L1412.7 613.7 L1413.1 610.7 L1413.5 607.8 L1414.0 604.7 L1414.5 601.7 L1415.2 598.5 L1415.9 595.3 L1416.7 592.1 L1417.6 588.9 L1418.5 585.7 L1419.5 582.5 L1420.5 579.3 L1421.5 576.2 L1422.5 573.1 L1423.6 570.1 L1424.7 567.3 L1425.9 564.4 L1427.3 561.5 L1428.9 558.5 L1430.7 555.4 L1432.5 552.3 L1434.4 549.2 L1436.3 546.2 L1438.2 543.2 L1440.0 540.4 L1441.6 537.7 L1443.1 535.3 L1444.4 533.0 L1445.4 530.9 L1445.8 529.0Z" fill="#d5dda2"/><path d="M1418.1 564.1 L1415.7 569.4 L1413.6 575.0 L1411.6 580.8 L1409.8 586.7 L1408.3 592.6 L1406.9 598.5 L1405.9 604.2 L1405.1 609.7 L1404.5 614.9 L1403.9 619.9 L1403.4 624.9 L1403.2 629.8 L1403.5 634.9 L1404.3 640.0 L1405.8 645.4 L1408.1 650.9 L1411.7 657.1 L1416.6 663.8 L1422.3 670.8" fill="none" stroke="#fff" stroke-width="0.94" stroke-dasharray="8.5 5.4 15.6 3.6" opacity="0.85"/><path d="M1443.2 531.3 L1440.4 534.8 L1437.0 539.1 L1433.3 543.8 L1429.5 548.9 L1425.8 554.3 L1422.4 559.6 L1419.6 564.8 L1417.3 570.1 L1415.1 575.6 L1413.2 581.3 L1411.4 587.2 L1409.9 593.0 L1408.6 598.8 L1407.6 604.5 L1406.8 609.9 L1406.1 615.1 L1405.5 620.1 L1405.1 625.0" fill="none" stroke="#fff" stroke-width="0.74" stroke-dasharray="6.8 5.8 7.0 3.9" opacity="0.85"/><path d="M1454.9 561.6 L1455.4 564.2 L1456.4 567.2 L1457.7 570.5 L1459.3 574.3 L1461.1 578.3 L1463.1 582.5 L1465.1 586.9 L1467.0 591.4 L1468.9 595.9 L1470.7 600.4 L1472.3 604.7 L1473.8 608.8 L1475.0 612.6 L1475.7 616.1 L1476.2 619.5 L1476.4 623.0 L1476.4 626.5 L1476.3 630.0 L1476.0 633.6 L1475.5 637.2 L1474.9 640.7 L1474.1 644.2 L1473.3 647.7 L1472.4 651.1 L1471.4 654.4 L1470.4 657.6 L1469.3 660.7 L1468.3 663.5 L1467.1 666.2 L1465.8 668.9 L1464.3 671.6 L1462.6 674.2 L1460.8 676.8 L1458.9 679.3 L1457.0 681.8 L1455.1 684.1 L1453.2 686.3 L1451.4 688.4 L1450.1 690.7 L1449.3 693.0 L1448.8 695.2 L1449.3 697.6 L1449.7 698.0 L1452.1 697.8 L1454.1 697.0 L1456.2 695.9 L1458.3 694.3 L1460.1 692.2 L1462.0 689.9 L1464.1 687.5 L1466.1 684.9 L1468.2 682.1 L1470.2 679.3 L1472.1 676.3 L1473.8 673.2 L1475.4 670.0 L1476.7 666.9 L1477.9 663.7 L1479.0 660.5 L1480.1 657.1 L1481.1 653.6 L1482.1 649.9 L1483.0 646.2 L1483.8 642.4 L1484.5 638.6 L1485.0 634.6 L1485.4 630.6 L1485.5 626.6 L1485.5 622.6 L1485.2 618.6 L1484.7 614.5 L1483.8 610.3 L1482.4 605.9 L1480.8 601.4 L1478.7 596.9 L1476.4 592.4 L1473.9 588.0 L1471.3 583.6 L1468.7 579.5 L1466.1 575.5 L1463.6 571.9 L1461.3 568.5 L1459.1 565.6 L1457.2 563.2 L1455.5 561.4Z" fill="#d5dda2"/><path d="M1475.3 601.0 L1478.1 608.5 L1479.9 615.4 L1480.6 621.9 L1480.6 628.4 L1480.0 635.0 L1479.0 641.5 L1477.6 647.8 L1475.9 653.9" fill="none" stroke="#fff" stroke-width="0.88" stroke-dasharray="7.5 4.9 14.5 4.3" opacity="0.85"/><path d="M1459.1 572.0 L1462.8 578.7 L1466.8 586.0 L1470.7 593.7 L1474.2 601.5 L1477.0 608.9 L1478.7 615.6 L1479.4 621.9 L1479.4 628.4 L1478.8 634.9 L1477.8 641.3 L1476.4 647.6" fill="none" stroke="#fff" stroke-width="0.63" stroke-dasharray="9.0 5.6 5.4 3.6" opacity="0.85"/><path d="M1441.5 596.0 L1440.4 602.4 L1439.9 608.7 L1439.7 615.1 L1439.5 621.4 L1439.7 627.7 L1439.9 634.0 L1440.2 640.4 L1440.5 646.7 L1440.7 653.0 L1441.0 659.3 L1441.3 665.6 L1441.6 671.9 L1442.4 678.2 L1445.3 684.4 L1445.9 684.4 L1448.3 678.0 L1448.6 671.6 L1448.3 665.3 L1448.0 659.0 L1447.7 652.7 L1447.5 646.4 L1447.2 640.0 L1446.9 633.7 L1446.7 627.4 L1446.3 621.1 L1445.6 614.8 L1444.8 608.5 L1443.8 602.2 L1442.1 596.0Z" fill="#d5dda2"/><path d="M1440.9 607.1 L1441.4 618.2 L1441.9 629.2 L1442.4 640.3" fill="none" stroke="#fff" stroke-width="0.77" stroke-dasharray="3.2 5.3 7.4 2.0" opacity="0.85"/><path d="M1442.3 618.1 L1442.8 629.2 L1443.3 640.2" fill="none" stroke="#fff" stroke-width="0.74" stroke-dasharray="3.6 2.4 14.4 4.2" opacity="0.85"/><path d="M1543.3 653.8 L1543.1 656.5 L1543.4 659.8 L1544.0 663.6 L1544.8 667.8 L1545.7 672.3 L1546.7 677.1 L1547.8 682.0 L1548.8 687.1 L1549.7 692.2 L1550.4 697.2 L1551.0 702.1 L1551.4 706.7 L1551.5 711.0 L1551.2 714.9 L1550.8 718.6 L1550.3 722.4 L1549.6 726.3 L1548.7 730.2 L1547.6 734.0 L1546.4 737.8 L1545.1 741.6 L1543.6 745.4 L1542.0 749.0 L1540.3 752.6 L1538.5 756.1 L1536.7 759.4 L1534.8 762.7 L1532.8 765.7 L1530.8 768.7 L1528.7 771.5 L1526.5 774.3 L1524.2 776.9 L1521.7 779.5 L1519.2 782.0 L1516.6 784.5 L1513.9 786.8 L1511.1 789.0 L1508.3 791.0 L1505.4 793.0 L1502.5 794.9 L1499.6 796.6 L1496.7 798.2 L1493.7 799.6 L1490.5 800.8 L1486.9 802.0 L1483.1 803.0 L1479.1 804.0 L1475.1 804.8 L1471.0 805.5 L1467.1 806.2 L1463.2 806.8 L1459.6 807.3 L1456.2 807.8 L1453.2 808.3 L1450.5 808.7 L1448.3 809.2 L1450.7 820.8 L1452.6 820.4 L1455.0 820.0 L1458.0 819.6 L1461.3 819.1 L1465.0 818.6 L1468.9 818.0 L1473.1 817.3 L1477.3 816.5 L1481.7 815.6 L1486.0 814.6 L1490.3 813.4 L1494.4 812.1 L1498.4 810.5 L1502.1 808.8 L1505.5 807.0 L1508.8 805.0 L1512.0 802.9 L1515.2 800.7 L1518.4 798.4 L1521.5 795.9 L1524.5 793.3 L1527.4 790.7 L1530.2 787.8 L1533.0 784.9 L1535.6 781.9 L1538.1 778.8 L1540.5 775.6 L1542.8 772.3 L1544.9 768.9 L1547.0 765.3 L1549.0 761.7 L1551.0 757.9 L1552.8 754.0 L1554.6 749.9 L1556.2 745.8 L1557.7 741.6 L1559.0 737.4 L1560.2 733.1 L1561.2 728.7 L1562.0 724.3 L1562.6 719.8 L1562.8 715.3 L1562.6 710.6 L1562.0 705.6 L1561.1 700.6 L1559.9 695.4 L1558.5 690.2 L1556.9 685.1 L1555.2 680.0 L1553.5 675.1 L1551.7 670.5 L1550.0 666.2 L1548.3 662.3 L1546.8 658.8 L1545.3 655.9 L1543.9 653.6Z" fill="#d5dda2"/><path d="M1543.1 653.8 L1544.3 658.6 L1546.3 665.1 L1548.6 672.7 L1551.0 681.2 L1553.2 690.0 L1555.1 698.9 L1556.3 707.4 L1556.5 715.1 L1555.8 722.3 L1554.4 729.4 L1552.5 736.6" fill="none" stroke="#fff" stroke-width="0.68" stroke-dasharray="12.2 3.7 11.2 2.2" opacity="0.85"/><path d="M1550.1 743.5 L1547.3 750.3 L1544.2 756.8 L1540.8 763.0 L1537.3 768.7 L1533.5 774.1 L1529.4 779.2 L1524.9 784.0 L1520.1 788.5 L1515.1 792.6 L1509.9 796.5 L1504.6 799.9 L1499.1 803.0 L1493.2 805.6 L1486.4 807.7 L1479.2 809.4 L1471.9 810.8 L1465.0 812.0 L1458.7 812.9" fill="none" stroke="#fff" stroke-width="0.97" stroke-dasharray="6.0 6.0 9.2 4.8" opacity="0.85"/><path d="M1524.2 674.5 L1521.7 675.2 L1518.7 676.2 L1515.3 677.6 L1511.4 679.2 L1507.3 681.0 L1502.9 683.0 L1498.4 685.1 L1493.7 687.4 L1489.1 689.9 L1484.6 692.4 L1480.2 695.1 L1476.1 697.9 L1472.4 700.9 L1469.1 703.9 L1466.2 706.9 L1463.4 709.9 L1460.7 713.0 L1458.2 716.2 L1455.8 719.5 L1453.5 722.9 L1451.4 726.3 L1449.4 729.8 L1447.5 733.4 L1445.8 737.1 L1444.3 740.8 L1442.9 744.6 L1441.8 748.5 L1440.8 752.5 L1440.1 756.8 L1439.7 761.5 L1439.6 766.3 L1439.7 771.2 L1440.0 776.2 L1440.4 781.3 L1441.0 786.2 L1441.6 791.0 L1442.3 795.6 L1442.9 799.9 L1443.5 803.8 L1444.0 807.3 L1444.4 810.2 L1444.6 812.5 L1454.4 811.5 L1454.1 809.0 L1453.7 805.9 L1453.2 802.4 L1452.6 798.5 L1452.0 794.2 L1451.3 789.7 L1450.7 785.0 L1450.2 780.3 L1449.8 775.5 L1449.5 770.8 L1449.4 766.3 L1449.5 762.0 L1449.8 758.0 L1450.4 754.5 L1451.2 751.1 L1452.3 747.7 L1453.5 744.3 L1454.8 741.0 L1456.3 737.7 L1458.0 734.5 L1459.8 731.3 L1461.7 728.2 L1463.8 725.2 L1466.0 722.2 L1468.3 719.3 L1470.8 716.4 L1473.3 713.6 L1475.9 710.9 L1478.8 708.3 L1482.0 705.6 L1485.6 702.8 L1489.5 699.9 L1493.5 697.0 L1497.7 694.1 L1501.9 691.3 L1506.0 688.6 L1510.0 686.0 L1513.8 683.5 L1517.2 681.2 L1520.3 679.0 L1522.8 677.0 L1524.6 675.1Z" fill="#d5dda2"/><path d="M1499.8 687.7 L1492.1 692.2 L1484.6 697.0 L1477.7 702.0 L1472.1 706.9 L1467.2 712.0 L1462.8 717.3 L1458.7 722.8 L1455.0 728.5 L1451.8 734.4 L1449.0 740.5 L1446.7 746.9" fill="none" stroke="#fff" stroke-width="0.67" stroke-dasharray="11.0 2.1 7.4 2.1" opacity="0.85"/><path d="M1525.0 675.8 L1520.8 678.2 L1515.0 681.3 L1508.2 685.0 L1500.7 689.2 L1493.0 693.7 L1485.6 698.5 L1478.8 703.3 L1473.3 708.2 L1468.6 713.2" fill="none" stroke="#fff" stroke-width="0.91" stroke-dasharray="6.2 5.7 13.4 2.8" opacity="0.85"/><path d="M1522.3 716.8 L1520.4 718.0 L1518.4 719.7 L1516.2 721.7 L1513.8 724.1 L1511.2 726.7 L1508.5 729.5 L1505.7 732.5 L1502.9 735.6 L1500.0 738.7 L1497.3 742.1 L1494.6 745.4 L1492.0 748.6 L1489.4 751.6 L1487.0 754.5 L1484.6 757.4 L1482.1 760.5 L1479.5 763.6 L1476.8 766.8 L1474.0 770.0 L1471.3 773.3 L1468.6 776.4 L1466.0 779.5 L1463.6 782.4 L1461.3 785.1 L1459.1 787.6 L1457.2 789.8 L1455.6 791.7 L1454.3 793.3 L1460.1 798.3 L1461.5 796.7 L1463.1 794.8 L1465.0 792.6 L1467.1 790.1 L1469.4 787.4 L1471.9 784.4 L1474.5 781.4 L1477.2 778.2 L1479.9 775.0 L1482.6 771.8 L1485.3 768.6 L1488.0 765.4 L1490.5 762.4 L1493.0 759.5 L1495.4 756.5 L1497.9 753.4 L1500.6 750.2 L1503.2 746.9 L1506.0 743.6 L1508.4 740.1 L1510.9 736.7 L1513.2 733.3 L1515.4 730.1 L1517.4 727.0 L1519.2 724.2 L1520.7 721.6 L1522.0 719.3 L1522.7 717.2Z" fill="#d5dda2"/><path d="M1508.6 734.8 L1503.9 740.6 L1499.2 746.4 L1494.6 752.0 L1490.3 757.2 L1486.0 762.4 L1481.4 767.9" fill="none" stroke="#fff" stroke-width="0.73" stroke-dasharray="5.4 4.7 13.3 4.1" opacity="0.85"/><path d="M1504.3 740.8 L1499.5 746.6 L1494.9 752.3 L1490.6 757.5 L1486.3 762.7 L1481.7 768.2 L1476.9 773.9 L1472.2 779.4" fill="none" stroke="#fff" stroke-width="0.81" stroke-dasharray="7.9 4.1 13.3 4.3" opacity="0.85"/><path d="M1449.3 812.4 L1447.6 813.2 L1445.9 813.9 L1444.2 814.7 L1442.5 815.4 L1440.9 816.2 L1439.2 816.9 L1437.5 817.7 L1435.9 818.6 L1434.2 819.5 L1432.6 820.4 L1431.0 821.3 L1429.4 822.2 L1427.8 823.2 L1426.3 824.3 L1426.5 824.9 L1428.4 824.4 L1430.2 823.9 L1431.9 823.4 L1433.7 822.8 L1435.4 822.2 L1437.2 821.5 L1438.9 820.9 L1440.6 820.1 L1442.3 819.4 L1444.0 818.6 L1445.7 817.9 L1447.3 817.1 L1449.0 816.4 L1450.7 815.6Z" fill="#d5dda2"/><path d="M1058.2 528.5 L1057.1 529.3 L1055.8 530.2 L1054.3 531.3 L1052.8 532.7 L1051.1 534.1 L1049.4 535.8 L1047.6 537.6 L1045.8 539.5 L1043.9 541.6 L1042.0 543.9 L1040.1 546.2 L1038.3 548.7 L1036.5 551.4 L1034.8 554.1 L1033.1 556.9 L1031.3 559.8 L1029.5 563.0 L1027.6 566.4 L1025.9 570.0 L1024.3 573.7 L1022.6 577.5 L1021.1 581.3 L1019.6 585.2 L1018.2 589.0 L1016.9 592.9 L1015.8 596.7 L1014.8 600.4 L1014.1 604.0 L1013.6 607.6 L1013.2 611.0 L1013.0 614.5 L1012.9 617.8 L1012.9 621.2 L1013.1 624.5 L1013.3 627.7 L1013.7 630.9 L1014.2 634.1 L1014.7 637.2 L1015.4 640.2 L1016.1 643.1 L1016.9 646.0 L1017.7 648.8 L1018.7 651.7 L1019.8 654.6 L1021.1 657.3 L1022.5 660.0 L1024.0 662.6 L1025.5 665.2 L1027.1 667.6 L1028.7 669.9 L1030.4 672.2 L1032.0 674.4 L1033.6 676.5 L1035.1 678.4 L1036.6 680.3 L1038.1 682.1 L1039.6 684.0 L1041.2 685.9 L1042.9 687.6 L1044.6 689.3 L1046.3 690.9 L1048.0 692.3 L1049.7 693.7 L1051.4 694.8 L1053.3 695.4 L1055.1 695.9 L1056.8 696.3 L1058.5 696.4 L1060.0 696.4 L1061.7 696.0 L1062.7 694.8 L1062.8 693.1 L1062.5 691.5 L1061.9 689.9 L1061.2 688.3 L1060.3 686.6 L1059.4 685.0 L1058.1 683.6 L1056.7 682.3 L1055.2 681.0 L1053.7 679.7 L1052.3 678.3 L1050.9 676.9 L1049.6 675.4 L1048.3 673.9 L1047.0 672.1 L1045.5 670.3 L1044.0 668.4 L1042.5 666.4 L1041.0 664.4 L1039.6 662.3 L1038.1 660.2 L1036.7 658.1 L1035.4 655.9 L1034.2 653.7 L1033.0 651.5 L1032.0 649.3 L1031.1 647.1 L1030.3 644.8 L1029.6 642.4 L1028.9 639.8 L1028.3 637.2 L1027.7 634.6 L1027.2 631.9 L1026.8 629.2 L1026.5 626.4 L1026.3 623.6 L1026.1 620.8 L1026.1 618.0 L1026.2 615.1 L1026.4 612.2 L1026.7 609.3 L1027.1 606.4 L1027.7 603.4 L1028.5 600.2 L1029.5 596.9 L1030.7 593.4 L1032.0 589.8 L1033.4 586.2 L1034.8 582.6 L1036.4 579.0 L1038.0 575.4 L1039.6 572.0 L1040.9 568.5 L1042.2 565.2 L1043.5 562.0 L1044.6 559.1 L1045.8 556.5 L1046.9 553.9 L1048.2 551.3 L1049.4 548.8 L1050.7 546.4 L1052.0 544.1 L1053.3 541.8 L1054.5 539.7 L1055.6 537.6 L1056.7 535.7 L1057.6 533.9 L1058.4 532.2 L1058.9 530.6 L1059.4 529.3Z" fill="#4d7bf0"/><path d="M1066.8 560.4 L1067.3 561.9 L1067.8 563.7 L1068.6 565.7 L1069.6 568.0 L1070.7 570.3 L1072.0 572.8 L1073.3 575.4 L1074.6 578.1 L1075.9 580.8 L1077.2 583.5 L1078.5 586.2 L1079.6 588.7 L1080.7 591.2 L1081.5 593.6 L1082.4 596.0 L1083.3 598.4 L1084.1 600.8 L1085.1 603.2 L1086.0 605.6 L1086.9 608.0 L1087.7 610.3 L1088.5 612.7 L1089.1 615.0 L1089.7 617.3 L1090.2 619.6 L1090.5 621.8 L1090.7 624.0 L1090.9 626.2 L1090.9 628.4 L1090.8 630.6 L1090.6 632.9 L1090.3 635.2 L1090.0 637.5 L1089.5 639.8 L1089.0 642.1 L1088.3 644.4 L1087.6 646.7 L1086.8 648.9 L1086.0 651.2 L1085.0 653.5 L1084.0 655.7 L1082.9 657.8 L1081.7 659.9 L1080.2 662.2 L1078.5 664.6 L1076.6 667.0 L1074.5 669.5 L1072.4 672.0 L1070.2 674.5 L1068.0 676.9 L1065.9 679.1 L1063.8 681.3 L1062.4 683.7 L1061.6 686.3 L1061.2 688.8 L1061.6 691.5 L1062.8 692.5 L1065.4 692.6 L1067.8 692.1 L1070.4 691.2 L1072.6 689.6 L1074.7 687.4 L1076.9 685.0 L1079.1 682.6 L1081.4 680.0 L1083.7 677.3 L1086.0 674.6 L1088.1 671.8 L1090.1 669.1 L1092.0 666.3 L1093.5 663.6 L1094.8 661.0 L1096.0 658.4 L1097.1 655.8 L1098.2 653.1 L1099.1 650.4 L1099.9 647.8 L1100.7 645.0 L1101.3 642.3 L1101.9 639.6 L1102.3 636.8 L1102.6 634.1 L1102.8 631.3 L1102.9 628.6 L1102.9 625.8 L1102.8 623.0 L1102.5 620.2 L1102.0 617.4 L1101.5 614.7 L1100.8 611.9 L1100.0 609.2 L1099.2 606.5 L1098.2 603.9 L1097.3 601.3 L1096.3 598.7 L1095.2 596.2 L1094.0 593.8 L1092.7 591.4 L1091.5 589.0 L1090.1 586.6 L1088.5 584.0 L1086.8 581.4 L1085.0 578.9 L1083.1 576.4 L1081.2 573.9 L1079.3 571.5 L1077.4 569.2 L1075.6 567.1 L1073.8 565.2 L1072.1 563.4 L1070.6 561.9 L1069.1 560.7 L1068.0 559.6Z" fill="#4d7bf0"/><path d="M1054.6 596.3 L1053.9 597.7 L1052.9 599.2 L1051.9 601.0 L1050.8 603.1 L1049.7 605.4 L1048.6 607.9 L1047.5 610.6 L1046.5 613.4 L1045.5 616.5 L1044.6 619.6 L1043.9 622.9 L1043.6 626.3 L1043.4 629.8 L1043.5 633.3 L1043.9 636.9 L1044.4 640.9 L1045.2 645.0 L1046.1 649.3 L1047.1 653.7 L1048.2 658.1 L1049.3 662.5 L1050.4 666.8 L1051.6 670.9 L1052.7 674.8 L1053.7 678.3 L1054.5 681.5 L1056.7 683.7 L1059.8 685.2 L1061.2 684.8 L1063.3 682.0 L1064.0 678.9 L1063.1 675.7 L1062.1 672.2 L1061.0 668.3 L1059.9 664.3 L1058.7 660.0 L1057.6 655.7 L1056.6 651.4 L1055.6 647.2 L1054.8 643.1 L1054.1 639.3 L1053.6 635.8 L1053.3 632.7 L1053.2 629.9 L1053.3 627.0 L1053.6 624.1 L1053.8 621.1 L1054.0 618.2 L1054.3 615.3 L1054.7 612.4 L1055.1 609.7 L1055.4 607.0 L1055.7 604.6 L1056.0 602.2 L1056.1 600.1 L1056.1 598.2 L1056.0 596.7Z" fill="#4d7bf0"/><path d="M1156.9 653.9 L1157.0 655.7 L1157.1 657.8 L1157.4 660.2 L1157.9 662.8 L1158.5 665.6 L1159.1 668.6 L1159.8 671.7 L1160.4 675.0 L1161.0 678.3 L1161.5 681.8 L1161.9 685.2 L1162.2 688.7 L1162.4 692.2 L1162.3 695.6 L1162.2 699.4 L1162.0 703.5 L1161.7 707.8 L1161.4 712.3 L1161.0 716.9 L1160.8 721.5 L1160.4 726.2 L1160.0 730.9 L1159.4 735.5 L1158.7 739.9 L1157.9 744.2 L1156.9 748.2 L1155.8 751.9 L1154.6 755.2 L1153.2 758.3 L1151.6 761.4 L1149.9 764.3 L1148.0 767.1 L1146.0 769.8 L1143.8 772.4 L1141.5 775.0 L1139.1 777.4 L1136.6 779.7 L1134.0 782.0 L1131.2 784.2 L1128.4 786.3 L1125.6 788.3 L1122.8 790.1 L1119.8 791.8 L1116.6 793.4 L1112.9 795.0 L1109.0 796.5 L1104.9 797.9 L1100.6 799.2 L1096.4 800.4 L1092.2 801.5 L1088.1 802.6 L1084.3 803.5 L1080.7 804.4 L1077.5 805.2 L1074.7 806.0 L1072.4 806.7 L1076.4 819.9 L1078.4 819.3 L1081.0 818.6 L1084.1 817.8 L1087.6 816.9 L1091.6 815.9 L1095.7 814.9 L1100.1 813.7 L1104.6 812.4 L1109.1 811.0 L1113.6 809.5 L1118.0 807.8 L1122.3 806.0 L1126.3 804.0 L1130.0 801.9 L1133.4 799.7 L1136.5 797.4 L1139.7 795.1 L1142.8 792.6 L1145.8 790.0 L1148.7 787.3 L1151.5 784.5 L1154.2 781.5 L1156.8 778.3 L1159.3 775.1 L1161.6 771.6 L1163.7 768.1 L1165.6 764.3 L1167.4 760.4 L1168.9 756.2 L1170.3 751.8 L1171.4 747.1 L1172.3 742.3 L1173.1 737.4 L1173.7 732.4 L1174.2 727.4 L1174.6 722.4 L1174.8 717.4 L1174.8 712.6 L1174.6 707.9 L1174.3 703.4 L1174.0 699.2 L1173.7 695.2 L1173.2 691.2 L1172.4 687.3 L1171.5 683.5 L1170.5 679.8 L1169.3 676.2 L1168.0 672.8 L1166.7 669.6 L1165.4 666.5 L1164.0 663.7 L1162.7 661.1 L1161.5 658.8 L1160.3 656.8 L1159.1 655.0 L1158.3 653.5Z" fill="#4d7bf0"/><path d="M1138.2 673.9 L1136.4 674.3 L1134.1 674.8 L1131.5 675.4 L1128.7 676.1 L1125.6 677.1 L1122.3 678.1 L1118.9 679.3 L1115.4 680.6 L1111.8 682.0 L1108.3 683.6 L1104.8 685.2 L1101.4 686.9 L1098.2 688.8 L1095.1 690.7 L1092.3 692.7 L1089.6 694.6 L1086.9 696.8 L1084.3 699.2 L1081.6 701.5 L1079.1 704.0 L1076.5 706.6 L1074.1 709.3 L1071.7 712.0 L1069.4 714.9 L1067.3 717.8 L1065.2 720.8 L1063.4 724.0 L1061.7 727.3 L1060.2 730.7 L1058.9 734.3 L1057.7 738.1 L1056.7 741.9 L1055.8 745.8 L1055.1 749.7 L1054.5 753.6 L1053.9 757.5 L1053.5 761.3 L1053.2 765.1 L1052.9 768.7 L1052.7 772.1 L1052.6 775.4 L1052.5 778.5 L1052.5 781.7 L1052.7 784.9 L1053.1 787.9 L1053.6 790.9 L1054.2 793.7 L1054.9 796.4 L1055.6 799.0 L1056.4 801.4 L1057.1 803.7 L1057.8 805.7 L1058.4 807.5 L1058.9 809.1 L1059.3 810.3 L1059.6 811.4 L1071.8 808.2 L1071.5 806.8 L1071.0 805.2 L1070.4 803.5 L1069.8 801.6 L1069.1 799.7 L1068.4 797.6 L1067.8 795.5 L1067.1 793.2 L1066.6 790.9 L1066.1 788.5 L1065.6 786.1 L1065.3 783.6 L1065.2 781.2 L1065.1 778.7 L1065.2 775.9 L1065.3 772.8 L1065.5 769.5 L1065.8 766.1 L1066.1 762.6 L1066.5 759.0 L1067.0 755.4 L1067.5 751.9 L1068.2 748.3 L1069.0 744.9 L1069.9 741.5 L1070.8 738.4 L1071.9 735.4 L1073.1 732.7 L1074.5 730.1 L1076.0 727.6 L1077.6 725.0 L1079.5 722.5 L1081.4 720.1 L1083.5 717.7 L1085.7 715.3 L1087.9 713.0 L1090.3 710.8 L1092.7 708.6 L1095.1 706.5 L1097.6 704.3 L1100.0 702.2 L1102.3 700.1 L1104.6 698.1 L1107.2 696.1 L1110.0 694.1 L1112.9 692.1 L1116.0 690.2 L1119.1 688.2 L1122.2 686.4 L1125.3 684.5 L1128.2 682.8 L1130.9 681.1 L1133.4 679.5 L1135.6 678.0 L1137.4 676.5 L1138.8 675.3Z" fill="#4d7bf0"/><path d="M1137.9 715.8 L1136.0 717.4 L1133.8 719.5 L1131.5 722.1 L1128.9 725.0 L1126.2 728.2 L1123.4 731.7 L1120.4 735.3 L1117.5 739.1 L1114.5 743.0 L1111.8 747.0 L1109.1 750.9 L1106.5 754.7 L1103.9 758.3 L1101.5 761.6 L1099.0 764.8 L1096.4 768.2 L1093.6 771.6 L1090.8 775.0 L1087.9 778.5 L1085.1 781.9 L1082.3 785.2 L1079.5 788.4 L1076.9 791.5 L1074.4 794.3 L1072.2 797.0 L1070.1 799.3 L1068.4 801.4 L1066.9 803.1 L1074.9 809.7 L1076.3 808.1 L1078.0 806.1 L1080.0 803.7 L1082.3 801.1 L1084.7 798.2 L1087.4 795.2 L1090.1 791.9 L1093.0 788.6 L1095.9 785.1 L1098.8 781.6 L1101.7 778.1 L1104.5 774.6 L1107.2 771.2 L1109.7 767.8 L1112.3 764.4 L1114.9 760.7 L1117.6 756.8 L1120.4 752.8 L1123.1 748.8 L1125.6 744.6 L1128.0 740.3 L1130.2 736.2 L1132.3 732.2 L1134.2 728.5 L1135.9 725.0 L1137.3 721.8 L1138.3 718.9 L1139.1 716.6Z" fill="#4d7bf0"/><path d="M1058.7 528.8 L1057.4 529.5 L1056.2 530.6 L1054.9 531.8 L1053.5 533.2 L1051.9 534.7 L1050.3 536.5 L1048.6 538.3 L1046.9 540.3 L1045.1 542.5 L1043.3 544.7 L1041.5 547.1 L1039.8 549.6 L1038.1 552.3 L1036.5 555.0 L1034.9 557.8 L1033.2 560.8 L1031.5 564.0 L1029.7 567.3 L1028.0 570.9 L1026.4 574.6 L1024.8 578.4 L1023.2 582.2 L1021.7 586.0 L1020.3 589.8 L1019.1 593.6 L1018.0 597.3 L1017.1 600.9 L1016.4 604.4 L1015.8 607.9 L1015.5 611.2 L1015.2 614.6 L1015.2 617.9 L1015.2 621.1 L1015.4 624.3 L1015.6 627.5 L1016.0 630.6 L1016.4 633.7 L1017.0 636.7 L1017.6 639.7 L1018.3 642.5 L1019.1 645.3 L1019.9 648.1 L1020.8 650.9 L1022.0 653.6 L1023.2 656.3 L1024.5 658.9 L1026.0 661.5 L1027.5 663.9 L1029.0 666.3 L1030.6 668.6 L1032.2 670.8 L1033.8 673.0 L1035.4 675.1 L1036.9 677.0 L1038.4 678.9 L1039.8 680.7 L1041.3 682.5 L1042.9 684.3 L1044.6 686.0 L1046.2 687.6 L1047.9 689.1 L1049.5 690.6 L1051.1 692.0 L1052.8 693.1 L1054.5 693.9 L1056.2 694.6 L1057.7 695.2 L1059.2 695.6 L1060.5 695.8 L1062.1 695.5 L1062.3 695.3 L1062.3 693.6 L1061.8 692.3 L1061.1 691.0 L1060.1 689.6 L1059.1 688.2 L1058.0 686.7 L1056.7 685.3 L1055.2 684.1 L1053.7 682.7 L1052.2 681.4 L1050.7 679.9 L1049.2 678.4 L1047.9 676.9 L1046.6 675.3 L1045.2 673.6 L1043.7 671.7 L1042.2 669.8 L1040.7 667.8 L1039.2 665.8 L1037.7 663.7 L1036.2 661.5 L1034.8 659.3 L1033.4 657.1 L1032.1 654.8 L1030.9 652.5 L1029.9 650.2 L1028.9 647.9 L1028.1 645.5 L1027.4 643.0 L1026.7 640.4 L1026.0 637.7 L1025.5 635.0 L1025.0 632.3 L1024.5 629.5 L1024.2 626.7 L1024.0 623.8 L1023.8 620.9 L1023.8 617.9 L1023.9 615.0 L1024.1 612.0 L1024.4 609.0 L1024.8 606.0 L1025.5 602.9 L1026.3 599.6 L1027.3 596.2 L1028.5 592.6 L1029.8 589.0 L1031.2 585.4 L1032.7 581.7 L1034.3 578.1 L1035.9 574.5 L1037.5 571.0 L1038.9 567.5 L1040.3 564.2 L1041.7 561.1 L1042.9 558.2 L1044.1 555.6 L1045.4 553.0 L1046.8 550.4 L1048.1 548.0 L1049.5 545.6 L1050.9 543.3 L1052.3 541.1 L1053.6 539.0 L1054.8 537.0 L1056.0 535.2 L1057.0 533.5 L1057.9 531.9 L1058.6 530.4 L1058.9 529.0Z" fill="#e6e9d0"/><path d="M1067.3 560.1 L1067.6 561.6 L1068.4 563.4 L1069.3 565.3 L1070.4 567.4 L1071.7 569.7 L1073.0 572.2 L1074.4 574.7 L1075.9 577.3 L1077.3 580.0 L1078.7 582.6 L1080.1 585.3 L1081.3 587.8 L1082.4 590.3 L1083.4 592.7 L1084.4 595.1 L1085.3 597.5 L1086.2 600.0 L1087.2 602.4 L1088.1 604.8 L1089.1 607.2 L1089.9 609.6 L1090.7 612.0 L1091.3 614.4 L1091.9 616.8 L1092.4 619.2 L1092.8 621.5 L1093.0 623.8 L1093.2 626.1 L1093.2 628.4 L1093.1 630.8 L1092.9 633.1 L1092.6 635.5 L1092.2 637.9 L1091.8 640.3 L1091.2 642.6 L1090.6 645.0 L1089.8 647.4 L1089.0 649.7 L1088.1 652.1 L1087.1 654.4 L1086.0 656.7 L1084.9 658.9 L1083.6 661.2 L1082.1 663.5 L1080.3 666.0 L1078.4 668.5 L1076.3 671.0 L1074.1 673.5 L1071.9 676.0 L1069.7 678.4 L1067.5 680.7 L1065.5 682.9 L1063.9 685.1 L1062.8 687.4 L1062.0 689.6 L1062.1 691.9 L1062.3 692.1 L1064.6 691.9 L1066.6 691.0 L1068.8 689.7 L1071.0 688.0 L1073.0 685.8 L1075.2 683.5 L1077.4 681.0 L1079.7 678.5 L1082.0 675.8 L1084.2 673.1 L1086.3 670.4 L1088.2 667.7 L1090.0 665.1 L1091.5 662.5 L1092.8 660.0 L1093.9 657.4 L1095.0 654.9 L1096.0 652.3 L1096.9 649.7 L1097.7 647.1 L1098.4 644.5 L1099.1 641.8 L1099.6 639.2 L1100.0 636.5 L1100.3 633.9 L1100.5 631.2 L1100.6 628.6 L1100.6 625.9 L1100.5 623.2 L1100.2 620.5 L1099.8 617.8 L1099.2 615.2 L1098.6 612.5 L1097.8 609.9 L1097.0 607.3 L1096.1 604.7 L1095.1 602.1 L1094.1 599.6 L1093.1 597.1 L1091.9 594.6 L1090.8 592.3 L1089.6 589.9 L1088.3 587.4 L1086.8 584.9 L1085.2 582.3 L1083.5 579.8 L1081.8 577.2 L1080.0 574.7 L1078.2 572.3 L1076.4 569.9 L1074.7 567.7 L1073.0 565.7 L1071.5 563.9 L1070.1 562.2 L1068.8 560.9 L1067.5 559.9Z" fill="#e6e9d0"/><path d="M1055.2 596.5 L1054.4 597.8 L1053.6 599.4 L1052.8 601.3 L1052.0 603.4 L1051.1 605.8 L1050.1 608.3 L1049.2 611.0 L1048.3 613.9 L1047.5 616.9 L1046.8 620.0 L1046.2 623.2 L1045.9 626.5 L1045.7 629.8 L1045.8 633.2 L1046.1 636.7 L1046.7 640.5 L1047.4 644.5 L1048.3 648.8 L1049.3 653.2 L1050.4 657.6 L1051.5 661.9 L1052.7 666.2 L1053.8 670.3 L1054.9 674.2 L1055.9 677.7 L1056.7 680.8 L1058.2 683.3 L1060.4 685.0 L1060.6 685.0 L1061.7 682.4 L1061.7 679.5 L1060.9 676.3 L1059.9 672.8 L1058.8 668.9 L1057.7 664.9 L1056.5 660.6 L1055.4 656.3 L1054.3 652.0 L1053.4 647.7 L1052.5 643.6 L1051.8 639.7 L1051.3 636.1 L1051.0 632.8 L1050.9 629.8 L1051.0 626.8 L1051.3 623.8 L1051.6 620.8 L1052.0 617.8 L1052.5 614.8 L1053.0 612.0 L1053.5 609.3 L1054.1 606.6 L1054.6 604.2 L1055.0 602.0 L1055.4 599.9 L1055.6 598.1 L1055.4 596.5Z" fill="#e6e9d0"/><path d="M1157.5 653.7 L1157.3 655.6 L1157.6 657.6 L1158.1 660.0 L1158.7 662.5 L1159.4 665.3 L1160.2 668.3 L1160.9 671.4 L1161.7 674.6 L1162.4 678.0 L1163.0 681.4 L1163.5 684.9 L1163.9 688.5 L1164.2 692.0 L1164.2 695.6 L1164.2 699.4 L1164.0 703.5 L1163.9 707.8 L1163.6 712.3 L1163.3 717.0 L1163.1 721.7 L1162.7 726.4 L1162.3 731.2 L1161.7 735.8 L1161.0 740.3 L1160.1 744.7 L1159.2 748.8 L1158.0 752.6 L1156.7 756.1 L1155.3 759.3 L1153.6 762.5 L1151.8 765.5 L1149.9 768.4 L1147.8 771.2 L1145.5 773.9 L1143.2 776.6 L1140.7 779.1 L1138.1 781.5 L1135.4 783.8 L1132.6 786.0 L1129.8 788.1 L1126.9 790.2 L1124.0 792.1 L1120.9 793.9 L1117.5 795.5 L1113.8 797.1 L1109.7 798.6 L1105.6 800.1 L1101.3 801.4 L1097.0 802.6 L1092.8 803.7 L1088.7 804.8 L1084.9 805.8 L1081.3 806.7 L1078.1 807.5 L1075.3 808.2 L1073.1 808.9 L1075.7 817.7 L1077.8 817.1 L1080.4 816.4 L1083.5 815.6 L1087.1 814.7 L1091.0 813.7 L1095.1 812.6 L1099.5 811.5 L1103.9 810.2 L1108.4 808.8 L1112.8 807.3 L1117.2 805.7 L1121.3 803.9 L1125.3 802.0 L1128.8 799.9 L1132.1 797.8 L1135.2 795.6 L1138.3 793.3 L1141.3 790.9 L1144.2 788.3 L1147.1 785.7 L1149.9 782.9 L1152.5 780.0 L1155.0 776.9 L1157.4 773.7 L1159.6 770.4 L1161.7 766.9 L1163.6 763.3 L1165.3 759.5 L1166.8 755.5 L1168.0 751.2 L1169.1 746.6 L1170.1 741.9 L1170.8 737.1 L1171.4 732.2 L1171.9 727.2 L1172.3 722.3 L1172.5 717.3 L1172.5 712.5 L1172.4 707.9 L1172.3 703.4 L1172.0 699.2 L1171.8 695.2 L1171.4 691.4 L1170.7 687.5 L1169.9 683.7 L1169.0 680.1 L1167.9 676.6 L1166.8 673.2 L1165.6 669.9 L1164.3 666.9 L1163.1 664.0 L1161.9 661.4 L1160.8 659.0 L1159.7 656.9 L1158.8 655.1 L1157.7 653.7Z" fill="#e6e9d0"/><path d="M1138.4 674.5 L1136.5 674.7 L1134.4 675.3 L1131.9 676.1 L1129.1 677.0 L1126.1 678.1 L1122.8 679.3 L1119.5 680.6 L1116.1 682.0 L1112.6 683.5 L1109.1 685.1 L1105.7 686.8 L1102.5 688.6 L1099.3 690.5 L1096.4 692.4 L1093.7 694.4 L1091.0 696.4 L1088.4 698.6 L1085.8 700.9 L1083.2 703.2 L1080.7 705.7 L1078.2 708.2 L1075.8 710.8 L1073.5 713.5 L1071.2 716.2 L1069.1 719.1 L1067.2 722.1 L1065.4 725.1 L1063.8 728.3 L1062.3 731.6 L1061.0 735.1 L1059.9 738.7 L1058.9 742.4 L1058.1 746.2 L1057.3 750.1 L1056.7 753.9 L1056.2 757.8 L1055.8 761.5 L1055.5 765.2 L1055.2 768.8 L1055.0 772.2 L1054.9 775.5 L1054.8 778.6 L1054.8 781.6 L1055.0 784.6 L1055.4 787.6 L1055.9 790.5 L1056.5 793.2 L1057.1 795.9 L1057.9 798.4 L1058.6 800.7 L1059.3 802.9 L1060.0 805.0 L1060.6 806.8 L1061.1 808.4 L1061.5 809.7 L1061.8 810.8 L1069.6 808.8 L1069.3 807.5 L1068.8 805.9 L1068.2 804.2 L1067.6 802.4 L1066.9 800.4 L1066.3 798.3 L1065.6 796.1 L1064.9 793.8 L1064.3 791.4 L1063.8 788.9 L1063.4 786.4 L1063.0 783.8 L1062.9 781.3 L1062.8 778.6 L1062.9 775.8 L1063.0 772.6 L1063.2 769.3 L1063.5 765.9 L1063.8 762.4 L1064.2 758.7 L1064.7 755.1 L1065.3 751.5 L1066.0 747.9 L1066.7 744.3 L1067.6 740.9 L1068.7 737.7 L1069.8 734.6 L1071.0 731.7 L1072.4 729.0 L1074.0 726.3 L1075.8 723.7 L1077.6 721.1 L1079.7 718.6 L1081.8 716.2 L1084.0 713.7 L1086.3 711.4 L1088.7 709.1 L1091.2 706.9 L1093.6 704.7 L1096.1 702.6 L1098.6 700.4 L1101.0 698.4 L1103.4 696.4 L1106.1 694.4 L1109.0 692.5 L1112.1 690.6 L1115.2 688.7 L1118.4 686.8 L1121.6 685.1 L1124.7 683.4 L1127.7 681.7 L1130.5 680.2 L1133.0 678.7 L1135.3 677.4 L1137.2 676.1 L1138.6 674.7Z" fill="#e6e9d0"/><path d="M1138.4 716.1 L1136.5 717.8 L1134.6 720.0 L1132.4 722.7 L1130.1 725.8 L1127.6 729.1 L1124.9 732.7 L1122.1 736.5 L1119.3 740.3 L1116.4 744.3 L1113.7 748.3 L1111.0 752.2 L1108.3 756.0 L1105.8 759.6 L1103.3 763.0 L1100.8 766.2 L1098.2 769.6 L1095.4 773.0 L1092.6 776.5 L1089.7 780.0 L1086.8 783.4 L1084.0 786.7 L1081.3 789.9 L1078.6 793.0 L1076.2 795.8 L1073.9 798.5 L1071.9 800.8 L1070.1 802.9 L1068.7 804.5 L1073.1 808.3 L1074.5 806.6 L1076.2 804.6 L1078.2 802.2 L1080.5 799.6 L1083.0 796.7 L1085.6 793.7 L1088.4 790.4 L1091.2 787.1 L1094.1 783.6 L1097.0 780.2 L1099.9 776.6 L1102.7 773.2 L1105.4 769.7 L1107.9 766.4 L1110.4 763.0 L1113.0 759.4 L1115.7 755.5 L1118.5 751.5 L1121.2 747.5 L1123.8 743.4 L1126.3 739.2 L1128.7 735.2 L1130.9 731.3 L1133.0 727.7 L1134.9 724.3 L1136.5 721.3 L1137.8 718.6 L1138.6 716.3Z" fill="#e6e9d0"/><path d="M1052.8 541.5 L1050.7 544.4 L1048.5 547.5 L1046.4 550.8 L1044.3 554.3 L1042.3 558.0 L1040.4 562.0 L1038.2 566.4 L1036.0 571.1 L1033.7 576.1 L1031.5 581.2 L1029.4 586.3 L1027.5 591.5 L1025.8 596.5 L1024.5 601.2 L1023.5 605.7 L1022.9 610.0 L1022.6 614.3 L1022.4 618.5 L1022.6 622.7 L1022.9 626.8 L1023.4 630.8 L1024.0 634.7 L1024.8 638.6 L1025.8 642.3 L1026.8 645.9 L1028.0 649.3 L1029.5 652.6 L1031.2 655.9 L1033.1 659.1 L1035.1 662.3 L1037.2 665.3 L1039.3 668.2 L1041.5 671.0 L1043.6 673.6 L1045.5 676.1 L1047.4 678.4 L1049.4 680.6 L1051.6 682.6 L1053.7 684.6 L1055.8 686.4 L1057.9 688.0 L1059.8 689.6" fill="none" stroke="#4d7bf0" stroke-width="1.1"/><path d="M1037.4 555.4 L1035.4 559.5 L1033.2 564.0 L1030.9 568.8 L1028.6 573.8 L1026.4 579.0 L1024.2 584.3 L1022.3 589.6 L1020.5 594.8 L1019.1 599.9 L1018.1 604.8 L1017.4 609.4 L1017.0 614.0 L1016.9 618.5 L1017.0 623.0 L1017.4 627.3 L1017.9 631.6 L1018.6 635.8 L1019.5 639.8 L1020.5 643.8 L1021.6 647.6 L1022.9 651.3 L1024.5 655.0 L1026.4 658.6 L1028.4 662.0 L1030.5 665.3 L1032.7 668.5 L1034.9 671.5 L1037.1 674.4 L1039.2 677.1 L1041.2 679.6 L1043.3 682.1 L1045.5 684.4 L1047.8 686.6 L1050.0 688.7 L1052.3 690.6 L1054.4 692.3 L1056.3 693.9 L1058.0 695.2 L1059.4 696.4 L1060.5 697.3" fill="none" stroke="#4d7bf0" stroke-width="1.1"/><path d="M1034.2 582.3 L1032.2 587.4 L1030.3 592.5 L1028.7 597.3 L1027.4 602.0 L1026.5 606.2 L1025.9 610.4 L1025.5 614.5 L1025.4 618.5 L1025.5 622.5 L1025.8 626.5 L1026.3 630.4 L1027.0 634.2 L1027.7 637.9 L1028.7 641.5 L1029.7 645.0 L1030.8 648.2 L1032.2 651.4 L1033.8 654.5 L1035.6 657.6 L1037.6 660.6 L1039.6 663.6 L1041.7 666.4 L1043.8 669.2 L1045.9 671.8 L1047.8 674.2 L1049.6 676.4 L1051.6 678.5 L1053.6 680.4 L1055.7 682.3 L1057.7 684.1" fill="none" stroke="#4d7bf0" stroke-width="1.1"/><path d="M1051.2 528.4 L1049.5 530.6 L1047.5 533.1 L1045.3 535.9 L1043.1 539.0 L1040.7 542.3 L1038.4 545.9 L1036.1 549.7 L1034.0 553.7 L1032.0 557.8 L1029.8 562.3 L1027.5 567.2 L1025.2 572.3 L1022.9 577.6 L1020.7 582.9 L1018.7 588.4 L1016.9 593.7 L1015.4 599.0 L1014.3 604.1 L1013.6 609.0 L1013.2 613.8 L1013.1 618.5 L1013.2 623.2 L1013.6 627.7 L1014.1 632.2 L1014.8 636.5 L1015.7 640.7 L1016.8 644.8 L1017.9 648.8 L1019.4 652.8 L1021.1 656.7 L1023.0 660.4 L1025.1 664.0 L1027.3 667.5 L1029.6 670.7 L1031.9 673.8 L1034.1 676.7 L1036.2 679.4 L1038.3 682.0" fill="none" stroke="#4d7bf0" stroke-width="1.1"/><path d="M1019.6 614.1 L1019.5 618.5 L1019.6 622.8 L1019.9 627.1 L1020.4 631.2 L1021.1 635.3 L1021.9 639.3 L1022.9 643.1 L1024.0 646.8 L1025.3 650.4 L1026.8 653.9 L1028.6 657.4 L1030.6 660.7 L1032.6 663.9 L1034.8 667.0 L1037.0 670.0 L1039.1 672.8 L1041.2 675.5 L1043.2 678.0 L1045.2 680.4 L1047.3 682.6 L1049.5 684.8 L1051.7 686.8 L1053.9 688.6 L1056.0 690.4 L1057.9 691.9 L1059.6 693.3 L1061.1 694.4 L1062.2 695.4" fill="none" stroke="#4d7bf0" stroke-width="1.1"/><path d="M1076.3 568.7 L1078.5 572.1 L1080.8 575.6 L1083.1 579.3 L1085.2 583.0 L1087.2 586.7 L1088.9 590.2 L1090.4 593.6 L1091.9 597.0 L1093.3 600.5 L1094.7 604.0 L1095.9 607.6 L1097.1 611.2 L1098.0 614.9 L1098.8 618.6 L1099.3 622.2 L1099.5 625.9 L1099.5 629.6 L1099.3 633.2 L1098.8 636.9 L1098.2 640.6 L1097.4 644.2 L1096.4 647.8 L1095.2 651.4 L1093.8 655.0 L1092.2 658.5 L1090.5 662.0 L1088.4 665.5 L1085.8 669.2 L1082.9 673.0 L1079.8 676.7 L1076.6 680.3 L1073.5 683.7 L1070.5 686.8 L1067.9 689.6" fill="none" stroke="#4d7bf0" stroke-width="1.1"/><path d="M1081.0 585.4 L1082.9 588.9 L1084.5 592.2 L1085.9 595.5 L1087.4 598.9 L1088.8 602.3 L1090.1 605.7 L1091.3 609.1 L1092.4 612.6 L1093.3 616.0 L1094.0 619.4 L1094.4 622.7 L1094.7 626.1 L1094.6 629.4 L1094.4 632.8 L1094.0 636.2 L1093.4 639.6 L1092.6 643.0 L1091.7 646.4 L1090.6 649.8 L1089.3 653.1 L1087.8 656.4 L1086.2 659.6 L1084.3 662.9 L1081.9 666.3 L1079.1 669.9 L1076.1 673.5 L1073.0 677.0 L1069.9 680.4 L1067.0 683.5 L1064.4 686.3 L1062.2 688.6 L1060.5 690.5" fill="none" stroke="#4d7bf0" stroke-width="1.1"/><path d="M1094.3 596.0 L1095.7 599.5 L1097.1 603.1 L1098.4 606.8 L1099.6 610.5 L1100.6 614.3 L1101.4 618.1 L1101.9 622.0 L1102.1 625.8 L1102.1 629.7 L1101.9 633.5 L1101.4 637.3 L1100.8 641.1 L1099.9 644.9 L1098.9 648.6 L1097.6 652.3 L1096.2 656.0 L1094.6 659.6 L1092.8 663.2 L1090.6 667.0 L1087.9 670.8 L1084.9 674.6 L1081.8 678.4 L1078.6 682.0 L1075.4 685.5" fill="none" stroke="#4d7bf0" stroke-width="1.1"/><path d="M1065.5 567.3 L1067.3 570.1 L1069.4 573.2 L1071.6 576.5 L1073.8 580.0 L1076.0 583.6 L1078.0 587.1 L1079.8 590.5 L1081.4 593.7 L1082.8 596.9 L1084.3 600.2 L1085.6 603.5 L1086.9 606.9 L1088.1 610.2 L1089.1 613.5 L1090.0 616.8 L1090.6 620.0 L1091.1 623.1 L1091.3 626.2 L1091.3 629.3 L1091.1 632.5 L1090.7 635.7 L1090.1 638.9 L1089.4 642.2 L1088.5 645.4 L1087.4 648.6 L1086.2 651.8 L1084.8 655.0 L1083.3 658.0 L1081.5 661.1 L1079.2 664.3" fill="none" stroke="#4d7bf0" stroke-width="1.1"/><path d="M1096.2 619.0 L1096.7 622.5 L1096.9 626.0 L1096.9 629.5 L1096.7 633.0 L1096.2 636.5 L1095.6 640.0 L1094.8 643.6 L1093.8 647.1 L1092.7 650.5 L1091.4 654.0 L1089.9 657.4 L1088.2 660.7 L1086.2 664.1 L1083.7 667.7 L1080.9 671.3 L1077.8 675.0 L1074.7 678.5 L1071.6 681.9 L1068.6 685.0 L1066.0 687.8 L1063.8 690.2 L1062.2 692.0" fill="none" stroke="#4d7bf0" stroke-width="1.1"/><path d="M1084.3 573.4 L1086.6 577.2 L1088.8 581.0 L1090.9 584.8 L1092.6 588.5 L1094.2 591.9 L1095.7 595.4 L1097.1 599.0 L1098.5 602.6 L1099.8 606.3 L1101.0 610.1 L1102.0 613.9 L1102.8 617.9 L1103.4 621.8 L1103.6 625.8 L1103.6 629.7 L1103.4 633.6 L1102.9 637.5 L1102.2 641.4 L1101.4 645.2 L1100.3 649.0 L1099.0 652.8 L1097.6 656.6 L1096.0 660.2 L1094.1 663.9 L1091.9 667.8 L1089.1 671.7 L1086.1 675.6 L1082.9 679.4 L1079.7 683.0 L1076.5 686.5" fill="none" stroke="#4d7bf0" stroke-width="1.1"/><path d="M1084.7 578.4 L1086.9 582.1 L1088.9 585.8 L1090.6 589.4 L1092.1 592.8 L1093.6 596.3 L1095.0 599.8 L1096.4 603.4 L1097.7 607.0 L1098.9 610.7 L1099.8 614.5 L1100.6 618.2 L1101.1 622.1 L1101.4 625.9 L1101.4 629.6 L1101.1 633.4 L1100.7 637.2 L1100.0 640.9 L1099.2 644.7 L1098.1 648.4 L1096.9 652.1 L1095.5 655.7 L1093.9 659.3 L1092.2 662.9 L1090.0 666.6 L1087.3 670.4 L1084.4 674.2 L1081.2 677.9 L1078.0 681.5 L1074.9 685.0 L1071.9 688.1" fill="none" stroke="#4d7bf0" stroke-width="1.1"/><path d="M1087.9 586.4 L1089.6 589.9 L1091.1 593.3 L1092.6 596.7 L1094.0 600.2 L1095.4 603.8 L1096.6 607.4 L1097.8 611.0 L1098.7 614.7 L1099.5 618.4 L1100.0 622.2 L1100.3 625.9 L1100.3 629.6 L1100.0 633.3 L1099.6 637.0 L1098.9 640.7 L1098.1 644.4 L1097.1 648.1 L1095.9 651.7 L1094.5 655.3 L1092.9 658.8 L1091.2 662.3 L1089.0 665.9 L1086.4 669.7 L1083.5 673.4 L1080.4 677.2 L1077.2 680.8 L1074.0 684.2 L1071.1 687.3 L1068.5 690.1" fill="none" stroke="#4d7bf0" stroke-width="1.1"/><path d="M1079.5 576.4 L1081.8 580.1 L1083.9 583.8 L1085.9 587.4 L1087.5 590.8 L1089.0 594.2 L1090.5 597.6 L1091.9 601.0 L1093.3 604.5 L1094.5 608.1 L1095.6 611.6 L1096.6 615.2 L1097.3 618.8 L1097.8 622.4 L1098.0 626.0 L1098.0 629.5 L1097.8 633.1 L1097.4 636.7 L1096.7 640.3 L1095.9 643.8 L1094.9 647.4 L1093.7 650.9 L1092.4 654.4 L1090.9 657.8 L1089.2 661.2 L1087.1 664.7 L1084.6 668.3 L1081.7 672.0 L1078.6 675.7 L1075.5 679.3 L1072.4 682.7" fill="none" stroke="#4d7bf0" stroke-width="1.1"/><path d="M1082.0 584.9 L1083.9 588.4 L1085.5 591.8 L1086.9 595.1 L1088.4 598.5 L1089.8 601.9 L1091.1 605.3 L1092.4 608.8 L1093.5 612.3 L1094.4 615.7 L1095.1 619.2 L1095.6 622.6 L1095.8 626.0 L1095.8 629.4 L1095.5 632.9 L1095.1 636.4 L1094.5 639.8 L1093.7 643.3 L1092.8 646.7 L1091.6 650.2 L1090.3 653.5 L1088.8 656.9 L1087.2 660.2 L1085.2 663.5 L1082.8 667.0 L1080.0 670.6 L1076.9 674.2 L1073.8 677.8 L1070.7 681.1 L1067.8 684.2" fill="none" stroke="#4d7bf0" stroke-width="1.1"/><path d="M1075.7 578.8 L1077.9 582.4 L1080.0 586.0 L1081.9 589.4 L1083.4 592.7 L1084.9 596.0 L1086.3 599.3 L1087.7 602.7 L1089.0 606.1 L1090.2 609.5 L1091.3 612.9 L1092.2 616.3 L1092.9 619.6 L1093.3 622.9 L1093.5 626.1 L1093.5 629.4 L1093.3 632.7 L1092.9 636.0 L1092.3 639.4 L1091.6 642.7 L1090.6 646.1 L1089.5 649.4 L1088.2 652.7 L1086.8 655.9 L1085.2 659.1 L1083.3 662.3 L1081.0 665.7 L1078.2 669.2 L1075.2 672.8 L1072.1 676.3 L1069.1 679.6 L1066.2 682.7 L1063.5 685.5" fill="none" stroke="#4d7bf0" stroke-width="1.1"/><path d="M1076.9 583.0 L1079.0 586.5 L1080.8 589.9 L1082.4 593.2 L1083.9 596.4 L1085.3 599.8 L1086.7 603.1 L1088.0 606.5 L1089.2 609.9 L1090.2 613.2 L1091.1 616.5 L1091.7 619.8 L1092.2 623.0 L1092.4 626.1 L1092.4 629.3 L1092.2 632.6 L1091.8 635.9 L1091.2 639.2 L1090.5 642.5 L1089.5 645.7 L1088.4 649.0 L1087.2 652.3 L1085.8 655.5 L1084.2 658.5 L1082.4 661.7 L1080.1 665.0 L1077.4 668.5 L1074.4 672.0 L1071.3 675.5 L1068.3 678.8" fill="none" stroke="#4d7bf0" stroke-width="1.1"/><path d="M1078.8 591.0 L1080.4 594.1 L1081.8 597.3 L1083.2 600.6 L1084.6 604.0 L1085.9 607.3 L1087.0 610.6 L1088.0 613.8 L1088.9 617.0 L1089.5 620.2 L1090.0 623.2 L1090.2 626.2 L1090.1 629.3 L1089.9 632.4 L1089.6 635.5 L1089.0 638.7 L1088.3 641.9 L1087.4 645.1 L1086.3 648.3 L1085.1 651.4 L1083.7 654.5 L1082.3 657.5 L1080.5 660.4 L1078.3 663.7 L1075.6 667.1 L1072.7 670.6 L1069.6 674.0 L1066.6 677.3 L1063.7 680.4" fill="none" stroke="#4d7bf0" stroke-width="1.1"/><path d="M1083.3 574.0 L1085.6 577.8 L1087.8 581.6 L1089.9 585.3 L1091.6 588.9 L1093.1 592.4 L1094.6 595.8 L1096.1 599.4 L1097.5 603.0 L1098.8 606.7 L1099.9 610.4 L1100.9 614.2 L1101.7 618.0 L1102.3 621.9 L1102.5 625.8 L1102.5 629.7 L1102.3 633.5 L1101.8 637.3 L1101.1 641.1 L1100.3 644.9 L1099.2 648.7 L1098.0 652.4 L1096.6 656.1 L1094.9 659.8 L1093.1 663.4 L1090.9 667.2 L1088.2 671.0 L1085.2 674.9 L1082.1 678.6 L1078.8 682.3 L1075.7 685.7 L1072.7 688.9 L1070.1 691.6" fill="none" stroke="#4d7bf0" stroke-width="1.1"/><path d="M1078.0 587.1 L1079.8 590.5 L1081.4 593.7 L1082.8 596.9 L1084.3 600.2 L1085.6 603.5 L1086.9 606.9 L1088.1 610.2 L1089.1 613.5 L1090.0 616.8 L1090.6 620.0 L1091.1 623.1 L1091.3 626.2 L1091.3 629.3 L1091.1 632.5 L1090.7 635.7 L1090.1 638.9 L1089.4 642.2 L1088.5 645.4 L1087.4 648.6 L1086.2 651.8 L1084.8 655.0 L1083.3 658.0 L1081.5 661.1 L1079.2 664.3 L1076.5 667.8 L1073.5 671.3 L1070.5 674.8 L1067.4 678.1" fill="none" stroke="#4d7bf0" stroke-width="1.1"/><path d="M1078.3 577.2 L1080.5 580.9 L1082.6 584.5 L1084.5 588.1 L1086.2 591.5 L1087.6 594.8 L1089.1 598.2 L1090.5 601.6 L1091.9 605.1 L1093.1 608.6 L1094.2 612.1 L1095.1 615.6 L1095.8 619.1 L1096.3 622.6 L1096.5 626.0 L1096.5 629.5 L1096.3 633.0 L1095.9 636.5 L1095.3 640.0 L1094.5 643.5 L1093.5 647.0 L1092.3 650.4 L1091.0 653.8 L1089.5 657.2 L1087.9 660.5 L1085.9 663.9 L1083.4 667.5 L1080.6 671.1 L1077.5 674.7 L1074.4 678.3 L1071.3 681.6 L1068.4 684.8" fill="none" stroke="#4d7bf0" stroke-width="1.1"/><path d="M1082.7 579.5 L1084.9 583.2 L1086.9 586.9 L1088.5 590.4 L1090.0 593.7 L1091.5 597.1 L1093.0 600.6 L1094.3 604.2 L1095.6 607.7 L1096.7 611.3 L1097.6 615.0 L1098.4 618.6 L1098.9 622.3 L1099.1 625.9 L1099.1 629.6 L1098.9 633.2 L1098.5 636.8 L1097.8 640.5 L1097.0 644.1 L1096.0 647.7 L1094.8 651.3 L1093.4 654.8 L1091.9 658.3 L1090.2 661.8 L1088.1 665.3 L1085.5 669.0 L1082.6 672.7 L1079.5 676.4 L1076.3 680.0 L1073.2 683.4 L1070.3 686.6 L1067.7 689.3" fill="none" stroke="#4d7bf0" stroke-width="1.1"/><path d="M1082.9 588.9 L1084.5 592.2 L1085.9 595.5 L1087.4 598.9 L1088.8 602.3 L1090.1 605.7 L1091.3 609.1 L1092.4 612.6 L1093.3 616.0 L1094.0 619.4 L1094.4 622.7 L1094.7 626.1 L1094.6 629.4 L1094.4 632.8 L1094.0 636.2 L1093.4 639.6 L1092.6 643.0 L1091.7 646.4 L1090.6 649.8 L1089.3 653.1 L1087.8 656.4 L1086.2 659.6 L1084.3 662.9 L1081.9 666.3 L1079.1 669.9 L1076.1 673.5 L1073.0 677.0 L1069.9 680.4" fill="none" stroke="#4d7bf0" stroke-width="1.1"/><path d="M1055.9 601.8 L1055.0 604.8 L1054.0 608.3 L1053.0 612.0 L1052.0 615.9 L1051.2 620.1 L1050.6 624.3 L1050.3 628.6 L1050.3 632.9 L1050.8 637.5 L1051.7 642.9 L1052.9 648.7 L1054.3 654.7 L1055.9 660.8 L1057.5 666.7 L1059.0 672.2 L1060.4 677.2 L1061.6 681.3" fill="none" stroke="#4d7bf0" stroke-width="1.1"/><path d="M1050.5 607.3 L1049.5 611.1 L1048.5 615.2 L1047.7 619.5 L1047.0 623.9 L1046.7 628.5 L1046.8 633.1 L1047.3 638.0 L1048.2 643.5 L1049.4 649.5 L1050.9 655.6 L1052.4 661.7 L1054.0 667.6 L1055.6 673.2 L1057.0 678.1 L1058.1 682.3 L1058.9 685.4" fill="none" stroke="#4d7bf0" stroke-width="1.1"/><path d="M1053.9 616.4 L1053.1 620.4 L1052.5 624.5 L1052.2 628.7 L1052.2 632.8 L1052.7 637.3 L1053.6 642.5 L1054.8 648.3 L1056.2 654.3 L1057.7 660.3 L1059.3 666.2 L1060.9 671.7 L1062.3 676.6" fill="none" stroke="#4d7bf0" stroke-width="1.1"/><path d="M1050.8 597.6 L1050.1 600.1 L1049.2 603.1 L1048.2 606.6 L1047.1 610.5 L1046.1 614.7 L1045.2 619.1 L1044.6 623.7 L1044.2 628.4 L1044.3 633.2 L1044.8 638.4 L1045.7 644.0 L1047.0 650.0 L1048.4 656.2 L1050.0 662.3 L1051.6 668.3" fill="none" stroke="#4d7bf0" stroke-width="1.1"/><path d="M1048.4 628.6 L1048.4 633.0 L1048.9 637.8 L1049.8 643.2 L1051.0 649.1 L1052.5 655.2 L1054.0 661.3 L1055.6 667.2 L1057.2 672.7 L1058.6 677.7 L1059.7 681.8 L1060.5 685.0" fill="none" stroke="#4d7bf0" stroke-width="1.1"/><path d="M1164.8 665.4 L1166.2 669.7 L1167.6 674.4 L1168.9 679.3 L1170.0 684.5 L1170.7 689.9 L1171.1 695.2 L1171.3 700.9 L1171.3 707.0 L1171.2 713.5 L1170.9 720.2 L1170.5 727.1 L1169.7 734.0 L1168.8 740.7 L1167.5 747.2 L1165.9 753.4 L1163.9 759.0 L1161.5 764.1 L1158.8 769.0 L1155.8 773.5 L1152.4 777.8 L1148.8 781.9 L1145.0 785.7 L1141.0 789.2 L1136.8 792.6 L1132.5 795.7 L1128.0 798.7 L1123.1 801.5 L1117.5 804.0 L1111.5 806.2 L1105.3 808.3 L1099.1 810.1 L1093.1 811.7 L1087.5 813.1 L1082.5 814.3" fill="none" stroke="#4d7bf0" stroke-width="1.1"/><path d="M1164.2 685.5 L1164.9 690.5 L1165.3 695.5 L1165.4 700.9 L1165.5 706.9 L1165.3 713.3 L1165.1 719.9 L1164.6 726.6 L1163.9 733.3 L1163.0 739.8 L1161.8 745.9 L1160.3 751.7 L1158.5 756.8 L1156.3 761.5 L1153.8 765.9 L1151.0 770.1 L1147.9 774.1 L1144.6 777.9 L1141.0 781.4 L1137.2 784.8 L1133.2 787.9 L1129.1 790.9 L1125.0 793.7 L1120.5 796.2 L1115.3 798.6 L1109.5 800.7 L1103.6 802.7 L1097.5 804.4 L1091.6 806.0 L1086.1 807.4 L1081.1 808.7 L1076.9 809.8 L1073.6 810.7" fill="none" stroke="#4d7bf0" stroke-width="1.1"/><path d="M1174.5 707.0 L1174.3 713.5 L1174.1 720.4 L1173.6 727.4 L1172.9 734.4 L1171.9 741.3 L1170.6 747.9 L1168.9 754.3 L1166.8 760.2 L1164.3 765.6 L1161.5 770.6 L1158.3 775.4 L1154.8 779.9 L1151.1 784.1 L1147.1 788.0 L1143.0 791.7 L1138.7 795.1 L1134.3 798.3 L1129.7 801.4 L1124.5 804.3 L1118.7 806.9 L1112.5 809.2 L1106.2 811.3 L1099.9 813.1 L1093.9 814.7" fill="none" stroke="#4d7bf0" stroke-width="1.1"/><path d="M1152.9 661.2 L1154.1 664.7 L1155.4 668.5 L1156.8 672.7 L1158.1 677.0 L1159.3 681.6 L1160.2 686.2 L1160.9 690.9 L1161.3 695.7 L1161.4 701.0 L1161.4 706.9 L1161.3 713.2 L1161.0 719.7 L1160.6 726.2 L1159.9 732.8 L1159.0 739.1 L1157.9 745.0 L1156.4 750.5 L1154.7 755.3 L1152.7 759.6 L1150.4 763.8 L1147.7 767.7 L1144.8 771.5 L1141.6 775.1 L1138.2 778.5 L1134.6 781.7 L1130.8 784.7 L1126.8 787.6 L1122.9 790.2 L1118.6 792.6 L1113.7 794.8" fill="none" stroke="#4d7bf0" stroke-width="1.1"/><path d="M1164.4 746.5 L1162.9 752.4 L1161.0 757.8 L1158.7 762.7 L1156.1 767.3 L1153.2 771.7 L1150.0 775.8 L1146.5 779.7 L1142.8 783.4 L1138.9 786.8 L1134.9 790.1 L1130.7 793.1 L1126.4 796.0 L1121.7 798.7 L1116.3 801.1 L1110.4 803.3 L1104.4 805.3 L1098.2 807.0 L1092.3 808.6 L1086.7 810.0 L1081.8 811.3 L1077.6 812.4 L1074.4 813.3" fill="none" stroke="#4d7bf0" stroke-width="1.1"/><path d="M1126.2 683.3 L1121.8 685.4 L1117.2 687.6 L1112.6 690.0 L1108.2 692.4 L1104.1 695.0 L1100.4 697.6 L1096.9 700.4 L1093.3 703.3 L1089.8 706.4 L1086.4 709.6 L1083.1 712.9 L1080.0 716.3 L1077.1 719.9 L1074.4 723.5 L1072.0 727.3 L1069.9 731.2 L1068.2 735.4 L1066.7 739.9 L1065.4 744.7 L1064.3 749.8 L1063.5 754.9 L1062.8 760.1 L1062.3 765.1 L1062.0 769.9 L1061.7 774.5 L1061.6 778.6 L1061.7 782.4 L1062.1 786.1 L1062.7 789.7 L1063.5 793.1 L1064.4 796.5 L1065.4 799.5 L1066.3 802.4 L1067.2 805.0" fill="none" stroke="#4d7bf0" stroke-width="1.1"/><path d="M1105.5 688.0 L1101.2 690.7 L1097.3 693.5 L1093.6 696.4 L1090.0 699.4 L1086.4 702.5 L1082.8 705.8 L1079.4 709.3 L1076.1 712.9 L1073.0 716.7 L1070.1 720.6 L1067.5 724.7 L1065.2 729.0 L1063.3 733.5 L1061.7 738.4 L1060.3 743.5 L1059.2 748.8 L1058.3 754.2 L1057.7 759.5 L1057.1 764.7 L1056.8 769.6 L1056.5 774.3 L1056.4 778.6 L1056.5 782.7 L1056.9 786.8 L1057.6 790.7 L1058.4 794.4 L1059.4 797.9 L1060.4 801.1 L1061.4 804.0 L1062.2 806.6 L1062.9 808.7 L1063.4 810.4" fill="none" stroke="#4d7bf0" stroke-width="1.1"/><path d="M1095.2 705.5 L1091.7 708.5 L1088.4 711.6 L1085.2 714.8 L1082.1 718.2 L1079.3 721.6 L1076.7 725.1 L1074.4 728.7 L1072.5 732.4 L1070.8 736.3 L1069.3 740.7 L1068.1 745.4 L1067.1 750.3 L1066.3 755.3 L1065.6 760.4 L1065.1 765.3 L1064.8 770.1 L1064.5 774.6 L1064.4 778.6 L1064.5 782.2 L1064.8 785.7 L1065.4 789.1 L1066.2 792.5 L1067.1 795.7 L1068.0 798.7" fill="none" stroke="#4d7bf0" stroke-width="1.1"/><path d="M1130.5 671.7 L1126.8 673.4 L1122.5 675.3 L1118.0 677.4 L1113.2 679.7 L1108.4 682.2 L1103.7 684.9 L1099.2 687.7 L1095.1 690.6 L1091.3 693.6 L1087.6 696.6 L1084.0 699.9 L1080.3 703.3 L1076.8 706.8 L1073.3 710.6 L1070.1 714.5 L1067.1 718.6 L1064.4 722.9 L1062.0 727.4 L1059.9 732.3 L1058.2 737.4 L1056.8 742.7 L1055.7 748.2 L1054.8 753.6 L1054.1 759.1 L1053.5 764.3 L1053.2 769.4 L1052.9 774.1 L1052.8 778.6 L1052.9 782.9 L1053.4 787.3" fill="none" stroke="#4d7bf0" stroke-width="1.1"/><path d="M1072.1 722.0 L1069.6 725.9 L1067.4 730.0 L1065.6 734.4 L1064.0 739.1 L1062.7 744.1 L1061.6 749.3 L1060.7 754.5 L1060.0 759.7 L1059.5 764.9 L1059.2 769.8 L1058.9 774.4 L1058.8 778.6 L1058.9 782.6 L1059.3 786.5 L1059.9 790.2 L1060.8 793.8 L1061.7 797.2 L1062.7 800.4 L1063.6 803.3 L1064.5 805.8 L1065.2 808.0 L1065.7 809.8" fill="none" stroke="#4d7bf0" stroke-width="1.1"/><path d="M1119.1 691.5 L1114.7 693.8 L1110.4 696.2 L1106.5 698.7 L1103.0 701.1 L1099.7 703.8 L1096.2 706.7 L1092.8 709.7 L1089.5 712.8 L1086.3 715.9 L1083.3 719.2 L1080.5 722.6 L1078.0 726.0 L1075.8 729.5 L1073.9 733.1 L1072.3 736.9 L1070.9 741.2 L1069.7 745.8 L1068.7 750.6 L1067.8 755.6 L1067.2 760.6 L1066.7 765.5 L1066.4 770.2 L1066.1 774.7 L1066.0 778.6 L1066.1 782.1 L1066.4 785.5 L1067.0 788.8 L1067.8 792.1 L1068.6 795.2 L1069.5 798.2" fill="none" stroke="#4d7bf0" stroke-width="1.1"/><path d="M1113.5 691.7 L1109.2 694.2 L1105.2 696.7 L1101.6 699.2 L1098.1 702.0 L1094.6 704.9 L1091.2 707.9 L1087.8 711.0 L1084.6 714.3 L1081.5 717.6 L1078.6 721.1 L1076.0 724.7 L1073.7 728.3 L1071.7 732.1 L1070.0 736.1 L1068.6 740.5 L1067.3 745.2 L1066.3 750.2 L1065.5 755.2 L1064.8 760.3 L1064.3 765.3 L1064.0 770.1 L1063.7 774.6 L1063.6 778.6 L1063.7 782.3 L1064.1 785.8 L1064.7 789.3 L1065.4 792.7 L1066.3 795.9 L1067.3 798.9 L1068.2 801.8" fill="none" stroke="#4d7bf0" stroke-width="1.1"/><path d="M1104.5 695.7 L1100.9 698.3 L1097.4 701.0 L1093.9 704.0 L1090.4 707.0 L1087.0 710.2 L1083.7 713.4 L1080.6 716.8 L1077.7 720.4 L1075.0 724.0 L1072.7 727.7 L1070.7 731.5 L1068.9 735.6 L1067.4 740.1 L1066.2 744.9 L1065.1 749.9 L1064.3 755.0 L1063.6 760.2 L1063.1 765.2 L1062.8 770.0 L1062.5 774.5 L1062.4 778.6 L1062.5 782.3 L1062.9 786.0 L1063.5 789.5 L1064.3 793.0 L1065.2 796.2 L1066.1 799.3 L1067.1 802.1 L1067.9 804.7" fill="none" stroke="#4d7bf0" stroke-width="1.1"/><path d="M1116.5 686.2 L1111.8 688.5 L1107.4 691.1 L1103.2 693.7 L1099.4 696.4 L1095.9 699.2 L1092.3 702.1 L1088.8 705.2 L1085.3 708.4 L1082.0 711.8 L1078.8 715.3 L1075.8 718.9 L1073.1 722.6 L1070.6 726.5 L1068.5 730.5 L1066.7 734.8 L1065.1 739.4 L1063.8 744.4 L1062.8 749.5 L1061.9 754.7 L1061.2 759.9 L1060.7 765.0 L1060.4 769.8 L1060.1 774.4 L1060.0 778.6 L1060.1 782.5 L1060.5 786.3 L1061.1 790.0 L1061.9 793.5 L1062.9 796.9 L1063.8 800.0" fill="none" stroke="#4d7bf0" stroke-width="1.1"/><path d="M1106.1 689.0 L1101.8 691.7 L1098.0 694.4 L1094.4 697.3 L1090.8 700.3 L1087.2 703.4 L1083.6 706.7 L1080.2 710.1 L1077.0 713.7 L1073.9 717.4 L1071.1 721.3 L1068.5 725.3 L1066.3 729.5 L1064.4 733.9 L1062.8 738.8 L1061.5 743.8 L1060.4 749.0 L1059.5 754.3 L1058.8 759.6 L1058.3 764.8 L1058.0 769.7 L1057.7 774.3 L1057.6 778.6 L1057.7 782.6 L1058.1 786.6 L1058.8 790.5 L1059.6 794.1 L1060.6 797.6 L1061.6 800.8 L1062.5 803.7" fill="none" stroke="#4d7bf0" stroke-width="1.1"/><path d="M1114.3 681.9 L1109.6 684.3 L1104.9 686.9 L1100.5 689.7 L1096.5 692.5 L1092.9 695.4 L1089.2 698.5 L1085.6 701.7 L1082.0 705.0 L1078.5 708.5 L1075.2 712.1 L1072.0 715.9 L1069.1 719.9 L1066.5 724.1 L1064.1 728.5 L1062.2 733.1 L1060.5 738.1 L1059.2 743.3 L1058.0 748.6 L1057.2 754.0 L1056.5 759.3 L1055.9 764.5 L1055.6 769.5 L1055.3 774.2 L1055.2 778.6 L1055.3 782.8 L1055.7 786.9 L1056.4 790.9 L1057.3 794.7 L1058.3 798.2 L1059.3 801.5 L1060.2 804.4 L1061.1 807.0" fill="none" stroke="#4d7bf0" stroke-width="1.1"/><path d="M1109.0 683.3 L1104.3 685.9 L1099.8 688.7 L1095.8 691.6 L1092.1 694.5 L1088.4 697.6 L1084.8 700.8 L1081.1 704.1 L1077.6 707.6 L1074.3 711.3 L1071.1 715.2 L1068.1 719.3 L1065.4 723.5 L1063.1 727.9 L1061.1 732.7 L1059.4 737.7 L1058.0 743.0 L1056.9 748.4 L1056.0 753.8 L1055.3 759.2 L1054.7 764.4 L1054.4 769.5 L1054.1 774.2 L1054.0 778.6 L1054.1 782.9 L1054.5 787.1 L1055.2 791.2 L1056.1 795.0 L1057.1 798.6 L1058.1 801.9" fill="none" stroke="#4d7bf0" stroke-width="1.1"/><path d="M1098.5 686.7 L1094.4 689.7 L1090.6 692.6 L1086.9 695.7 L1083.1 699.0 L1079.5 702.4 L1075.9 706.0 L1072.4 709.8 L1069.2 713.7 L1066.1 717.9 L1063.3 722.3 L1060.9 726.9 L1058.8 731.8 L1057.1 737.1 L1055.7 742.4 L1054.5 747.9 L1053.6 753.5 L1052.9 758.9 L1052.4 764.2 L1052.0 769.3 L1051.7 774.1 L1051.6 778.6 L1051.7 783.0 L1052.2 787.4 L1052.9 791.6 L1053.8 795.6 L1054.8 799.3 L1055.8 802.6 L1056.8 805.6" fill="none" stroke="#4d7bf0" stroke-width="1.1"/><path d="M1118.6 690.5 L1114.1 692.8 L1109.8 695.2 L1105.8 697.7 L1102.3 700.2 L1098.9 702.9 L1095.4 705.8 L1092.0 708.8 L1088.6 711.9 L1085.4 715.1 L1082.4 718.4 L1079.6 721.8 L1077.0 725.3 L1074.8 728.9 L1072.8 732.6 L1071.2 736.5 L1069.7 740.8 L1068.5 745.5 L1067.5 750.4 L1066.6 755.4 L1066.0 760.4 L1065.5 765.4 L1065.2 770.1 L1064.9 774.6 L1064.8 778.6 L1064.9 782.2 L1065.2 785.6 L1065.8 789.0 L1066.6 792.4 L1067.5 795.6 L1068.4 798.6 L1069.3 801.4 L1070.2 803.9" fill="none" stroke="#4d7bf0" stroke-width="1.1"/><path d="M1103.7 684.9 L1099.2 687.7 L1095.1 690.6 L1091.3 693.6 L1087.6 696.6 L1084.0 699.9 L1080.3 703.3 L1076.8 706.8 L1073.3 710.6 L1070.1 714.5 L1067.1 718.6 L1064.4 722.9 L1062.0 727.4 L1059.9 732.3 L1058.2 737.4 L1056.8 742.7 L1055.7 748.2 L1054.8 753.6 L1054.1 759.1 L1053.5 764.3 L1053.2 769.4 L1052.9 774.1 L1052.8 778.6 L1052.9 782.9 L1053.4 787.3 L1054.1 791.4 L1055.0 795.3 L1056.0 798.9 L1057.0 802.2" fill="none" stroke="#4d7bf0" stroke-width="1.1"/><path d="M1115.7 684.7 L1111.1 687.1 L1106.5 689.7 L1102.3 692.3 L1098.5 695.1 L1094.9 697.9 L1091.3 700.9 L1087.7 704.0 L1084.2 707.3 L1080.8 710.7 L1077.6 714.2 L1074.5 717.9 L1071.7 721.7 L1069.2 725.7 L1067.0 729.8 L1065.2 734.2 L1063.6 739.0 L1062.3 744.0 L1061.2 749.2 L1060.3 754.5 L1059.6 759.7 L1059.1 764.8 L1058.8 769.7 L1058.5 774.4 L1058.4 778.6 L1058.5 782.6 L1058.9 786.5 L1059.6 790.3 L1060.4 793.9 L1061.3 797.3 L1062.3 800.5 L1063.3 803.4" fill="none" stroke="#4d7bf0" stroke-width="1.1"/><path d="M1112.4 689.6 L1108.0 692.1 L1103.8 694.7 L1100.1 697.3 L1096.6 700.1 L1093.1 703.0 L1089.6 706.1 L1086.1 709.3 L1082.8 712.6 L1079.7 716.1 L1076.7 719.6 L1074.1 723.3 L1071.6 727.1 L1069.6 731.0 L1067.8 735.2 L1066.3 739.8 L1065.0 744.7 L1063.9 749.7 L1063.1 754.9 L1062.4 760.0 L1061.9 765.1 L1061.6 769.9 L1061.3 774.5 L1061.2 778.6 L1061.3 782.4 L1061.7 786.1 L1062.3 789.8 L1063.1 793.2 L1064.0 796.6 L1065.0 799.7 L1065.9 802.5 L1066.8 805.1" fill="none" stroke="#4d7bf0" stroke-width="1.1"/><path d="M1101.2 690.7 L1097.3 693.5 L1093.6 696.4 L1090.0 699.4 L1086.4 702.5 L1082.8 705.8 L1079.4 709.3 L1076.1 712.9 L1073.0 716.7 L1070.1 720.6 L1067.5 724.7 L1065.2 729.0 L1063.3 733.5 L1061.7 738.4 L1060.3 743.5 L1059.2 748.8 L1058.3 754.2 L1057.7 759.5 L1057.1 764.7 L1056.8 769.6 L1056.5 774.3 L1056.4 778.6 L1056.5 782.7 L1056.9 786.8 L1057.6 790.7 L1058.4 794.4 L1059.4 797.9 L1060.4 801.1" fill="none" stroke="#4d7bf0" stroke-width="1.1"/><path d="M1135.8 724.1 L1132.9 728.6 L1129.5 733.6 L1126.0 739.0 L1122.2 744.6 L1118.4 750.3 L1114.5 755.9 L1110.8 761.1 L1107.3 766.0 L1103.7 770.6 L1099.9 775.5 L1095.8 780.4 L1091.8 785.2 L1087.8 789.9 L1084.0 794.4 L1080.4 798.5 L1077.2 802.2 L1074.6 805.3" fill="none" stroke="#4d7bf0" stroke-width="1.1"/><path d="M1126.3 731.4 L1122.7 736.8 L1119.0 742.5 L1115.2 748.1 L1111.3 753.6 L1107.6 758.9 L1104.2 763.6 L1100.6 768.2 L1096.8 773.0 L1092.8 777.9 L1088.8 782.7 L1084.8 787.4 L1081.0 791.9 L1077.5 796.0 L1074.3 799.7 L1071.6 802.8 L1069.5 805.2" fill="none" stroke="#4d7bf0" stroke-width="1.1"/><path d="M1124.0 745.8 L1120.1 751.5 L1116.3 757.1 L1112.5 762.4 L1109.0 767.2 L1105.4 771.9 L1101.5 776.8 L1097.5 781.7 L1093.4 786.6 L1089.4 791.3 L1085.6 795.8 L1082.0 799.9 L1078.8 803.6" fill="none" stroke="#4d7bf0" stroke-width="1.1"/><path d="M1132.8 716.6 L1130.3 720.4 L1127.3 724.9 L1124.0 730.0 L1120.5 735.4 L1116.7 741.0 L1112.9 746.6 L1109.1 752.1 L1105.5 757.3 L1102.0 762.0 L1098.5 766.6 L1094.7 771.3 L1090.8 776.2 L1086.7 781.0 L1082.8 785.7 L1079.0 790.1" fill="none" stroke="#4d7bf0" stroke-width="1.1"/><path d="M1109.1 759.9 L1105.6 764.7 L1102.0 769.3 L1098.2 774.1 L1094.2 779.0 L1090.2 783.9 L1086.2 788.6 L1082.4 793.0 L1078.8 797.2 L1075.6 800.8 L1073.0 803.9 L1070.9 806.4" fill="none" stroke="#4d7bf0" stroke-width="1.1"/><path d="M1064 811.6 L1041.4 823.7 M1049 574 L1052 580 M1098 572 L1101 578 M1074 700 L1079 703 M1086 726 L1090 722 M1117 729 L1123 727" stroke="#4d7bf0" stroke-width="1.3" fill="none"/><rect x="1016.5" y="527.5" width="155" height="301" fill="none" stroke="#4d7bf0" stroke-width="1.2"/><rect x="1014.0" y="525.0" width="5" height="5" fill="#fff" stroke="#4d7bf0" stroke-width="1"/><rect x="1091.5" y="525.0" width="5" height="5" fill="#fff" stroke="#4d7bf0" stroke-width="1"/><rect x="1169.0" y="525.0" width="5" height="5" fill="#fff" stroke="#4d7bf0" stroke-width="1"/><rect x="1014.0" y="675.5" width="5" height="5" fill="#fff" stroke="#4d7bf0" stroke-width="1"/><rect x="1169.0" y="675.5" width="5" height="5" fill="#fff" stroke="#4d7bf0" stroke-width="1"/><rect x="1014.0" y="826.0" width="5" height="5" fill="#fff" stroke="#4d7bf0" stroke-width="1"/><rect x="1091.5" y="826.0" width="5" height="5" fill="#fff" stroke="#4d7bf0" stroke-width="1"/><rect x="1169.0" y="826.0" width="5" height="5" fill="#fff" stroke="#4d7bf0" stroke-width="1"/></g>
<circle cx="14.5" cy="15.5" r="6.5" fill="#ee5a52"/><circle cx="14.5" cy="15.5" r="2" fill="#8c1a14"/><circle cx="37" cy="15.5" r="6.5" fill="#f5bd2f"/><circle cx="59.3" cy="15.5" r="6.5" fill="#28c83f"/><path d="M84 16 L92.5 7.5 L101 16 L98.5 16 L98.5 23 L86.5 23 L86.5 16 Z" fill="#6b6b6b"/><path d="M1768 21 L1784 21 L1782 18 L1782 12 Q1782 6 1776 6 Q1770 6 1770 12 L1770 18 Z" fill="#bdbdbd"/><rect x="1773.5" y="21.5" width="5" height="2.5" rx="1" fill="#bdbdbd"/><circle cx="1780.5" cy="7.5" r="4" fill="#2680eb"/><circle cx="1807" cy="13.5" r="6" fill="none" stroke="#c4c4c4" stroke-width="1.8"/><path d="M1811.5 18 L1817.5 23" stroke="#c4c4c4" stroke-width="2" stroke-linecap="round"/><rect x="1851" y="9" width="9" height="13" fill="#c6c6c6"/><rect x="1861.5" y="9" width="9" height="5.5" fill="#c6c6c6"/><rect x="1861.5" y="16" width="9" height="6" fill="#c6c6c6"/><rect x="1890.5" y="8.5" width="17.5" height="13" fill="none" stroke="#c6c6c6" stroke-width="1.3"/><rect x="1893" y="11" width="2" height="8" fill="#c6c6c6"/><path d="M4 42 V64 M7 42 V64" stroke="#474747" stroke-width="1.3" stroke-dasharray="1 1"/><rect x="180" y="49" width="7" height="7" fill="none" stroke="#111" stroke-width="1.2"/><path d="M175.5 62 L192 44" stroke="#e3262b" stroke-width="2"/><path d="M229.5 60.8 H269" stroke="#9a9a9a" stroke-width="1" stroke-dasharray="1 1"/><path d="M284 51 L287.5 47.5 L291 51 M284 55.5 L287.5 59 L291 55.5" fill="none" stroke="#cfcfcf" stroke-width="1.4"/><path d="M488 51 L492 55 L496 51" fill="none" stroke="#616161" stroke-width="1.4"/><path d="M634 59.5 H689" stroke="#9a9a9a" stroke-width="1" stroke-dasharray="1 1"/><path d="M769.5 49 L773.5 53 L769.5 57" fill="none" stroke="#cfcfcf" stroke-width="1.4"/><circle cx="887" cy="52" r="9" fill="#9a9a9a" stroke="#c8c8c8" stroke-width="1.2"/><circle cx="887" cy="52" r="2" fill="#444"/><path d="M880 56 L885 53 L884 60 Z" fill="#333"/><path d="M926 45 V60 H939 V49 L935 45 Z" fill="#8a8a8a" stroke="#c8c8c8" stroke-width="1.2"/><path d="M920 47 H924 M922 45 V49" stroke="#c8c8c8" stroke-width="1"/><path d="M151.6 50.5 L155.6 54.5 L159.6 50.5" fill="none" stroke="#cfcfcf" stroke-width="1.4"/><path d="M201 50.5 L205 54.5 L209 50.5" fill="none" stroke="#cfcfcf" stroke-width="1.4"/><path d="M359.5 50.5 L363.5 54.5 L367.5 50.5" fill="none" stroke="#cfcfcf" stroke-width="1.4"/><path d="M611 50.5 L615 54.5 L619 50.5" fill="none" stroke="#cfcfcf" stroke-width="1.4"/><path d="M844.4 50.5 L848.4 54.5 L852.4 50.5" fill="none" stroke="#cfcfcf" stroke-width="1.4"/><path d="M941 50.5 L945 54.5 L949 50.5" fill="none" stroke="#bdbdbd" stroke-width="1.1"/><rect x="967.5" y="42" width="1.3" height="21" fill="#cdcdcd"/><rect x="970.0" y="45" width="8" height="6" fill="#cdcdcd"/><rect x="970.0" y="53" width="14" height="6" fill="#cdcdcd"/><rect x="1004.5" y="42" width="1.3" height="21" fill="#cdcdcd"/><rect x="1001.0" y="45" width="8" height="6" fill="#cdcdcd"/><rect x="997.5" y="53" width="15" height="6" fill="#cdcdcd"/><rect x="1043" y="42" width="1.3" height="21" fill="#cdcdcd"/><rect x="1034" y="45" width="8" height="6" fill="#cdcdcd"/><rect x="1027" y="53" width="15" height="6" fill="#cdcdcd"/><rect x="1059.5" y="43" width="20" height="1.3" fill="#cdcdcd"/><rect x="1062.5" y="45" width="6" height="15" fill="#cdcdcd"/><rect x="1070.5" y="45" width="6" height="8" fill="#cdcdcd"/><rect x="1088" y="52" width="21" height="1.3" fill="#cdcdcd"/><rect x="1091" y="45" width="6" height="15" fill="#cdcdcd"/><rect x="1099" y="48" width="6" height="9" fill="#cdcdcd"/><rect x="1117" y="60" width="21" height="1.3" fill="#cdcdcd"/><rect x="1120" y="45" width="6" height="14" fill="#cdcdcd"/><rect x="1128" y="50" width="6" height="9" fill="#cdcdcd"/><path d="M1158 59.5 H1241" stroke="#9a9a9a" stroke-width="1" stroke-dasharray="1 1"/><rect x="1264" y="48" width="11" height="8" fill="none" stroke="#cdcdcd" stroke-width="1.3"/><path d="M1260 43 L1264 47 M1260 43 V46 M1260 43 H1263 M1279 43 L1275 47 M1279 43 V46 M1279 43 H1276 M1260 61 L1264 57 M1260 61 V58 M1260 61 H1263 M1279 61 L1275 57 M1279 61 V58 M1279 61 H1276" stroke="#cdcdcd" stroke-width="1.3" fill="none"/><rect x="1295" y="49" width="7" height="7" fill="none" stroke="#cdcdcd" stroke-width="1.2"/><rect x="1305" y="43" width="7" height="7" fill="none" stroke="#cdcdcd" stroke-width="1.2"/><path d="M1302 50 L1313 57 L1307.5 58 L1305 63 Z" fill="#cdcdcd"/><path d="M1320.5 51 L1324.5 55 L1328.5 51" fill="none" stroke="#cdcdcd" stroke-width="1.4"/><rect x="1350" y="49" width="7" height="7" fill="none" stroke="#cdcdcd" stroke-width="1.2"/><rect x="1360" y="43" width="7" height="7" fill="none" stroke="#cdcdcd" stroke-width="1.2"/><path d="M1356 61 L1366 50 L1369 53 L1359 63 L1355 64 Z" fill="#cdcdcd"/><path d="M1380.5 51 L1384.5 55 L1388.5 51" fill="none" stroke="#cdcdcd" stroke-width="1.4"/><path d="M1416 49 V61 H1433 V49" fill="none" stroke="#cdcdcd" stroke-width="1.3"/><path d="M1418 60 L1423 53 L1428 58 L1431 55 V60 Z" fill="#cdcdcd"/><path d="M1430 44 L1431 47 L1434 48 L1431 49 L1430 52 L1429 49 L1426 48 L1429 47 Z" fill="#cdcdcd"/><circle cx="1418" cy="46" r="3.5" fill="#2680eb"/><path d="M1457 61 V50 L1464 56 L1469 52 V61 Z" fill="#cdcdcd"/><path d="M1470 52 V61 H1474" fill="none" stroke="#cdcdcd" stroke-width="1" stroke-dasharray="1 1"/><path d="M1464 44 V54 M1469 47 L1472 50" stroke="#cdcdcd" stroke-width="1.2"/><circle cx="1459" cy="46" r="3.5" fill="#2680eb"/><rect x="1782" y="45" width="5" height="5" fill="#cdcdcd"/><rect x="1790" y="45" width="5" height="5" fill="#cdcdcd"/><rect x="1782" y="53" width="5" height="5" fill="#cdcdcd"/><rect x="1790" y="53" width="5" height="5" fill="#cdcdcd"/><path d="M1788.5 43 V60 M1780 51.5 H1797" stroke="#cdcdcd" stroke-width="0.8"/><rect x="1810" y="44" width="4.5" height="4.5" fill="#cdcdcd"/><rect x="1810" y="50" width="4.5" height="4.5" fill="#cdcdcd"/><rect x="1810" y="56" width="4.5" height="4.5" fill="#cdcdcd"/><path d="M1817 48.5 H1822 Q1825.5 48.5 1825.5 52 Q1825.5 55.5 1822 55.5 H1817" fill="none" stroke="#cdcdcd" stroke-width="1.8"/><path d="M1839 59 V52 Q1839 46 1845 46 L1847 46" fill="none" stroke="#cdcdcd" stroke-width="2.6"/><rect x="1846" y="52" width="3.5" height="3" fill="#cdcdcd"/><rect x="1846" y="56.5" width="3.5" height="3" fill="#cdcdcd"/><circle cx="1851.5" cy="46.7" r="3.5" fill="#2680eb"/><path d="M1853 52 L1856 55 L1860 51" fill="none" stroke="#9a9a9a" stroke-width="1.2"/><path d="M1886 46.5 H1888 M1886 51.5 H1888 M1886 56.5 H1888" stroke="#cdcdcd" stroke-width="2"/><path d="M1890 46.5 H1899.5 M1890 51.5 H1899.5 M1890 56.5 H1899.5" stroke="#cdcdcd" stroke-width="1.5"/><path d="M89 84 L96 91 M96 84 L89 91" stroke="#e6e6e6" stroke-width="1.5"/><path d="M9 76 L6 79 L9 82 M13 76 L10 79 L13 82" fill="none" stroke="#bdbdbd" stroke-width="1"/><path d="M27 89 V95 M29 89 V95 M31 89 V95 M33 89 V95 M35 89 V95 M37 89 V95 M39 89 V95 M41 89 V95 M43 89 V95 M45 89 V95 M47 89 V95" stroke="#3e3e3e" stroke-width="1" stroke-dasharray="1 0.5"/><path d="M1903 76 L1906 79 L1903 82 M1907 76 L1910 79 L1907 82" fill="none" stroke="#bdbdbd" stroke-width="1"/><path d="M16.7 112 L29.7 122 L22.7 122.5 L16.7 129 Z" fill="none" stroke="#d8d8d8" stroke-width="1.3"/><path d="M50.8 111 L65.8 123 L58.8 123.5 L51.8 131 Z" fill="#c9c9c9"/><path d="M70.8 129 L70.8 133 L66.8 133 Z" fill="#c9c9c9"/><path d="M14.7 157 L25.7 146" stroke="#c9c9c9" stroke-width="2.2" stroke-linecap="round"/><path d="M19.7 139 l1 2.5 2.5 1 -2.5 1 -1 2.5 -1 -2.5 -2.5 -1 2.5 -1z M29.7 140 l0.7 1.8 1.8 0.7 -1.8 0.7 -0.7 1.8 -0.7 -1.8 -1.8 -0.7 1.8 -0.7z M28.7 149 l0.6 1.2 1.2 0.6 -1.2 0.6 -0.6 1.2 -0.6 -1.2 -1.2 -0.6 1.2 -0.6z" fill="#c9c9c9"/><path d="M54.8 154 Q47.8 150 48.8 144 Q50.8 138 58.8 139 Q65.8 140 64.8 145" fill="none" stroke="#c9c9c9" stroke-width="1.3"/><path d="M56.8 145 L66.8 152 L60.8 153 L56.8 158 Z" fill="#c9c9c9"/><circle cx="52.8" cy="149" r="2" fill="none" stroke="#c9c9c9" stroke-width="1.2"/><path d="M13.7 183.5 L15.7 174.5 L22.7 169.5 L27.7 174.5 L22.7 181.5 Z" fill="#c9c9c9"/><path d="M22.7 167.5 L25.7 164.5 L30.7 169.5 L27.7 172.5 Z" fill="#c9c9c9"/><path d="M13.7 183.5 L19.7 177.5" stroke="#535353" stroke-width="1"/><path d="M35.7 182.5 L35.7 186.5 L31.7 186.5 Z" fill="#c9c9c9"/><path d="M51.8 183.5 L53.8 174.5 L59.8 169.5 L64.8 174.5 L59.8 181.5 Z" fill="#c9c9c9"/><path d="M59.8 167.5 L62.8 164.5 L66.8 168.5 L63.8 171.5 Z" fill="#c9c9c9"/><path d="M51.8 183.5 Q44.8 180.5 47.8 173.5 Q50.8 168.5 48.8 164.5" fill="none" stroke="#c9c9c9" stroke-width="1.2"/><path d="M14.7 193.5 V196.5 M28.7 193.5 V196.5 M14.7 194.0 H28.7 M21.7 194.0 V209.5 M18.7 209.5 H24.7" fill="none" stroke="#c9c9c9" stroke-width="2"/><path d="M35.7 209.5 L35.7 213.5 L31.7 213.5 Z" fill="#c9c9c9"/><path d="M48.8 209.5 L64.8 193.5" stroke="#c9c9c9" stroke-width="1.5"/><path d="M70.8 209.5 L70.8 213.5 L66.8 213.5 Z" fill="#c9c9c9"/><rect x="13.7" y="221.0" width="16" height="15" fill="#6a6a6a" stroke="#c9c9c9" stroke-width="1.5"/><path d="M35.7 236.5 L35.7 240.5 L31.7 240.5 Z" fill="#c9c9c9"/><path d="M48.8 237.5 Q47.8 231.5 52.8 229.5 L64.8 218.5 L65.8 219.5 L55.8 233.5 Q53.8 237.5 48.8 237.5 Z" fill="#c9c9c9"/><path d="M70.8 236.5 L70.8 240.5 L66.8 240.5 Z" fill="#c9c9c9"/><path d="M13.7 264 L15.7 258 L25.7 248 L29.7 252 L19.7 262 Z" fill="#c9c9c9"/><path d="M26.7 247 L28.7 245 L31.7 249 L29.7 251 Z" fill="#c9c9c9"/><path d="M35.7 263 L35.7 267 L31.7 267 Z" fill="#c9c9c9"/><path d="M47.8 258 L58.8 246 L65.8 252 L54.8 264 Z" fill="#c9c9c9"/><path d="M50.8 256 L54.8 252 L59.8 257 L55.8 261 Z" fill="#535353"/><path d="M70.8 263 L70.8 267 L66.8 267 Z" fill="#c9c9c9"/><path d="M12.7 275.5 L18.7 281.5 L12.7 287.5 Z" fill="none" stroke="#c9c9c9" stroke-width="1.3"/><path d="M30.7 274.5 L23.7 281.5 L30.7 288.5 Z" fill="#c9c9c9"/><path d="M21.2 271.5 V291.5" stroke="#c9c9c9" stroke-width="1" stroke-dasharray="1.5 1"/><path d="M35.7 289.5 L35.7 293.5 L31.7 293.5 Z" fill="#c9c9c9"/><rect x="53.8" y="272.5" width="12" height="10" fill="none" stroke="#c9c9c9" stroke-width="1.3"/><rect x="47.8" y="280.5" width="10" height="10" fill="none" stroke="#c9c9c9" stroke-width="1.3"/><path d="M57.8 278.5 L62.8 274.5" stroke="#c9c9c9" stroke-width="1.2"/><path d="M70.8 289.5 L70.8 293.5 L66.8 293.5 Z" fill="#c9c9c9"/><path d="M14.7 304.5 Q15.7 298.5 20.7 302.5 Q24.7 307.5 29.7 306.5 Q31.7 312.5 27.7 311.5 Q22.7 315.5 17.7 314.5 Z" fill="#c9c9c9"/><circle cx="17.7" cy="310.5" r="2.3" fill="#535353" stroke="#c9c9c9" stroke-width="1"/><rect x="11.7" y="314.5" width="4" height="4" fill="#c9c9c9"/><path d="M35.7 316.5 L35.7 320.5 L31.7 320.5 Z" fill="#c9c9c9"/><path d="M48.8 299.5 L58.8 307.5 L53.8 308.5 L49.8 314.5 Z" fill="#c9c9c9"/><rect x="54.8" y="301.5" width="12" height="14" fill="none" stroke="#c9c9c9" stroke-width="1" stroke-dasharray="2 1.5"/><path d="M70.8 316.5 L70.8 320.5 L66.8 320.5 Z" fill="#c9c9c9"/><path d="M19.7 339 Q11.7 339 12.7 332 Q13.7 326 19.7 327 Q26.7 325 27.7 332" fill="none" stroke="#c9c9c9" stroke-width="1.2"/><path d="M14.7 333 H25.7" stroke="#c9c9c9" stroke-width="1" stroke-dasharray="1 1"/><path d="M22.7 334 L31.7 340 L26.7 341 L23.7 345 Z" fill="#c9c9c9"/><path d="M35.7 343 L35.7 347 L31.7 347 Z" fill="#c9c9c9"/><path d="M47.8 325 L57.8 333 L52.8 334 L48.8 339 Z" fill="#c9c9c9"/><path d="M57.8 337 L62.8 334 L66.8 337 V343 L61.8 345 L57.8 343 Z" fill="#c9c9c9"/><path d="M57.8 337 L61.8 339 L66.8 337 M61.8 339 V345" stroke="#535353" stroke-width="0.8" fill="none"/><path d="M70.8 343 L70.8 347 L66.8 347 Z" fill="#c9c9c9"/><rect x="13.7" y="354" width="16" height="16" fill="none" stroke="#c9c9c9" stroke-width="1.5"/><path d="M13.7 360 Q19.7 356 23.7 361 Q26.7 365 29.7 363 M18.7 354 Q15.7 362 19.7 365 Q22.7 368 21.7 370 M25.7 354 Q23.7 358 25.7 360" fill="none" stroke="#c9c9c9" stroke-width="1"/><defs><linearGradient id="g56362" x1="0" x2="1"><stop offset="0" stop-color="#111"/><stop offset="1" stop-color="#eee"/></linearGradient></defs><rect x="48.8" y="354" width="16" height="16" fill="url(#g56362)" stroke="#c9c9c9" stroke-width="1"/><path d="M13.7 396.5 L29.7 380.5" stroke="#c9c9c9" stroke-width="1.5"/><path d="M17.7 388.5 L21.7 392.5 M21.7 384.5 L25.7 388.5" stroke="#c9c9c9" stroke-width="3"/><circle cx="15.7" cy="394.5" r="1.5" fill="#c9c9c9"/><circle cx="27.7" cy="382.5" r="1.5" fill="#c9c9c9"/><path d="M48.8 397.5 L49.8 393.5 L58.8 384.5 L61.8 387.5 L52.8 396.5 Z" fill="none" stroke="#c9c9c9" stroke-width="1.3"/><path d="M57.8 383.5 L62.8 378.5 Q66.8 378.5 66.8 382.5 L61.8 387.5 Z" fill="#c9c9c9"/><path d="M70.8 396.5 L70.8 400.5 L66.8 400.5 Z" fill="#c9c9c9"/><rect x="12.7" y="407" width="7" height="7" fill="#c9c9c9"/><circle cx="20.7" cy="414" r="4.5" fill="#8a8a8a" stroke="#c9c9c9" stroke-width="1"/><circle cx="26.7" cy="419" r="4.5" fill="#535353" stroke="#c9c9c9" stroke-width="1.2"/><rect x="53.8" y="411" width="12" height="13" rx="1" fill="none" stroke="#c9c9c9" stroke-width="1.3"/><circle cx="59.8" cy="418" r="2" fill="none" stroke="#c9c9c9" stroke-width="1.2"/><rect x="56.8" y="407" width="6" height="4" fill="#c9c9c9"/><path d="M47.8 406 h1.5 M50.8 406 h1.5 M47.8 409 h1.5 M50.8 409 h1.5 M47.8 412 h1.5" stroke="#c9c9c9" stroke-width="1.5"/><path d="M70.8 423 L70.8 427 L66.8 427 Z" fill="#c9c9c9"/><path d="M12.7 433 V450 H31.7" fill="none" stroke="#c9c9c9" stroke-width="1.2"/><rect x="15.7" y="439" width="2.5" height="10" fill="#c9c9c9"/><rect x="19.7" y="435" width="2.5" height="14" fill="#c9c9c9"/><rect x="23.7" y="442" width="2.5" height="7" fill="#c9c9c9"/><rect x="27.7" y="438" width="2.5" height="11" fill="#c9c9c9"/><path d="M35.7 450 L35.7 454 L31.7 454 Z" fill="#c9c9c9"/><path d="M51.8 437 H60.8 L64.8 441 V450 H51.8 Z" fill="#8a8a8a" stroke="#c9c9c9" stroke-width="1.2"/><path d="M46.8 436 H53.8 M50.8 432 V440" stroke="#c9c9c9" stroke-width="1.2"/><path d="M12.7 478 L14.7 472 L25.7 460 L28.7 463 L17.7 475 Z" fill="none" stroke="#c9c9c9" stroke-width="1.3"/><path d="M35.7 477 L35.7 481 L31.7 481 Z" fill="#c9c9c9"/><path d="M48.8 469 Q47.8 467 49.8 466 L52.8 469 V461 Q54.8 459 55.8 461 V466 V459 Q57.8 458 58.8 460 V466 V461 Q60.8 459 61.8 462 V467 V464 Q63.8 463 64.8 465 V472 Q63.8 479 56.8 479 Q52.8 479 48.8 469 Z" fill="#c9c9c9"/><path d="M70.8 477 L70.8 481 L66.8 481 Z" fill="#c9c9c9"/><path d="M12.7 486.5 Q16.7 495.5 12.7 504.5" fill="none" stroke="#c9c9c9" stroke-width="1.3"/><rect x="17.7" y="486.5" width="6" height="6" fill="#c9c9c9"/><rect x="17.7" y="493.5" width="13" height="5" fill="#c9c9c9" transform="rotate(8 21.7 495.5)"/><rect x="17.7" y="499.5" width="12" height="5" fill="#c9c9c9"/><circle cx="54.8" cy="493.5" r="6.5" fill="none" stroke="#c9c9c9" stroke-width="1.4"/><path d="M59.8 498.5 L65.8 504.5" stroke="#c9c9c9" stroke-width="1.8"/><rect x="26" y="538" width="38" height="38" fill="#ffffff" stroke="#999" stroke-width="0.5"/><rect x="35" y="547" width="20" height="20" fill="#535353"/><path d="M27 575 L63 539" stroke="#e3262b" stroke-width="3.5"/><rect x="5.5" y="518" width="38" height="38" fill="#e9eed6" stroke="#2e2e2e" stroke-width="1.2"/><path d="M55 521 Q61 520 62 527 M59 525 L62 528 L65 525 M55 519 L53 521 L56 523" fill="none" stroke="#c9c9c9" stroke-width="1.3"/><rect x="9.5" y="568.5" width="8" height="8" fill="#111" stroke="#ddd" stroke-width="1.1"/><rect x="6" y="565" width="7.5" height="7.5" fill="#f0f0f0" stroke="#222" stroke-width="1.1"/><rect x="8.5" y="589.5" width="13" height="13" fill="#e9eed6" stroke="#111" stroke-width="1"/><defs><linearGradient id="gg" x1="0" x2="1"><stop offset="0" stop-color="#fff"/><stop offset="1" stop-color="#111"/></linearGradient></defs><rect x="30.5" y="589.5" width="14" height="13" fill="url(#gg)" stroke="#111" stroke-width="1"/><rect x="52.5" y="589.5" width="14" height="13" fill="#fff" stroke="#111" stroke-width="1"/><path d="M53 602.5 L66 590" stroke="#e3262b" stroke-width="2.2"/><circle cx="13" cy="621" r="4" fill="#bbb"/><circle cx="17" cy="625" r="4" fill="#8a8a8a" stroke="#ccc" stroke-width="0.8"/><circle cx="36" cy="621" r="4" fill="#bbb"/><circle cx="40" cy="625" r="4" fill="#6a6a6a" stroke="#ccc" stroke-width="0.8"/><circle cx="60" cy="623" r="4.5" fill="none" stroke="#5f5f5f" stroke-width="1"/><rect x="33" y="644" width="15" height="10" fill="#999" stroke="#c9c9c9" stroke-width="1"/><rect x="26" y="649" width="14" height="10" fill="#777" stroke="#c9c9c9" stroke-width="1"/><circle cx="32" cy="687.5" r="1.8" fill="#c9c9c9"/><circle cx="37.5" cy="687.5" r="1.8" fill="#c9c9c9"/><circle cx="43" cy="687.5" r="1.8" fill="#c9c9c9"/><rect x="1650.5" y="204.0" width="4" height="4" fill="none" stroke="#d6d6d6" stroke-width="1"/><rect x="1650.5" y="211.5" width="4" height="4" fill="none" stroke="#d6d6d6" stroke-width="1"/><rect x="1650.5" y="219.0" width="4" height="4" fill="none" stroke="#d6d6d6" stroke-width="1"/><rect x="1658.0" y="204.0" width="4" height="4" fill="none" stroke="#d6d6d6" stroke-width="1"/><rect x="1657.5" y="211.0" width="5" height="5" fill="#e6e6e6"/><rect x="1658.0" y="219.0" width="4" height="4" fill="none" stroke="#d6d6d6" stroke-width="1"/><rect x="1665.5" y="204.0" width="4" height="4" fill="none" stroke="#d6d6d6" stroke-width="1"/><rect x="1665.5" y="211.5" width="4" height="4" fill="none" stroke="#d6d6d6" stroke-width="1"/><rect x="1665.5" y="219.0" width="4" height="4" fill="none" stroke="#d6d6d6" stroke-width="1"/><rect x="1880.5" y="205.5" width="7" height="10" rx="3.5" fill="none" stroke="#f0f0f0" stroke-width="1.6"/><rect x="1880.5" y="213.5" width="7" height="10" rx="3.5" fill="none" stroke="#f0f0f0" stroke-width="1.6"/><rect x="1879" y="212.5" width="3" height="3" fill="#333"/><rect x="1886" y="213.5" width="3" height="3" fill="#333"/><path d="M1678 258.5 L1689 250 M1678 258.5 H1691 M1686 253 Q1688.5 255.5 1688 258.5" fill="none" stroke="#c8c8c8" stroke-width="1.3"/><circle cx="1694" cy="253" r="0.8" fill="#c8c8c8"/><circle cx="1694" cy="258" r="0.8" fill="#c8c8c8"/><path d="M1750.5 255.5 L1754.5 259.5 L1758.5 255.5" fill="none" stroke="#d0d0d0" stroke-width="1.4"/><path d="M1814.5 253.5 L1819 258.5 L1814.5 263.5 Z" fill="none" stroke="#c8c8c8" stroke-width="1.1"/><path d="M1828 253.5 L1823 258.5 L1828 263.5 Z" fill="#c8c8c8"/><path d="M1821 252 V265" stroke="#c8c8c8" stroke-width="0.8" stroke-dasharray="1 1"/><path d="M1842 251.5 H1854.5 L1848.2 256.5 Z" fill="#c8c8c8"/><path d="M1842 265.5 H1854.5 L1848.2 260.5 Z" fill="none" stroke="#c8c8c8" stroke-width="1.1"/><path d="M1841 258.5 H1856" stroke="#c8c8c8" stroke-width="0.8" stroke-dasharray="1 1"/><circle cx="1882.7" cy="281.5" r="1.6" fill="#c9c9c9"/><circle cx="1888.7" cy="281.5" r="1.6" fill="#c9c9c9"/><circle cx="1894.7" cy="281.5" r="1.6" fill="#c9c9c9"/><rect x="1650.5" y="366.5" width="19" height="19" fill="#fff" stroke="#3a3a3a" stroke-width="1"/><rect x="1655" y="371" width="10" height="10" fill="#222"/><path d="M1650.5 385.5 L1669.5 366.5" stroke="#e3262b" stroke-width="2"/><path d="M1763 373.5 L1766.7 369.8 L1770.4 373.5 M1763 378.5 L1766.7 382.2 L1770.4 378.5" fill="none" stroke="#d0d0d0" stroke-width="1.3"/><path d="M1818 374 L1822 378 L1826 374" fill="none" stroke="#d0d0d0" stroke-width="1.4"/><rect x="1650.5" y="400" width="19" height="18" fill="#5e5e5e" stroke="#8a8a8a" stroke-width="1"/><rect x="1655" y="404" width="5" height="5" fill="#4e4e4e"/><rect x="1660" y="409" width="5" height="5" fill="#4e4e4e"/><path d="M1821 404 L1825 408 L1821 412" fill="none" stroke="#d0d0d0" stroke-width="1.4"/><circle cx="1876.8" cy="473.6" r="1.6" fill="#c9c9c9"/><circle cx="1882.8" cy="473.6" r="1.6" fill="#c9c9c9"/><circle cx="1888.8" cy="473.6" r="1.6" fill="#c9c9c9"/><path d="M1656 533 H1670 L1674 537 V546 H1656 Z" fill="#7a7a7a" stroke="#c8c8c8" stroke-width="1.2"/><path d="M1652 533 H1657 M1654 530.5 V535.5" stroke="#c8c8c8" stroke-width="1"/><path d="M1676 537 L1679 540 L1682 537" fill="none" stroke="#c8c8c8" stroke-width="1"/><rect x="1695" y="528.5" width="1.3" height="21" fill="#c8c8c8"/><rect x="1697.5" y="531.5" width="8" height="6" fill="#c8c8c8"/><rect x="1697.5" y="539.5" width="14" height="6" fill="#c8c8c8"/><rect x="1736.5" y="528.5" width="1.3" height="21" fill="#c8c8c8"/><rect x="1733.0" y="531.5" width="8" height="6" fill="#c8c8c8"/><rect x="1729.5" y="539.5" width="15" height="6" fill="#c8c8c8"/><rect x="1779.5" y="528.5" width="1.3" height="21" fill="#c8c8c8"/><rect x="1770.5" y="531.5" width="8" height="6" fill="#c8c8c8"/><rect x="1763.5" y="539.5" width="15" height="6" fill="#c8c8c8"/><rect x="1795" y="529.5" width="20" height="1.3" fill="#c8c8c8"/><rect x="1798" y="531.5" width="6" height="15" fill="#c8c8c8"/><rect x="1806" y="531.5" width="6" height="8" fill="#c8c8c8"/><rect x="1828" y="538.5" width="21" height="1.3" fill="#c8c8c8"/><rect x="1831" y="531.5" width="6" height="15" fill="#c8c8c8"/><rect x="1839" y="534.5" width="6" height="9" fill="#c8c8c8"/><rect x="1861.5" y="546.5" width="21" height="1.3" fill="#c8c8c8"/><rect x="1864.5" y="531.5" width="6" height="14" fill="#c8c8c8"/><rect x="1872.5" y="536.5" width="6" height="9" fill="#c8c8c8"/><circle cx="1882.7" cy="567.8" r="1.6" fill="#c9c9c9"/><circle cx="1888.7" cy="567.8" r="1.6" fill="#c9c9c9"/><circle cx="1894.7" cy="567.8" r="1.6" fill="#c9c9c9"/><rect x="1656" y="625" width="10" height="10" fill="#c8c8c8"/><rect x="1662" y="631" width="10" height="10" fill="#c8c8c8"/><rect x="1691" y="625" width="10" height="10" fill="#c8c8c8"/><rect x="1697" y="631" width="10" height="10" fill="#535353" stroke="#c8c8c8" stroke-width="1.2"/><rect x="1725.5" y="625.5" width="10" height="10" fill="none" stroke="#c8c8c8" stroke-width="1.2"/><rect x="1731.5" y="631.5" width="10" height="10" fill="none" stroke="#c8c8c8" stroke-width="1.2"/><rect x="1731.5" y="631.5" width="4" height="4" fill="#c8c8c8"/><rect x="1760" y="625" width="11" height="11" fill="#c8c8c8"/><rect x="1765" y="630" width="11" height="11" fill="#c8c8c8"/><rect x="1765" y="630" width="6" height="6" fill="#535353"/><circle cx="1882.7" cy="649.6" r="1.6" fill="#c9c9c9"/><circle cx="1888.7" cy="649.6" r="1.6" fill="#c9c9c9"/><circle cx="1894.7" cy="649.6" r="1.6" fill="#c9c9c9"/><path d="M1886 821 L1890 825 L1894 821" fill="none" stroke="#bdbdbd" stroke-width="1.3"/><path d="M1622 117 L1626.5 112.5 L1631 117" fill="none" stroke="#8a8a8a" stroke-width="1.2"/><path d="M1621.5 906.5 L1626 911 L1630.5 906.5" fill="none" stroke="#9a9a9a" stroke-width="1.2"/><circle cx="94" cy="905" r="7.8" fill="#c8c8c8"/><text x="94" y="909.5" text-anchor="middle" font-family="Liberation Sans" font-weight="bold" font-size="12" fill="#555">?</text><path d="M146 927 L150 931 L154 927" fill="none" stroke="#d0d0d0" stroke-width="1.3"/><path d="M228 927 L232 931 L236 927" fill="none" stroke="#d0d0d0" stroke-width="1.3"/><path d="M253 924 V934 M261 924 L255 929 L261 934 Z M275 924 L269 929 L275 934 Z" fill="#5e5e5e" stroke="#5e5e5e" stroke-width="1.2"/><path d="M339.5 927 L343.5 931 L347.5 927" fill="none" stroke="#d0d0d0" stroke-width="1.3"/><path d="M366 924 L372 929 L366 934 Z M380 924 L386 929 L380 934 Z M388 924 V934" fill="#5e5e5e" stroke="#5e5e5e" stroke-width="1.2"/><path d="M631 924 L637.5 929 L631 934 Z" fill="#c8c8c8"/><path d="M656 925 L652.5 929 L656 933" fill="none" stroke="#9a9a9a" stroke-width="1.2"/><path d="M1606 925 L1609.5 929 L1606 933" fill="none" stroke="#9a9a9a" stroke-width="1.2"/>
</svg>
<div class="t" style="left:857.00px;top:7.00px;font-size:15px;line-height:15px;font-weight:400;color:#d6d6d6;transform:scaleX(1.0041);transform-origin:0 0;">Adobe Illustrator 2025</div><div class="t" style="left:1676.57px;top:8.70px;font-size:13px;line-height:13px;font-weight:700;color:#ffffff;transform:scaleX(1.0328);transform-origin:0 0;">Freigeben</div><div class="t" style="left:13.78px;top:46.34px;font-size:12px;line-height:12px;font-weight:400;color:#d4d4d4;transform:scaleX(1.0154);transform-origin:0 0;">Gruppe</div><div class="t" style="left:228.43px;top:47.64px;font-size:12px;line-height:12px;font-weight:700;color:#e6e6e6;transform:scaleX(0.9659);transform-origin:0 0;">Kontur:</div><div class="t" style="left:558.79px;top:46.74px;font-size:12px;line-height:12px;font-weight:400;color:#222222;transform:scaleX(1.0053);transform-origin:0 0;">Einfach</div><div class="t" style="left:633.04px;top:46.44px;font-size:12px;line-height:12px;font-weight:700;color:#e6e6e6;transform:scaleX(0.9649);transform-origin:0 0;">Deckkraft:</div><div class="t" style="left:700.52px;top:46.44px;font-size:12px;line-height:12px;font-weight:400;color:#e8e8e8;transform:scaleX(0.9759);transform-origin:0 0;">100%</div><div class="t" style="left:786.91px;top:46.84px;font-size:12px;line-height:12px;font-weight:400;color:#cfcfcf;transform:scaleX(1.0944);transform-origin:0 0;">Stil:</div><div class="t" style="left:1157.80px;top:46.44px;font-size:12px;line-height:12px;font-weight:700;color:#e6e6e6;transform:scaleX(0.9563);transform-origin:0 0;">Transformieren</div><div class="t" style="left:106.70px;top:81.14px;font-size:12px;line-height:12px;font-weight:700;color:#ececec;">BG-Images.ai* @ 31,41 % (RGB/Vorschau)</div><div class="t" style="left:1647.61px;top:93.84px;font-size:12px;line-height:12px;font-weight:700;color:#f0f0f0;transform:scaleX(0.9926);transform-origin:0 0;">Eigenschaften</div><div class="t" style="left:1648.31px;top:129.22px;font-size:12.5px;line-height:12.5px;font-weight:400;color:#d2d2d2;transform:scaleX(0.9925);transform-origin:0 0;">Gruppe</div><div class="t" style="left:1649.30px;top:166.82px;font-size:12.5px;line-height:12.5px;font-weight:400;color:#d2d2d2;transform:scaleX(0.9917);transform-origin:0 0;">Transformieren</div><div class="t" style="left:1682.70px;top:195.11px;font-size:10.5px;line-height:10.5px;font-weight:400;color:#c8c8c8;transform:scaleX(1.2000);transform-origin:0 0;">X:</div><div class="t" style="left:1704.65px;top:191.74px;font-size:12px;line-height:12px;font-weight:400;color:#eeeeee;transform:scaleX(1.0490);transform-origin:0 0;">2317,563</div><div class="t" style="left:1777.61px;top:195.11px;font-size:10.5px;line-height:10.5px;font-weight:400;color:#c8c8c8;transform:scaleX(1.1875);transform-origin:0 0;">B:</div><div class="t" style="left:1802.14px;top:191.74px;font-size:12px;line-height:12px;font-weight:400;color:#eeeeee;transform:scaleX(1.0633);transform-origin:0 0;">391,5506</div><div class="t" style="left:1682.70px;top:224.11px;font-size:10.5px;line-height:10.5px;font-weight:400;color:#c8c8c8;transform:scaleX(1.1111);transform-origin:0 0;">Y:</div><div class="t" style="left:1704.64px;top:220.84px;font-size:12px;line-height:12px;font-weight:400;color:#eeeeee;transform:scaleX(1.0633);transform-origin:0 0;">1483,180</div><div class="t" style="left:1777.63px;top:224.11px;font-size:10.5px;line-height:10.5px;font-weight:400;color:#c8c8c8;transform:scaleX(1.1667);transform-origin:0 0;">H:</div><div class="t" style="left:1802.15px;top:220.84px;font-size:12px;line-height:12px;font-weight:400;color:#eeeeee;transform:scaleX(1.0531);transform-origin:0 0;">759,9582</div><div class="t" style="left:1707.70px;top:249.34px;font-size:12px;line-height:12px;font-weight:400;color:#eeeeee;transform:scaleX(1.0455);transform-origin:0 0;">0°</div><div class="t" style="left:1649.00px;top:307.12px;font-size:12.5px;line-height:12.5px;font-weight:400;color:#d2d2d2;transform:scaleX(0.9455);transform-origin:0 0;">Aussehen</div><div class="t" style="left:1682.47px;top:338.92px;font-size:12.5px;line-height:12.5px;font-weight:400;color:#d2d2d2;transform:scaleX(0.9333);transform-origin:0 0;">Fläche</div><div class="t" style="left:1682.39px;top:370.12px;font-size:12.5px;line-height:12.5px;font-weight:400;color:#e6e6e6;transform:scaleX(1.0111);transform-origin:0 0;">Kontur</div><div class="t" style="left:1682.40px;top:402.72px;font-size:12.5px;line-height:12.5px;font-weight:400;color:#e6e6e6;">Deckkraft</div><div class="t" style="left:1761.03px;top:401.34px;font-size:12px;line-height:12px;font-weight:400;color:#eeeeee;transform:scaleX(0.9655);transform-origin:0 0;">100%</div><div class="t" style="left:1645.40px;top:440.00px;font-size:13px;line-height:13px;font-weight:400;color:#bdbdbd;transform:scaleX(1.4167);transform-origin:0 0;font-style:italic;font-family:'Liberation Serif',serif">fx.</div><div class="t" style="left:1649.30px;top:498.92px;font-size:12.5px;line-height:12.5px;font-weight:400;color:#d2d2d2;transform:scaleX(1.0052);transform-origin:0 0;">Ausrichten</div><div class="t" style="left:1648.32px;top:592.72px;font-size:12.5px;line-height:12.5px;font-weight:400;color:#d2d2d2;transform:scaleX(0.9821);transform-origin:0 0;">Pathfinder</div><div class="t" style="left:1818.60px;top:619.92px;font-size:12.5px;line-height:12.5px;font-weight:400;color:#838383;">Umwandeln</div><div class="t" style="left:1648.31px;top:683.12px;font-size:12.5px;line-height:12.5px;font-weight:400;color:#d2d2d2;transform:scaleX(0.9851);transform-origin:0 0;">Schnellaktionen</div><div class="t" style="left:1729.10px;top:712.82px;font-size:12.5px;line-height:12.5px;font-weight:700;color:#eaeaea;transform:scaleX(0.9020);transform-origin:0 0;">Pfad verschieben</div><div class="t" style="left:1714.60px;top:747.82px;font-size:12.5px;line-height:12.5px;font-weight:700;color:#eaeaea;transform:scaleX(0.9149);transform-origin:0 0;">Gruppierung aufheben</div><div class="t" style="left:1746.27px;top:781.92px;font-size:12.5px;line-height:12.5px;font-weight:700;color:#eaeaea;transform:scaleX(0.9344);transform-origin:0 0;">Neu färben</div><div class="t" style="left:1688.30px;top:816.92px;font-size:12.5px;line-height:12.5px;font-weight:700;color:#eaeaea;transform:scaleX(0.9024);transform-origin:0 0;">Globale Bearbeitung starten</div><div class="t" style="left:1712.40px;top:851.82px;font-size:12.5px;line-height:12.5px;font-weight:700;color:#eaeaea;transform:scaleX(0.9114);transform-origin:0 0;">Generative Formfüllung</div><div class="t" style="left:1724.80px;top:886.42px;font-size:12.5px;line-height:12.5px;font-weight:700;color:#eaeaea;transform:scaleX(0.8931);transform-origin:0 0;">Generatives Erweitern</div><div class="t" style="left:113.02px;top:899.62px;font-size:12.5px;line-height:12.5px;font-weight:400;color:#d2d2d2;transform:scaleX(0.9833);transform-origin:0 0;">Objekt durch <b>Klicken</b> auswählen.&nbsp;&nbsp;|&nbsp;&nbsp;Mehrere Objekte mit <b>Umschalt+Klicken</b> auswählen.&nbsp;&nbsp;|&nbsp;&nbsp;<b>Wahl+Ziehen</b> des Objekts, um es zu duplizieren</div><div class="t" style="left:87.66px;top:924.92px;font-size:12.5px;line-height:12.5px;font-weight:400;color:#eeeeee;transform:scaleX(0.9390);transform-origin:0 0;">31,41%</div><div class="t" style="left:170.00px;top:924.92px;font-size:12.5px;line-height:12.5px;font-weight:400;color:#eeeeee;transform:scaleX(1.0455);transform-origin:0 0;">0°</div><div class="t" style="left:292.00px;top:924.92px;font-size:12.5px;line-height:12.5px;font-weight:400;color:#eeeeee;">1</div><div class="t" style="left:490.00px;top:924.92px;font-size:12.5px;line-height:12.5px;font-weight:400;color:#d2d2d2;transform:scaleX(0.9574);transform-origin:0 0;">Auswahl</div>
</body></html>
